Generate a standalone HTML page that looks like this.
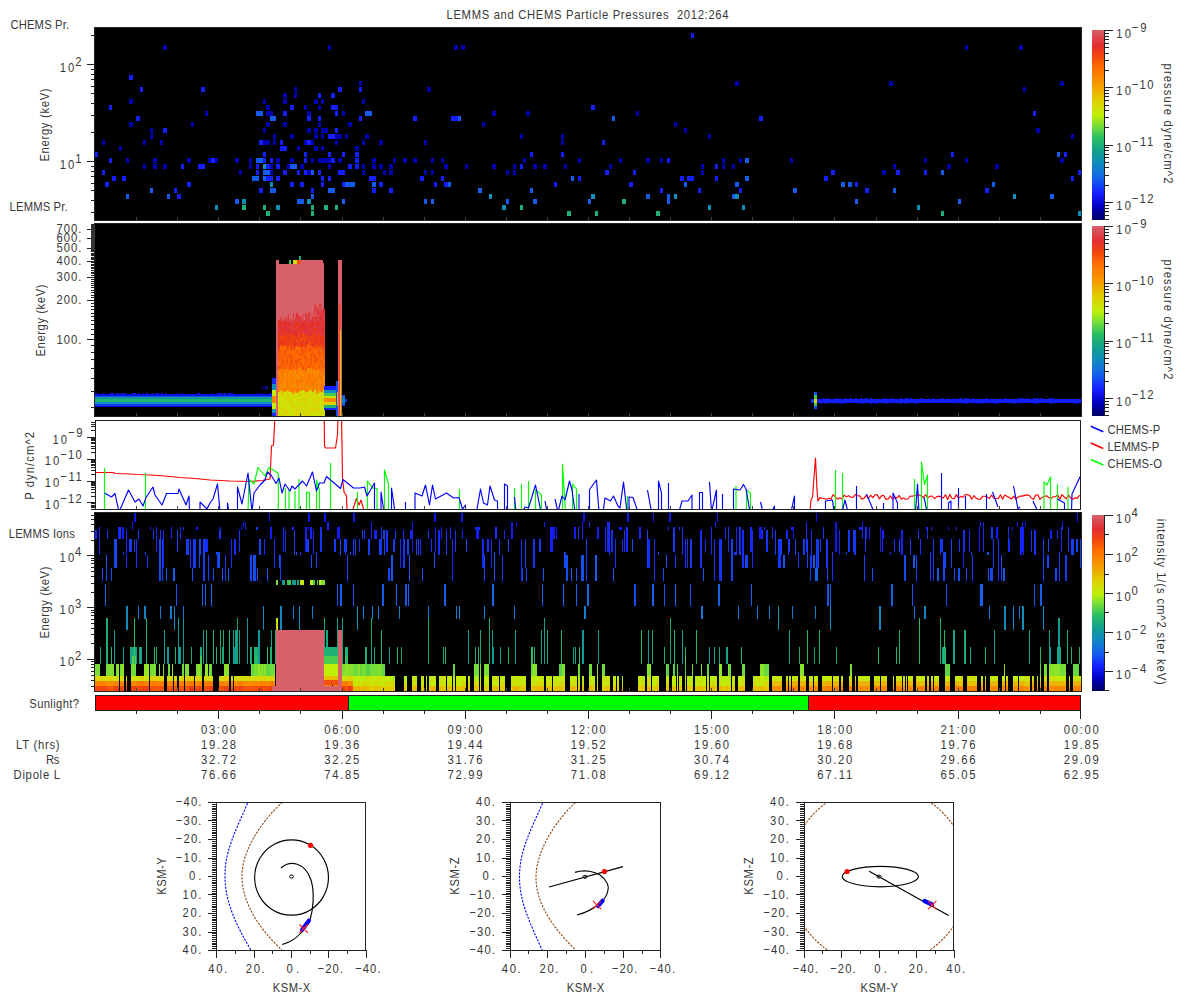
<!DOCTYPE html>
<html><head><meta charset="utf-8"><title>LEMMS and CHEMS Particle Pressures</title>
<style>html,body{margin:0;padding:0;background:#fff;width:1200px;height:1000px;overflow:hidden}
svg{display:block} text{font-family:"Liberation Sans", sans-serif;}</style></head>
<body><svg width="1200" height="1000" viewBox="0 0 1200 1000" shape-rendering="crispEdges" font-family="Liberation Sans, sans-serif"><defs><linearGradient id="cbar" x1="0" y1="0" x2="0" y2="1"><stop offset="0.000" stop-color="#d8606a"/><stop offset="0.080" stop-color="#e12d32"/><stop offset="0.130" stop-color="#f0410f"/><stop offset="0.200" stop-color="#ff6e00"/><stop offset="0.290" stop-color="#f59b00"/><stop offset="0.370" stop-color="#e1cd00"/><stop offset="0.450" stop-color="#bef00a"/><stop offset="0.510" stop-color="#6edc3c"/><stop offset="0.570" stop-color="#28be64"/><stop offset="0.640" stop-color="#10a08c"/><stop offset="0.700" stop-color="#108cbe"/><stop offset="0.780" stop-color="#1464eb"/><stop offset="0.860" stop-color="#141eff"/><stop offset="0.930" stop-color="#0000be"/><stop offset="1.000" stop-color="#000064"/></linearGradient><clipPath id="c3"><rect x="96" y="421" width="984" height="88"/></clipPath><clipPath id="o1"><rect x="217" y="803" width="148" height="147"/></clipPath><clipPath id="o2"><rect x="510.5" y="803" width="149.0" height="147"/></clipPath><clipPath id="o3"><rect x="804.5" y="803" width="148.5" height="147"/></clipPath></defs><text x="0" y="0" transform="translate(446.50,19.30) scale(0.88,1)" font-size="12.8" text-anchor="start" fill="#383838" textLength="320.45" lengthAdjust="spacing" >LEMMS and CHEMS Particle Pressures&#160;&#160;2012:264</text>
<text x="0" y="0" transform="translate(10.40,28.70) scale(0.88,1)" font-size="12.8" text-anchor="start" fill="#383838" textLength="66.82" lengthAdjust="spacing" >CHEMS Pr.</text>
<text x="0" y="0" transform="translate(9.60,210.80) scale(0.88,1)" font-size="12.8" text-anchor="start" fill="#383838" textLength="65.91" lengthAdjust="spacing" >LEMMS Pr.</text>
<rect x="95.00" y="28.00" width="986.00" height="192.00" fill="#000" />
<rect x="163.47" y="45.29" width="3.42" height="5.00" fill="#0000b1" />
<rect x="327.81" y="45.29" width="3.42" height="5.00" fill="#0000b1" />
<rect x="129.24" y="74.94" width="3.42" height="5.00" fill="#141eff" />
<rect x="139.51" y="86.80" width="3.42" height="5.00" fill="#141eff" />
<rect x="201.13" y="86.80" width="3.42" height="5.00" fill="#141eff" />
<rect x="293.57" y="86.80" width="3.42" height="5.00" fill="#0000b1" />
<rect x="338.08" y="86.80" width="3.42" height="5.00" fill="#141eff" />
<rect x="293.57" y="92.73" width="3.42" height="5.00" fill="#0000b1" />
<rect x="283.30" y="92.73" width="3.42" height="5.00" fill="#0000b1" />
<rect x="317.53" y="92.73" width="3.42" height="5.00" fill="#141eff" />
<rect x="331.23" y="92.73" width="3.42" height="5.00" fill="#141eff" />
<rect x="129.24" y="98.66" width="3.42" height="5.00" fill="#0000b1" />
<rect x="262.76" y="98.66" width="3.42" height="5.00" fill="#0000b1" />
<rect x="283.30" y="98.66" width="3.42" height="5.00" fill="#0000b1" />
<rect x="314.11" y="98.66" width="3.42" height="5.00" fill="#0000b1" />
<rect x="320.96" y="98.66" width="3.42" height="5.00" fill="#0000b1" />
<rect x="108.69" y="104.59" width="3.42" height="5.00" fill="#141eff" />
<rect x="266.18" y="104.59" width="3.42" height="5.00" fill="#0000b1" />
<rect x="290.15" y="104.59" width="3.42" height="5.00" fill="#141eff" />
<rect x="303.84" y="104.59" width="3.42" height="5.00" fill="#0000b1" />
<rect x="317.53" y="104.59" width="3.42" height="5.00" fill="#0000b1" />
<rect x="331.23" y="104.59" width="3.42" height="5.00" fill="#141eff" />
<rect x="334.65" y="104.59" width="3.42" height="5.00" fill="#141eff" />
<rect x="204.56" y="110.52" width="3.42" height="5.00" fill="#0000b1" />
<rect x="255.91" y="110.52" width="3.42" height="5.00" fill="#145bee" />
<rect x="259.33" y="110.52" width="3.42" height="5.00" fill="#145bee" />
<rect x="266.18" y="110.52" width="3.42" height="5.00" fill="#0000b1" />
<rect x="269.60" y="110.52" width="3.42" height="5.00" fill="#0000b1" />
<rect x="283.30" y="110.52" width="3.42" height="5.00" fill="#141eff" />
<rect x="307.26" y="110.52" width="3.42" height="5.00" fill="#0000b1" />
<rect x="334.65" y="110.52" width="3.42" height="5.00" fill="#141eff" />
<rect x="341.50" y="110.52" width="3.42" height="5.00" fill="#0000b1" />
<rect x="136.08" y="116.45" width="3.42" height="5.00" fill="#141eff" />
<rect x="269.60" y="116.45" width="3.42" height="5.00" fill="#145bee" />
<rect x="273.03" y="116.45" width="3.42" height="5.00" fill="#145bee" />
<rect x="307.26" y="116.45" width="3.42" height="5.00" fill="#141eff" />
<rect x="317.53" y="116.45" width="3.42" height="5.00" fill="#141eff" />
<rect x="129.24" y="122.38" width="3.42" height="5.00" fill="#0000b1" />
<rect x="190.86" y="122.38" width="3.42" height="5.00" fill="#0000b1" />
<rect x="266.18" y="122.38" width="3.42" height="5.00" fill="#0000b1" />
<rect x="283.30" y="122.38" width="3.42" height="5.00" fill="#0000b1" />
<rect x="317.53" y="122.38" width="3.42" height="5.00" fill="#0000b1" />
<rect x="149.78" y="128.31" width="3.42" height="5.00" fill="#0000b1" />
<rect x="163.47" y="128.31" width="3.42" height="5.00" fill="#141eff" />
<rect x="262.76" y="128.31" width="3.42" height="5.00" fill="#0000b1" />
<rect x="307.26" y="128.31" width="3.42" height="5.00" fill="#0000b1" />
<rect x="314.11" y="128.31" width="3.42" height="5.00" fill="#0000b1" />
<rect x="320.96" y="128.31" width="3.42" height="5.00" fill="#0000b1" />
<rect x="324.38" y="128.31" width="3.42" height="5.00" fill="#0000b1" />
<rect x="334.65" y="128.31" width="3.42" height="5.00" fill="#141eff" />
<rect x="149.78" y="134.24" width="3.42" height="5.00" fill="#0000b1" />
<rect x="273.03" y="134.24" width="3.42" height="5.00" fill="#0000b1" />
<rect x="290.15" y="134.24" width="3.42" height="5.00" fill="#0000b1" />
<rect x="314.11" y="134.24" width="3.42" height="5.00" fill="#0000b1" />
<rect x="320.96" y="134.24" width="3.42" height="5.00" fill="#0000b1" />
<rect x="327.81" y="134.24" width="3.42" height="5.00" fill="#141eff" />
<rect x="331.23" y="134.24" width="3.42" height="5.00" fill="#141eff" />
<rect x="334.65" y="134.24" width="3.42" height="5.00" fill="#0000b1" />
<rect x="338.08" y="134.24" width="3.42" height="5.00" fill="#0000b1" />
<rect x="101.85" y="140.17" width="3.42" height="5.00" fill="#0000b1" />
<rect x="142.93" y="140.17" width="3.42" height="5.00" fill="#0000b1" />
<rect x="160.05" y="140.17" width="3.42" height="5.00" fill="#0000b1" />
<rect x="259.33" y="140.17" width="3.42" height="5.00" fill="#141eff" />
<rect x="262.76" y="140.17" width="3.42" height="5.00" fill="#0000b1" />
<rect x="266.18" y="140.17" width="3.42" height="5.00" fill="#0000b1" />
<rect x="273.03" y="140.17" width="3.42" height="5.00" fill="#0000b1" />
<rect x="279.88" y="140.17" width="3.42" height="5.00" fill="#141eff" />
<rect x="303.84" y="140.17" width="3.42" height="5.00" fill="#0000b1" />
<rect x="307.26" y="140.17" width="3.42" height="5.00" fill="#141eff" />
<rect x="310.69" y="140.17" width="3.42" height="5.00" fill="#0000b1" />
<rect x="334.65" y="140.17" width="3.42" height="5.00" fill="#0000b1" />
<rect x="118.97" y="146.10" width="3.42" height="5.00" fill="#0000b1" />
<rect x="279.88" y="146.10" width="3.42" height="5.00" fill="#141eff" />
<rect x="283.30" y="146.10" width="3.42" height="5.00" fill="#141eff" />
<rect x="296.99" y="146.10" width="3.42" height="5.00" fill="#0000b1" />
<rect x="314.11" y="146.10" width="3.42" height="5.00" fill="#0000b1" />
<rect x="320.96" y="146.10" width="3.42" height="5.00" fill="#0000b1" />
<rect x="95.00" y="152.03" width="3.42" height="5.00" fill="#141eff" />
<rect x="262.76" y="152.03" width="3.42" height="5.00" fill="#141eff" />
<rect x="303.84" y="152.03" width="3.42" height="5.00" fill="#141eff" />
<rect x="327.81" y="152.03" width="3.42" height="5.00" fill="#141eff" />
<rect x="341.50" y="152.03" width="3.42" height="5.00" fill="#141eff" />
<rect x="108.69" y="157.96" width="3.42" height="5.00" fill="#141eff" />
<rect x="125.81" y="157.96" width="3.42" height="5.00" fill="#0000b1" />
<rect x="153.20" y="157.96" width="3.42" height="5.00" fill="#0000b1" />
<rect x="187.44" y="157.96" width="3.42" height="5.00" fill="#0000b1" />
<rect x="207.98" y="157.96" width="3.42" height="5.00" fill="#0000b1" />
<rect x="211.40" y="157.96" width="3.42" height="5.00" fill="#141eff" />
<rect x="214.83" y="157.96" width="3.42" height="5.00" fill="#0000b1" />
<rect x="235.37" y="157.96" width="3.42" height="5.00" fill="#0000b1" />
<rect x="249.06" y="157.96" width="3.42" height="5.00" fill="#0000b1" />
<rect x="255.91" y="157.96" width="3.42" height="5.00" fill="#145bee" />
<rect x="259.33" y="157.96" width="3.42" height="5.00" fill="#145bee" />
<rect x="262.76" y="157.96" width="3.42" height="5.00" fill="#141eff" />
<rect x="269.60" y="157.96" width="3.42" height="5.00" fill="#141eff" />
<rect x="276.45" y="157.96" width="3.42" height="5.00" fill="#0000b1" />
<rect x="290.15" y="157.96" width="3.42" height="5.00" fill="#0000b1" />
<rect x="303.84" y="157.96" width="3.42" height="5.00" fill="#141eff" />
<rect x="310.69" y="157.96" width="3.42" height="5.00" fill="#0000b1" />
<rect x="317.53" y="157.96" width="3.42" height="5.00" fill="#0000b1" />
<rect x="320.96" y="157.96" width="3.42" height="5.00" fill="#0000b1" />
<rect x="324.38" y="157.96" width="3.42" height="5.00" fill="#0000b1" />
<rect x="327.81" y="157.96" width="3.42" height="5.00" fill="#0000b1" />
<rect x="331.23" y="157.96" width="3.42" height="5.00" fill="#141eff" />
<rect x="338.08" y="157.96" width="3.42" height="5.00" fill="#0000b1" />
<rect x="142.93" y="163.89" width="3.42" height="5.00" fill="#0000b1" />
<rect x="153.20" y="163.89" width="3.42" height="5.00" fill="#0000b1" />
<rect x="163.47" y="163.89" width="3.42" height="5.00" fill="#0000b1" />
<rect x="180.59" y="163.89" width="3.42" height="5.00" fill="#141eff" />
<rect x="197.71" y="163.89" width="3.42" height="5.00" fill="#141eff" />
<rect x="201.13" y="163.89" width="3.42" height="5.00" fill="#141eff" />
<rect x="249.06" y="163.89" width="3.42" height="5.00" fill="#0000b1" />
<rect x="255.91" y="163.89" width="3.42" height="5.00" fill="#141eff" />
<rect x="262.76" y="163.89" width="3.42" height="5.00" fill="#108fb6" />
<rect x="266.18" y="163.89" width="3.42" height="5.00" fill="#141eff" />
<rect x="269.60" y="163.89" width="3.42" height="5.00" fill="#0000b1" />
<rect x="276.45" y="163.89" width="3.42" height="5.00" fill="#141eff" />
<rect x="286.72" y="163.89" width="3.42" height="5.00" fill="#0000b1" />
<rect x="290.15" y="163.89" width="3.42" height="5.00" fill="#145bee" />
<rect x="293.57" y="163.89" width="3.42" height="5.00" fill="#145bee" />
<rect x="300.42" y="163.89" width="3.42" height="5.00" fill="#0000b1" />
<rect x="327.81" y="163.89" width="3.42" height="5.00" fill="#0000b1" />
<rect x="101.85" y="169.82" width="3.42" height="5.00" fill="#141eff" />
<rect x="238.79" y="169.82" width="3.42" height="5.00" fill="#0000b1" />
<rect x="255.91" y="169.82" width="3.42" height="5.00" fill="#141eff" />
<rect x="262.76" y="169.82" width="3.42" height="5.00" fill="#145bee" />
<rect x="266.18" y="169.82" width="3.42" height="5.00" fill="#145bee" />
<rect x="269.60" y="169.82" width="3.42" height="5.00" fill="#0000b1" />
<rect x="283.30" y="169.82" width="3.42" height="5.00" fill="#141eff" />
<rect x="296.99" y="169.82" width="3.42" height="5.00" fill="#141eff" />
<rect x="303.84" y="169.82" width="3.42" height="5.00" fill="#141eff" />
<rect x="307.26" y="169.82" width="3.42" height="5.00" fill="#0000b1" />
<rect x="310.69" y="169.82" width="3.42" height="5.00" fill="#145bee" />
<rect x="317.53" y="169.82" width="3.42" height="5.00" fill="#141eff" />
<rect x="338.08" y="169.82" width="3.42" height="5.00" fill="#141eff" />
<rect x="341.50" y="169.82" width="3.42" height="5.00" fill="#141eff" />
<rect x="112.12" y="175.75" width="3.42" height="5.00" fill="#141eff" />
<rect x="122.39" y="175.75" width="3.42" height="5.00" fill="#141eff" />
<rect x="252.49" y="175.75" width="3.42" height="5.00" fill="#145bee" />
<rect x="255.91" y="175.75" width="3.42" height="5.00" fill="#145bee" />
<rect x="262.76" y="175.75" width="3.42" height="5.00" fill="#145bee" />
<rect x="266.18" y="175.75" width="3.42" height="5.00" fill="#141eff" />
<rect x="269.60" y="175.75" width="3.42" height="5.00" fill="#141eff" />
<rect x="276.45" y="175.75" width="3.42" height="5.00" fill="#141eff" />
<rect x="320.96" y="175.75" width="3.42" height="5.00" fill="#141eff" />
<rect x="327.81" y="175.75" width="3.42" height="5.00" fill="#141eff" />
<rect x="105.27" y="181.68" width="3.42" height="5.00" fill="#141eff" />
<rect x="187.44" y="181.68" width="3.42" height="5.00" fill="#141eff" />
<rect x="269.60" y="181.68" width="3.42" height="5.00" fill="#108fb6" />
<rect x="290.15" y="181.68" width="3.42" height="5.00" fill="#141eff" />
<rect x="300.42" y="181.68" width="3.42" height="5.00" fill="#141eff" />
<rect x="320.96" y="181.68" width="3.42" height="5.00" fill="#141eff" />
<rect x="341.50" y="181.68" width="3.42" height="5.00" fill="#141eff" />
<rect x="149.78" y="187.61" width="3.42" height="5.00" fill="#145bee" />
<rect x="173.74" y="187.61" width="3.42" height="5.00" fill="#141eff" />
<rect x="259.33" y="187.61" width="3.42" height="5.00" fill="#141eff" />
<rect x="269.60" y="187.61" width="3.42" height="5.00" fill="#145bee" />
<rect x="273.03" y="187.61" width="3.42" height="5.00" fill="#145bee" />
<rect x="310.69" y="187.61" width="3.42" height="5.00" fill="#141eff" />
<rect x="327.81" y="187.61" width="3.42" height="5.00" fill="#145bee" />
<rect x="331.23" y="187.61" width="3.42" height="5.00" fill="#145bee" />
<rect x="125.81" y="193.54" width="3.42" height="5.00" fill="#145bee" />
<rect x="166.90" y="193.54" width="3.42" height="5.00" fill="#145bee" />
<rect x="177.17" y="193.54" width="3.42" height="5.00" fill="#141eff" />
<rect x="310.69" y="193.54" width="3.42" height="5.00" fill="#145bee" />
<rect x="235.37" y="199.47" width="3.42" height="5.00" fill="#145bee" />
<rect x="242.22" y="199.47" width="3.42" height="5.00" fill="#108fb6" />
<rect x="296.99" y="199.47" width="3.42" height="5.00" fill="#145bee" />
<rect x="300.42" y="199.47" width="3.42" height="5.00" fill="#145bee" />
<rect x="307.26" y="199.47" width="3.42" height="5.00" fill="#108fb6" />
<rect x="341.50" y="199.47" width="3.42" height="5.00" fill="#145bee" />
<rect x="214.83" y="205.40" width="3.42" height="5.00" fill="#108fb6" />
<rect x="242.22" y="205.40" width="3.42" height="5.00" fill="#1eb175" />
<rect x="262.76" y="205.40" width="3.42" height="5.00" fill="#1eb175" />
<rect x="276.45" y="205.40" width="3.42" height="5.00" fill="#108fb6" />
<rect x="310.69" y="205.40" width="3.42" height="5.00" fill="#1eb175" />
<rect x="324.38" y="205.40" width="3.42" height="5.00" fill="#1eb175" />
<rect x="334.65" y="205.40" width="3.42" height="5.00" fill="#1eb175" />
<rect x="266.18" y="211.33" width="3.42" height="5.00" fill="#1eb175" />
<rect x="310.69" y="211.33" width="3.42" height="5.00" fill="#1eb175" />
<rect x="454.48" y="45.29" width="3.42" height="5.00" fill="#0000b1" />
<rect x="461.33" y="45.29" width="3.42" height="5.00" fill="#0000b1" />
<rect x="358.62" y="80.87" width="3.42" height="5.00" fill="#0000b1" />
<rect x="358.62" y="86.80" width="3.42" height="5.00" fill="#141eff" />
<rect x="427.09" y="86.80" width="3.42" height="5.00" fill="#0000b1" />
<rect x="362.04" y="98.66" width="3.42" height="5.00" fill="#0000b1" />
<rect x="591.42" y="104.59" width="3.42" height="5.00" fill="#141eff" />
<rect x="365.47" y="110.52" width="3.42" height="5.00" fill="#145bee" />
<rect x="368.89" y="110.52" width="3.42" height="5.00" fill="#145bee" />
<rect x="492.14" y="110.52" width="3.42" height="5.00" fill="#0000b1" />
<rect x="526.38" y="110.52" width="3.42" height="5.00" fill="#0000b1" />
<rect x="358.62" y="116.45" width="3.42" height="5.00" fill="#141eff" />
<rect x="413.40" y="116.45" width="3.42" height="5.00" fill="#141eff" />
<rect x="451.06" y="116.45" width="3.42" height="5.00" fill="#141eff" />
<rect x="454.48" y="116.45" width="3.42" height="5.00" fill="#141eff" />
<rect x="457.90" y="116.45" width="3.42" height="5.00" fill="#145bee" />
<rect x="348.35" y="122.38" width="3.42" height="5.00" fill="#0000b1" />
<rect x="481.87" y="122.38" width="3.42" height="5.00" fill="#0000b1" />
<rect x="344.92" y="134.24" width="3.42" height="5.00" fill="#0000b1" />
<rect x="365.47" y="134.24" width="3.42" height="5.00" fill="#0000b1" />
<rect x="519.53" y="134.24" width="3.42" height="5.00" fill="#0000b1" />
<rect x="560.61" y="134.24" width="3.42" height="5.00" fill="#0000b1" />
<rect x="362.04" y="140.17" width="3.42" height="5.00" fill="#0000b1" />
<rect x="379.16" y="140.17" width="3.42" height="5.00" fill="#0000b1" />
<rect x="423.67" y="140.17" width="3.42" height="5.00" fill="#0000b1" />
<rect x="560.61" y="140.17" width="3.42" height="5.00" fill="#0000b1" />
<rect x="355.19" y="146.10" width="3.42" height="5.00" fill="#0000b1" />
<rect x="355.19" y="152.03" width="3.42" height="5.00" fill="#141eff" />
<rect x="529.80" y="152.03" width="3.42" height="5.00" fill="#141eff" />
<rect x="560.61" y="152.03" width="3.42" height="5.00" fill="#141eff" />
<rect x="355.19" y="157.96" width="3.42" height="5.00" fill="#141eff" />
<rect x="372.31" y="157.96" width="3.42" height="5.00" fill="#0000b1" />
<rect x="392.85" y="157.96" width="3.42" height="5.00" fill="#0000b1" />
<rect x="403.12" y="157.96" width="3.42" height="5.00" fill="#0000b1" />
<rect x="413.40" y="157.96" width="3.42" height="5.00" fill="#0000b1" />
<rect x="430.51" y="157.96" width="3.42" height="5.00" fill="#0000b1" />
<rect x="440.78" y="157.96" width="3.42" height="5.00" fill="#0000b1" />
<rect x="522.95" y="157.96" width="3.42" height="5.00" fill="#0000b1" />
<rect x="577.73" y="157.96" width="3.42" height="5.00" fill="#0000b1" />
<rect x="348.35" y="163.89" width="3.42" height="5.00" fill="#141eff" />
<rect x="355.19" y="163.89" width="3.42" height="5.00" fill="#141eff" />
<rect x="362.04" y="163.89" width="3.42" height="5.00" fill="#0000b1" />
<rect x="372.31" y="163.89" width="3.42" height="5.00" fill="#0000b1" />
<rect x="379.16" y="163.89" width="3.42" height="5.00" fill="#0000b1" />
<rect x="389.43" y="163.89" width="3.42" height="5.00" fill="#0000b1" />
<rect x="444.21" y="163.89" width="3.42" height="5.00" fill="#0000b1" />
<rect x="464.75" y="163.89" width="3.42" height="5.00" fill="#0000b1" />
<rect x="492.14" y="163.89" width="3.42" height="5.00" fill="#0000b1" />
<rect x="512.68" y="163.89" width="3.42" height="5.00" fill="#0000b1" />
<rect x="519.53" y="163.89" width="3.42" height="5.00" fill="#141eff" />
<rect x="533.22" y="163.89" width="3.42" height="5.00" fill="#0000b1" />
<rect x="543.49" y="163.89" width="3.42" height="5.00" fill="#0000b1" />
<rect x="564.03" y="163.89" width="3.42" height="5.00" fill="#0000b1" />
<rect x="362.04" y="169.82" width="3.42" height="5.00" fill="#0000b1" />
<rect x="382.58" y="169.82" width="3.42" height="5.00" fill="#0000b1" />
<rect x="389.43" y="169.82" width="3.42" height="5.00" fill="#0000b1" />
<rect x="423.67" y="169.82" width="3.42" height="5.00" fill="#0000b1" />
<rect x="430.51" y="169.82" width="3.42" height="5.00" fill="#0000b1" />
<rect x="505.83" y="169.82" width="3.42" height="5.00" fill="#0000b1" />
<rect x="512.68" y="169.82" width="3.42" height="5.00" fill="#0000b1" />
<rect x="368.89" y="175.75" width="3.42" height="5.00" fill="#141eff" />
<rect x="372.31" y="175.75" width="3.42" height="5.00" fill="#141eff" />
<rect x="420.24" y="175.75" width="3.42" height="5.00" fill="#141eff" />
<rect x="440.78" y="175.75" width="3.42" height="5.00" fill="#141eff" />
<rect x="570.88" y="175.75" width="3.42" height="5.00" fill="#145bee" />
<rect x="577.73" y="175.75" width="3.42" height="5.00" fill="#141eff" />
<rect x="344.92" y="181.68" width="3.42" height="5.00" fill="#145bee" />
<rect x="348.35" y="181.68" width="3.42" height="5.00" fill="#145bee" />
<rect x="351.77" y="181.68" width="3.42" height="5.00" fill="#145bee" />
<rect x="372.31" y="181.68" width="3.42" height="5.00" fill="#145bee" />
<rect x="379.16" y="181.68" width="3.42" height="5.00" fill="#141eff" />
<rect x="433.94" y="181.68" width="3.42" height="5.00" fill="#141eff" />
<rect x="444.21" y="181.68" width="3.42" height="5.00" fill="#141eff" />
<rect x="447.63" y="181.68" width="3.42" height="5.00" fill="#145bee" />
<rect x="553.76" y="181.68" width="3.42" height="5.00" fill="#141eff" />
<rect x="372.31" y="187.61" width="3.42" height="5.00" fill="#141eff" />
<rect x="389.43" y="187.61" width="3.42" height="5.00" fill="#141eff" />
<rect x="478.44" y="187.61" width="3.42" height="5.00" fill="#145bee" />
<rect x="529.80" y="187.61" width="3.42" height="5.00" fill="#145bee" />
<rect x="488.72" y="193.54" width="3.42" height="5.00" fill="#108fb6" />
<rect x="591.42" y="193.54" width="3.42" height="5.00" fill="#108fb6" />
<rect x="423.67" y="199.47" width="3.42" height="5.00" fill="#145bee" />
<rect x="430.51" y="199.47" width="3.42" height="5.00" fill="#145bee" />
<rect x="505.83" y="199.47" width="3.42" height="5.00" fill="#145bee" />
<rect x="533.22" y="199.47" width="3.42" height="5.00" fill="#145bee" />
<rect x="588.00" y="199.47" width="3.42" height="5.00" fill="#145bee" />
<rect x="502.41" y="205.40" width="3.42" height="5.00" fill="#108fb6" />
<rect x="519.53" y="205.40" width="3.42" height="5.00" fill="#1eb175" />
<rect x="567.46" y="211.33" width="3.42" height="5.00" fill="#1eb175" />
<rect x="690.71" y="33.43" width="3.42" height="5.00" fill="#141eff" />
<rect x="735.22" y="80.87" width="3.42" height="5.00" fill="#0000b1" />
<rect x="635.93" y="110.52" width="3.42" height="5.00" fill="#0000b1" />
<rect x="611.97" y="116.45" width="3.42" height="5.00" fill="#145bee" />
<rect x="759.18" y="116.45" width="3.42" height="5.00" fill="#141eff" />
<rect x="673.59" y="122.38" width="3.42" height="5.00" fill="#0000b1" />
<rect x="683.86" y="128.31" width="3.42" height="5.00" fill="#0000b1" />
<rect x="707.83" y="134.24" width="3.42" height="5.00" fill="#0000b1" />
<rect x="601.69" y="140.17" width="3.42" height="5.00" fill="#141eff" />
<rect x="618.81" y="157.96" width="3.42" height="5.00" fill="#0000b1" />
<rect x="646.20" y="157.96" width="3.42" height="5.00" fill="#0000b1" />
<rect x="659.90" y="157.96" width="3.42" height="5.00" fill="#0000b1" />
<rect x="666.74" y="157.96" width="3.42" height="5.00" fill="#141eff" />
<rect x="721.52" y="157.96" width="3.42" height="5.00" fill="#0000b1" />
<rect x="738.64" y="157.96" width="3.42" height="5.00" fill="#0000b1" />
<rect x="745.49" y="157.96" width="3.42" height="5.00" fill="#145bee" />
<rect x="789.99" y="157.96" width="3.42" height="5.00" fill="#0000b1" />
<rect x="608.54" y="163.89" width="3.42" height="5.00" fill="#0000b1" />
<rect x="700.98" y="163.89" width="3.42" height="5.00" fill="#0000b1" />
<rect x="714.67" y="163.89" width="3.42" height="5.00" fill="#141eff" />
<rect x="721.52" y="163.89" width="3.42" height="5.00" fill="#0000b1" />
<rect x="731.79" y="163.89" width="3.42" height="5.00" fill="#0000b1" />
<rect x="605.12" y="169.82" width="3.42" height="5.00" fill="#141eff" />
<rect x="632.51" y="169.82" width="3.42" height="5.00" fill="#141eff" />
<rect x="700.98" y="169.82" width="3.42" height="5.00" fill="#0000b1" />
<rect x="831.08" y="169.82" width="3.42" height="5.00" fill="#141eff" />
<rect x="680.44" y="175.75" width="3.42" height="5.00" fill="#141eff" />
<rect x="687.28" y="175.75" width="3.42" height="5.00" fill="#141eff" />
<rect x="690.71" y="175.75" width="3.42" height="5.00" fill="#141eff" />
<rect x="714.67" y="175.75" width="3.42" height="5.00" fill="#141eff" />
<rect x="745.49" y="175.75" width="3.42" height="5.00" fill="#145bee" />
<rect x="824.23" y="175.75" width="3.42" height="5.00" fill="#141eff" />
<rect x="629.08" y="181.68" width="3.42" height="5.00" fill="#141eff" />
<rect x="683.86" y="181.68" width="3.42" height="5.00" fill="#145bee" />
<rect x="735.22" y="181.68" width="3.42" height="5.00" fill="#145bee" />
<rect x="841.35" y="181.68" width="3.42" height="5.00" fill="#145bee" />
<rect x="659.90" y="187.61" width="3.42" height="5.00" fill="#141eff" />
<rect x="697.56" y="187.61" width="3.42" height="5.00" fill="#141eff" />
<rect x="738.64" y="187.61" width="3.42" height="5.00" fill="#141eff" />
<rect x="793.42" y="187.61" width="3.42" height="5.00" fill="#145bee" />
<rect x="646.20" y="193.54" width="3.42" height="5.00" fill="#145bee" />
<rect x="666.74" y="193.54" width="3.42" height="5.00" fill="#145bee" />
<rect x="673.59" y="193.54" width="3.42" height="5.00" fill="#108fb6" />
<rect x="731.79" y="193.54" width="3.42" height="5.00" fill="#145bee" />
<rect x="735.22" y="193.54" width="3.42" height="5.00" fill="#108fb6" />
<rect x="622.24" y="199.47" width="3.42" height="5.00" fill="#1eb175" />
<rect x="666.74" y="199.47" width="3.42" height="5.00" fill="#145bee" />
<rect x="707.83" y="205.40" width="3.42" height="5.00" fill="#108fb6" />
<rect x="742.06" y="205.40" width="3.42" height="5.00" fill="#108fb6" />
<rect x="594.85" y="211.33" width="3.42" height="5.00" fill="#1eb175" />
<rect x="656.47" y="211.33" width="3.42" height="5.00" fill="#1eb175" />
<rect x="964.60" y="45.29" width="3.42" height="5.00" fill="#0000b1" />
<rect x="1019.38" y="45.29" width="3.42" height="5.00" fill="#0000b1" />
<rect x="889.28" y="80.87" width="3.42" height="5.00" fill="#0000b1" />
<rect x="1060.46" y="80.87" width="3.42" height="5.00" fill="#0000b1" />
<rect x="1022.80" y="86.80" width="3.42" height="5.00" fill="#0000b1" />
<rect x="1033.07" y="110.52" width="3.42" height="5.00" fill="#141eff" />
<rect x="1036.49" y="128.31" width="3.42" height="5.00" fill="#0000b1" />
<rect x="1070.73" y="134.24" width="3.42" height="5.00" fill="#0000b1" />
<rect x="950.90" y="152.03" width="3.42" height="5.00" fill="#141eff" />
<rect x="1057.03" y="152.03" width="3.42" height="5.00" fill="#145bee" />
<rect x="1063.88" y="152.03" width="3.42" height="5.00" fill="#141eff" />
<rect x="923.51" y="157.96" width="3.42" height="5.00" fill="#0000b1" />
<rect x="964.60" y="157.96" width="3.42" height="5.00" fill="#0000b1" />
<rect x="1060.46" y="157.96" width="3.42" height="5.00" fill="#0000b1" />
<rect x="892.70" y="163.89" width="3.42" height="5.00" fill="#0000b1" />
<rect x="947.48" y="163.89" width="3.42" height="5.00" fill="#0000b1" />
<rect x="995.41" y="163.89" width="3.42" height="5.00" fill="#0000b1" />
<rect x="882.43" y="169.82" width="3.42" height="5.00" fill="#0000b1" />
<rect x="896.12" y="169.82" width="3.42" height="5.00" fill="#141eff" />
<rect x="923.51" y="169.82" width="3.42" height="5.00" fill="#141eff" />
<rect x="940.63" y="169.82" width="3.42" height="5.00" fill="#145bee" />
<rect x="1077.58" y="169.82" width="3.42" height="5.00" fill="#141eff" />
<rect x="1070.73" y="175.75" width="3.42" height="5.00" fill="#141eff" />
<rect x="848.19" y="181.68" width="3.42" height="5.00" fill="#145bee" />
<rect x="855.04" y="181.68" width="3.42" height="5.00" fill="#141eff" />
<rect x="991.99" y="181.68" width="3.42" height="5.00" fill="#145bee" />
<rect x="865.31" y="187.61" width="3.42" height="5.00" fill="#141eff" />
<rect x="892.70" y="187.61" width="3.42" height="5.00" fill="#145bee" />
<rect x="985.14" y="187.61" width="3.42" height="5.00" fill="#141eff" />
<rect x="1012.53" y="193.54" width="3.42" height="5.00" fill="#108fb6" />
<rect x="1050.19" y="193.54" width="3.42" height="5.00" fill="#145bee" />
<rect x="855.04" y="199.47" width="3.42" height="5.00" fill="#145bee" />
<rect x="957.75" y="199.47" width="3.42" height="5.00" fill="#145bee" />
<rect x="916.67" y="205.40" width="3.42" height="5.00" fill="#108fb6" />
<rect x="940.63" y="211.33" width="3.42" height="5.00" fill="#1eb175" />
<rect x="1077.58" y="211.33" width="3.42" height="5.00" fill="#108fb6" />
<rect x="94.5" y="27.5" width="987" height="193" fill="none" stroke="#222" stroke-width="1"/>
<line x1="136.5" y1="217" x2="136.5" y2="220" stroke="#444" stroke-width="1"/>
<line x1="177.5" y1="217" x2="177.5" y2="220" stroke="#444" stroke-width="1"/>
<line x1="218.5" y1="217" x2="218.5" y2="220" stroke="#444" stroke-width="1"/>
<line x1="259.5" y1="217" x2="259.5" y2="220" stroke="#444" stroke-width="1"/>
<line x1="300.5" y1="217" x2="300.5" y2="220" stroke="#444" stroke-width="1"/>
<line x1="342.5" y1="217" x2="342.5" y2="220" stroke="#444" stroke-width="1"/>
<line x1="383.5" y1="217" x2="383.5" y2="220" stroke="#444" stroke-width="1"/>
<line x1="424.5" y1="217" x2="424.5" y2="220" stroke="#444" stroke-width="1"/>
<line x1="465.5" y1="217" x2="465.5" y2="220" stroke="#444" stroke-width="1"/>
<line x1="506.5" y1="217" x2="506.5" y2="220" stroke="#444" stroke-width="1"/>
<line x1="547.5" y1="217" x2="547.5" y2="220" stroke="#444" stroke-width="1"/>
<line x1="588.5" y1="217" x2="588.5" y2="220" stroke="#444" stroke-width="1"/>
<line x1="629.5" y1="217" x2="629.5" y2="220" stroke="#444" stroke-width="1"/>
<line x1="670.5" y1="217" x2="670.5" y2="220" stroke="#444" stroke-width="1"/>
<line x1="711.5" y1="217" x2="711.5" y2="220" stroke="#444" stroke-width="1"/>
<line x1="752.5" y1="217" x2="752.5" y2="220" stroke="#444" stroke-width="1"/>
<line x1="793.5" y1="217" x2="793.5" y2="220" stroke="#444" stroke-width="1"/>
<line x1="834.5" y1="217" x2="834.5" y2="220" stroke="#444" stroke-width="1"/>
<line x1="876.5" y1="217" x2="876.5" y2="220" stroke="#444" stroke-width="1"/>
<line x1="917.5" y1="217" x2="917.5" y2="220" stroke="#444" stroke-width="1"/>
<line x1="958.5" y1="217" x2="958.5" y2="220" stroke="#444" stroke-width="1"/>
<line x1="999.5" y1="217" x2="999.5" y2="220" stroke="#444" stroke-width="1"/>
<line x1="1040.5" y1="217" x2="1040.5" y2="220" stroke="#444" stroke-width="1"/>
<line x1="91" y1="212.50" x2="95" y2="212.50" stroke="#222" stroke-width="1"/>
<line x1="91" y1="200.50" x2="95" y2="200.50" stroke="#222" stroke-width="1"/>
<line x1="91" y1="190.50" x2="95" y2="190.50" stroke="#222" stroke-width="1"/>
<line x1="91" y1="183.50" x2="95" y2="183.50" stroke="#222" stroke-width="1"/>
<line x1="91" y1="176.50" x2="95" y2="176.50" stroke="#222" stroke-width="1"/>
<line x1="91" y1="171.50" x2="95" y2="171.50" stroke="#222" stroke-width="1"/>
<line x1="91" y1="166.50" x2="95" y2="166.50" stroke="#222" stroke-width="1"/>
<line x1="87" y1="161.50" x2="95" y2="161.50" stroke="#222" stroke-width="1"/>
<line x1="91" y1="132.50" x2="95" y2="132.50" stroke="#222" stroke-width="1"/>
<line x1="91" y1="115.50" x2="95" y2="115.50" stroke="#222" stroke-width="1"/>
<line x1="91" y1="103.50" x2="95" y2="103.50" stroke="#222" stroke-width="1"/>
<line x1="91" y1="93.50" x2="95" y2="93.50" stroke="#222" stroke-width="1"/>
<line x1="91" y1="86.50" x2="95" y2="86.50" stroke="#222" stroke-width="1"/>
<line x1="91" y1="79.50" x2="95" y2="79.50" stroke="#222" stroke-width="1"/>
<line x1="91" y1="74.50" x2="95" y2="74.50" stroke="#222" stroke-width="1"/>
<line x1="91" y1="69.50" x2="95" y2="69.50" stroke="#222" stroke-width="1"/>
<line x1="87" y1="64.50" x2="95" y2="64.50" stroke="#222" stroke-width="1"/>
<line x1="91" y1="35.50" x2="95" y2="35.50" stroke="#222" stroke-width="1"/>
<text x="0" y="0" transform="translate(59.70,71.90) scale(0.88,1)" font-size="12.8" text-anchor="start" fill="#383838" textLength="16.59" lengthAdjust="spacing" >10</text>
<text x="0" y="0" transform="translate(75.20,65.80) scale(0.88,1)" font-size="12.8" text-anchor="start" fill="#383838" textLength="7.95" lengthAdjust="spacing" >2</text>
<text x="0" y="0" transform="translate(59.70,168.80) scale(0.88,1)" font-size="12.8" text-anchor="start" fill="#383838" textLength="16.59" lengthAdjust="spacing" >10</text>
<text x="0" y="0" transform="translate(75.20,162.70) scale(0.88,1)" font-size="12.8" text-anchor="start" fill="#383838" textLength="7.95" lengthAdjust="spacing" >1</text>
<text x="0" y="0" font-size="12.8" text-anchor="middle" fill="#383838" transform="translate(48.90,125.00) rotate(-90) scale(0.88,1)" textLength="83.18" lengthAdjust="spacing">Energy (keV)</text>
<rect x="1092.00" y="30.00" width="12.00" height="190.00" fill="url(#cbar)" />
<line x1="1104.5" y1="30" x2="1104.5" y2="220" stroke="#222" stroke-width="1"/>
<line x1="1104" y1="30.50" x2="1112.5" y2="30.50" stroke="#222" stroke-width="1"/>
<line x1="1104" y1="87.50" x2="1112.5" y2="87.50" stroke="#222" stroke-width="1"/>
<line x1="1104" y1="70.50" x2="1108.5" y2="70.50" stroke="#222" stroke-width="1"/>
<line x1="1104" y1="60.50" x2="1108.5" y2="60.50" stroke="#222" stroke-width="1"/>
<line x1="1104" y1="53.50" x2="1108.5" y2="53.50" stroke="#222" stroke-width="1"/>
<line x1="1104" y1="47.50" x2="1108.5" y2="47.50" stroke="#222" stroke-width="1"/>
<line x1="1104" y1="43.50" x2="1108.5" y2="43.50" stroke="#222" stroke-width="1"/>
<line x1="1104" y1="39.50" x2="1108.5" y2="39.50" stroke="#222" stroke-width="1"/>
<line x1="1104" y1="36.50" x2="1108.5" y2="36.50" stroke="#222" stroke-width="1"/>
<line x1="1104" y1="33.50" x2="1108.5" y2="33.50" stroke="#222" stroke-width="1"/>
<line x1="1104" y1="145.50" x2="1112.5" y2="145.50" stroke="#222" stroke-width="1"/>
<line x1="1104" y1="127.50" x2="1108.5" y2="127.50" stroke="#222" stroke-width="1"/>
<line x1="1104" y1="117.50" x2="1108.5" y2="117.50" stroke="#222" stroke-width="1"/>
<line x1="1104" y1="110.50" x2="1108.5" y2="110.50" stroke="#222" stroke-width="1"/>
<line x1="1104" y1="105.50" x2="1108.5" y2="105.50" stroke="#222" stroke-width="1"/>
<line x1="1104" y1="100.50" x2="1108.5" y2="100.50" stroke="#222" stroke-width="1"/>
<line x1="1104" y1="96.50" x2="1108.5" y2="96.50" stroke="#222" stroke-width="1"/>
<line x1="1104" y1="93.50" x2="1108.5" y2="93.50" stroke="#222" stroke-width="1"/>
<line x1="1104" y1="90.50" x2="1108.5" y2="90.50" stroke="#222" stroke-width="1"/>
<line x1="1104" y1="202.50" x2="1112.5" y2="202.50" stroke="#222" stroke-width="1"/>
<line x1="1104" y1="185.50" x2="1108.5" y2="185.50" stroke="#222" stroke-width="1"/>
<line x1="1104" y1="175.50" x2="1108.5" y2="175.50" stroke="#222" stroke-width="1"/>
<line x1="1104" y1="167.50" x2="1108.5" y2="167.50" stroke="#222" stroke-width="1"/>
<line x1="1104" y1="162.50" x2="1108.5" y2="162.50" stroke="#222" stroke-width="1"/>
<line x1="1104" y1="157.50" x2="1108.5" y2="157.50" stroke="#222" stroke-width="1"/>
<line x1="1104" y1="154.50" x2="1108.5" y2="154.50" stroke="#222" stroke-width="1"/>
<line x1="1104" y1="150.50" x2="1108.5" y2="150.50" stroke="#222" stroke-width="1"/>
<line x1="1104" y1="147.50" x2="1108.5" y2="147.50" stroke="#222" stroke-width="1"/>
<line x1="1104" y1="219.50" x2="1108.5" y2="219.50" stroke="#222" stroke-width="1"/>
<line x1="1104" y1="215.50" x2="1108.5" y2="215.50" stroke="#222" stroke-width="1"/>
<line x1="1104" y1="211.50" x2="1108.5" y2="211.50" stroke="#222" stroke-width="1"/>
<line x1="1104" y1="208.50" x2="1108.5" y2="208.50" stroke="#222" stroke-width="1"/>
<line x1="1104" y1="205.50" x2="1108.5" y2="205.50" stroke="#222" stroke-width="1"/>
<text x="0" y="0" transform="translate(1116.30,37.60) scale(0.88,1)" font-size="12.8" text-anchor="start" fill="#383838" textLength="16.59" lengthAdjust="spacing" >10</text>
<text x="0" y="0" transform="translate(1131.80,31.50) scale(0.88,1)" font-size="12.8" text-anchor="start" fill="#383838" textLength="16.59" lengthAdjust="spacing" >&#8722;9</text>
<text x="0" y="0" transform="translate(1116.30,94.93) scale(0.88,1)" font-size="12.8" text-anchor="start" fill="#383838" textLength="16.59" lengthAdjust="spacing" >10</text>
<text x="0" y="0" transform="translate(1131.80,88.83) scale(0.88,1)" font-size="12.8" text-anchor="start" fill="#383838" textLength="24.55" lengthAdjust="spacing" >&#8722;10</text>
<text x="0" y="0" transform="translate(1116.30,152.26) scale(0.88,1)" font-size="12.8" text-anchor="start" fill="#383838" textLength="16.59" lengthAdjust="spacing" >10</text>
<text x="0" y="0" transform="translate(1131.80,146.16) scale(0.88,1)" font-size="12.8" text-anchor="start" fill="#383838" textLength="24.55" lengthAdjust="spacing" >&#8722;11</text>
<text x="0" y="0" transform="translate(1116.30,209.59) scale(0.88,1)" font-size="12.8" text-anchor="start" fill="#383838" textLength="16.59" lengthAdjust="spacing" >10</text>
<text x="0" y="0" transform="translate(1131.80,203.49) scale(0.88,1)" font-size="12.8" text-anchor="start" fill="#383838" textLength="24.55" lengthAdjust="spacing" >&#8722;12</text>
<text x="0" y="0" font-size="12.8" text-anchor="middle" fill="#383838" transform="translate(1163.50,123.50) rotate(90) scale(0.88,1)" textLength="136.36" lengthAdjust="spacing">pressure dyne/cm^2</text>
<rect x="95.00" y="224.00" width="986.00" height="192.00" fill="#000" />
<rect x="95.00" y="393.80" width="177.00" height="1.70" fill="#0b11e3" />
<rect x="95.00" y="395.50" width="177.00" height="1.50" fill="#1452f0" />
<rect x="95.00" y="397.00" width="177.00" height="2.00" fill="#10999d" />
<rect x="95.00" y="399.00" width="177.00" height="3.00" fill="#21b56f" />
<rect x="95.00" y="402.00" width="177.00" height="2.00" fill="#108cbe" />
<rect x="95.00" y="404.00" width="177.00" height="1.50" fill="#1438f8" />
<rect x="95.00" y="405.50" width="177.00" height="1.00" fill="#0609d1" />
<rect x="95.00" y="393.00" width="1.50" height="1.20" fill="#0e15ec" />
<rect x="101.80" y="393.00" width="1.50" height="1.20" fill="#0e15ec" />
<rect x="110.30" y="393.00" width="1.50" height="1.20" fill="#0e15ec" />
<rect x="112.00" y="393.00" width="1.50" height="1.20" fill="#0e15ec" />
<rect x="117.10" y="393.00" width="1.50" height="1.20" fill="#0e15ec" />
<rect x="120.50" y="393.00" width="1.50" height="1.20" fill="#0e15ec" />
<rect x="122.20" y="393.00" width="1.50" height="1.20" fill="#0e15ec" />
<rect x="123.90" y="393.00" width="1.50" height="1.20" fill="#0e15ec" />
<rect x="132.40" y="393.00" width="1.50" height="1.20" fill="#0e15ec" />
<rect x="134.10" y="393.00" width="1.50" height="1.20" fill="#0e15ec" />
<rect x="137.50" y="393.00" width="1.50" height="1.20" fill="#0e15ec" />
<rect x="142.60" y="393.00" width="1.50" height="1.20" fill="#0e15ec" />
<rect x="146.00" y="393.00" width="1.50" height="1.20" fill="#0e15ec" />
<rect x="152.80" y="393.00" width="1.50" height="1.20" fill="#0e15ec" />
<rect x="156.20" y="393.00" width="1.50" height="1.20" fill="#0e15ec" />
<rect x="157.90" y="393.00" width="1.50" height="1.20" fill="#0e15ec" />
<rect x="161.30" y="393.00" width="1.50" height="1.20" fill="#0e15ec" />
<rect x="164.70" y="393.00" width="1.50" height="1.20" fill="#0e15ec" />
<rect x="176.60" y="393.00" width="1.50" height="1.20" fill="#0e15ec" />
<rect x="181.70" y="393.00" width="1.50" height="1.20" fill="#0e15ec" />
<rect x="197.00" y="393.00" width="1.50" height="1.20" fill="#0e15ec" />
<rect x="198.70" y="393.00" width="1.50" height="1.20" fill="#0e15ec" />
<rect x="210.60" y="393.00" width="1.50" height="1.20" fill="#0e15ec" />
<rect x="217.40" y="393.00" width="1.50" height="1.20" fill="#0e15ec" />
<rect x="219.10" y="393.00" width="1.50" height="1.20" fill="#0e15ec" />
<rect x="220.80" y="393.00" width="1.50" height="1.20" fill="#0e15ec" />
<rect x="224.20" y="393.00" width="1.50" height="1.20" fill="#0e15ec" />
<rect x="227.60" y="393.00" width="1.50" height="1.20" fill="#0e15ec" />
<rect x="229.30" y="393.00" width="1.50" height="1.20" fill="#0e15ec" />
<rect x="231.00" y="393.00" width="1.50" height="1.20" fill="#0e15ec" />
<rect x="256.50" y="393.00" width="1.50" height="1.20" fill="#0e15ec" />
<rect x="259.90" y="393.00" width="1.50" height="1.20" fill="#0e15ec" />
<rect x="261.60" y="393.00" width="1.50" height="1.20" fill="#0e15ec" />
<rect x="270.10" y="393.00" width="1.50" height="1.20" fill="#0e15ec" />
<rect x="271.80" y="393.00" width="1.50" height="1.20" fill="#0e15ec" />
<rect x="272.00" y="378.00" width="4.00" height="6.00" fill="#1427fc" />
<rect x="272.00" y="384.00" width="4.00" height="6.00" fill="#108cbe" />
<rect x="272.00" y="390.00" width="4.00" height="6.00" fill="#bef00a" />
<rect x="272.00" y="396.00" width="4.00" height="7.00" fill="#f98700" />
<rect x="272.00" y="403.00" width="4.00" height="6.00" fill="#bef00a" />
<rect x="272.00" y="409.00" width="4.00" height="4.00" fill="#108cbe" />
<rect x="272.00" y="413.00" width="4.00" height="3.00" fill="#1427fc" />
<rect x="276.00" y="260.00" width="48.00" height="156.00" fill="#d8606a" />
<rect x="276.00" y="317.32" width="1.20" height="4.00" fill="#df373c" />
<rect x="276.00" y="321.32" width="1.20" height="4.00" fill="#e93720" />
<rect x="276.00" y="325.32" width="1.20" height="3.00" fill="#e03338" />
<rect x="276.00" y="328.32" width="1.20" height="3.00" fill="#de3f46" />
<rect x="276.00" y="331.32" width="1.20" height="4.00" fill="#e9381f" />
<rect x="276.00" y="335.32" width="1.20" height="3.00" fill="#e53229" />
<rect x="276.00" y="338.32" width="1.20" height="4.00" fill="#f44d0b" />
<rect x="276.00" y="342.32" width="1.20" height="3.00" fill="#e63327" />
<rect x="276.00" y="345.32" width="1.20" height="3.00" fill="#f75608" />
<rect x="276.00" y="348.32" width="1.20" height="3.00" fill="#f95d06" />
<rect x="276.00" y="351.32" width="1.20" height="4.00" fill="#fb6204" />
<rect x="276.00" y="355.32" width="1.20" height="4.00" fill="#fd6902" />
<rect x="276.00" y="359.32" width="1.20" height="3.00" fill="#ff6f00" />
<rect x="276.00" y="362.32" width="1.20" height="2.00" fill="#fc6603" />
<rect x="276.00" y="364.32" width="1.20" height="3.00" fill="#f5500a" />
<rect x="276.00" y="367.32" width="1.20" height="2.00" fill="#fe6a01" />
<rect x="276.00" y="369.32" width="1.20" height="3.00" fill="#fc7e00" />
<rect x="276.00" y="372.32" width="1.20" height="4.00" fill="#f98900" />
<rect x="276.00" y="376.32" width="1.20" height="4.00" fill="#fc7a00" />
<rect x="276.00" y="380.32" width="1.20" height="3.00" fill="#f88d00" />
<rect x="276.00" y="383.32" width="1.20" height="2.00" fill="#fa8500" />
<rect x="276.00" y="385.32" width="1.20" height="3.00" fill="#f79000" />
<rect x="276.00" y="388.32" width="1.20" height="4.00" fill="#fc7900" />
<rect x="276.00" y="392.32" width="1.20" height="2.00" fill="#ded001" />
<rect x="276.00" y="394.32" width="1.20" height="3.00" fill="#cae407" />
<rect x="276.00" y="397.32" width="1.20" height="3.00" fill="#d1dd05" />
<rect x="276.00" y="400.32" width="1.20" height="3.00" fill="#d7d703" />
<rect x="276.00" y="403.32" width="1.20" height="3.00" fill="#cce206" />
<rect x="276.00" y="406.32" width="1.20" height="4.00" fill="#cce206" />
<rect x="276.00" y="410.32" width="1.20" height="2.00" fill="#d7d703" />
<rect x="276.00" y="412.32" width="1.20" height="2.00" fill="#dcd202" />
<rect x="276.00" y="414.32" width="1.20" height="1.68" fill="#d1dd05" />
<rect x="277.20" y="321.92" width="1.20" height="4.00" fill="#df373d" />
<rect x="277.20" y="325.92" width="1.20" height="3.00" fill="#df3b41" />
<rect x="277.20" y="328.92" width="1.20" height="3.00" fill="#e53328" />
<rect x="277.20" y="331.92" width="1.20" height="3.00" fill="#df363c" />
<rect x="277.20" y="334.92" width="1.20" height="3.00" fill="#ef4011" />
<rect x="277.20" y="337.92" width="1.20" height="3.00" fill="#e9381f" />
<rect x="277.20" y="340.92" width="1.20" height="3.00" fill="#e73523" />
<rect x="277.20" y="343.92" width="1.20" height="4.00" fill="#e53229" />
<rect x="277.20" y="347.92" width="1.20" height="2.00" fill="#fa5f05" />
<rect x="277.20" y="349.92" width="1.20" height="2.00" fill="#fb6104" />
<rect x="277.20" y="351.92" width="1.20" height="3.00" fill="#f54f0a" />
<rect x="277.20" y="354.92" width="1.20" height="3.00" fill="#fd6902" />
<rect x="277.20" y="357.92" width="1.20" height="3.00" fill="#fe7100" />
<rect x="277.20" y="360.92" width="1.20" height="3.00" fill="#f54f0a" />
<rect x="277.20" y="363.92" width="1.20" height="3.00" fill="#fe7100" />
<rect x="277.20" y="366.92" width="1.20" height="4.00" fill="#ff7000" />
<rect x="277.20" y="370.92" width="1.20" height="2.00" fill="#fc7d00" />
<rect x="277.20" y="372.92" width="1.20" height="4.00" fill="#fb8200" />
<rect x="277.20" y="376.92" width="1.20" height="2.00" fill="#fc7d00" />
<rect x="277.20" y="378.92" width="1.20" height="4.00" fill="#fa8300" />
<rect x="277.20" y="382.92" width="1.20" height="4.00" fill="#fd7700" />
<rect x="277.20" y="386.92" width="1.20" height="2.00" fill="#f98a00" />
<rect x="277.20" y="388.92" width="1.20" height="2.00" fill="#fc7d00" />
<rect x="277.20" y="390.92" width="1.20" height="2.00" fill="#cde106" />
<rect x="277.20" y="392.92" width="1.20" height="4.00" fill="#dad402" />
<rect x="277.20" y="396.92" width="1.20" height="4.00" fill="#dcd202" />
<rect x="277.20" y="400.92" width="1.20" height="4.00" fill="#d1dd05" />
<rect x="277.20" y="404.92" width="1.20" height="4.00" fill="#cde106" />
<rect x="277.20" y="408.92" width="1.20" height="2.00" fill="#c8e607" />
<rect x="277.20" y="410.92" width="1.20" height="3.00" fill="#d4da04" />
<rect x="277.20" y="413.92" width="1.20" height="2.08" fill="#dbd302" />
<rect x="278.40" y="320.01" width="1.20" height="3.00" fill="#e63327" />
<rect x="278.40" y="323.01" width="1.20" height="4.00" fill="#e3302d" />
<rect x="278.40" y="327.01" width="1.20" height="4.00" fill="#df3940" />
<rect x="278.40" y="331.01" width="1.20" height="2.00" fill="#e73524" />
<rect x="278.40" y="333.01" width="1.20" height="3.00" fill="#f0420f" />
<rect x="278.40" y="336.01" width="1.20" height="4.00" fill="#e9381f" />
<rect x="278.40" y="340.01" width="1.20" height="2.00" fill="#ec3c18" />
<rect x="278.40" y="342.01" width="1.20" height="2.00" fill="#ed3c17" />
<rect x="278.40" y="344.01" width="1.20" height="4.00" fill="#e93720" />
<rect x="278.40" y="348.01" width="1.20" height="4.00" fill="#f54f0a" />
<rect x="278.40" y="352.01" width="1.20" height="3.00" fill="#f85907" />
<rect x="278.40" y="355.01" width="1.20" height="3.00" fill="#f85a07" />
<rect x="278.40" y="358.01" width="1.20" height="3.00" fill="#f95c06" />
<rect x="278.40" y="361.01" width="1.20" height="3.00" fill="#fe6a01" />
<rect x="278.40" y="364.01" width="1.20" height="2.00" fill="#fd6802" />
<rect x="278.40" y="366.01" width="1.20" height="3.00" fill="#f5500a" />
<rect x="278.40" y="369.01" width="1.20" height="3.00" fill="#fd7600" />
<rect x="278.40" y="372.01" width="1.20" height="3.00" fill="#f98a00" />
<rect x="278.40" y="375.01" width="1.20" height="3.00" fill="#fc7c00" />
<rect x="278.40" y="378.01" width="1.20" height="3.00" fill="#fd7500" />
<rect x="278.40" y="381.01" width="1.20" height="4.00" fill="#fa8500" />
<rect x="278.40" y="385.01" width="1.20" height="4.00" fill="#fb7e00" />
<rect x="278.40" y="389.01" width="1.20" height="3.00" fill="#fc7d00" />
<rect x="278.40" y="392.01" width="1.20" height="4.00" fill="#d7d703" />
<rect x="278.40" y="396.01" width="1.20" height="2.00" fill="#cce206" />
<rect x="278.40" y="398.01" width="1.20" height="3.00" fill="#c8e607" />
<rect x="278.40" y="401.01" width="1.20" height="3.00" fill="#c7e707" />
<rect x="278.40" y="404.01" width="1.20" height="2.00" fill="#d1dd05" />
<rect x="278.40" y="406.01" width="1.20" height="4.00" fill="#d9d502" />
<rect x="278.40" y="410.01" width="1.20" height="3.00" fill="#e1cd00" />
<rect x="278.40" y="413.01" width="1.20" height="2.99" fill="#c9e507" />
<rect x="279.60" y="317.47" width="1.20" height="4.00" fill="#de3b42" />
<rect x="279.60" y="321.47" width="1.20" height="2.00" fill="#e3302d" />
<rect x="279.60" y="323.47" width="1.20" height="3.00" fill="#e13035" />
<rect x="279.60" y="326.47" width="1.20" height="4.00" fill="#e12e33" />
<rect x="279.60" y="330.47" width="1.20" height="2.00" fill="#e4322a" />
<rect x="279.60" y="332.47" width="1.20" height="4.00" fill="#e32f2e" />
<rect x="279.60" y="336.47" width="1.20" height="3.00" fill="#f1450e" />
<rect x="279.60" y="339.47" width="1.20" height="4.00" fill="#e63426" />
<rect x="279.60" y="343.47" width="1.20" height="2.00" fill="#ea391d" />
<rect x="279.60" y="345.47" width="1.20" height="2.00" fill="#fe7100" />
<rect x="279.60" y="347.47" width="1.20" height="3.00" fill="#ff6e00" />
<rect x="279.60" y="350.47" width="1.20" height="4.00" fill="#f75508" />
<rect x="279.60" y="354.47" width="1.20" height="4.00" fill="#fb6204" />
<rect x="279.60" y="358.47" width="1.20" height="3.00" fill="#ff6e00" />
<rect x="279.60" y="361.47" width="1.20" height="3.00" fill="#fd6702" />
<rect x="279.60" y="364.47" width="1.20" height="3.00" fill="#f95c06" />
<rect x="279.60" y="367.47" width="1.20" height="2.00" fill="#f65209" />
<rect x="279.60" y="369.47" width="1.20" height="2.00" fill="#fc7d00" />
<rect x="279.60" y="371.47" width="1.20" height="3.00" fill="#fb8200" />
<rect x="279.60" y="374.47" width="1.20" height="3.00" fill="#fa8600" />
<rect x="279.60" y="377.47" width="1.20" height="3.00" fill="#f88f00" />
<rect x="279.60" y="380.47" width="1.20" height="2.00" fill="#fb7f00" />
<rect x="279.60" y="382.47" width="1.20" height="3.00" fill="#fc7d00" />
<rect x="279.60" y="385.47" width="1.20" height="4.00" fill="#f88c00" />
<rect x="279.60" y="389.47" width="1.20" height="2.00" fill="#f98a00" />
<rect x="279.60" y="391.47" width="1.20" height="3.00" fill="#d5d903" />
<rect x="279.60" y="394.47" width="1.20" height="4.00" fill="#cce206" />
<rect x="279.60" y="398.47" width="1.20" height="3.00" fill="#dad402" />
<rect x="279.60" y="401.47" width="1.20" height="4.00" fill="#c9e507" />
<rect x="279.60" y="405.47" width="1.20" height="3.00" fill="#cce206" />
<rect x="279.60" y="408.47" width="1.20" height="2.00" fill="#dad402" />
<rect x="279.60" y="410.47" width="1.20" height="3.00" fill="#c7e707" />
<rect x="279.60" y="413.47" width="1.20" height="2.53" fill="#d4da04" />
<rect x="280.80" y="316.30" width="1.20" height="4.00" fill="#dc4c54" />
<rect x="280.80" y="320.30" width="1.20" height="3.00" fill="#e0343a" />
<rect x="280.80" y="323.30" width="1.20" height="3.00" fill="#e0343a" />
<rect x="280.80" y="326.30" width="1.20" height="2.00" fill="#de3f46" />
<rect x="280.80" y="328.30" width="1.20" height="4.00" fill="#e63426" />
<rect x="280.80" y="332.30" width="1.20" height="4.00" fill="#de3e44" />
<rect x="280.80" y="336.30" width="1.20" height="3.00" fill="#f44d0b" />
<rect x="280.80" y="339.30" width="1.20" height="3.00" fill="#f2470d" />
<rect x="280.80" y="342.30" width="1.20" height="3.00" fill="#eb3a1b" />
<rect x="280.80" y="345.30" width="1.20" height="4.00" fill="#f95b06" />
<rect x="280.80" y="349.30" width="1.20" height="3.00" fill="#ff6d00" />
<rect x="280.80" y="352.30" width="1.20" height="4.00" fill="#fe6c01" />
<rect x="280.80" y="356.30" width="1.20" height="3.00" fill="#f75708" />
<rect x="280.80" y="359.30" width="1.20" height="3.00" fill="#f5510a" />
<rect x="280.80" y="362.30" width="1.20" height="3.00" fill="#fc6503" />
<rect x="280.80" y="365.30" width="1.20" height="3.00" fill="#fd6702" />
<rect x="280.80" y="368.30" width="1.20" height="3.00" fill="#fb8000" />
<rect x="280.80" y="371.30" width="1.20" height="2.00" fill="#fd7600" />
<rect x="280.80" y="373.30" width="1.20" height="2.00" fill="#fe7300" />
<rect x="280.80" y="375.30" width="1.20" height="3.00" fill="#fc7b00" />
<rect x="280.80" y="378.30" width="1.20" height="3.00" fill="#fd7500" />
<rect x="280.80" y="381.30" width="1.20" height="3.00" fill="#fd7600" />
<rect x="280.80" y="384.30" width="1.20" height="3.00" fill="#f88d00" />
<rect x="280.80" y="387.30" width="1.20" height="3.00" fill="#fc7d00" />
<rect x="280.80" y="390.30" width="1.20" height="4.00" fill="#dbd302" />
<rect x="280.80" y="394.30" width="1.20" height="3.00" fill="#d8d603" />
<rect x="280.80" y="397.30" width="1.20" height="3.00" fill="#cce206" />
<rect x="280.80" y="400.30" width="1.20" height="4.00" fill="#cde106" />
<rect x="280.80" y="404.30" width="1.20" height="4.00" fill="#cee006" />
<rect x="280.80" y="408.30" width="1.20" height="4.00" fill="#cce206" />
<rect x="280.80" y="412.30" width="1.20" height="3.00" fill="#d6d803" />
<rect x="280.80" y="415.30" width="1.20" height="0.70" fill="#dad402" />
<rect x="282.00" y="320.85" width="1.20" height="3.00" fill="#e3302d" />
<rect x="282.00" y="323.85" width="1.20" height="4.00" fill="#e9381e" />
<rect x="282.00" y="327.85" width="1.20" height="3.00" fill="#e03035" />
<rect x="282.00" y="330.85" width="1.20" height="4.00" fill="#e63425" />
<rect x="282.00" y="334.85" width="1.20" height="3.00" fill="#e63426" />
<rect x="282.00" y="337.85" width="1.20" height="4.00" fill="#ea391d" />
<rect x="282.00" y="341.85" width="1.20" height="2.00" fill="#ef4011" />
<rect x="282.00" y="343.85" width="1.20" height="3.00" fill="#ed3d16" />
<rect x="282.00" y="346.85" width="1.20" height="4.00" fill="#fd6702" />
<rect x="282.00" y="350.85" width="1.20" height="4.00" fill="#f95d06" />
<rect x="282.00" y="354.85" width="1.20" height="2.00" fill="#f65309" />
<rect x="282.00" y="356.85" width="1.20" height="2.00" fill="#fc6603" />
<rect x="282.00" y="358.85" width="1.20" height="3.00" fill="#f85807" />
<rect x="282.00" y="361.85" width="1.20" height="4.00" fill="#f75608" />
<rect x="282.00" y="365.85" width="1.20" height="3.00" fill="#f95d06" />
<rect x="282.00" y="368.85" width="1.20" height="3.00" fill="#fd7600" />
<rect x="282.00" y="371.85" width="1.20" height="2.00" fill="#fc7b00" />
<rect x="282.00" y="373.85" width="1.20" height="3.00" fill="#fb7e00" />
<rect x="282.00" y="376.85" width="1.20" height="3.00" fill="#fc7a00" />
<rect x="282.00" y="379.85" width="1.20" height="3.00" fill="#f88e00" />
<rect x="282.00" y="382.85" width="1.20" height="3.00" fill="#fc7e00" />
<rect x="282.00" y="385.85" width="1.20" height="3.00" fill="#f88d00" />
<rect x="282.00" y="388.85" width="1.20" height="4.00" fill="#f98a00" />
<rect x="282.00" y="392.85" width="1.20" height="3.00" fill="#dfcf01" />
<rect x="282.00" y="395.85" width="1.20" height="3.00" fill="#c7e707" />
<rect x="282.00" y="398.85" width="1.20" height="3.00" fill="#cee005" />
<rect x="282.00" y="401.85" width="1.20" height="3.00" fill="#d9d502" />
<rect x="282.00" y="404.85" width="1.20" height="4.00" fill="#c8e607" />
<rect x="282.00" y="408.85" width="1.20" height="2.00" fill="#e1cd00" />
<rect x="282.00" y="410.85" width="1.20" height="3.00" fill="#d6d803" />
<rect x="282.00" y="413.85" width="1.20" height="2.15" fill="#d4da04" />
<rect x="283.20" y="319.30" width="1.20" height="3.00" fill="#de3e44" />
<rect x="283.20" y="322.30" width="1.20" height="2.00" fill="#e03238" />
<rect x="283.20" y="324.30" width="1.20" height="3.00" fill="#e73623" />
<rect x="283.20" y="327.30" width="1.20" height="4.00" fill="#df373d" />
<rect x="283.20" y="331.30" width="1.20" height="4.00" fill="#e0353b" />
<rect x="283.20" y="335.30" width="1.20" height="3.00" fill="#ee3e13" />
<rect x="283.20" y="338.30" width="1.20" height="3.00" fill="#f44d0b" />
<rect x="283.20" y="341.30" width="1.20" height="4.00" fill="#e73524" />
<rect x="283.20" y="345.30" width="1.20" height="2.00" fill="#fd6702" />
<rect x="283.20" y="347.30" width="1.20" height="3.00" fill="#ff6e00" />
<rect x="283.20" y="350.30" width="1.20" height="3.00" fill="#fd6802" />
<rect x="283.20" y="353.30" width="1.20" height="3.00" fill="#fd6902" />
<rect x="283.20" y="356.30" width="1.20" height="2.00" fill="#fb6304" />
<rect x="283.20" y="358.30" width="1.20" height="3.00" fill="#ff6e00" />
<rect x="283.20" y="361.30" width="1.20" height="3.00" fill="#f65409" />
<rect x="283.20" y="364.30" width="1.20" height="3.00" fill="#fa5f05" />
<rect x="283.20" y="367.30" width="1.20" height="3.00" fill="#fa6005" />
<rect x="283.20" y="370.30" width="1.20" height="2.00" fill="#fb7e00" />
<rect x="283.20" y="372.30" width="1.20" height="2.00" fill="#fc7a00" />
<rect x="283.20" y="374.30" width="1.20" height="3.00" fill="#fc7c00" />
<rect x="283.20" y="377.30" width="1.20" height="3.00" fill="#fb8100" />
<rect x="283.20" y="380.30" width="1.20" height="2.00" fill="#fc7a00" />
<rect x="283.20" y="382.30" width="1.20" height="3.00" fill="#fb7f00" />
<rect x="283.20" y="385.30" width="1.20" height="2.00" fill="#f98a00" />
<rect x="283.20" y="387.30" width="1.20" height="4.00" fill="#fb8000" />
<rect x="283.20" y="391.30" width="1.20" height="2.00" fill="#d1dd05" />
<rect x="283.20" y="393.30" width="1.20" height="3.00" fill="#dcd201" />
<rect x="283.20" y="396.30" width="1.20" height="3.00" fill="#ded001" />
<rect x="283.20" y="399.30" width="1.20" height="4.00" fill="#c8e607" />
<rect x="283.20" y="403.30" width="1.20" height="4.00" fill="#c8e607" />
<rect x="283.20" y="407.30" width="1.20" height="4.00" fill="#dbd302" />
<rect x="283.20" y="411.30" width="1.20" height="4.00" fill="#cce206" />
<rect x="283.20" y="415.30" width="1.20" height="0.70" fill="#dbd302" />
<rect x="284.40" y="317.06" width="1.20" height="4.00" fill="#dc4950" />
<rect x="284.40" y="321.06" width="1.20" height="3.00" fill="#e53229" />
<rect x="284.40" y="324.06" width="1.20" height="3.00" fill="#e03339" />
<rect x="284.40" y="327.06" width="1.20" height="3.00" fill="#e3302d" />
<rect x="284.40" y="330.06" width="1.20" height="3.00" fill="#e9381f" />
<rect x="284.40" y="333.06" width="1.20" height="3.00" fill="#eb3b1a" />
<rect x="284.40" y="336.06" width="1.20" height="4.00" fill="#f0410f" />
<rect x="284.40" y="340.06" width="1.20" height="3.00" fill="#e83721" />
<rect x="284.40" y="343.06" width="1.20" height="3.00" fill="#f0420f" />
<rect x="284.40" y="346.06" width="1.20" height="4.00" fill="#ff7000" />
<rect x="284.40" y="350.06" width="1.20" height="4.00" fill="#f5510a" />
<rect x="284.40" y="354.06" width="1.20" height="2.00" fill="#fc6603" />
<rect x="284.40" y="356.06" width="1.20" height="4.00" fill="#fb6104" />
<rect x="284.40" y="360.06" width="1.20" height="2.00" fill="#f95c06" />
<rect x="284.40" y="362.06" width="1.20" height="4.00" fill="#fe6c01" />
<rect x="284.40" y="366.06" width="1.20" height="3.00" fill="#f85807" />
<rect x="284.40" y="369.06" width="1.20" height="2.00" fill="#fb8200" />
<rect x="284.40" y="371.06" width="1.20" height="3.00" fill="#fb7f00" />
<rect x="284.40" y="374.06" width="1.20" height="4.00" fill="#f88b00" />
<rect x="284.40" y="378.06" width="1.20" height="2.00" fill="#fa8400" />
<rect x="284.40" y="380.06" width="1.20" height="3.00" fill="#f88c00" />
<rect x="284.40" y="383.06" width="1.20" height="3.00" fill="#f98b00" />
<rect x="284.40" y="386.06" width="1.20" height="3.00" fill="#f79100" />
<rect x="284.40" y="389.06" width="1.20" height="3.00" fill="#fd7700" />
<rect x="284.40" y="392.06" width="1.20" height="4.00" fill="#cde106" />
<rect x="284.40" y="396.06" width="1.20" height="3.00" fill="#d5d904" />
<rect x="284.40" y="399.06" width="1.20" height="4.00" fill="#cce206" />
<rect x="284.40" y="403.06" width="1.20" height="3.00" fill="#d9d502" />
<rect x="284.40" y="406.06" width="1.20" height="4.00" fill="#cbe306" />
<rect x="284.40" y="410.06" width="1.20" height="3.00" fill="#ded001" />
<rect x="284.40" y="413.06" width="1.20" height="2.94" fill="#cee005" />
<rect x="285.60" y="318.00" width="1.20" height="2.00" fill="#db4f57" />
<rect x="285.60" y="320.00" width="1.20" height="3.00" fill="#e0353b" />
<rect x="285.60" y="323.00" width="1.20" height="3.00" fill="#e4312b" />
<rect x="285.60" y="326.00" width="1.20" height="4.00" fill="#df393f" />
<rect x="285.60" y="330.00" width="1.20" height="3.00" fill="#e0353b" />
<rect x="285.60" y="333.00" width="1.20" height="2.00" fill="#eb3a1b" />
<rect x="285.60" y="335.00" width="1.20" height="3.00" fill="#e63327" />
<rect x="285.60" y="338.00" width="1.20" height="3.00" fill="#e83622" />
<rect x="285.60" y="341.00" width="1.20" height="3.00" fill="#e83622" />
<rect x="285.60" y="344.00" width="1.20" height="2.00" fill="#e63427" />
<rect x="285.60" y="346.00" width="1.20" height="4.00" fill="#f54f0a" />
<rect x="285.60" y="350.00" width="1.20" height="4.00" fill="#f95b06" />
<rect x="285.60" y="354.00" width="1.20" height="3.00" fill="#f54f0a" />
<rect x="285.60" y="357.00" width="1.20" height="4.00" fill="#fc6603" />
<rect x="285.60" y="361.00" width="1.20" height="3.00" fill="#f75708" />
<rect x="285.60" y="364.00" width="1.20" height="4.00" fill="#fe7200" />
<rect x="285.60" y="368.00" width="1.20" height="2.00" fill="#fc7a00" />
<rect x="285.60" y="370.00" width="1.20" height="3.00" fill="#fa8300" />
<rect x="285.60" y="373.00" width="1.20" height="4.00" fill="#f89000" />
<rect x="285.60" y="377.00" width="1.20" height="3.00" fill="#f88e00" />
<rect x="285.60" y="380.00" width="1.20" height="3.00" fill="#fc7d00" />
<rect x="285.60" y="383.00" width="1.20" height="3.00" fill="#fa8500" />
<rect x="285.60" y="386.00" width="1.20" height="4.00" fill="#fe7400" />
<rect x="285.60" y="390.00" width="1.20" height="2.00" fill="#cee005" />
<rect x="285.60" y="392.00" width="1.20" height="2.00" fill="#d9d502" />
<rect x="285.60" y="394.00" width="1.20" height="3.00" fill="#d3db04" />
<rect x="285.60" y="397.00" width="1.20" height="3.00" fill="#ded001" />
<rect x="285.60" y="400.00" width="1.20" height="3.00" fill="#ddd101" />
<rect x="285.60" y="403.00" width="1.20" height="3.00" fill="#d5d904" />
<rect x="285.60" y="406.00" width="1.20" height="3.00" fill="#cce206" />
<rect x="285.60" y="409.00" width="1.20" height="3.00" fill="#dcd201" />
<rect x="285.60" y="412.00" width="1.20" height="3.00" fill="#dcd202" />
<rect x="285.60" y="415.00" width="1.20" height="1.00" fill="#c7e707" />
<rect x="286.80" y="314.72" width="1.20" height="3.00" fill="#dc4b53" />
<rect x="286.80" y="317.72" width="1.20" height="3.00" fill="#de4047" />
<rect x="286.80" y="320.72" width="1.20" height="2.00" fill="#df393f" />
<rect x="286.80" y="322.72" width="1.20" height="3.00" fill="#e4312b" />
<rect x="286.80" y="325.72" width="1.20" height="3.00" fill="#df3a41" />
<rect x="286.80" y="328.72" width="1.20" height="3.00" fill="#e03237" />
<rect x="286.80" y="331.72" width="1.20" height="3.00" fill="#e03137" />
<rect x="286.80" y="334.72" width="1.20" height="3.00" fill="#f34a0c" />
<rect x="286.80" y="337.72" width="1.20" height="3.00" fill="#ef3f12" />
<rect x="286.80" y="340.72" width="1.20" height="3.00" fill="#f2460d" />
<rect x="286.80" y="343.72" width="1.20" height="4.00" fill="#ef4011" />
<rect x="286.80" y="347.72" width="1.20" height="3.00" fill="#f85807" />
<rect x="286.80" y="350.72" width="1.20" height="2.00" fill="#fe6b01" />
<rect x="286.80" y="352.72" width="1.20" height="3.00" fill="#fe6c01" />
<rect x="286.80" y="355.72" width="1.20" height="4.00" fill="#f75708" />
<rect x="286.80" y="359.72" width="1.20" height="3.00" fill="#f44e0b" />
<rect x="286.80" y="362.72" width="1.20" height="2.00" fill="#f95d06" />
<rect x="286.80" y="364.72" width="1.20" height="4.00" fill="#fb6304" />
<rect x="286.80" y="368.72" width="1.20" height="3.00" fill="#f88b00" />
<rect x="286.80" y="371.72" width="1.20" height="4.00" fill="#fe7400" />
<rect x="286.80" y="375.72" width="1.20" height="4.00" fill="#fd7600" />
<rect x="286.80" y="379.72" width="1.20" height="2.00" fill="#fd7600" />
<rect x="286.80" y="381.72" width="1.20" height="4.00" fill="#fd7600" />
<rect x="286.80" y="385.72" width="1.20" height="3.00" fill="#fd7800" />
<rect x="286.80" y="388.72" width="1.20" height="2.00" fill="#fb7f00" />
<rect x="286.80" y="390.72" width="1.20" height="2.00" fill="#dad402" />
<rect x="286.80" y="392.72" width="1.20" height="2.00" fill="#e1cd00" />
<rect x="286.80" y="394.72" width="1.20" height="3.00" fill="#dad402" />
<rect x="286.80" y="397.72" width="1.20" height="2.00" fill="#d7d703" />
<rect x="286.80" y="399.72" width="1.20" height="2.00" fill="#ded001" />
<rect x="286.80" y="401.72" width="1.20" height="4.00" fill="#c9e507" />
<rect x="286.80" y="405.72" width="1.20" height="4.00" fill="#d0de05" />
<rect x="286.80" y="409.72" width="1.20" height="4.00" fill="#dbd302" />
<rect x="286.80" y="413.72" width="1.20" height="2.28" fill="#dad402" />
<rect x="288.00" y="313.49" width="1.20" height="3.00" fill="#dd454d" />
<rect x="288.00" y="316.49" width="1.20" height="3.00" fill="#df393f" />
<rect x="288.00" y="319.49" width="1.20" height="3.00" fill="#e03339" />
<rect x="288.00" y="322.49" width="1.20" height="4.00" fill="#e03338" />
<rect x="288.00" y="326.49" width="1.20" height="3.00" fill="#df373d" />
<rect x="288.00" y="329.49" width="1.20" height="4.00" fill="#e12e34" />
<rect x="288.00" y="333.49" width="1.20" height="2.00" fill="#ef4010" />
<rect x="288.00" y="335.49" width="1.20" height="2.00" fill="#e63327" />
<rect x="288.00" y="337.49" width="1.20" height="3.00" fill="#e63426" />
<rect x="288.00" y="340.49" width="1.20" height="4.00" fill="#f0410f" />
<rect x="288.00" y="344.49" width="1.20" height="3.00" fill="#ed3d17" />
<rect x="288.00" y="347.49" width="1.20" height="3.00" fill="#f95b06" />
<rect x="288.00" y="350.49" width="1.20" height="4.00" fill="#fe6a01" />
<rect x="288.00" y="354.49" width="1.20" height="3.00" fill="#f85a07" />
<rect x="288.00" y="357.49" width="1.20" height="3.00" fill="#fd6802" />
<rect x="288.00" y="360.49" width="1.20" height="4.00" fill="#fa6005" />
<rect x="288.00" y="364.49" width="1.20" height="3.00" fill="#f95c06" />
<rect x="288.00" y="367.49" width="1.20" height="3.00" fill="#ff6d00" />
<rect x="288.00" y="370.49" width="1.20" height="3.00" fill="#fe7400" />
<rect x="288.00" y="373.49" width="1.20" height="3.00" fill="#f88e00" />
<rect x="288.00" y="376.49" width="1.20" height="3.00" fill="#f98900" />
<rect x="288.00" y="379.49" width="1.20" height="4.00" fill="#fa8400" />
<rect x="288.00" y="383.49" width="1.20" height="3.00" fill="#f98a00" />
<rect x="288.00" y="386.49" width="1.20" height="3.00" fill="#f88e00" />
<rect x="288.00" y="389.49" width="1.20" height="2.00" fill="#fd7800" />
<rect x="288.00" y="391.49" width="1.20" height="2.00" fill="#cce206" />
<rect x="288.00" y="393.49" width="1.20" height="3.00" fill="#d9d502" />
<rect x="288.00" y="396.49" width="1.20" height="3.00" fill="#d8d603" />
<rect x="288.00" y="399.49" width="1.20" height="4.00" fill="#e1cd00" />
<rect x="288.00" y="403.49" width="1.20" height="4.00" fill="#cee006" />
<rect x="288.00" y="407.49" width="1.20" height="3.00" fill="#d2dc04" />
<rect x="288.00" y="410.49" width="1.20" height="2.00" fill="#d9d502" />
<rect x="288.00" y="412.49" width="1.20" height="3.51" fill="#d2dc04" />
<rect x="289.20" y="319.13" width="1.20" height="3.00" fill="#db5159" />
<rect x="289.20" y="322.13" width="1.20" height="4.00" fill="#e12d32" />
<rect x="289.20" y="326.13" width="1.20" height="3.00" fill="#e93820" />
<rect x="289.20" y="329.13" width="1.20" height="3.00" fill="#e53328" />
<rect x="289.20" y="332.13" width="1.20" height="3.00" fill="#e12e33" />
<rect x="289.20" y="335.13" width="1.20" height="2.00" fill="#f1440e" />
<rect x="289.20" y="337.13" width="1.20" height="3.00" fill="#e53229" />
<rect x="289.20" y="340.13" width="1.20" height="3.00" fill="#e63425" />
<rect x="289.20" y="343.13" width="1.20" height="2.00" fill="#f0410f" />
<rect x="289.20" y="345.13" width="1.20" height="3.00" fill="#ff6e00" />
<rect x="289.20" y="348.13" width="1.20" height="3.00" fill="#fd6802" />
<rect x="289.20" y="351.13" width="1.20" height="2.00" fill="#fe7200" />
<rect x="289.20" y="353.13" width="1.20" height="2.00" fill="#f65409" />
<rect x="289.20" y="355.13" width="1.20" height="4.00" fill="#f75508" />
<rect x="289.20" y="359.13" width="1.20" height="3.00" fill="#ff6e00" />
<rect x="289.20" y="362.13" width="1.20" height="4.00" fill="#fc6603" />
<rect x="289.20" y="366.13" width="1.20" height="3.00" fill="#fb6304" />
<rect x="289.20" y="369.13" width="1.20" height="2.00" fill="#fe7400" />
<rect x="289.20" y="371.13" width="1.20" height="3.00" fill="#f88b00" />
<rect x="289.20" y="374.13" width="1.20" height="4.00" fill="#fc7e00" />
<rect x="289.20" y="378.13" width="1.20" height="4.00" fill="#f88c00" />
<rect x="289.20" y="382.13" width="1.20" height="4.00" fill="#fa8700" />
<rect x="289.20" y="386.13" width="1.20" height="3.00" fill="#fc7e00" />
<rect x="289.20" y="389.13" width="1.20" height="3.00" fill="#f88e00" />
<rect x="289.20" y="392.13" width="1.20" height="3.00" fill="#c8e607" />
<rect x="289.20" y="395.13" width="1.20" height="4.00" fill="#dcd201" />
<rect x="289.20" y="399.13" width="1.20" height="3.00" fill="#d5d903" />
<rect x="289.20" y="402.13" width="1.20" height="4.00" fill="#cee005" />
<rect x="289.20" y="406.13" width="1.20" height="4.00" fill="#c8e607" />
<rect x="289.20" y="410.13" width="1.20" height="3.00" fill="#cbe306" />
<rect x="289.20" y="413.13" width="1.20" height="2.87" fill="#c9e507" />
<rect x="290.40" y="318.74" width="1.20" height="4.00" fill="#de3c43" />
<rect x="290.40" y="322.74" width="1.20" height="4.00" fill="#df393f" />
<rect x="290.40" y="326.74" width="1.20" height="3.00" fill="#de3c42" />
<rect x="290.40" y="329.74" width="1.20" height="2.00" fill="#e32f2e" />
<rect x="290.40" y="331.74" width="1.20" height="2.00" fill="#df373d" />
<rect x="290.40" y="333.74" width="1.20" height="3.00" fill="#f1450e" />
<rect x="290.40" y="336.74" width="1.20" height="3.00" fill="#f1430e" />
<rect x="290.40" y="339.74" width="1.20" height="4.00" fill="#f1450e" />
<rect x="290.40" y="343.74" width="1.20" height="4.00" fill="#ef4011" />
<rect x="290.40" y="347.74" width="1.20" height="3.00" fill="#f65209" />
<rect x="290.40" y="350.74" width="1.20" height="3.00" fill="#fd6802" />
<rect x="290.40" y="353.74" width="1.20" height="3.00" fill="#f75708" />
<rect x="290.40" y="356.74" width="1.20" height="3.00" fill="#f85a07" />
<rect x="290.40" y="359.74" width="1.20" height="2.00" fill="#f54f0a" />
<rect x="290.40" y="361.74" width="1.20" height="2.00" fill="#f54f0a" />
<rect x="290.40" y="363.74" width="1.20" height="2.00" fill="#f95b06" />
<rect x="290.40" y="365.74" width="1.20" height="4.00" fill="#f5500a" />
<rect x="290.40" y="369.74" width="1.20" height="4.00" fill="#f98700" />
<rect x="290.40" y="373.74" width="1.20" height="4.00" fill="#f98700" />
<rect x="290.40" y="377.74" width="1.20" height="3.00" fill="#fb8100" />
<rect x="290.40" y="380.74" width="1.20" height="2.00" fill="#fc7a00" />
<rect x="290.40" y="382.74" width="1.20" height="3.00" fill="#f88c00" />
<rect x="290.40" y="385.74" width="1.20" height="2.00" fill="#f98b00" />
<rect x="290.40" y="387.74" width="1.20" height="4.00" fill="#fb8100" />
<rect x="290.40" y="391.74" width="1.20" height="4.00" fill="#d4da04" />
<rect x="290.40" y="395.74" width="1.20" height="3.00" fill="#c9e507" />
<rect x="290.40" y="398.74" width="1.20" height="4.00" fill="#e0ce00" />
<rect x="290.40" y="402.74" width="1.20" height="4.00" fill="#cce206" />
<rect x="290.40" y="406.74" width="1.20" height="3.00" fill="#cde106" />
<rect x="290.40" y="409.74" width="1.20" height="3.00" fill="#c7e707" />
<rect x="290.40" y="412.74" width="1.20" height="3.00" fill="#c8e607" />
<rect x="290.40" y="415.74" width="1.20" height="0.26" fill="#d6d803" />
<rect x="291.60" y="317.88" width="1.20" height="2.00" fill="#db5059" />
<rect x="291.60" y="319.88" width="1.20" height="3.00" fill="#db4d55" />
<rect x="291.60" y="322.88" width="1.20" height="3.00" fill="#de3b42" />
<rect x="291.60" y="325.88" width="1.20" height="2.00" fill="#e0343a" />
<rect x="291.60" y="327.88" width="1.20" height="3.00" fill="#de3d44" />
<rect x="291.60" y="330.88" width="1.20" height="4.00" fill="#e22f2f" />
<rect x="291.60" y="334.88" width="1.20" height="2.00" fill="#ef4011" />
<rect x="291.60" y="336.88" width="1.20" height="4.00" fill="#e93720" />
<rect x="291.60" y="340.88" width="1.20" height="3.00" fill="#f44d0b" />
<rect x="291.60" y="343.88" width="1.20" height="3.00" fill="#f44d0b" />
<rect x="291.60" y="346.88" width="1.20" height="4.00" fill="#fa5f05" />
<rect x="291.60" y="350.88" width="1.20" height="4.00" fill="#fd6802" />
<rect x="291.60" y="354.88" width="1.20" height="4.00" fill="#f85907" />
<rect x="291.60" y="358.88" width="1.20" height="2.00" fill="#fa5e05" />
<rect x="291.60" y="360.88" width="1.20" height="3.00" fill="#f75508" />
<rect x="291.60" y="363.88" width="1.20" height="2.00" fill="#fe6a01" />
<rect x="291.60" y="365.88" width="1.20" height="3.00" fill="#fd6902" />
<rect x="291.60" y="368.88" width="1.20" height="2.00" fill="#f88d00" />
<rect x="291.60" y="370.88" width="1.20" height="3.00" fill="#fb8000" />
<rect x="291.60" y="373.88" width="1.20" height="3.00" fill="#fb8200" />
<rect x="291.60" y="376.88" width="1.20" height="3.00" fill="#fa8500" />
<rect x="291.60" y="379.88" width="1.20" height="3.00" fill="#fc7900" />
<rect x="291.60" y="382.88" width="1.20" height="2.00" fill="#f98900" />
<rect x="291.60" y="384.88" width="1.20" height="2.00" fill="#fd7900" />
<rect x="291.60" y="386.88" width="1.20" height="3.00" fill="#fa8600" />
<rect x="291.60" y="389.88" width="1.20" height="4.00" fill="#fc7900" />
<rect x="291.60" y="393.88" width="1.20" height="3.00" fill="#c9e507" />
<rect x="291.60" y="396.88" width="1.20" height="3.00" fill="#cde106" />
<rect x="291.60" y="399.88" width="1.20" height="3.00" fill="#cce206" />
<rect x="291.60" y="402.88" width="1.20" height="3.00" fill="#dcd202" />
<rect x="291.60" y="405.88" width="1.20" height="4.00" fill="#e0ce00" />
<rect x="291.60" y="409.88" width="1.20" height="3.00" fill="#c7e707" />
<rect x="291.60" y="412.88" width="1.20" height="2.00" fill="#d3db04" />
<rect x="291.60" y="414.88" width="1.20" height="1.12" fill="#dfcf00" />
<rect x="292.80" y="312.57" width="1.20" height="3.00" fill="#df373d" />
<rect x="292.80" y="315.57" width="1.20" height="2.00" fill="#e03238" />
<rect x="292.80" y="317.57" width="1.20" height="3.00" fill="#de3f46" />
<rect x="292.80" y="320.57" width="1.20" height="3.00" fill="#e63425" />
<rect x="292.80" y="323.57" width="1.20" height="3.00" fill="#df3b41" />
<rect x="292.80" y="326.57" width="1.20" height="3.00" fill="#e9381f" />
<rect x="292.80" y="329.57" width="1.20" height="3.00" fill="#e83622" />
<rect x="292.80" y="332.57" width="1.20" height="3.00" fill="#e53229" />
<rect x="292.80" y="335.57" width="1.20" height="3.00" fill="#f0420f" />
<rect x="292.80" y="338.57" width="1.20" height="4.00" fill="#ef4011" />
<rect x="292.80" y="342.57" width="1.20" height="3.00" fill="#e63426" />
<rect x="292.80" y="345.57" width="1.20" height="3.00" fill="#f65309" />
<rect x="292.80" y="348.57" width="1.20" height="2.00" fill="#f65309" />
<rect x="292.80" y="350.57" width="1.20" height="3.00" fill="#fe6b01" />
<rect x="292.80" y="353.57" width="1.20" height="3.00" fill="#f95c06" />
<rect x="292.80" y="356.57" width="1.20" height="4.00" fill="#fe6c01" />
<rect x="292.80" y="360.57" width="1.20" height="3.00" fill="#fd6702" />
<rect x="292.80" y="363.57" width="1.20" height="2.00" fill="#f85807" />
<rect x="292.80" y="365.57" width="1.20" height="2.00" fill="#fa5e05" />
<rect x="292.80" y="367.57" width="1.20" height="4.00" fill="#ff6e00" />
<rect x="292.80" y="371.57" width="1.20" height="4.00" fill="#fa8300" />
<rect x="292.80" y="375.57" width="1.20" height="3.00" fill="#fd7800" />
<rect x="292.80" y="378.57" width="1.20" height="4.00" fill="#fa8400" />
<rect x="292.80" y="382.57" width="1.20" height="3.00" fill="#f88d00" />
<rect x="292.80" y="385.57" width="1.20" height="2.00" fill="#f98700" />
<rect x="292.80" y="387.57" width="1.20" height="2.00" fill="#fe7500" />
<rect x="292.80" y="389.57" width="1.20" height="4.00" fill="#f98700" />
<rect x="292.80" y="393.57" width="1.20" height="4.00" fill="#dfcf00" />
<rect x="292.80" y="397.57" width="1.20" height="3.00" fill="#ded001" />
<rect x="292.80" y="400.57" width="1.20" height="3.00" fill="#cde106" />
<rect x="292.80" y="403.57" width="1.20" height="4.00" fill="#dcd201" />
<rect x="292.80" y="407.57" width="1.20" height="3.00" fill="#c9e507" />
<rect x="292.80" y="410.57" width="1.20" height="3.00" fill="#d3db04" />
<rect x="292.80" y="413.57" width="1.20" height="2.43" fill="#d2dc04" />
<rect x="294.00" y="319.86" width="1.20" height="4.00" fill="#df3b41" />
<rect x="294.00" y="323.86" width="1.20" height="4.00" fill="#e63426" />
<rect x="294.00" y="327.86" width="1.20" height="3.00" fill="#de3f46" />
<rect x="294.00" y="330.86" width="1.20" height="3.00" fill="#e0353b" />
<rect x="294.00" y="333.86" width="1.20" height="4.00" fill="#e73425" />
<rect x="294.00" y="337.86" width="1.20" height="2.00" fill="#ef4011" />
<rect x="294.00" y="339.86" width="1.20" height="2.00" fill="#f04110" />
<rect x="294.00" y="341.86" width="1.20" height="3.00" fill="#e73623" />
<rect x="294.00" y="344.86" width="1.20" height="3.00" fill="#ec3c18" />
<rect x="294.00" y="347.86" width="1.20" height="4.00" fill="#fc6603" />
<rect x="294.00" y="351.86" width="1.20" height="3.00" fill="#fe7100" />
<rect x="294.00" y="354.86" width="1.20" height="4.00" fill="#fd6802" />
<rect x="294.00" y="358.86" width="1.20" height="3.00" fill="#fa6005" />
<rect x="294.00" y="361.86" width="1.20" height="3.00" fill="#fc6603" />
<rect x="294.00" y="364.86" width="1.20" height="3.00" fill="#f95d06" />
<rect x="294.00" y="367.86" width="1.20" height="2.00" fill="#ff6e00" />
<rect x="294.00" y="369.86" width="1.20" height="2.00" fill="#fa8500" />
<rect x="294.00" y="371.86" width="1.20" height="4.00" fill="#f88e00" />
<rect x="294.00" y="375.86" width="1.20" height="3.00" fill="#fc7c00" />
<rect x="294.00" y="378.86" width="1.20" height="2.00" fill="#f79000" />
<rect x="294.00" y="380.86" width="1.20" height="3.00" fill="#fc7c00" />
<rect x="294.00" y="383.86" width="1.20" height="4.00" fill="#f88f00" />
<rect x="294.00" y="387.86" width="1.20" height="4.00" fill="#f88c00" />
<rect x="294.00" y="391.86" width="1.20" height="3.00" fill="#c9e507" />
<rect x="294.00" y="394.86" width="1.20" height="2.00" fill="#d6d803" />
<rect x="294.00" y="396.86" width="1.20" height="4.00" fill="#d1dd04" />
<rect x="294.00" y="400.86" width="1.20" height="2.00" fill="#cae406" />
<rect x="294.00" y="402.86" width="1.20" height="4.00" fill="#ded001" />
<rect x="294.00" y="406.86" width="1.20" height="3.00" fill="#cae406" />
<rect x="294.00" y="409.86" width="1.20" height="2.00" fill="#e1cd00" />
<rect x="294.00" y="411.86" width="1.20" height="3.00" fill="#cae407" />
<rect x="294.00" y="414.86" width="1.20" height="1.14" fill="#cfdf05" />
<rect x="295.20" y="316.99" width="1.20" height="2.00" fill="#df383e" />
<rect x="295.20" y="318.99" width="1.20" height="4.00" fill="#df3b41" />
<rect x="295.20" y="322.99" width="1.20" height="4.00" fill="#e93720" />
<rect x="295.20" y="326.99" width="1.20" height="3.00" fill="#df373d" />
<rect x="295.20" y="329.99" width="1.20" height="4.00" fill="#e22f2f" />
<rect x="295.20" y="333.99" width="1.20" height="2.00" fill="#ee3f13" />
<rect x="295.20" y="335.99" width="1.20" height="2.00" fill="#f3490c" />
<rect x="295.20" y="337.99" width="1.20" height="4.00" fill="#eb3a1c" />
<rect x="295.20" y="341.99" width="1.20" height="4.00" fill="#e73525" />
<rect x="295.20" y="345.99" width="1.20" height="3.00" fill="#f95b06" />
<rect x="295.20" y="348.99" width="1.20" height="3.00" fill="#fc6603" />
<rect x="295.20" y="351.99" width="1.20" height="2.00" fill="#f95d06" />
<rect x="295.20" y="353.99" width="1.20" height="2.00" fill="#fd6802" />
<rect x="295.20" y="355.99" width="1.20" height="4.00" fill="#fe6a01" />
<rect x="295.20" y="359.99" width="1.20" height="4.00" fill="#f65309" />
<rect x="295.20" y="363.99" width="1.20" height="3.00" fill="#fe7300" />
<rect x="295.20" y="366.99" width="1.20" height="3.00" fill="#fd6702" />
<rect x="295.20" y="369.99" width="1.20" height="4.00" fill="#f79100" />
<rect x="295.20" y="373.99" width="1.20" height="3.00" fill="#fd7900" />
<rect x="295.20" y="376.99" width="1.20" height="3.00" fill="#f88d00" />
<rect x="295.20" y="379.99" width="1.20" height="4.00" fill="#f88e00" />
<rect x="295.20" y="383.99" width="1.20" height="3.00" fill="#f88f00" />
<rect x="295.20" y="386.99" width="1.20" height="3.00" fill="#fc7b00" />
<rect x="295.20" y="389.99" width="1.20" height="3.00" fill="#fa8300" />
<rect x="295.20" y="392.99" width="1.20" height="4.00" fill="#d4da04" />
<rect x="295.20" y="396.99" width="1.20" height="3.00" fill="#d2dc04" />
<rect x="295.20" y="399.99" width="1.20" height="3.00" fill="#cbe306" />
<rect x="295.20" y="402.99" width="1.20" height="3.00" fill="#c9e507" />
<rect x="295.20" y="405.99" width="1.20" height="2.00" fill="#cee005" />
<rect x="295.20" y="407.99" width="1.20" height="3.00" fill="#d8d603" />
<rect x="295.20" y="410.99" width="1.20" height="2.00" fill="#cce206" />
<rect x="295.20" y="412.99" width="1.20" height="3.00" fill="#d6d803" />
<rect x="295.20" y="415.99" width="1.20" height="0.01" fill="#dfcf01" />
<rect x="296.40" y="313.44" width="1.20" height="3.00" fill="#e12f35" />
<rect x="296.40" y="316.44" width="1.20" height="3.00" fill="#e0343a" />
<rect x="296.40" y="319.44" width="1.20" height="3.00" fill="#de3d44" />
<rect x="296.40" y="322.44" width="1.20" height="4.00" fill="#ea381e" />
<rect x="296.40" y="326.44" width="1.20" height="3.00" fill="#df383e" />
<rect x="296.40" y="329.44" width="1.20" height="3.00" fill="#e63425" />
<rect x="296.40" y="332.44" width="1.20" height="4.00" fill="#e12e34" />
<rect x="296.40" y="336.44" width="1.20" height="3.00" fill="#e63426" />
<rect x="296.40" y="339.44" width="1.20" height="3.00" fill="#f34b0c" />
<rect x="296.40" y="342.44" width="1.20" height="4.00" fill="#ee3e14" />
<rect x="296.40" y="346.44" width="1.20" height="4.00" fill="#ff6f00" />
<rect x="296.40" y="350.44" width="1.20" height="3.00" fill="#f95c06" />
<rect x="296.40" y="353.44" width="1.20" height="3.00" fill="#ff6d00" />
<rect x="296.40" y="356.44" width="1.20" height="2.00" fill="#fe7100" />
<rect x="296.40" y="358.44" width="1.20" height="2.00" fill="#f95c06" />
<rect x="296.40" y="360.44" width="1.20" height="3.00" fill="#f5500a" />
<rect x="296.40" y="363.44" width="1.20" height="4.00" fill="#f75708" />
<rect x="296.40" y="367.44" width="1.20" height="3.00" fill="#fa6005" />
<rect x="296.40" y="370.44" width="1.20" height="2.00" fill="#fd7800" />
<rect x="296.40" y="372.44" width="1.20" height="3.00" fill="#fc7900" />
<rect x="296.40" y="375.44" width="1.20" height="4.00" fill="#f79100" />
<rect x="296.40" y="379.44" width="1.20" height="4.00" fill="#fd7500" />
<rect x="296.40" y="383.44" width="1.20" height="3.00" fill="#fa8400" />
<rect x="296.40" y="386.44" width="1.20" height="3.00" fill="#fb8200" />
<rect x="296.40" y="389.44" width="1.20" height="4.00" fill="#fd7900" />
<rect x="296.40" y="393.44" width="1.20" height="3.00" fill="#d2dc04" />
<rect x="296.40" y="396.44" width="1.20" height="3.00" fill="#cee005" />
<rect x="296.40" y="399.44" width="1.20" height="3.00" fill="#dcd201" />
<rect x="296.40" y="402.44" width="1.20" height="3.00" fill="#cbe306" />
<rect x="296.40" y="405.44" width="1.20" height="3.00" fill="#d1dd05" />
<rect x="296.40" y="408.44" width="1.20" height="3.00" fill="#d6d803" />
<rect x="296.40" y="411.44" width="1.20" height="4.00" fill="#dfcf01" />
<rect x="296.40" y="415.44" width="1.20" height="0.56" fill="#ddd101" />
<rect x="297.60" y="315.29" width="1.20" height="2.00" fill="#de3e45" />
<rect x="297.60" y="317.29" width="1.20" height="3.00" fill="#e03339" />
<rect x="297.60" y="320.29" width="1.20" height="4.00" fill="#e63427" />
<rect x="297.60" y="324.29" width="1.20" height="4.00" fill="#e73525" />
<rect x="297.60" y="328.29" width="1.20" height="3.00" fill="#e9381f" />
<rect x="297.60" y="331.29" width="1.20" height="2.00" fill="#e3302d" />
<rect x="297.60" y="333.29" width="1.20" height="2.00" fill="#ec3c17" />
<rect x="297.60" y="335.29" width="1.20" height="3.00" fill="#f44e0b" />
<rect x="297.60" y="338.29" width="1.20" height="3.00" fill="#f1430e" />
<rect x="297.60" y="341.29" width="1.20" height="3.00" fill="#f1430e" />
<rect x="297.60" y="344.29" width="1.20" height="3.00" fill="#e9381e" />
<rect x="297.60" y="347.29" width="1.20" height="3.00" fill="#fd6802" />
<rect x="297.60" y="350.29" width="1.20" height="4.00" fill="#f85907" />
<rect x="297.60" y="354.29" width="1.20" height="2.00" fill="#fc6603" />
<rect x="297.60" y="356.29" width="1.20" height="4.00" fill="#fb6204" />
<rect x="297.60" y="360.29" width="1.20" height="2.00" fill="#f95d06" />
<rect x="297.60" y="362.29" width="1.20" height="3.00" fill="#ff7000" />
<rect x="297.60" y="365.29" width="1.20" height="3.00" fill="#fd6802" />
<rect x="297.60" y="368.29" width="1.20" height="4.00" fill="#fa8300" />
<rect x="297.60" y="372.29" width="1.20" height="3.00" fill="#fa8500" />
<rect x="297.60" y="375.29" width="1.20" height="2.00" fill="#f88f00" />
<rect x="297.60" y="377.29" width="1.20" height="2.00" fill="#f79100" />
<rect x="297.60" y="379.29" width="1.20" height="2.00" fill="#f79000" />
<rect x="297.60" y="381.29" width="1.20" height="4.00" fill="#fc7d00" />
<rect x="297.60" y="385.29" width="1.20" height="3.00" fill="#fd7600" />
<rect x="297.60" y="388.29" width="1.20" height="4.00" fill="#fd7900" />
<rect x="297.60" y="392.29" width="1.20" height="4.00" fill="#dcd201" />
<rect x="297.60" y="396.29" width="1.20" height="3.00" fill="#cbe306" />
<rect x="297.60" y="399.29" width="1.20" height="2.00" fill="#d6d803" />
<rect x="297.60" y="401.29" width="1.20" height="2.00" fill="#d7d703" />
<rect x="297.60" y="403.29" width="1.20" height="4.00" fill="#d0de05" />
<rect x="297.60" y="407.29" width="1.20" height="3.00" fill="#d9d502" />
<rect x="297.60" y="410.29" width="1.20" height="2.00" fill="#d9d502" />
<rect x="297.60" y="412.29" width="1.20" height="3.71" fill="#cde106" />
<rect x="298.80" y="315.01" width="1.20" height="2.00" fill="#db515a" />
<rect x="298.80" y="317.01" width="1.20" height="3.00" fill="#df3940" />
<rect x="298.80" y="320.01" width="1.20" height="4.00" fill="#df383f" />
<rect x="298.80" y="324.01" width="1.20" height="3.00" fill="#e73524" />
<rect x="298.80" y="327.01" width="1.20" height="2.00" fill="#e22e30" />
<rect x="298.80" y="329.01" width="1.20" height="3.00" fill="#ea391d" />
<rect x="298.80" y="332.01" width="1.20" height="3.00" fill="#de4046" />
<rect x="298.80" y="335.01" width="1.20" height="2.00" fill="#f3490c" />
<rect x="298.80" y="337.01" width="1.20" height="4.00" fill="#e5322a" />
<rect x="298.80" y="341.01" width="1.20" height="4.00" fill="#f34a0c" />
<rect x="298.80" y="345.01" width="1.20" height="4.00" fill="#fe7200" />
<rect x="298.80" y="349.01" width="1.20" height="4.00" fill="#fe7300" />
<rect x="298.80" y="353.01" width="1.20" height="3.00" fill="#f75608" />
<rect x="298.80" y="356.01" width="1.20" height="2.00" fill="#fe6c01" />
<rect x="298.80" y="358.01" width="1.20" height="3.00" fill="#f5510a" />
<rect x="298.80" y="361.01" width="1.20" height="3.00" fill="#fd6902" />
<rect x="298.80" y="364.01" width="1.20" height="4.00" fill="#fe6c01" />
<rect x="298.80" y="368.01" width="1.20" height="2.00" fill="#f79100" />
<rect x="298.80" y="370.01" width="1.20" height="4.00" fill="#f98900" />
<rect x="298.80" y="374.01" width="1.20" height="4.00" fill="#fa8300" />
<rect x="298.80" y="378.01" width="1.20" height="3.00" fill="#fc7d00" />
<rect x="298.80" y="381.01" width="1.20" height="3.00" fill="#fd7500" />
<rect x="298.80" y="384.01" width="1.20" height="3.00" fill="#f98900" />
<rect x="298.80" y="387.01" width="1.20" height="4.00" fill="#fa8700" />
<rect x="298.80" y="391.01" width="1.20" height="4.00" fill="#ded001" />
<rect x="298.80" y="395.01" width="1.20" height="3.00" fill="#cce206" />
<rect x="298.80" y="398.01" width="1.20" height="3.00" fill="#d5d903" />
<rect x="298.80" y="401.01" width="1.20" height="3.00" fill="#cfdf05" />
<rect x="298.80" y="404.01" width="1.20" height="4.00" fill="#cfdf05" />
<rect x="298.80" y="408.01" width="1.20" height="2.00" fill="#c9e507" />
<rect x="298.80" y="410.01" width="1.20" height="4.00" fill="#dbd302" />
<rect x="298.80" y="414.01" width="1.20" height="1.99" fill="#d7d703" />
<rect x="300.00" y="315.96" width="1.20" height="3.00" fill="#dd454c" />
<rect x="300.00" y="318.96" width="1.20" height="2.00" fill="#e0343a" />
<rect x="300.00" y="320.96" width="1.20" height="3.00" fill="#df3940" />
<rect x="300.00" y="323.96" width="1.20" height="2.00" fill="#df363c" />
<rect x="300.00" y="325.96" width="1.20" height="4.00" fill="#e73525" />
<rect x="300.00" y="329.96" width="1.20" height="4.00" fill="#e4312b" />
<rect x="300.00" y="333.96" width="1.20" height="4.00" fill="#e73524" />
<rect x="300.00" y="337.96" width="1.20" height="4.00" fill="#f2470d" />
<rect x="300.00" y="341.96" width="1.20" height="2.00" fill="#e83622" />
<rect x="300.00" y="343.96" width="1.20" height="3.00" fill="#ec3c17" />
<rect x="300.00" y="346.96" width="1.20" height="2.00" fill="#f65309" />
<rect x="300.00" y="348.96" width="1.20" height="4.00" fill="#f75508" />
<rect x="300.00" y="352.96" width="1.20" height="3.00" fill="#f5500a" />
<rect x="300.00" y="355.96" width="1.20" height="2.00" fill="#fe6b01" />
<rect x="300.00" y="357.96" width="1.20" height="2.00" fill="#f65409" />
<rect x="300.00" y="359.96" width="1.20" height="2.00" fill="#fe7200" />
<rect x="300.00" y="361.96" width="1.20" height="4.00" fill="#f95d06" />
<rect x="300.00" y="365.96" width="1.20" height="3.00" fill="#fe7100" />
<rect x="300.00" y="368.96" width="1.20" height="3.00" fill="#fd7600" />
<rect x="300.00" y="371.96" width="1.20" height="3.00" fill="#f88f00" />
<rect x="300.00" y="374.96" width="1.20" height="4.00" fill="#fc7c00" />
<rect x="300.00" y="378.96" width="1.20" height="3.00" fill="#fb8000" />
<rect x="300.00" y="381.96" width="1.20" height="3.00" fill="#fa8500" />
<rect x="300.00" y="384.96" width="1.20" height="3.00" fill="#f88f00" />
<rect x="300.00" y="387.96" width="1.20" height="3.00" fill="#fa8300" />
<rect x="300.00" y="390.96" width="1.20" height="2.00" fill="#dbd302" />
<rect x="300.00" y="392.96" width="1.20" height="4.00" fill="#dfcf01" />
<rect x="300.00" y="396.96" width="1.20" height="3.00" fill="#d5d903" />
<rect x="300.00" y="399.96" width="1.20" height="2.00" fill="#cee005" />
<rect x="300.00" y="401.96" width="1.20" height="2.00" fill="#d4da04" />
<rect x="300.00" y="403.96" width="1.20" height="3.00" fill="#c9e507" />
<rect x="300.00" y="406.96" width="1.20" height="4.00" fill="#e0ce00" />
<rect x="300.00" y="410.96" width="1.20" height="3.00" fill="#cce206" />
<rect x="300.00" y="413.96" width="1.20" height="2.04" fill="#d7d703" />
<rect x="301.20" y="317.31" width="1.20" height="3.00" fill="#df3a40" />
<rect x="301.20" y="320.31" width="1.20" height="4.00" fill="#df393f" />
<rect x="301.20" y="324.31" width="1.20" height="3.00" fill="#ea381e" />
<rect x="301.20" y="327.31" width="1.20" height="2.00" fill="#e93720" />
<rect x="301.20" y="329.31" width="1.20" height="2.00" fill="#e9381f" />
<rect x="301.20" y="331.31" width="1.20" height="4.00" fill="#e53229" />
<rect x="301.20" y="335.31" width="1.20" height="3.00" fill="#ee3f13" />
<rect x="301.20" y="338.31" width="1.20" height="3.00" fill="#f44d0b" />
<rect x="301.20" y="341.31" width="1.20" height="3.00" fill="#e93820" />
<rect x="301.20" y="344.31" width="1.20" height="4.00" fill="#e83721" />
<rect x="301.20" y="348.31" width="1.20" height="3.00" fill="#fb6104" />
<rect x="301.20" y="351.31" width="1.20" height="4.00" fill="#fd6802" />
<rect x="301.20" y="355.31" width="1.20" height="2.00" fill="#ff6f00" />
<rect x="301.20" y="357.31" width="1.20" height="4.00" fill="#f95c06" />
<rect x="301.20" y="361.31" width="1.20" height="4.00" fill="#f85a07" />
<rect x="301.20" y="365.31" width="1.20" height="2.00" fill="#f54f0a" />
<rect x="301.20" y="367.31" width="1.20" height="2.00" fill="#fe6c01" />
<rect x="301.20" y="369.31" width="1.20" height="2.00" fill="#fc7b00" />
<rect x="301.20" y="371.31" width="1.20" height="3.00" fill="#f88d00" />
<rect x="301.20" y="374.31" width="1.20" height="2.00" fill="#fc7e00" />
<rect x="301.20" y="376.31" width="1.20" height="3.00" fill="#fc7a00" />
<rect x="301.20" y="379.31" width="1.20" height="4.00" fill="#fe7400" />
<rect x="301.20" y="383.31" width="1.20" height="2.00" fill="#f88d00" />
<rect x="301.20" y="385.31" width="1.20" height="3.00" fill="#fe7400" />
<rect x="301.20" y="388.31" width="1.20" height="3.00" fill="#fe7400" />
<rect x="301.20" y="391.31" width="1.20" height="3.00" fill="#c9e507" />
<rect x="301.20" y="394.31" width="1.20" height="2.00" fill="#dfcf01" />
<rect x="301.20" y="396.31" width="1.20" height="3.00" fill="#c8e607" />
<rect x="301.20" y="399.31" width="1.20" height="3.00" fill="#c7e707" />
<rect x="301.20" y="402.31" width="1.20" height="2.00" fill="#d1dd05" />
<rect x="301.20" y="404.31" width="1.20" height="3.00" fill="#d9d502" />
<rect x="301.20" y="407.31" width="1.20" height="2.00" fill="#e0ce00" />
<rect x="301.20" y="409.31" width="1.20" height="4.00" fill="#d2dc04" />
<rect x="301.20" y="413.31" width="1.20" height="2.69" fill="#c7e707" />
<rect x="302.40" y="314.14" width="1.20" height="2.00" fill="#dc4951" />
<rect x="302.40" y="316.14" width="1.20" height="3.00" fill="#db5059" />
<rect x="302.40" y="319.14" width="1.20" height="2.00" fill="#da535c" />
<rect x="302.40" y="321.14" width="1.20" height="3.00" fill="#e4312b" />
<rect x="302.40" y="324.14" width="1.20" height="3.00" fill="#e22e30" />
<rect x="302.40" y="327.14" width="1.20" height="3.00" fill="#e4302c" />
<rect x="302.40" y="330.14" width="1.20" height="3.00" fill="#df383e" />
<rect x="302.40" y="333.14" width="1.20" height="4.00" fill="#f1440e" />
<rect x="302.40" y="337.14" width="1.20" height="3.00" fill="#f3490c" />
<rect x="302.40" y="340.14" width="1.20" height="4.00" fill="#eb3a1b" />
<rect x="302.40" y="344.14" width="1.20" height="3.00" fill="#f04010" />
<rect x="302.40" y="347.14" width="1.20" height="2.00" fill="#fd6702" />
<rect x="302.40" y="349.14" width="1.20" height="4.00" fill="#f5500a" />
<rect x="302.40" y="353.14" width="1.20" height="4.00" fill="#f95d06" />
<rect x="302.40" y="357.14" width="1.20" height="3.00" fill="#ff6f00" />
<rect x="302.40" y="360.14" width="1.20" height="3.00" fill="#fe7100" />
<rect x="302.40" y="363.14" width="1.20" height="3.00" fill="#fe7100" />
<rect x="302.40" y="366.14" width="1.20" height="4.00" fill="#f65209" />
<rect x="302.40" y="370.14" width="1.20" height="3.00" fill="#fc7d00" />
<rect x="302.40" y="373.14" width="1.20" height="3.00" fill="#f98a00" />
<rect x="302.40" y="376.14" width="1.20" height="2.00" fill="#fb7f00" />
<rect x="302.40" y="378.14" width="1.20" height="2.00" fill="#f79000" />
<rect x="302.40" y="380.14" width="1.20" height="3.00" fill="#fd7700" />
<rect x="302.40" y="383.14" width="1.20" height="4.00" fill="#f88c00" />
<rect x="302.40" y="387.14" width="1.20" height="3.00" fill="#fa8400" />
<rect x="302.40" y="390.14" width="1.20" height="4.00" fill="#cde106" />
<rect x="302.40" y="394.14" width="1.20" height="3.00" fill="#d1dd05" />
<rect x="302.40" y="397.14" width="1.20" height="3.00" fill="#d5d903" />
<rect x="302.40" y="400.14" width="1.20" height="2.00" fill="#dad402" />
<rect x="302.40" y="402.14" width="1.20" height="4.00" fill="#cee006" />
<rect x="302.40" y="406.14" width="1.20" height="3.00" fill="#cee005" />
<rect x="302.40" y="409.14" width="1.20" height="3.00" fill="#d6d803" />
<rect x="302.40" y="412.14" width="1.20" height="2.00" fill="#dfcf01" />
<rect x="302.40" y="414.14" width="1.20" height="1.86" fill="#d6d803" />
<rect x="303.60" y="319.55" width="1.20" height="3.00" fill="#e03439" />
<rect x="303.60" y="322.55" width="1.20" height="4.00" fill="#e0353a" />
<rect x="303.60" y="326.55" width="1.20" height="2.00" fill="#e12e34" />
<rect x="303.60" y="328.55" width="1.20" height="3.00" fill="#e12f34" />
<rect x="303.60" y="331.55" width="1.20" height="3.00" fill="#e0353b" />
<rect x="303.60" y="334.55" width="1.20" height="3.00" fill="#ed3d15" />
<rect x="303.60" y="337.55" width="1.20" height="3.00" fill="#f3490c" />
<rect x="303.60" y="340.55" width="1.20" height="3.00" fill="#f2460d" />
<rect x="303.60" y="343.55" width="1.20" height="2.00" fill="#f1450e" />
<rect x="303.60" y="345.55" width="1.20" height="3.00" fill="#f5500a" />
<rect x="303.60" y="348.55" width="1.20" height="2.00" fill="#fb6204" />
<rect x="303.60" y="350.55" width="1.20" height="2.00" fill="#fa5e05" />
<rect x="303.60" y="352.55" width="1.20" height="2.00" fill="#fe7000" />
<rect x="303.60" y="354.55" width="1.20" height="4.00" fill="#f75608" />
<rect x="303.60" y="358.55" width="1.20" height="2.00" fill="#fc6403" />
<rect x="303.60" y="360.55" width="1.20" height="3.00" fill="#fc6503" />
<rect x="303.60" y="363.55" width="1.20" height="2.00" fill="#f85907" />
<rect x="303.60" y="365.55" width="1.20" height="3.00" fill="#ff6f00" />
<rect x="303.60" y="368.55" width="1.20" height="2.00" fill="#fc7b00" />
<rect x="303.60" y="370.55" width="1.20" height="4.00" fill="#fc7a00" />
<rect x="303.60" y="374.55" width="1.20" height="4.00" fill="#fd7900" />
<rect x="303.60" y="378.55" width="1.20" height="3.00" fill="#f89000" />
<rect x="303.60" y="381.55" width="1.20" height="3.00" fill="#f79100" />
<rect x="303.60" y="384.55" width="1.20" height="3.00" fill="#f98700" />
<rect x="303.60" y="387.55" width="1.20" height="3.00" fill="#fb8200" />
<rect x="303.60" y="390.55" width="1.20" height="3.00" fill="#d0de05" />
<rect x="303.60" y="393.55" width="1.20" height="4.00" fill="#e1cd00" />
<rect x="303.60" y="397.55" width="1.20" height="3.00" fill="#dfcf01" />
<rect x="303.60" y="400.55" width="1.20" height="3.00" fill="#dcd202" />
<rect x="303.60" y="403.55" width="1.20" height="4.00" fill="#d4da04" />
<rect x="303.60" y="407.55" width="1.20" height="3.00" fill="#cbe306" />
<rect x="303.60" y="410.55" width="1.20" height="3.00" fill="#d6d803" />
<rect x="303.60" y="413.55" width="1.20" height="2.45" fill="#cfdf05" />
<rect x="304.80" y="312.78" width="1.20" height="4.00" fill="#df3940" />
<rect x="304.80" y="316.78" width="1.20" height="2.00" fill="#da535c" />
<rect x="304.80" y="318.78" width="1.20" height="3.00" fill="#de3d43" />
<rect x="304.80" y="321.78" width="1.20" height="4.00" fill="#e53328" />
<rect x="304.80" y="325.78" width="1.20" height="3.00" fill="#e12f34" />
<rect x="304.80" y="328.78" width="1.20" height="3.00" fill="#df373d" />
<rect x="304.80" y="331.78" width="1.20" height="2.00" fill="#df3a40" />
<rect x="304.80" y="333.78" width="1.20" height="3.00" fill="#f2460d" />
<rect x="304.80" y="336.78" width="1.20" height="3.00" fill="#f44d0b" />
<rect x="304.80" y="339.78" width="1.20" height="4.00" fill="#e9381f" />
<rect x="304.80" y="343.78" width="1.20" height="3.00" fill="#eb3a1b" />
<rect x="304.80" y="346.78" width="1.20" height="2.00" fill="#f44e0b" />
<rect x="304.80" y="348.78" width="1.20" height="4.00" fill="#f5500a" />
<rect x="304.80" y="352.78" width="1.20" height="3.00" fill="#fa6005" />
<rect x="304.80" y="355.78" width="1.20" height="3.00" fill="#f5510a" />
<rect x="304.80" y="358.78" width="1.20" height="3.00" fill="#ff7000" />
<rect x="304.80" y="361.78" width="1.20" height="3.00" fill="#ff6d00" />
<rect x="304.80" y="364.78" width="1.20" height="3.00" fill="#f95c06" />
<rect x="304.80" y="367.78" width="1.20" height="4.00" fill="#f65309" />
<rect x="304.80" y="371.78" width="1.20" height="3.00" fill="#f88c00" />
<rect x="304.80" y="374.78" width="1.20" height="2.00" fill="#fb8200" />
<rect x="304.80" y="376.78" width="1.20" height="3.00" fill="#fc7b00" />
<rect x="304.80" y="379.78" width="1.20" height="4.00" fill="#fd7700" />
<rect x="304.80" y="383.78" width="1.20" height="3.00" fill="#fb8100" />
<rect x="304.80" y="386.78" width="1.20" height="3.00" fill="#f88e00" />
<rect x="304.80" y="389.78" width="1.20" height="3.00" fill="#fc7b00" />
<rect x="304.80" y="392.78" width="1.20" height="4.00" fill="#cee005" />
<rect x="304.80" y="396.78" width="1.20" height="3.00" fill="#d1dd05" />
<rect x="304.80" y="399.78" width="1.20" height="3.00" fill="#e1cd00" />
<rect x="304.80" y="402.78" width="1.20" height="2.00" fill="#cfdf05" />
<rect x="304.80" y="404.78" width="1.20" height="3.00" fill="#dcd201" />
<rect x="304.80" y="407.78" width="1.20" height="4.00" fill="#d6d803" />
<rect x="304.80" y="411.78" width="1.20" height="3.00" fill="#cae407" />
<rect x="304.80" y="414.78" width="1.20" height="1.22" fill="#cee005" />
<rect x="306.00" y="313.85" width="1.20" height="3.00" fill="#e03338" />
<rect x="306.00" y="316.85" width="1.20" height="4.00" fill="#e03137" />
<rect x="306.00" y="320.85" width="1.20" height="2.00" fill="#e3302e" />
<rect x="306.00" y="322.85" width="1.20" height="2.00" fill="#e32f2e" />
<rect x="306.00" y="324.85" width="1.20" height="3.00" fill="#df373d" />
<rect x="306.00" y="327.85" width="1.20" height="4.00" fill="#e03238" />
<rect x="306.00" y="331.85" width="1.20" height="2.00" fill="#df363c" />
<rect x="306.00" y="333.85" width="1.20" height="3.00" fill="#eb3b1a" />
<rect x="306.00" y="336.85" width="1.20" height="2.00" fill="#ea391c" />
<rect x="306.00" y="338.85" width="1.20" height="2.00" fill="#e53229" />
<rect x="306.00" y="340.85" width="1.20" height="3.00" fill="#e9381f" />
<rect x="306.00" y="343.85" width="1.20" height="3.00" fill="#f0420f" />
<rect x="306.00" y="346.85" width="1.20" height="2.00" fill="#f65209" />
<rect x="306.00" y="348.85" width="1.20" height="2.00" fill="#f65209" />
<rect x="306.00" y="350.85" width="1.20" height="3.00" fill="#fe7100" />
<rect x="306.00" y="353.85" width="1.20" height="4.00" fill="#fd6902" />
<rect x="306.00" y="357.85" width="1.20" height="3.00" fill="#fb6104" />
<rect x="306.00" y="360.85" width="1.20" height="2.00" fill="#f65309" />
<rect x="306.00" y="362.85" width="1.20" height="2.00" fill="#fa6005" />
<rect x="306.00" y="364.85" width="1.20" height="3.00" fill="#fe6c01" />
<rect x="306.00" y="367.85" width="1.20" height="3.00" fill="#fe6a01" />
<rect x="306.00" y="370.85" width="1.20" height="2.00" fill="#f88b00" />
<rect x="306.00" y="372.85" width="1.20" height="4.00" fill="#f98700" />
<rect x="306.00" y="376.85" width="1.20" height="3.00" fill="#fc7d00" />
<rect x="306.00" y="379.85" width="1.20" height="3.00" fill="#fd7600" />
<rect x="306.00" y="382.85" width="1.20" height="3.00" fill="#f88d00" />
<rect x="306.00" y="385.85" width="1.20" height="3.00" fill="#fa8600" />
<rect x="306.00" y="388.85" width="1.20" height="3.00" fill="#fc7c00" />
<rect x="306.00" y="391.85" width="1.20" height="3.00" fill="#d5d904" />
<rect x="306.00" y="394.85" width="1.20" height="3.00" fill="#ddd101" />
<rect x="306.00" y="397.85" width="1.20" height="4.00" fill="#d2dc04" />
<rect x="306.00" y="401.85" width="1.20" height="4.00" fill="#dad402" />
<rect x="306.00" y="405.85" width="1.20" height="2.00" fill="#d0de05" />
<rect x="306.00" y="407.85" width="1.20" height="4.00" fill="#d8d602" />
<rect x="306.00" y="411.85" width="1.20" height="4.00" fill="#dfcf01" />
<rect x="306.00" y="415.85" width="1.20" height="0.15" fill="#d1dd05" />
<rect x="307.20" y="316.51" width="1.20" height="3.00" fill="#dc4850" />
<rect x="307.20" y="319.51" width="1.20" height="4.00" fill="#dc4c54" />
<rect x="307.20" y="323.51" width="1.20" height="4.00" fill="#e3302d" />
<rect x="307.20" y="327.51" width="1.20" height="2.00" fill="#de3d44" />
<rect x="307.20" y="329.51" width="1.20" height="2.00" fill="#e13035" />
<rect x="307.20" y="331.51" width="1.20" height="3.00" fill="#de3f46" />
<rect x="307.20" y="334.51" width="1.20" height="4.00" fill="#ed3d15" />
<rect x="307.20" y="338.51" width="1.20" height="2.00" fill="#f3490c" />
<rect x="307.20" y="340.51" width="1.20" height="3.00" fill="#e73524" />
<rect x="307.20" y="343.51" width="1.20" height="3.00" fill="#f34b0c" />
<rect x="307.20" y="346.51" width="1.20" height="4.00" fill="#fe6b01" />
<rect x="307.20" y="350.51" width="1.20" height="3.00" fill="#fe6a01" />
<rect x="307.20" y="353.51" width="1.20" height="2.00" fill="#fe6a01" />
<rect x="307.20" y="355.51" width="1.20" height="4.00" fill="#f95d06" />
<rect x="307.20" y="359.51" width="1.20" height="4.00" fill="#fc6503" />
<rect x="307.20" y="363.51" width="1.20" height="2.00" fill="#fa6005" />
<rect x="307.20" y="365.51" width="1.20" height="3.00" fill="#fb6204" />
<rect x="307.20" y="368.51" width="1.20" height="2.00" fill="#f79000" />
<rect x="307.20" y="370.51" width="1.20" height="4.00" fill="#f98b00" />
<rect x="307.20" y="374.51" width="1.20" height="2.00" fill="#fa8500" />
<rect x="307.20" y="376.51" width="1.20" height="2.00" fill="#fa8300" />
<rect x="307.20" y="378.51" width="1.20" height="4.00" fill="#fe7400" />
<rect x="307.20" y="382.51" width="1.20" height="3.00" fill="#fc7d00" />
<rect x="307.20" y="385.51" width="1.20" height="3.00" fill="#f88f00" />
<rect x="307.20" y="388.51" width="1.20" height="3.00" fill="#fb7e00" />
<rect x="307.20" y="391.51" width="1.20" height="2.00" fill="#dad402" />
<rect x="307.20" y="393.51" width="1.20" height="4.00" fill="#e1cd00" />
<rect x="307.20" y="397.51" width="1.20" height="3.00" fill="#cde106" />
<rect x="307.20" y="400.51" width="1.20" height="2.00" fill="#d3db04" />
<rect x="307.20" y="402.51" width="1.20" height="2.00" fill="#dad402" />
<rect x="307.20" y="404.51" width="1.20" height="3.00" fill="#ded001" />
<rect x="307.20" y="407.51" width="1.20" height="3.00" fill="#cde106" />
<rect x="307.20" y="410.51" width="1.20" height="3.00" fill="#c9e507" />
<rect x="307.20" y="413.51" width="1.20" height="2.00" fill="#dfcf01" />
<rect x="307.20" y="415.51" width="1.20" height="0.49" fill="#d6d803" />
<rect x="308.40" y="312.18" width="1.20" height="4.00" fill="#df383e" />
<rect x="308.40" y="316.18" width="1.20" height="4.00" fill="#df363c" />
<rect x="308.40" y="320.18" width="1.20" height="3.00" fill="#df373d" />
<rect x="308.40" y="323.18" width="1.20" height="3.00" fill="#e93720" />
<rect x="308.40" y="326.18" width="1.20" height="3.00" fill="#e22f2f" />
<rect x="308.40" y="329.18" width="1.20" height="3.00" fill="#df3a40" />
<rect x="308.40" y="332.18" width="1.20" height="4.00" fill="#e12e33" />
<rect x="308.40" y="336.18" width="1.20" height="4.00" fill="#e83721" />
<rect x="308.40" y="340.18" width="1.20" height="2.00" fill="#f2470d" />
<rect x="308.40" y="342.18" width="1.20" height="3.00" fill="#f34a0c" />
<rect x="308.40" y="345.18" width="1.20" height="3.00" fill="#ff6d00" />
<rect x="308.40" y="348.18" width="1.20" height="4.00" fill="#f85807" />
<rect x="308.40" y="352.18" width="1.20" height="3.00" fill="#fe7100" />
<rect x="308.40" y="355.18" width="1.20" height="3.00" fill="#ff6e00" />
<rect x="308.40" y="358.18" width="1.20" height="2.00" fill="#fa6005" />
<rect x="308.40" y="360.18" width="1.20" height="2.00" fill="#fe6c01" />
<rect x="308.40" y="362.18" width="1.20" height="3.00" fill="#fd6902" />
<rect x="308.40" y="365.18" width="1.20" height="3.00" fill="#f65209" />
<rect x="308.40" y="368.18" width="1.20" height="4.00" fill="#f88f00" />
<rect x="308.40" y="372.18" width="1.20" height="3.00" fill="#fd7500" />
<rect x="308.40" y="375.18" width="1.20" height="2.00" fill="#fd7500" />
<rect x="308.40" y="377.18" width="1.20" height="3.00" fill="#fc7b00" />
<rect x="308.40" y="380.18" width="1.20" height="4.00" fill="#fb8100" />
<rect x="308.40" y="384.18" width="1.20" height="4.00" fill="#f88d00" />
<rect x="308.40" y="388.18" width="1.20" height="3.00" fill="#f88e00" />
<rect x="308.40" y="391.18" width="1.20" height="3.00" fill="#c8e607" />
<rect x="308.40" y="394.18" width="1.20" height="2.00" fill="#ded001" />
<rect x="308.40" y="396.18" width="1.20" height="3.00" fill="#d1dd05" />
<rect x="308.40" y="399.18" width="1.20" height="3.00" fill="#cde106" />
<rect x="308.40" y="402.18" width="1.20" height="3.00" fill="#cde106" />
<rect x="308.40" y="405.18" width="1.20" height="4.00" fill="#cae406" />
<rect x="308.40" y="409.18" width="1.20" height="2.00" fill="#dbd302" />
<rect x="308.40" y="411.18" width="1.20" height="3.00" fill="#dbd302" />
<rect x="308.40" y="414.18" width="1.20" height="1.82" fill="#d1dd05" />
<rect x="309.60" y="319.80" width="1.20" height="4.00" fill="#e0343a" />
<rect x="309.60" y="323.80" width="1.20" height="3.00" fill="#e73523" />
<rect x="309.60" y="326.80" width="1.20" height="2.00" fill="#df373d" />
<rect x="309.60" y="328.80" width="1.20" height="4.00" fill="#e63427" />
<rect x="309.60" y="332.80" width="1.20" height="3.00" fill="#de3d44" />
<rect x="309.60" y="335.80" width="1.20" height="3.00" fill="#f2470d" />
<rect x="309.60" y="338.80" width="1.20" height="3.00" fill="#ea3a1c" />
<rect x="309.60" y="341.80" width="1.20" height="3.00" fill="#f34a0c" />
<rect x="309.60" y="344.80" width="1.20" height="4.00" fill="#e93720" />
<rect x="309.60" y="348.80" width="1.20" height="4.00" fill="#f75508" />
<rect x="309.60" y="352.80" width="1.20" height="2.00" fill="#f85907" />
<rect x="309.60" y="354.80" width="1.20" height="2.00" fill="#fe6c01" />
<rect x="309.60" y="356.80" width="1.20" height="3.00" fill="#f85907" />
<rect x="309.60" y="359.80" width="1.20" height="2.00" fill="#f85a07" />
<rect x="309.60" y="361.80" width="1.20" height="2.00" fill="#fb6304" />
<rect x="309.60" y="363.80" width="1.20" height="3.00" fill="#fb6204" />
<rect x="309.60" y="366.80" width="1.20" height="3.00" fill="#fc6503" />
<rect x="309.60" y="369.80" width="1.20" height="4.00" fill="#f79100" />
<rect x="309.60" y="373.80" width="1.20" height="2.00" fill="#fd7500" />
<rect x="309.60" y="375.80" width="1.20" height="3.00" fill="#fa8500" />
<rect x="309.60" y="378.80" width="1.20" height="2.00" fill="#fe7300" />
<rect x="309.60" y="380.80" width="1.20" height="3.00" fill="#fe7300" />
<rect x="309.60" y="383.80" width="1.20" height="4.00" fill="#fb8100" />
<rect x="309.60" y="387.80" width="1.20" height="3.00" fill="#f88c00" />
<rect x="309.60" y="390.80" width="1.20" height="2.00" fill="#cee005" />
<rect x="309.60" y="392.80" width="1.20" height="4.00" fill="#d0de05" />
<rect x="309.60" y="396.80" width="1.20" height="3.00" fill="#dbd302" />
<rect x="309.60" y="399.80" width="1.20" height="2.00" fill="#cee005" />
<rect x="309.60" y="401.80" width="1.20" height="4.00" fill="#d7d703" />
<rect x="309.60" y="405.80" width="1.20" height="4.00" fill="#dfcf01" />
<rect x="309.60" y="409.80" width="1.20" height="3.00" fill="#d6d803" />
<rect x="309.60" y="412.80" width="1.20" height="3.00" fill="#cae407" />
<rect x="309.60" y="415.80" width="1.20" height="0.20" fill="#cae407" />
<rect x="310.80" y="313.14" width="1.20" height="4.00" fill="#db5159" />
<rect x="310.80" y="317.14" width="1.20" height="3.00" fill="#db4d55" />
<rect x="310.80" y="320.14" width="1.20" height="3.00" fill="#de3e45" />
<rect x="310.80" y="323.14" width="1.20" height="3.00" fill="#e03237" />
<rect x="310.80" y="326.14" width="1.20" height="2.00" fill="#e73524" />
<rect x="310.80" y="328.14" width="1.20" height="3.00" fill="#df363c" />
<rect x="310.80" y="331.14" width="1.20" height="4.00" fill="#e4312b" />
<rect x="310.80" y="335.14" width="1.20" height="4.00" fill="#ec3b19" />
<rect x="310.80" y="339.14" width="1.20" height="3.00" fill="#e83721" />
<rect x="310.80" y="342.14" width="1.20" height="4.00" fill="#f34a0c" />
<rect x="310.80" y="346.14" width="1.20" height="2.00" fill="#ff6f00" />
<rect x="310.80" y="348.14" width="1.20" height="2.00" fill="#f85907" />
<rect x="310.80" y="350.14" width="1.20" height="3.00" fill="#fe6c01" />
<rect x="310.80" y="353.14" width="1.20" height="3.00" fill="#f75508" />
<rect x="310.80" y="356.14" width="1.20" height="2.00" fill="#f54f0a" />
<rect x="310.80" y="358.14" width="1.20" height="3.00" fill="#f95b06" />
<rect x="310.80" y="361.14" width="1.20" height="4.00" fill="#f85807" />
<rect x="310.80" y="365.14" width="1.20" height="3.00" fill="#fe7200" />
<rect x="310.80" y="368.14" width="1.20" height="2.00" fill="#f88f00" />
<rect x="310.80" y="370.14" width="1.20" height="3.00" fill="#f98b00" />
<rect x="310.80" y="373.14" width="1.20" height="2.00" fill="#fd7600" />
<rect x="310.80" y="375.14" width="1.20" height="3.00" fill="#fc7d00" />
<rect x="310.80" y="378.14" width="1.20" height="2.00" fill="#fb8100" />
<rect x="310.80" y="380.14" width="1.20" height="4.00" fill="#fc7c00" />
<rect x="310.80" y="384.14" width="1.20" height="3.00" fill="#fc7c00" />
<rect x="310.80" y="387.14" width="1.20" height="3.00" fill="#f88d00" />
<rect x="310.80" y="390.14" width="1.20" height="3.00" fill="#d5d903" />
<rect x="310.80" y="393.14" width="1.20" height="2.00" fill="#d8d603" />
<rect x="310.80" y="395.14" width="1.20" height="3.00" fill="#dbd302" />
<rect x="310.80" y="398.14" width="1.20" height="3.00" fill="#c9e507" />
<rect x="310.80" y="401.14" width="1.20" height="3.00" fill="#c8e607" />
<rect x="310.80" y="404.14" width="1.20" height="2.00" fill="#cae406" />
<rect x="310.80" y="406.14" width="1.20" height="3.00" fill="#d6d803" />
<rect x="310.80" y="409.14" width="1.20" height="3.00" fill="#dbd302" />
<rect x="310.80" y="412.14" width="1.20" height="3.00" fill="#cae406" />
<rect x="310.80" y="415.14" width="1.20" height="0.86" fill="#ded001" />
<rect x="312.00" y="317.32" width="1.20" height="4.00" fill="#e03035" />
<rect x="312.00" y="321.32" width="1.20" height="4.00" fill="#e63327" />
<rect x="312.00" y="325.32" width="1.20" height="3.00" fill="#e5322a" />
<rect x="312.00" y="328.32" width="1.20" height="3.00" fill="#e93720" />
<rect x="312.00" y="331.32" width="1.20" height="3.00" fill="#df393f" />
<rect x="312.00" y="334.32" width="1.20" height="3.00" fill="#f1440e" />
<rect x="312.00" y="337.32" width="1.20" height="2.00" fill="#f04110" />
<rect x="312.00" y="339.32" width="1.20" height="3.00" fill="#ef4011" />
<rect x="312.00" y="342.32" width="1.20" height="2.00" fill="#e9381f" />
<rect x="312.00" y="344.32" width="1.20" height="2.00" fill="#e4312a" />
<rect x="312.00" y="346.32" width="1.20" height="3.00" fill="#f75708" />
<rect x="312.00" y="349.32" width="1.20" height="4.00" fill="#f85807" />
<rect x="312.00" y="353.32" width="1.20" height="2.00" fill="#fc6503" />
<rect x="312.00" y="355.32" width="1.20" height="2.00" fill="#f95d06" />
<rect x="312.00" y="357.32" width="1.20" height="4.00" fill="#fc6403" />
<rect x="312.00" y="361.32" width="1.20" height="3.00" fill="#ff6f00" />
<rect x="312.00" y="364.32" width="1.20" height="2.00" fill="#fb6104" />
<rect x="312.00" y="366.32" width="1.20" height="4.00" fill="#f95b06" />
<rect x="312.00" y="370.32" width="1.20" height="2.00" fill="#fa8600" />
<rect x="312.00" y="372.32" width="1.20" height="4.00" fill="#fc7a00" />
<rect x="312.00" y="376.32" width="1.20" height="3.00" fill="#fd7600" />
<rect x="312.00" y="379.32" width="1.20" height="2.00" fill="#fb7e00" />
<rect x="312.00" y="381.32" width="1.20" height="4.00" fill="#fd7500" />
<rect x="312.00" y="385.32" width="1.20" height="3.00" fill="#fd7500" />
<rect x="312.00" y="388.32" width="1.20" height="4.00" fill="#fc7d00" />
<rect x="312.00" y="392.32" width="1.20" height="3.00" fill="#d0de05" />
<rect x="312.00" y="395.32" width="1.20" height="4.00" fill="#c7e707" />
<rect x="312.00" y="399.32" width="1.20" height="3.00" fill="#dfcf01" />
<rect x="312.00" y="402.32" width="1.20" height="3.00" fill="#d7d703" />
<rect x="312.00" y="405.32" width="1.20" height="3.00" fill="#d1dd05" />
<rect x="312.00" y="408.32" width="1.20" height="3.00" fill="#ddd101" />
<rect x="312.00" y="411.32" width="1.20" height="2.00" fill="#c9e507" />
<rect x="312.00" y="413.32" width="1.20" height="2.68" fill="#cfdf05" />
<rect x="313.20" y="310.21" width="1.20" height="3.00" fill="#dc4b53" />
<rect x="313.20" y="313.21" width="1.20" height="4.00" fill="#de3f46" />
<rect x="313.20" y="317.21" width="1.20" height="4.00" fill="#de3c42" />
<rect x="313.20" y="321.21" width="1.20" height="3.00" fill="#e3302d" />
<rect x="313.20" y="324.21" width="1.20" height="3.00" fill="#e12d32" />
<rect x="313.20" y="327.21" width="1.20" height="3.00" fill="#e03136" />
<rect x="313.20" y="330.21" width="1.20" height="3.00" fill="#e9381f" />
<rect x="313.20" y="333.21" width="1.20" height="2.00" fill="#e63427" />
<rect x="313.20" y="335.21" width="1.20" height="4.00" fill="#ec3c18" />
<rect x="313.20" y="339.21" width="1.20" height="3.00" fill="#eb3a1a" />
<rect x="313.20" y="342.21" width="1.20" height="2.00" fill="#ef3f12" />
<rect x="313.20" y="344.21" width="1.20" height="3.00" fill="#e9381f" />
<rect x="313.20" y="347.21" width="1.20" height="2.00" fill="#f85907" />
<rect x="313.20" y="349.21" width="1.20" height="2.00" fill="#fe7300" />
<rect x="313.20" y="351.21" width="1.20" height="3.00" fill="#fb6104" />
<rect x="313.20" y="354.21" width="1.20" height="2.00" fill="#f75708" />
<rect x="313.20" y="356.21" width="1.20" height="2.00" fill="#fc6603" />
<rect x="313.20" y="358.21" width="1.20" height="2.00" fill="#fe7200" />
<rect x="313.20" y="360.21" width="1.20" height="4.00" fill="#fb6204" />
<rect x="313.20" y="364.21" width="1.20" height="2.00" fill="#fc6403" />
<rect x="313.20" y="366.21" width="1.20" height="2.00" fill="#ff6e00" />
<rect x="313.20" y="368.21" width="1.20" height="3.00" fill="#f98800" />
<rect x="313.20" y="371.21" width="1.20" height="3.00" fill="#f98a00" />
<rect x="313.20" y="374.21" width="1.20" height="2.00" fill="#fc7c00" />
<rect x="313.20" y="376.21" width="1.20" height="3.00" fill="#f88c00" />
<rect x="313.20" y="379.21" width="1.20" height="3.00" fill="#fc7b00" />
<rect x="313.20" y="382.21" width="1.20" height="4.00" fill="#fc7900" />
<rect x="313.20" y="386.21" width="1.20" height="3.00" fill="#fb8000" />
<rect x="313.20" y="389.21" width="1.20" height="3.00" fill="#fc7d00" />
<rect x="313.20" y="392.21" width="1.20" height="4.00" fill="#d6d803" />
<rect x="313.20" y="396.21" width="1.20" height="3.00" fill="#d6d803" />
<rect x="313.20" y="399.21" width="1.20" height="3.00" fill="#d9d502" />
<rect x="313.20" y="402.21" width="1.20" height="3.00" fill="#d9d502" />
<rect x="313.20" y="405.21" width="1.20" height="3.00" fill="#cee005" />
<rect x="313.20" y="408.21" width="1.20" height="3.00" fill="#cfdf05" />
<rect x="313.20" y="411.21" width="1.20" height="3.00" fill="#cee005" />
<rect x="313.20" y="414.21" width="1.20" height="1.79" fill="#c7e707" />
<rect x="314.40" y="304.49" width="1.20" height="2.00" fill="#dd464e" />
<rect x="314.40" y="306.49" width="1.20" height="3.00" fill="#de4046" />
<rect x="314.40" y="309.49" width="1.20" height="4.00" fill="#dc474e" />
<rect x="314.40" y="313.49" width="1.20" height="4.00" fill="#db515a" />
<rect x="314.40" y="317.49" width="1.20" height="2.00" fill="#e03036" />
<rect x="314.40" y="319.49" width="1.20" height="4.00" fill="#de3e44" />
<rect x="314.40" y="323.49" width="1.20" height="2.00" fill="#e63426" />
<rect x="314.40" y="325.49" width="1.20" height="3.00" fill="#de4047" />
<rect x="314.40" y="328.49" width="1.20" height="4.00" fill="#e93720" />
<rect x="314.40" y="332.49" width="1.20" height="2.00" fill="#e93720" />
<rect x="314.40" y="334.49" width="1.20" height="4.00" fill="#eb3a1a" />
<rect x="314.40" y="338.49" width="1.20" height="4.00" fill="#ec3c18" />
<rect x="314.40" y="342.49" width="1.20" height="4.00" fill="#e83721" />
<rect x="314.40" y="346.49" width="1.20" height="4.00" fill="#f75508" />
<rect x="314.40" y="350.49" width="1.20" height="4.00" fill="#ff6e00" />
<rect x="314.40" y="354.49" width="1.20" height="4.00" fill="#f75508" />
<rect x="314.40" y="358.49" width="1.20" height="3.00" fill="#f65409" />
<rect x="314.40" y="361.49" width="1.20" height="2.00" fill="#f95b06" />
<rect x="314.40" y="363.49" width="1.20" height="4.00" fill="#fe6b01" />
<rect x="314.40" y="367.49" width="1.20" height="3.00" fill="#fe6a01" />
<rect x="314.40" y="370.49" width="1.20" height="4.00" fill="#f98800" />
<rect x="314.40" y="374.49" width="1.20" height="2.00" fill="#fb8100" />
<rect x="314.40" y="376.49" width="1.20" height="3.00" fill="#fb7f00" />
<rect x="314.40" y="379.49" width="1.20" height="3.00" fill="#fd7700" />
<rect x="314.40" y="382.49" width="1.20" height="4.00" fill="#fb8100" />
<rect x="314.40" y="386.49" width="1.20" height="4.00" fill="#f98700" />
<rect x="314.40" y="390.49" width="1.20" height="2.00" fill="#cce206" />
<rect x="314.40" y="392.49" width="1.20" height="4.00" fill="#cce206" />
<rect x="314.40" y="396.49" width="1.20" height="3.00" fill="#d8d602" />
<rect x="314.40" y="399.49" width="1.20" height="3.00" fill="#d9d502" />
<rect x="314.40" y="402.49" width="1.20" height="4.00" fill="#d6d803" />
<rect x="314.40" y="406.49" width="1.20" height="2.00" fill="#cde106" />
<rect x="314.40" y="408.49" width="1.20" height="3.00" fill="#d8d602" />
<rect x="314.40" y="411.49" width="1.20" height="3.00" fill="#d9d502" />
<rect x="314.40" y="414.49" width="1.20" height="1.51" fill="#c9e507" />
<rect x="315.60" y="305.87" width="1.20" height="4.00" fill="#e03439" />
<rect x="315.60" y="309.87" width="1.20" height="3.00" fill="#dc4b53" />
<rect x="315.60" y="312.87" width="1.20" height="3.00" fill="#db4e56" />
<rect x="315.60" y="315.87" width="1.20" height="3.00" fill="#e03237" />
<rect x="315.60" y="318.87" width="1.20" height="2.00" fill="#e12e33" />
<rect x="315.60" y="320.87" width="1.20" height="2.00" fill="#e12d32" />
<rect x="315.60" y="322.87" width="1.20" height="3.00" fill="#e83622" />
<rect x="315.60" y="325.87" width="1.20" height="4.00" fill="#e12e31" />
<rect x="315.60" y="329.87" width="1.20" height="3.00" fill="#df363c" />
<rect x="315.60" y="332.87" width="1.20" height="4.00" fill="#df383e" />
<rect x="315.60" y="336.87" width="1.20" height="2.00" fill="#ec3c18" />
<rect x="315.60" y="338.87" width="1.20" height="4.00" fill="#e63426" />
<rect x="315.60" y="342.87" width="1.20" height="3.00" fill="#f2470d" />
<rect x="315.60" y="345.87" width="1.20" height="3.00" fill="#f85907" />
<rect x="315.60" y="348.87" width="1.20" height="4.00" fill="#f95d06" />
<rect x="315.60" y="352.87" width="1.20" height="3.00" fill="#fe6c01" />
<rect x="315.60" y="355.87" width="1.20" height="3.00" fill="#fd6802" />
<rect x="315.60" y="358.87" width="1.20" height="4.00" fill="#f75708" />
<rect x="315.60" y="362.87" width="1.20" height="3.00" fill="#fe6b01" />
<rect x="315.60" y="365.87" width="1.20" height="2.00" fill="#ff6f00" />
<rect x="315.60" y="367.87" width="1.20" height="3.00" fill="#fd6702" />
<rect x="315.60" y="370.87" width="1.20" height="3.00" fill="#f98a00" />
<rect x="315.60" y="373.87" width="1.20" height="3.00" fill="#f88c00" />
<rect x="315.60" y="376.87" width="1.20" height="3.00" fill="#fa8400" />
<rect x="315.60" y="379.87" width="1.20" height="4.00" fill="#fa8600" />
<rect x="315.60" y="383.87" width="1.20" height="2.00" fill="#fa8500" />
<rect x="315.60" y="385.87" width="1.20" height="4.00" fill="#fb8000" />
<rect x="315.60" y="389.87" width="1.20" height="4.00" fill="#fd7700" />
<rect x="315.60" y="393.87" width="1.20" height="2.00" fill="#d7d703" />
<rect x="315.60" y="395.87" width="1.20" height="3.00" fill="#d3db04" />
<rect x="315.60" y="398.87" width="1.20" height="2.00" fill="#cfdf05" />
<rect x="315.60" y="400.87" width="1.20" height="2.00" fill="#d0de05" />
<rect x="315.60" y="402.87" width="1.20" height="3.00" fill="#dbd302" />
<rect x="315.60" y="405.87" width="1.20" height="3.00" fill="#d1dd04" />
<rect x="315.60" y="408.87" width="1.20" height="4.00" fill="#d0de05" />
<rect x="315.60" y="412.87" width="1.20" height="2.00" fill="#c8e607" />
<rect x="315.60" y="414.87" width="1.20" height="1.13" fill="#c8e607" />
<rect x="316.80" y="307.71" width="1.20" height="3.00" fill="#e12f35" />
<rect x="316.80" y="310.71" width="1.20" height="3.00" fill="#de4047" />
<rect x="316.80" y="313.71" width="1.20" height="3.00" fill="#de4047" />
<rect x="316.80" y="316.71" width="1.20" height="3.00" fill="#de3f46" />
<rect x="316.80" y="319.71" width="1.20" height="3.00" fill="#de3d43" />
<rect x="316.80" y="322.71" width="1.20" height="3.00" fill="#e63327" />
<rect x="316.80" y="325.71" width="1.20" height="2.00" fill="#e63426" />
<rect x="316.80" y="327.71" width="1.20" height="4.00" fill="#e53229" />
<rect x="316.80" y="331.71" width="1.20" height="4.00" fill="#de3e45" />
<rect x="316.80" y="335.71" width="1.20" height="2.00" fill="#f2480d" />
<rect x="316.80" y="337.71" width="1.20" height="3.00" fill="#ed3d15" />
<rect x="316.80" y="340.71" width="1.20" height="4.00" fill="#e83622" />
<rect x="316.80" y="344.71" width="1.20" height="2.00" fill="#ec3c17" />
<rect x="316.80" y="346.71" width="1.20" height="4.00" fill="#fb6304" />
<rect x="316.80" y="350.71" width="1.20" height="3.00" fill="#fb6204" />
<rect x="316.80" y="353.71" width="1.20" height="3.00" fill="#fc6403" />
<rect x="316.80" y="356.71" width="1.20" height="3.00" fill="#f65409" />
<rect x="316.80" y="359.71" width="1.20" height="3.00" fill="#ff6e00" />
<rect x="316.80" y="362.71" width="1.20" height="3.00" fill="#fe7100" />
<rect x="316.80" y="365.71" width="1.20" height="3.00" fill="#fe7000" />
<rect x="316.80" y="368.71" width="1.20" height="3.00" fill="#fa8300" />
<rect x="316.80" y="371.71" width="1.20" height="3.00" fill="#f79100" />
<rect x="316.80" y="374.71" width="1.20" height="4.00" fill="#fc7c00" />
<rect x="316.80" y="378.71" width="1.20" height="3.00" fill="#fb7f00" />
<rect x="316.80" y="381.71" width="1.20" height="2.00" fill="#fa8400" />
<rect x="316.80" y="383.71" width="1.20" height="2.00" fill="#fe7400" />
<rect x="316.80" y="385.71" width="1.20" height="4.00" fill="#fd7600" />
<rect x="316.80" y="389.71" width="1.20" height="3.00" fill="#fb7e00" />
<rect x="316.80" y="392.71" width="1.20" height="3.00" fill="#ddd101" />
<rect x="316.80" y="395.71" width="1.20" height="3.00" fill="#d6d803" />
<rect x="316.80" y="398.71" width="1.20" height="3.00" fill="#e0ce00" />
<rect x="316.80" y="401.71" width="1.20" height="4.00" fill="#d6d803" />
<rect x="316.80" y="405.71" width="1.20" height="4.00" fill="#d2dc04" />
<rect x="316.80" y="409.71" width="1.20" height="4.00" fill="#cee006" />
<rect x="316.80" y="413.71" width="1.20" height="2.29" fill="#cae407" />
<rect x="318.00" y="306.68" width="1.20" height="4.00" fill="#db4d55" />
<rect x="318.00" y="310.68" width="1.20" height="3.00" fill="#e03237" />
<rect x="318.00" y="313.68" width="1.20" height="2.00" fill="#dc4c54" />
<rect x="318.00" y="315.68" width="1.20" height="2.00" fill="#e12d32" />
<rect x="318.00" y="317.68" width="1.20" height="3.00" fill="#dd464d" />
<rect x="318.00" y="320.68" width="1.20" height="4.00" fill="#e03238" />
<rect x="318.00" y="324.68" width="1.20" height="3.00" fill="#de3b42" />
<rect x="318.00" y="327.68" width="1.20" height="4.00" fill="#df3b41" />
<rect x="318.00" y="331.68" width="1.20" height="3.00" fill="#e63426" />
<rect x="318.00" y="334.68" width="1.20" height="4.00" fill="#e73425" />
<rect x="318.00" y="338.68" width="1.20" height="3.00" fill="#f0410f" />
<rect x="318.00" y="341.68" width="1.20" height="2.00" fill="#eb3b1a" />
<rect x="318.00" y="343.68" width="1.20" height="4.00" fill="#f34a0c" />
<rect x="318.00" y="347.68" width="1.20" height="3.00" fill="#f5500a" />
<rect x="318.00" y="350.68" width="1.20" height="2.00" fill="#f54f0a" />
<rect x="318.00" y="352.68" width="1.20" height="4.00" fill="#f85a07" />
<rect x="318.00" y="356.68" width="1.20" height="2.00" fill="#fe7000" />
<rect x="318.00" y="358.68" width="1.20" height="3.00" fill="#f65409" />
<rect x="318.00" y="361.68" width="1.20" height="4.00" fill="#fe7200" />
<rect x="318.00" y="365.68" width="1.20" height="4.00" fill="#ff6e00" />
<rect x="318.00" y="369.68" width="1.20" height="2.00" fill="#f88c00" />
<rect x="318.00" y="371.68" width="1.20" height="2.00" fill="#fc7c00" />
<rect x="318.00" y="373.68" width="1.20" height="3.00" fill="#fb7e00" />
<rect x="318.00" y="376.68" width="1.20" height="4.00" fill="#fb8000" />
<rect x="318.00" y="380.68" width="1.20" height="4.00" fill="#f88d00" />
<rect x="318.00" y="384.68" width="1.20" height="2.00" fill="#f98800" />
<rect x="318.00" y="386.68" width="1.20" height="4.00" fill="#f98800" />
<rect x="318.00" y="390.68" width="1.20" height="2.00" fill="#d3db04" />
<rect x="318.00" y="392.68" width="1.20" height="3.00" fill="#cee005" />
<rect x="318.00" y="395.68" width="1.20" height="3.00" fill="#d2dc04" />
<rect x="318.00" y="398.68" width="1.20" height="4.00" fill="#cee005" />
<rect x="318.00" y="402.68" width="1.20" height="4.00" fill="#c8e607" />
<rect x="318.00" y="406.68" width="1.20" height="3.00" fill="#e0ce00" />
<rect x="318.00" y="409.68" width="1.20" height="4.00" fill="#dfcf01" />
<rect x="318.00" y="413.68" width="1.20" height="2.32" fill="#cbe306" />
<rect x="319.20" y="303.98" width="1.20" height="4.00" fill="#df363c" />
<rect x="319.20" y="307.98" width="1.20" height="3.00" fill="#da535c" />
<rect x="319.20" y="310.98" width="1.20" height="3.00" fill="#e0353a" />
<rect x="319.20" y="313.98" width="1.20" height="2.00" fill="#dc474f" />
<rect x="319.20" y="315.98" width="1.20" height="3.00" fill="#df3b41" />
<rect x="319.20" y="318.98" width="1.20" height="3.00" fill="#dd444b" />
<rect x="319.20" y="321.98" width="1.20" height="2.00" fill="#e03036" />
<rect x="319.20" y="323.98" width="1.20" height="4.00" fill="#e22e30" />
<rect x="319.20" y="327.98" width="1.20" height="3.00" fill="#e12f34" />
<rect x="319.20" y="330.98" width="1.20" height="3.00" fill="#e12f34" />
<rect x="319.20" y="333.98" width="1.20" height="2.00" fill="#f34b0c" />
<rect x="319.20" y="335.98" width="1.20" height="2.00" fill="#f2480d" />
<rect x="319.20" y="337.98" width="1.20" height="4.00" fill="#f0410f" />
<rect x="319.20" y="341.98" width="1.20" height="2.00" fill="#ef3f12" />
<rect x="319.20" y="343.98" width="1.20" height="3.00" fill="#eb3a1b" />
<rect x="319.20" y="346.98" width="1.20" height="3.00" fill="#fb6204" />
<rect x="319.20" y="349.98" width="1.20" height="4.00" fill="#f65209" />
<rect x="319.20" y="353.98" width="1.20" height="2.00" fill="#f85807" />
<rect x="319.20" y="355.98" width="1.20" height="2.00" fill="#f85a07" />
<rect x="319.20" y="357.98" width="1.20" height="3.00" fill="#fe6c01" />
<rect x="319.20" y="360.98" width="1.20" height="4.00" fill="#fd6802" />
<rect x="319.20" y="364.98" width="1.20" height="4.00" fill="#f5510a" />
<rect x="319.20" y="368.98" width="1.20" height="4.00" fill="#fb8000" />
<rect x="319.20" y="372.98" width="1.20" height="2.00" fill="#fc7d00" />
<rect x="319.20" y="374.98" width="1.20" height="2.00" fill="#fd7800" />
<rect x="319.20" y="376.98" width="1.20" height="4.00" fill="#f88e00" />
<rect x="319.20" y="380.98" width="1.20" height="2.00" fill="#fb8000" />
<rect x="319.20" y="382.98" width="1.20" height="3.00" fill="#fb8100" />
<rect x="319.20" y="385.98" width="1.20" height="3.00" fill="#f88d00" />
<rect x="319.20" y="388.98" width="1.20" height="4.00" fill="#f79100" />
<rect x="319.20" y="392.98" width="1.20" height="2.00" fill="#cae407" />
<rect x="319.20" y="394.98" width="1.20" height="2.00" fill="#d1dd05" />
<rect x="319.20" y="396.98" width="1.20" height="2.00" fill="#dbd302" />
<rect x="319.20" y="398.98" width="1.20" height="4.00" fill="#ded001" />
<rect x="319.20" y="402.98" width="1.20" height="3.00" fill="#ddd101" />
<rect x="319.20" y="405.98" width="1.20" height="3.00" fill="#d6d803" />
<rect x="319.20" y="408.98" width="1.20" height="3.00" fill="#cfdf05" />
<rect x="319.20" y="411.98" width="1.20" height="3.00" fill="#c9e507" />
<rect x="319.20" y="414.98" width="1.20" height="1.02" fill="#c9e507" />
<rect x="320.40" y="304.23" width="1.20" height="3.00" fill="#dd4249" />
<rect x="320.40" y="307.23" width="1.20" height="2.00" fill="#da525a" />
<rect x="320.40" y="309.23" width="1.20" height="2.00" fill="#db4d55" />
<rect x="320.40" y="311.23" width="1.20" height="3.00" fill="#df383e" />
<rect x="320.40" y="314.23" width="1.20" height="3.00" fill="#df373d" />
<rect x="320.40" y="317.23" width="1.20" height="2.00" fill="#e12d32" />
<rect x="320.40" y="319.23" width="1.20" height="2.00" fill="#e03136" />
<rect x="320.40" y="321.23" width="1.20" height="3.00" fill="#e03439" />
<rect x="320.40" y="324.23" width="1.20" height="4.00" fill="#df3a40" />
<rect x="320.40" y="328.23" width="1.20" height="3.00" fill="#e03137" />
<rect x="320.40" y="331.23" width="1.20" height="4.00" fill="#df393f" />
<rect x="320.40" y="335.23" width="1.20" height="4.00" fill="#ea381e" />
<rect x="320.40" y="339.23" width="1.20" height="3.00" fill="#e63327" />
<rect x="320.40" y="342.23" width="1.20" height="3.00" fill="#e93820" />
<rect x="320.40" y="345.23" width="1.20" height="4.00" fill="#f5510a" />
<rect x="320.40" y="349.23" width="1.20" height="3.00" fill="#fe7300" />
<rect x="320.40" y="352.23" width="1.20" height="4.00" fill="#f95b06" />
<rect x="320.40" y="356.23" width="1.20" height="3.00" fill="#ff6d00" />
<rect x="320.40" y="359.23" width="1.20" height="3.00" fill="#fb6204" />
<rect x="320.40" y="362.23" width="1.20" height="2.00" fill="#fb6104" />
<rect x="320.40" y="364.23" width="1.20" height="3.00" fill="#fe6c01" />
<rect x="320.40" y="367.23" width="1.20" height="4.00" fill="#fe7200" />
<rect x="320.40" y="371.23" width="1.20" height="4.00" fill="#fc7b00" />
<rect x="320.40" y="375.23" width="1.20" height="3.00" fill="#fd7600" />
<rect x="320.40" y="378.23" width="1.20" height="3.00" fill="#fd7500" />
<rect x="320.40" y="381.23" width="1.20" height="3.00" fill="#fa8600" />
<rect x="320.40" y="384.23" width="1.20" height="4.00" fill="#fe7400" />
<rect x="320.40" y="388.23" width="1.20" height="4.00" fill="#fc7d00" />
<rect x="320.40" y="392.23" width="1.20" height="3.00" fill="#d5d903" />
<rect x="320.40" y="395.23" width="1.20" height="2.00" fill="#d6d803" />
<rect x="320.40" y="397.23" width="1.20" height="3.00" fill="#dcd202" />
<rect x="320.40" y="400.23" width="1.20" height="3.00" fill="#cae407" />
<rect x="320.40" y="403.23" width="1.20" height="2.00" fill="#cde106" />
<rect x="320.40" y="405.23" width="1.20" height="4.00" fill="#c8e607" />
<rect x="320.40" y="409.23" width="1.20" height="3.00" fill="#cee005" />
<rect x="320.40" y="412.23" width="1.20" height="3.77" fill="#d1dd05" />
<rect x="321.60" y="308.98" width="1.20" height="3.00" fill="#de3e45" />
<rect x="321.60" y="311.98" width="1.20" height="2.00" fill="#dc4c54" />
<rect x="321.60" y="313.98" width="1.20" height="3.00" fill="#e0353a" />
<rect x="321.60" y="316.98" width="1.20" height="3.00" fill="#e03137" />
<rect x="321.60" y="319.98" width="1.20" height="3.00" fill="#df393f" />
<rect x="321.60" y="322.98" width="1.20" height="3.00" fill="#e3302c" />
<rect x="321.60" y="325.98" width="1.20" height="4.00" fill="#e22f2f" />
<rect x="321.60" y="329.98" width="1.20" height="4.00" fill="#e03338" />
<rect x="321.60" y="333.98" width="1.20" height="3.00" fill="#ea391c" />
<rect x="321.60" y="336.98" width="1.20" height="3.00" fill="#f44d0b" />
<rect x="321.60" y="339.98" width="1.20" height="4.00" fill="#e63327" />
<rect x="321.60" y="343.98" width="1.20" height="4.00" fill="#e83622" />
<rect x="321.60" y="347.98" width="1.20" height="4.00" fill="#f75608" />
<rect x="321.60" y="351.98" width="1.20" height="2.00" fill="#f95d06" />
<rect x="321.60" y="353.98" width="1.20" height="3.00" fill="#ff6d00" />
<rect x="321.60" y="356.98" width="1.20" height="4.00" fill="#fe6b01" />
<rect x="321.60" y="360.98" width="1.20" height="2.00" fill="#f75608" />
<rect x="321.60" y="362.98" width="1.20" height="3.00" fill="#fa6005" />
<rect x="321.60" y="365.98" width="1.20" height="2.00" fill="#fb6204" />
<rect x="321.60" y="367.98" width="1.20" height="3.00" fill="#fe6b01" />
<rect x="321.60" y="370.98" width="1.20" height="3.00" fill="#fc7900" />
<rect x="321.60" y="373.98" width="1.20" height="3.00" fill="#fb8000" />
<rect x="321.60" y="376.98" width="1.20" height="3.00" fill="#fc7a00" />
<rect x="321.60" y="379.98" width="1.20" height="2.00" fill="#fb8200" />
<rect x="321.60" y="381.98" width="1.20" height="3.00" fill="#fd7900" />
<rect x="321.60" y="384.98" width="1.20" height="3.00" fill="#fc7a00" />
<rect x="321.60" y="387.98" width="1.20" height="2.00" fill="#fc7c00" />
<rect x="321.60" y="389.98" width="1.20" height="3.00" fill="#f88c00" />
<rect x="321.60" y="392.98" width="1.20" height="2.00" fill="#c7e707" />
<rect x="321.60" y="394.98" width="1.20" height="4.00" fill="#cae406" />
<rect x="321.60" y="398.98" width="1.20" height="4.00" fill="#d6d803" />
<rect x="321.60" y="402.98" width="1.20" height="3.00" fill="#ddd101" />
<rect x="321.60" y="405.98" width="1.20" height="2.00" fill="#c8e607" />
<rect x="321.60" y="407.98" width="1.20" height="3.00" fill="#cce206" />
<rect x="321.60" y="410.98" width="1.20" height="3.00" fill="#d1dd05" />
<rect x="321.60" y="413.98" width="1.20" height="2.00" fill="#cae407" />
<rect x="321.60" y="415.98" width="1.20" height="0.02" fill="#ddd101" />
<rect x="322.80" y="308.61" width="1.20" height="3.00" fill="#e12f34" />
<rect x="322.80" y="311.61" width="1.20" height="4.00" fill="#e03036" />
<rect x="322.80" y="315.61" width="1.20" height="3.00" fill="#dc4951" />
<rect x="322.80" y="318.61" width="1.20" height="3.00" fill="#dd4249" />
<rect x="322.80" y="321.61" width="1.20" height="3.00" fill="#e4312b" />
<rect x="322.80" y="324.61" width="1.20" height="3.00" fill="#e9381f" />
<rect x="322.80" y="327.61" width="1.20" height="3.00" fill="#e3302d" />
<rect x="322.80" y="330.61" width="1.20" height="2.00" fill="#df3a41" />
<rect x="322.80" y="332.61" width="1.20" height="3.00" fill="#e53229" />
<rect x="322.80" y="335.61" width="1.20" height="4.00" fill="#ef4011" />
<rect x="322.80" y="339.61" width="1.20" height="3.00" fill="#ed3d15" />
<rect x="322.80" y="342.61" width="1.20" height="4.00" fill="#f3490c" />
<rect x="322.80" y="346.61" width="1.20" height="3.00" fill="#f85907" />
<rect x="322.80" y="349.61" width="1.20" height="4.00" fill="#fb6204" />
<rect x="322.80" y="353.61" width="1.20" height="3.00" fill="#fa5f05" />
<rect x="322.80" y="356.61" width="1.20" height="3.00" fill="#f85807" />
<rect x="322.80" y="359.61" width="1.20" height="4.00" fill="#ff6f00" />
<rect x="322.80" y="363.61" width="1.20" height="3.00" fill="#fb6304" />
<rect x="322.80" y="366.61" width="1.20" height="3.00" fill="#fb6104" />
<rect x="322.80" y="369.61" width="1.20" height="2.00" fill="#fc7b00" />
<rect x="322.80" y="371.61" width="1.20" height="2.00" fill="#fb8100" />
<rect x="322.80" y="373.61" width="1.20" height="2.00" fill="#fd7800" />
<rect x="322.80" y="375.61" width="1.20" height="3.00" fill="#f88e00" />
<rect x="322.80" y="378.61" width="1.20" height="3.00" fill="#f98700" />
<rect x="322.80" y="381.61" width="1.20" height="3.00" fill="#fb7e00" />
<rect x="322.80" y="384.61" width="1.20" height="3.00" fill="#fc7c00" />
<rect x="322.80" y="387.61" width="1.20" height="3.00" fill="#fb8000" />
<rect x="322.80" y="390.61" width="1.20" height="2.00" fill="#d5d904" />
<rect x="322.80" y="392.61" width="1.20" height="2.00" fill="#cae407" />
<rect x="322.80" y="394.61" width="1.20" height="3.00" fill="#cde106" />
<rect x="322.80" y="397.61" width="1.20" height="3.00" fill="#dfcf01" />
<rect x="322.80" y="400.61" width="1.20" height="3.00" fill="#ded001" />
<rect x="322.80" y="403.61" width="1.20" height="3.00" fill="#d4da04" />
<rect x="322.80" y="406.61" width="1.20" height="3.00" fill="#d4da04" />
<rect x="322.80" y="409.61" width="1.20" height="3.00" fill="#cce206" />
<rect x="322.80" y="412.61" width="1.20" height="2.00" fill="#cae406" />
<rect x="322.80" y="414.61" width="1.20" height="1.39" fill="#d0de05" />
<rect x="324.00" y="309.25" width="1.20" height="4.00" fill="#e03136" />
<rect x="324.00" y="313.25" width="1.20" height="3.00" fill="#e03237" />
<rect x="324.00" y="316.25" width="1.20" height="4.00" fill="#df373d" />
<rect x="324.00" y="320.25" width="1.20" height="4.00" fill="#e12f34" />
<rect x="324.00" y="324.25" width="1.20" height="3.00" fill="#e4312b" />
<rect x="324.00" y="327.25" width="1.20" height="2.00" fill="#e4322a" />
<rect x="324.00" y="329.25" width="1.20" height="3.00" fill="#e4312c" />
<rect x="324.00" y="332.25" width="1.20" height="4.00" fill="#de3d43" />
<rect x="324.00" y="336.25" width="1.20" height="3.00" fill="#e73524" />
<rect x="324.00" y="339.25" width="1.20" height="2.00" fill="#e9381f" />
<rect x="324.00" y="341.25" width="1.20" height="3.00" fill="#e53228" />
<rect x="324.00" y="344.25" width="1.20" height="4.00" fill="#e4312a" />
<rect x="324.00" y="348.25" width="1.20" height="4.00" fill="#f65309" />
<rect x="324.00" y="352.25" width="1.20" height="4.00" fill="#f95b06" />
<rect x="324.00" y="356.25" width="1.20" height="2.00" fill="#f85807" />
<rect x="324.00" y="358.25" width="1.20" height="3.00" fill="#fe6a01" />
<rect x="324.00" y="361.25" width="1.20" height="3.00" fill="#f95c06" />
<rect x="324.00" y="364.25" width="1.20" height="4.00" fill="#f65209" />
<rect x="324.00" y="368.25" width="1.20" height="3.00" fill="#fa8400" />
<rect x="324.00" y="371.25" width="1.20" height="3.00" fill="#fd7600" />
<rect x="324.00" y="374.25" width="1.20" height="3.00" fill="#f88f00" />
<rect x="324.00" y="377.25" width="1.20" height="4.00" fill="#f88c00" />
<rect x="324.00" y="381.25" width="1.20" height="2.00" fill="#fa8400" />
<rect x="324.00" y="383.25" width="1.20" height="4.00" fill="#f79000" />
<rect x="324.00" y="387.25" width="1.20" height="4.00" fill="#fd7800" />
<rect x="324.00" y="391.25" width="1.20" height="3.00" fill="#d4da04" />
<rect x="324.00" y="394.25" width="1.20" height="4.00" fill="#dbd302" />
<rect x="324.00" y="398.25" width="1.20" height="4.00" fill="#cce206" />
<rect x="324.00" y="402.25" width="1.20" height="2.00" fill="#d7d703" />
<rect x="324.00" y="404.25" width="1.20" height="3.00" fill="#dfcf00" />
<rect x="324.00" y="407.25" width="1.20" height="2.00" fill="#cbe306" />
<rect x="324.00" y="409.25" width="1.20" height="2.00" fill="#c8e607" />
<rect x="324.00" y="411.25" width="1.20" height="2.00" fill="#d8d603" />
<rect x="324.00" y="413.25" width="1.20" height="2.75" fill="#d9d502" />
<rect x="276.00" y="260.00" width="1.60" height="156.00" fill="#d8606a" />
<rect x="279.00" y="260.00" width="19.00" height="4.00" fill="#000" />
<rect x="288.50" y="260.00" width="2.50" height="4.00" fill="#3fc857" />
<rect x="293.00" y="260.00" width="4.00" height="4.00" fill="#d4da04" />
<rect x="297.00" y="260.00" width="4.00" height="4.00" fill="#f44e0b" />
<rect x="299.00" y="256.00" width="2.00" height="4.00" fill="#17a981" />
<rect x="323.00" y="260.00" width="1.20" height="3.00" fill="#000" />
<rect x="324.00" y="385.60" width="12.00" height="4.40" fill="#141eff" />
<rect x="324.00" y="390.00" width="12.00" height="3.00" fill="#108cbe" />
<rect x="324.00" y="393.00" width="12.00" height="3.00" fill="#3fc857" />
<rect x="324.00" y="396.00" width="12.00" height="2.00" fill="#cbe306" />
<rect x="324.00" y="398.00" width="12.00" height="4.00" fill="#f98700" />
<rect x="324.00" y="402.00" width="12.00" height="3.00" fill="#ddd101" />
<rect x="324.00" y="405.00" width="12.00" height="3.00" fill="#1eb175" />
<rect x="324.00" y="408.00" width="12.00" height="1.50" fill="#1427fc" />
<rect x="338.00" y="260.00" width="4.00" height="156.00" fill="#d8606a" />
<rect x="338.60" y="305.00" width="1.40" height="111.00" fill="#f2470d" />
<rect x="339.60" y="330.00" width="1.20" height="86.00" fill="#ddd101" />
<rect x="340.60" y="330.00" width="0.80" height="86.00" fill="#ff6e00" />
<rect x="336.00" y="381.00" width="2.00" height="35.00" fill="#1452f0" />
<rect x="336.50" y="392.00" width="1.50" height="14.00" fill="#f2a100" />
<rect x="342.00" y="395.00" width="3.00" height="2.00" fill="#1452f0" />
<rect x="342.00" y="397.00" width="3.00" height="6.00" fill="#1182c9" />
<rect x="342.00" y="403.00" width="3.00" height="3.00" fill="#1452f0" />
<rect x="345.00" y="398.50" width="1.50" height="3.00" fill="#142ffa" />
<rect x="262.00" y="386.00" width="1.00" height="3.00" fill="#090dda" />
<rect x="264.50" y="386.00" width="1.00" height="3.00" fill="#090dda" />
<rect x="267.00" y="386.00" width="1.00" height="3.00" fill="#090dda" />
<rect x="811.00" y="399.20" width="270.00" height="3.60" fill="#131cfa" />
<rect x="820.00" y="403.00" width="1.50" height="1.00" fill="#090dda" />
<rect x="822.50" y="398.30" width="1.60" height="1.00" fill="#111af6" />
<rect x="825.00" y="398.30" width="1.60" height="1.00" fill="#111af6" />
<rect x="825.00" y="403.00" width="1.50" height="1.00" fill="#090dda" />
<rect x="827.50" y="398.30" width="1.60" height="1.00" fill="#111af6" />
<rect x="832.50" y="403.00" width="1.50" height="1.00" fill="#090dda" />
<rect x="835.00" y="398.30" width="1.60" height="1.00" fill="#111af6" />
<rect x="837.50" y="398.30" width="1.60" height="1.00" fill="#111af6" />
<rect x="837.50" y="403.00" width="1.50" height="1.00" fill="#090dda" />
<rect x="840.00" y="403.00" width="1.50" height="1.00" fill="#090dda" />
<rect x="842.50" y="403.00" width="1.50" height="1.00" fill="#090dda" />
<rect x="845.00" y="398.30" width="1.60" height="1.00" fill="#111af6" />
<rect x="850.00" y="398.30" width="1.60" height="1.00" fill="#111af6" />
<rect x="855.00" y="398.30" width="1.60" height="1.00" fill="#111af6" />
<rect x="860.00" y="398.30" width="1.60" height="1.00" fill="#111af6" />
<rect x="860.00" y="403.00" width="1.50" height="1.00" fill="#090dda" />
<rect x="862.50" y="403.00" width="1.50" height="1.00" fill="#090dda" />
<rect x="865.00" y="398.30" width="1.60" height="1.00" fill="#111af6" />
<rect x="870.00" y="398.30" width="1.60" height="1.00" fill="#111af6" />
<rect x="870.00" y="403.00" width="1.50" height="1.00" fill="#090dda" />
<rect x="872.50" y="403.00" width="1.50" height="1.00" fill="#090dda" />
<rect x="875.00" y="403.00" width="1.50" height="1.00" fill="#090dda" />
<rect x="882.50" y="398.30" width="1.60" height="1.00" fill="#111af6" />
<rect x="885.00" y="398.30" width="1.60" height="1.00" fill="#111af6" />
<rect x="885.00" y="403.00" width="1.50" height="1.00" fill="#090dda" />
<rect x="890.00" y="398.30" width="1.60" height="1.00" fill="#111af6" />
<rect x="892.50" y="398.30" width="1.60" height="1.00" fill="#111af6" />
<rect x="892.50" y="403.00" width="1.50" height="1.00" fill="#090dda" />
<rect x="900.00" y="398.30" width="1.60" height="1.00" fill="#111af6" />
<rect x="900.00" y="403.00" width="1.50" height="1.00" fill="#090dda" />
<rect x="905.00" y="398.30" width="1.60" height="1.00" fill="#111af6" />
<rect x="905.00" y="403.00" width="1.50" height="1.00" fill="#090dda" />
<rect x="907.50" y="398.30" width="1.60" height="1.00" fill="#111af6" />
<rect x="910.00" y="398.30" width="1.60" height="1.00" fill="#111af6" />
<rect x="915.00" y="403.00" width="1.50" height="1.00" fill="#090dda" />
<rect x="920.00" y="398.30" width="1.60" height="1.00" fill="#111af6" />
<rect x="922.50" y="398.30" width="1.60" height="1.00" fill="#111af6" />
<rect x="927.50" y="398.30" width="1.60" height="1.00" fill="#111af6" />
<rect x="932.50" y="398.30" width="1.60" height="1.00" fill="#111af6" />
<rect x="940.00" y="398.30" width="1.60" height="1.00" fill="#111af6" />
<rect x="942.50" y="398.30" width="1.60" height="1.00" fill="#111af6" />
<rect x="947.50" y="398.30" width="1.60" height="1.00" fill="#111af6" />
<rect x="952.50" y="398.30" width="1.60" height="1.00" fill="#111af6" />
<rect x="952.50" y="403.00" width="1.50" height="1.00" fill="#090dda" />
<rect x="957.50" y="398.30" width="1.60" height="1.00" fill="#111af6" />
<rect x="960.00" y="398.30" width="1.60" height="1.00" fill="#111af6" />
<rect x="962.50" y="403.00" width="1.50" height="1.00" fill="#090dda" />
<rect x="965.00" y="398.30" width="1.60" height="1.00" fill="#111af6" />
<rect x="965.00" y="403.00" width="1.50" height="1.00" fill="#090dda" />
<rect x="967.50" y="398.30" width="1.60" height="1.00" fill="#111af6" />
<rect x="972.50" y="398.30" width="1.60" height="1.00" fill="#111af6" />
<rect x="975.00" y="403.00" width="1.50" height="1.00" fill="#090dda" />
<rect x="977.50" y="403.00" width="1.50" height="1.00" fill="#090dda" />
<rect x="980.00" y="403.00" width="1.50" height="1.00" fill="#090dda" />
<rect x="985.00" y="398.30" width="1.60" height="1.00" fill="#111af6" />
<rect x="987.50" y="403.00" width="1.50" height="1.00" fill="#090dda" />
<rect x="992.50" y="403.00" width="1.50" height="1.00" fill="#090dda" />
<rect x="995.00" y="403.00" width="1.50" height="1.00" fill="#090dda" />
<rect x="1005.00" y="398.30" width="1.60" height="1.00" fill="#111af6" />
<rect x="1012.50" y="403.00" width="1.50" height="1.00" fill="#090dda" />
<rect x="1015.00" y="403.00" width="1.50" height="1.00" fill="#090dda" />
<rect x="1017.50" y="398.30" width="1.60" height="1.00" fill="#111af6" />
<rect x="1020.00" y="398.30" width="1.60" height="1.00" fill="#111af6" />
<rect x="1022.50" y="398.30" width="1.60" height="1.00" fill="#111af6" />
<rect x="1025.00" y="398.30" width="1.60" height="1.00" fill="#111af6" />
<rect x="1027.50" y="398.30" width="1.60" height="1.00" fill="#111af6" />
<rect x="1032.50" y="398.30" width="1.60" height="1.00" fill="#111af6" />
<rect x="1032.50" y="403.00" width="1.50" height="1.00" fill="#090dda" />
<rect x="1035.00" y="398.30" width="1.60" height="1.00" fill="#111af6" />
<rect x="1035.00" y="403.00" width="1.50" height="1.00" fill="#090dda" />
<rect x="1037.50" y="398.30" width="1.60" height="1.00" fill="#111af6" />
<rect x="1040.00" y="398.30" width="1.60" height="1.00" fill="#111af6" />
<rect x="1042.50" y="398.30" width="1.60" height="1.00" fill="#111af6" />
<rect x="1047.50" y="398.30" width="1.60" height="1.00" fill="#111af6" />
<rect x="1050.00" y="398.30" width="1.60" height="1.00" fill="#111af6" />
<rect x="1050.00" y="403.00" width="1.50" height="1.00" fill="#090dda" />
<rect x="1052.50" y="398.30" width="1.60" height="1.00" fill="#111af6" />
<rect x="1075.00" y="403.00" width="1.50" height="1.00" fill="#090dda" />
<rect x="1077.50" y="403.00" width="1.50" height="1.00" fill="#090dda" />
<rect x="813.50" y="392.00" width="3.00" height="3.00" fill="#1452f0" />
<rect x="813.50" y="395.00" width="3.00" height="4.00" fill="#3fc857" />
<rect x="813.50" y="399.00" width="3.00" height="4.00" fill="#d4da04" />
<rect x="813.50" y="403.00" width="3.00" height="3.00" fill="#3fc857" />
<rect x="813.50" y="406.00" width="3.00" height="3.00" fill="#1452f0" />
<rect x="811.00" y="400.00" width="2.50" height="2.00" fill="#1441f5" />
<rect x="94.5" y="223.5" width="987" height="193" fill="none" stroke="#222" stroke-width="1"/>
<line x1="136.5" y1="413" x2="136.5" y2="416" stroke="#444" stroke-width="1"/>
<line x1="177.5" y1="413" x2="177.5" y2="416" stroke="#444" stroke-width="1"/>
<line x1="218.5" y1="413" x2="218.5" y2="416" stroke="#444" stroke-width="1"/>
<line x1="259.5" y1="413" x2="259.5" y2="416" stroke="#444" stroke-width="1"/>
<line x1="300.5" y1="413" x2="300.5" y2="416" stroke="#444" stroke-width="1"/>
<line x1="342.5" y1="413" x2="342.5" y2="416" stroke="#444" stroke-width="1"/>
<line x1="383.5" y1="413" x2="383.5" y2="416" stroke="#444" stroke-width="1"/>
<line x1="424.5" y1="413" x2="424.5" y2="416" stroke="#444" stroke-width="1"/>
<line x1="465.5" y1="413" x2="465.5" y2="416" stroke="#444" stroke-width="1"/>
<line x1="506.5" y1="413" x2="506.5" y2="416" stroke="#444" stroke-width="1"/>
<line x1="547.5" y1="413" x2="547.5" y2="416" stroke="#444" stroke-width="1"/>
<line x1="588.5" y1="413" x2="588.5" y2="416" stroke="#444" stroke-width="1"/>
<line x1="629.5" y1="413" x2="629.5" y2="416" stroke="#444" stroke-width="1"/>
<line x1="670.5" y1="413" x2="670.5" y2="416" stroke="#444" stroke-width="1"/>
<line x1="711.5" y1="413" x2="711.5" y2="416" stroke="#444" stroke-width="1"/>
<line x1="752.5" y1="413" x2="752.5" y2="416" stroke="#444" stroke-width="1"/>
<line x1="793.5" y1="413" x2="793.5" y2="416" stroke="#444" stroke-width="1"/>
<line x1="834.5" y1="413" x2="834.5" y2="416" stroke="#444" stroke-width="1"/>
<line x1="876.5" y1="413" x2="876.5" y2="416" stroke="#444" stroke-width="1"/>
<line x1="917.5" y1="413" x2="917.5" y2="416" stroke="#444" stroke-width="1"/>
<line x1="958.5" y1="413" x2="958.5" y2="416" stroke="#444" stroke-width="1"/>
<line x1="999.5" y1="413" x2="999.5" y2="416" stroke="#444" stroke-width="1"/>
<line x1="1040.5" y1="413" x2="1040.5" y2="416" stroke="#444" stroke-width="1"/>
<line x1="91" y1="407.50" x2="95" y2="407.50" stroke="#222" stroke-width="1"/>
<line x1="91" y1="391.50" x2="95" y2="391.50" stroke="#222" stroke-width="1"/>
<line x1="91" y1="378.50" x2="95" y2="378.50" stroke="#222" stroke-width="1"/>
<line x1="91" y1="368.50" x2="95" y2="368.50" stroke="#222" stroke-width="1"/>
<line x1="91" y1="359.50" x2="95" y2="359.50" stroke="#222" stroke-width="1"/>
<line x1="91" y1="352.50" x2="95" y2="352.50" stroke="#222" stroke-width="1"/>
<line x1="91" y1="345.50" x2="95" y2="345.50" stroke="#222" stroke-width="1"/>
<line x1="87" y1="339.50" x2="95" y2="339.50" stroke="#222" stroke-width="1"/>
<line x1="91" y1="334.50" x2="95" y2="334.50" stroke="#222" stroke-width="1"/>
<line x1="91" y1="329.50" x2="95" y2="329.50" stroke="#222" stroke-width="1"/>
<line x1="91" y1="324.50" x2="95" y2="324.50" stroke="#222" stroke-width="1"/>
<line x1="91" y1="320.50" x2="95" y2="320.50" stroke="#222" stroke-width="1"/>
<line x1="91" y1="316.50" x2="95" y2="316.50" stroke="#222" stroke-width="1"/>
<line x1="91" y1="313.50" x2="95" y2="313.50" stroke="#222" stroke-width="1"/>
<line x1="91" y1="309.50" x2="95" y2="309.50" stroke="#222" stroke-width="1"/>
<line x1="91" y1="306.50" x2="95" y2="306.50" stroke="#222" stroke-width="1"/>
<line x1="91" y1="303.50" x2="95" y2="303.50" stroke="#222" stroke-width="1"/>
<line x1="87" y1="300.50" x2="95" y2="300.50" stroke="#222" stroke-width="1"/>
<line x1="91" y1="297.50" x2="95" y2="297.50" stroke="#222" stroke-width="1"/>
<line x1="91" y1="295.50" x2="95" y2="295.50" stroke="#222" stroke-width="1"/>
<line x1="91" y1="292.50" x2="95" y2="292.50" stroke="#222" stroke-width="1"/>
<line x1="91" y1="290.50" x2="95" y2="290.50" stroke="#222" stroke-width="1"/>
<line x1="91" y1="287.50" x2="95" y2="287.50" stroke="#222" stroke-width="1"/>
<line x1="91" y1="285.50" x2="95" y2="285.50" stroke="#222" stroke-width="1"/>
<line x1="91" y1="283.50" x2="95" y2="283.50" stroke="#222" stroke-width="1"/>
<line x1="91" y1="281.50" x2="95" y2="281.50" stroke="#222" stroke-width="1"/>
<line x1="91" y1="279.50" x2="95" y2="279.50" stroke="#222" stroke-width="1"/>
<line x1="87" y1="277.50" x2="95" y2="277.50" stroke="#222" stroke-width="1"/>
<line x1="91" y1="275.50" x2="95" y2="275.50" stroke="#222" stroke-width="1"/>
<line x1="91" y1="273.50" x2="95" y2="273.50" stroke="#222" stroke-width="1"/>
<line x1="91" y1="272.50" x2="95" y2="272.50" stroke="#222" stroke-width="1"/>
<line x1="91" y1="270.50" x2="95" y2="270.50" stroke="#222" stroke-width="1"/>
<line x1="91" y1="268.50" x2="95" y2="268.50" stroke="#222" stroke-width="1"/>
<line x1="91" y1="267.50" x2="95" y2="267.50" stroke="#222" stroke-width="1"/>
<line x1="91" y1="265.50" x2="95" y2="265.50" stroke="#222" stroke-width="1"/>
<line x1="91" y1="264.50" x2="95" y2="264.50" stroke="#222" stroke-width="1"/>
<line x1="91" y1="262.50" x2="95" y2="262.50" stroke="#222" stroke-width="1"/>
<line x1="87" y1="261.50" x2="95" y2="261.50" stroke="#222" stroke-width="1"/>
<line x1="91" y1="259.50" x2="95" y2="259.50" stroke="#222" stroke-width="1"/>
<line x1="91" y1="258.50" x2="95" y2="258.50" stroke="#222" stroke-width="1"/>
<line x1="91" y1="257.50" x2="95" y2="257.50" stroke="#222" stroke-width="1"/>
<line x1="91" y1="255.50" x2="95" y2="255.50" stroke="#222" stroke-width="1"/>
<line x1="91" y1="254.50" x2="95" y2="254.50" stroke="#222" stroke-width="1"/>
<line x1="91" y1="253.50" x2="95" y2="253.50" stroke="#222" stroke-width="1"/>
<line x1="91" y1="251.50" x2="95" y2="251.50" stroke="#222" stroke-width="1"/>
<line x1="91" y1="250.50" x2="95" y2="250.50" stroke="#222" stroke-width="1"/>
<line x1="91" y1="249.50" x2="95" y2="249.50" stroke="#222" stroke-width="1"/>
<line x1="87" y1="248.50" x2="95" y2="248.50" stroke="#222" stroke-width="1"/>
<line x1="91" y1="247.50" x2="95" y2="247.50" stroke="#222" stroke-width="1"/>
<line x1="91" y1="246.50" x2="95" y2="246.50" stroke="#222" stroke-width="1"/>
<line x1="91" y1="245.50" x2="95" y2="245.50" stroke="#222" stroke-width="1"/>
<line x1="91" y1="244.50" x2="95" y2="244.50" stroke="#222" stroke-width="1"/>
<line x1="91" y1="243.50" x2="95" y2="243.50" stroke="#222" stroke-width="1"/>
<line x1="91" y1="242.50" x2="95" y2="242.50" stroke="#222" stroke-width="1"/>
<line x1="91" y1="241.50" x2="95" y2="241.50" stroke="#222" stroke-width="1"/>
<line x1="91" y1="240.50" x2="95" y2="240.50" stroke="#222" stroke-width="1"/>
<line x1="91" y1="239.50" x2="95" y2="239.50" stroke="#222" stroke-width="1"/>
<line x1="87" y1="238.50" x2="95" y2="238.50" stroke="#222" stroke-width="1"/>
<line x1="91" y1="237.50" x2="95" y2="237.50" stroke="#222" stroke-width="1"/>
<line x1="91" y1="236.50" x2="95" y2="236.50" stroke="#222" stroke-width="1"/>
<line x1="91" y1="235.50" x2="95" y2="235.50" stroke="#222" stroke-width="1"/>
<line x1="91" y1="234.50" x2="95" y2="234.50" stroke="#222" stroke-width="1"/>
<line x1="91" y1="233.50" x2="95" y2="233.50" stroke="#222" stroke-width="1"/>
<line x1="91" y1="232.50" x2="95" y2="232.50" stroke="#222" stroke-width="1"/>
<line x1="91" y1="231.50" x2="95" y2="231.50" stroke="#222" stroke-width="1"/>
<line x1="91" y1="231.50" x2="95" y2="231.50" stroke="#222" stroke-width="1"/>
<line x1="91" y1="230.50" x2="95" y2="230.50" stroke="#222" stroke-width="1"/>
<line x1="87" y1="229.50" x2="95" y2="229.50" stroke="#222" stroke-width="1"/>
<line x1="91" y1="228.50" x2="95" y2="228.50" stroke="#222" stroke-width="1"/>
<line x1="91" y1="227.50" x2="95" y2="227.50" stroke="#222" stroke-width="1"/>
<line x1="91" y1="227.50" x2="95" y2="227.50" stroke="#222" stroke-width="1"/>
<line x1="91" y1="226.50" x2="95" y2="226.50" stroke="#222" stroke-width="1"/>
<line x1="91" y1="225.50" x2="95" y2="225.50" stroke="#222" stroke-width="1"/>
<line x1="91" y1="224.50" x2="95" y2="224.50" stroke="#222" stroke-width="1"/>
<rect x="91.00" y="225.00" width="4.00" height="25.00" fill="#333" />
<text x="0" y="0" transform="translate(81.50,233.31) scale(0.88,1)" font-size="12.8" text-anchor="end" fill="#383838" textLength="28.41" lengthAdjust="spacing" >700.</text>
<text x="0" y="0" transform="translate(81.50,242.05) scale(0.88,1)" font-size="12.8" text-anchor="end" fill="#383838" textLength="28.41" lengthAdjust="spacing" >600.</text>
<text x="0" y="0" transform="translate(81.50,252.38) scale(0.88,1)" font-size="12.8" text-anchor="end" fill="#383838" textLength="28.41" lengthAdjust="spacing" >500.</text>
<text x="0" y="0" transform="translate(81.50,265.03) scale(0.88,1)" font-size="12.8" text-anchor="end" fill="#383838" textLength="28.41" lengthAdjust="spacing" >400.</text>
<text x="0" y="0" transform="translate(81.50,281.34) scale(0.88,1)" font-size="12.8" text-anchor="end" fill="#383838" textLength="28.41" lengthAdjust="spacing" >300.</text>
<text x="0" y="0" transform="translate(81.50,304.32) scale(0.88,1)" font-size="12.8" text-anchor="end" fill="#383838" textLength="28.41" lengthAdjust="spacing" >200.</text>
<text x="0" y="0" transform="translate(81.50,343.60) scale(0.88,1)" font-size="12.8" text-anchor="end" fill="#383838" textLength="28.41" lengthAdjust="spacing" >100.</text>
<text x="0" y="0" font-size="12.8" text-anchor="middle" fill="#383838" transform="translate(45.10,320.50) rotate(-90) scale(0.88,1)" textLength="81.82" lengthAdjust="spacing">Energy (keV)</text>
<text x="0" y="0" transform="translate(10.80,210.80) scale(0.88,1)" font-size="12.8" text-anchor="start" fill="#383838" ></text>
<rect x="1092.00" y="226.00" width="12.00" height="190.00" fill="url(#cbar)" />
<line x1="1104.5" y1="226" x2="1104.5" y2="416" stroke="#222" stroke-width="1"/>
<line x1="1104" y1="226.50" x2="1112.5" y2="226.50" stroke="#222" stroke-width="1"/>
<line x1="1104" y1="283.50" x2="1112.5" y2="283.50" stroke="#222" stroke-width="1"/>
<line x1="1104" y1="266.50" x2="1108.5" y2="266.50" stroke="#222" stroke-width="1"/>
<line x1="1104" y1="256.50" x2="1108.5" y2="256.50" stroke="#222" stroke-width="1"/>
<line x1="1104" y1="249.50" x2="1108.5" y2="249.50" stroke="#222" stroke-width="1"/>
<line x1="1104" y1="243.50" x2="1108.5" y2="243.50" stroke="#222" stroke-width="1"/>
<line x1="1104" y1="239.50" x2="1108.5" y2="239.50" stroke="#222" stroke-width="1"/>
<line x1="1104" y1="235.50" x2="1108.5" y2="235.50" stroke="#222" stroke-width="1"/>
<line x1="1104" y1="232.50" x2="1108.5" y2="232.50" stroke="#222" stroke-width="1"/>
<line x1="1104" y1="229.50" x2="1108.5" y2="229.50" stroke="#222" stroke-width="1"/>
<line x1="1104" y1="341.50" x2="1112.5" y2="341.50" stroke="#222" stroke-width="1"/>
<line x1="1104" y1="323.50" x2="1108.5" y2="323.50" stroke="#222" stroke-width="1"/>
<line x1="1104" y1="313.50" x2="1108.5" y2="313.50" stroke="#222" stroke-width="1"/>
<line x1="1104" y1="306.50" x2="1108.5" y2="306.50" stroke="#222" stroke-width="1"/>
<line x1="1104" y1="301.50" x2="1108.5" y2="301.50" stroke="#222" stroke-width="1"/>
<line x1="1104" y1="296.50" x2="1108.5" y2="296.50" stroke="#222" stroke-width="1"/>
<line x1="1104" y1="292.50" x2="1108.5" y2="292.50" stroke="#222" stroke-width="1"/>
<line x1="1104" y1="289.50" x2="1108.5" y2="289.50" stroke="#222" stroke-width="1"/>
<line x1="1104" y1="286.50" x2="1108.5" y2="286.50" stroke="#222" stroke-width="1"/>
<line x1="1104" y1="398.50" x2="1112.5" y2="398.50" stroke="#222" stroke-width="1"/>
<line x1="1104" y1="381.50" x2="1108.5" y2="381.50" stroke="#222" stroke-width="1"/>
<line x1="1104" y1="371.50" x2="1108.5" y2="371.50" stroke="#222" stroke-width="1"/>
<line x1="1104" y1="363.50" x2="1108.5" y2="363.50" stroke="#222" stroke-width="1"/>
<line x1="1104" y1="358.50" x2="1108.5" y2="358.50" stroke="#222" stroke-width="1"/>
<line x1="1104" y1="353.50" x2="1108.5" y2="353.50" stroke="#222" stroke-width="1"/>
<line x1="1104" y1="350.50" x2="1108.5" y2="350.50" stroke="#222" stroke-width="1"/>
<line x1="1104" y1="346.50" x2="1108.5" y2="346.50" stroke="#222" stroke-width="1"/>
<line x1="1104" y1="343.50" x2="1108.5" y2="343.50" stroke="#222" stroke-width="1"/>
<line x1="1104" y1="415.50" x2="1108.5" y2="415.50" stroke="#222" stroke-width="1"/>
<line x1="1104" y1="411.50" x2="1108.5" y2="411.50" stroke="#222" stroke-width="1"/>
<line x1="1104" y1="407.50" x2="1108.5" y2="407.50" stroke="#222" stroke-width="1"/>
<line x1="1104" y1="404.50" x2="1108.5" y2="404.50" stroke="#222" stroke-width="1"/>
<line x1="1104" y1="401.50" x2="1108.5" y2="401.50" stroke="#222" stroke-width="1"/>
<text x="0" y="0" transform="translate(1116.30,233.60) scale(0.88,1)" font-size="12.8" text-anchor="start" fill="#383838" textLength="16.59" lengthAdjust="spacing" >10</text>
<text x="0" y="0" transform="translate(1131.80,227.50) scale(0.88,1)" font-size="12.8" text-anchor="start" fill="#383838" textLength="16.59" lengthAdjust="spacing" >&#8722;9</text>
<text x="0" y="0" transform="translate(1116.30,290.93) scale(0.88,1)" font-size="12.8" text-anchor="start" fill="#383838" textLength="16.59" lengthAdjust="spacing" >10</text>
<text x="0" y="0" transform="translate(1131.80,284.83) scale(0.88,1)" font-size="12.8" text-anchor="start" fill="#383838" textLength="24.55" lengthAdjust="spacing" >&#8722;10</text>
<text x="0" y="0" transform="translate(1116.30,348.26) scale(0.88,1)" font-size="12.8" text-anchor="start" fill="#383838" textLength="16.59" lengthAdjust="spacing" >10</text>
<text x="0" y="0" transform="translate(1131.80,342.16) scale(0.88,1)" font-size="12.8" text-anchor="start" fill="#383838" textLength="24.55" lengthAdjust="spacing" >&#8722;11</text>
<text x="0" y="0" transform="translate(1116.30,405.59) scale(0.88,1)" font-size="12.8" text-anchor="start" fill="#383838" textLength="16.59" lengthAdjust="spacing" >10</text>
<text x="0" y="0" transform="translate(1131.80,399.49) scale(0.88,1)" font-size="12.8" text-anchor="start" fill="#383838" textLength="24.55" lengthAdjust="spacing" >&#8722;12</text>
<text x="0" y="0" font-size="12.8" text-anchor="middle" fill="#383838" transform="translate(1163.50,319.50) rotate(90) scale(0.88,1)" textLength="136.36" lengthAdjust="spacing">pressure dyne/cm^2</text>
<rect x="95.5" y="420.5" width="985" height="89" fill="#fff" stroke="#222" stroke-width="1"/>
<path d="M95.0,472.5 L113.0,472.5 L115.0,473.5 L130.0,474.0 L137.0,474.5 L150.0,475.0 L165.0,476.0 L180.0,477.5 L195.0,478.5 L210.0,480.0 L230.0,481.0 L250.0,481.5 L262.0,480.5 L270.0,479.0 L271.5,446.0 L273.5,445.0 L275.0,415.0 L324.2,415.0 L324.5,446.0 L325.5,448.0 L335.5,448.0 L337.5,435.0 L338.0,415.0 L341.5,415.0 L342.5,478.0 L344.0,492.0 L346.5,496.0 L347.0,512.0" stroke="#ff0000" stroke-width="1.15" fill="none" shape-rendering="geometricPrecision" stroke-linejoin="round" clip-path="url(#c3)"/>
<path d="M352.0,512.0 L356.5,498.5 L359.0,505.0 L361.0,500.0 L364.5,512.0" stroke="#ff0000" stroke-width="1.15" fill="none" shape-rendering="geometricPrecision" stroke-linejoin="round" clip-path="url(#c3)"/>
<path d="M810.0,512.0 L811.0,500.0 L812.5,497.0 L815.5,458.0 L817.0,490.0 L818.0,501.0 L820.0,497.6 L822.2,498.2 L824.4,498.5 L826.6,499.2 L828.8,498.2 L831.0,499.1 L833.2,494.6 L835.4,496.8 L837.6,499.2 L839.8,497.7 L842.0,499.0 L844.2,495.1 L846.4,496.8 L848.6,495.7 L850.8,497.2 L853.0,497.4 L855.2,494.6 L857.4,495.6 L859.6,495.9 L861.8,499.1 L864.0,498.3 L866.2,495.3 L868.4,498.5 L870.6,495.2 L872.8,497.6 L875.0,495.1 L877.2,494.5 L879.4,498.9 L881.6,495.5 L883.8,495.6 L886.0,499.4 L888.2,498.9 L890.4,495.9 L892.6,499.3 L894.8,497.2 L897.0,497.9 L899.2,495.5 L901.4,499.2 L903.6,498.0 L905.8,499.3 L908.0,499.0 L910.2,496.0 L912.4,496.3 L914.6,495.3 L916.8,495.2 L919.0,494.8 L921.2,496.0 L923.4,497.5 L925.6,494.5 L927.8,497.9 L930.0,496.2 L932.2,496.0 L934.4,498.6 L936.6,496.9 L938.8,496.1 L941.0,496.9 L943.2,498.0 L945.4,494.8 L947.6,499.4 L949.8,494.6 L952.0,498.2 L954.2,498.7 L956.4,494.6 L958.6,498.4 L960.8,496.3 L963.0,497.4 L965.2,494.5 L967.4,494.7 L969.6,495.4 L971.8,499.3 L974.0,495.5 L976.2,498.3 L978.4,499.1 L980.6,499.2 L982.8,496.2 L985.0,496.3 L987.2,497.1 L989.4,498.4 L991.6,495.0 L993.8,498.2 L996.0,498.5 L998.2,498.8 L1000.4,494.7 L1002.6,499.2 L1004.8,495.0 L1007.0,496.2 L1009.2,497.6 L1011.4,499.1 L1013.6,496.2 L1015.8,499.1 L1018.0,497.2 L1020.2,496.1 L1022.4,496.1 L1024.6,495.4 L1026.8,494.9 L1029.0,495.2 L1031.2,497.9 L1033.4,499.5 L1035.6,495.3 L1037.8,494.7 L1040.0,499.4 L1042.2,497.2 L1044.4,496.5 L1046.6,495.7 L1048.8,497.5 L1051.0,498.6 L1053.2,496.8 L1055.4,496.6 L1057.6,494.8 L1059.8,499.1 L1062.0,494.7 L1064.2,497.0 L1066.4,498.7 L1068.6,495.2 L1070.8,498.2 L1073.0,499.2 L1075.2,497.7 L1077.4,498.4 L1079.6,495.0" stroke="#ff0000" stroke-width="1.15" fill="none" shape-rendering="geometricPrecision" stroke-linejoin="round" clip-path="url(#c3)"/>
<path d="M104.5,512.0 L104.5,468.0" stroke="#00ff00" stroke-width="1.15" fill="none" shape-rendering="geometricPrecision" stroke-linejoin="round" clip-path="url(#c3)"/>
<path d="M145.5,512.0 L145.5,473.0" stroke="#00ff00" stroke-width="1.15" fill="none" shape-rendering="geometricPrecision" stroke-linejoin="round" clip-path="url(#c3)"/>
<path d="M248.0,512.0 L249.0,479.5 L254.0,484.0 L258.0,467.5 L265.0,476.0 L269.0,467.5 L271.5,469.0 L278.3,473.3 L278.3,512.0" stroke="#00ff00" stroke-width="1.15" fill="none" shape-rendering="geometricPrecision" stroke-linejoin="round" clip-path="url(#c3)"/>
<path d="M285.5,512.0 L285.5,488.0" stroke="#00ff00" stroke-width="1.15" fill="none" shape-rendering="geometricPrecision" stroke-linejoin="round" clip-path="url(#c3)"/>
<path d="M289.0,512.0 L289.0,490.0" stroke="#00ff00" stroke-width="1.15" fill="none" shape-rendering="geometricPrecision" stroke-linejoin="round" clip-path="url(#c3)"/>
<path d="M295.0,512.0 L295.0,491.0" stroke="#00ff00" stroke-width="1.15" fill="none" shape-rendering="geometricPrecision" stroke-linejoin="round" clip-path="url(#c3)"/>
<path d="M299.0,512.0 L299.0,479.0" stroke="#00ff00" stroke-width="1.15" fill="none" shape-rendering="geometricPrecision" stroke-linejoin="round" clip-path="url(#c3)"/>
<path d="M306.5,512.0 L306.5,492.0 L309.5,493.0 L309.5,512.0" stroke="#00ff00" stroke-width="1.15" fill="none" shape-rendering="geometricPrecision" stroke-linejoin="round" clip-path="url(#c3)"/>
<path d="M316.5,512.0 L316.5,480.0 L319.5,490.0 L319.5,512.0" stroke="#00ff00" stroke-width="1.15" fill="none" shape-rendering="geometricPrecision" stroke-linejoin="round" clip-path="url(#c3)"/>
<path d="M330.5,512.0 L330.5,463.0" stroke="#00ff00" stroke-width="1.15" fill="none" shape-rendering="geometricPrecision" stroke-linejoin="round" clip-path="url(#c3)"/>
<path d="M357.5,512.0 L357.5,492.0" stroke="#00ff00" stroke-width="1.15" fill="none" shape-rendering="geometricPrecision" stroke-linejoin="round" clip-path="url(#c3)"/>
<path d="M367.5,512.0 L367.5,481.0 L372.5,488.0 L377.0,488.5 L377.0,512.0" stroke="#00ff00" stroke-width="1.15" fill="none" shape-rendering="geometricPrecision" stroke-linejoin="round" clip-path="url(#c3)"/>
<path d="M384.5,512.0 L384.5,470.0 L388.5,484.0 L388.5,512.0" stroke="#00ff00" stroke-width="1.15" fill="none" shape-rendering="geometricPrecision" stroke-linejoin="round" clip-path="url(#c3)"/>
<path d="M459.5,512.0 L459.5,489.0" stroke="#00ff00" stroke-width="1.15" fill="none" shape-rendering="geometricPrecision" stroke-linejoin="round" clip-path="url(#c3)"/>
<path d="M514.5,512.0 L514.5,488.0" stroke="#00ff00" stroke-width="1.15" fill="none" shape-rendering="geometricPrecision" stroke-linejoin="round" clip-path="url(#c3)"/>
<path d="M521.5,512.0 L521.5,484.0" stroke="#00ff00" stroke-width="1.15" fill="none" shape-rendering="geometricPrecision" stroke-linejoin="round" clip-path="url(#c3)"/>
<path d="M528.5,512.0 L528.5,481.0" stroke="#00ff00" stroke-width="1.15" fill="none" shape-rendering="geometricPrecision" stroke-linejoin="round" clip-path="url(#c3)"/>
<path d="M535.5,512.0 L535.5,490.0 L541.5,495.0 L541.5,512.0" stroke="#00ff00" stroke-width="1.15" fill="none" shape-rendering="geometricPrecision" stroke-linejoin="round" clip-path="url(#c3)"/>
<path d="M562.5,512.0 L562.5,464.0 L565.5,512.0" stroke="#00ff00" stroke-width="1.15" fill="none" shape-rendering="geometricPrecision" stroke-linejoin="round" clip-path="url(#c3)"/>
<path d="M572.5,512.0 L572.5,484.0 L576.5,489.0 L576.5,512.0" stroke="#00ff00" stroke-width="1.15" fill="none" shape-rendering="geometricPrecision" stroke-linejoin="round" clip-path="url(#c3)"/>
<path d="M627.5,512.0 L627.5,496.0" stroke="#00ff00" stroke-width="1.15" fill="none" shape-rendering="geometricPrecision" stroke-linejoin="round" clip-path="url(#c3)"/>
<path d="M736.0,512.0 L736.0,486.0" stroke="#00ff00" stroke-width="1.15" fill="none" shape-rendering="geometricPrecision" stroke-linejoin="round" clip-path="url(#c3)"/>
<path d="M746.5,512.0 L746.5,490.0 L750.5,493.5 L750.5,512.0" stroke="#00ff00" stroke-width="1.15" fill="none" shape-rendering="geometricPrecision" stroke-linejoin="round" clip-path="url(#c3)"/>
<path d="M835.5,512.0 L835.5,470.0" stroke="#00ff00" stroke-width="1.15" fill="none" shape-rendering="geometricPrecision" stroke-linejoin="round" clip-path="url(#c3)"/>
<path d="M842.5,512.0 L842.5,473.0" stroke="#00ff00" stroke-width="1.15" fill="none" shape-rendering="geometricPrecision" stroke-linejoin="round" clip-path="url(#c3)"/>
<path d="M914.5,512.0 L914.5,479.0" stroke="#00ff00" stroke-width="1.15" fill="none" shape-rendering="geometricPrecision" stroke-linejoin="round" clip-path="url(#c3)"/>
<path d="M921.5,512.0 L921.5,462.0 L924.5,484.5 L927.5,475.0 L927.5,512.0" stroke="#00ff00" stroke-width="1.15" fill="none" shape-rendering="geometricPrecision" stroke-linejoin="round" clip-path="url(#c3)"/>
<path d="M1044.0,512.0 L1044.0,482.0 L1047.0,485.0 L1050.5,477.0 L1050.5,512.0" stroke="#00ff00" stroke-width="1.15" fill="none" shape-rendering="geometricPrecision" stroke-linejoin="round" clip-path="url(#c3)"/>
<path d="M1057.5,512.0 L1057.5,484.0" stroke="#00ff00" stroke-width="1.15" fill="none" shape-rendering="geometricPrecision" stroke-linejoin="round" clip-path="url(#c3)"/>
<path d="M1068.0,512.0 L1068.0,487.0" stroke="#00ff00" stroke-width="1.15" fill="none" shape-rendering="geometricPrecision" stroke-linejoin="round" clip-path="url(#c3)"/>
<path d="M104.5,493.0 L111.5,497.0 L115.0,493.5 L119.0,512.0 L128.5,490.0 L135.0,502.0 L139.0,499.0 L143.0,506.0 L146.0,497.5 L153.0,487.0 L155.0,495.0 L162.0,505.0 L166.5,493.5 L178.0,493.5 L179.0,489.0 L186.0,505.0 L189.0,496.0 L189.5,512.0" stroke="#0000ff" stroke-width="1.15" fill="none" shape-rendering="geometricPrecision" stroke-linejoin="round" clip-path="url(#c3)"/>
<path d="M200.0,512.0 L200.0,502.0 L207.0,509.0 L210.0,503.0 L213.0,499.0 L217.5,484.0 L220.0,512.0" stroke="#0000ff" stroke-width="1.15" fill="none" shape-rendering="geometricPrecision" stroke-linejoin="round" clip-path="url(#c3)"/>
<path d="M227.5,512.0 L227.5,503.0 L229.0,512.0" stroke="#0000ff" stroke-width="1.15" fill="none" shape-rendering="geometricPrecision" stroke-linejoin="round" clip-path="url(#c3)"/>
<path d="M237.5,512.0 L237.5,487.0 L242.0,504.0 L248.0,473.0 L252.0,512.0 L254.0,493.0 L260.0,485.0 L265.0,480.0 L267.5,472.0 L271.0,475.0 L276.0,483.5 L279.0,478.0 L282.0,493.0 L285.0,484.0 L290.0,491.0 L292.0,486.0 L295.0,489.0 L302.5,481.0 L306.5,486.0 L312.5,472.0 L316.5,491.0 L319.5,483.0 L324.0,483.0 L326.5,476.5 L340.5,488.5 L343.0,479.5 L353.5,488.0 L360.0,488.0 L364.5,487.0 L367.0,496.0 L374.5,483.0 L374.5,512.0" stroke="#0000ff" stroke-width="1.15" fill="none" shape-rendering="geometricPrecision" stroke-linejoin="round" clip-path="url(#c3)"/>
<path d="M381.0,512.0 L381.0,492.0 L384.0,512.0" stroke="#0000ff" stroke-width="1.15" fill="none" shape-rendering="geometricPrecision" stroke-linejoin="round" clip-path="url(#c3)"/>
<path d="M391.5,512.0 L391.5,488.0 L395.0,512.0" stroke="#0000ff" stroke-width="1.15" fill="none" shape-rendering="geometricPrecision" stroke-linejoin="round" clip-path="url(#c3)"/>
<path d="M405.5,512.0 L405.5,502.0" stroke="#0000ff" stroke-width="1.15" fill="none" shape-rendering="geometricPrecision" stroke-linejoin="round" clip-path="url(#c3)"/>
<path d="M415.0,512.0 L415.0,493.0 L422.0,496.0 L425.5,485.0 L429.5,505.0 L432.5,485.0 L435.5,499.0 L446.5,493.0 L453.5,498.0 L459.0,497.5 L462.5,509.0 L465.5,505.0 L465.5,512.0" stroke="#0000ff" stroke-width="1.15" fill="none" shape-rendering="geometricPrecision" stroke-linejoin="round" clip-path="url(#c3)"/>
<path d="M476.5,512.0 L480.5,489.0 L483.5,503.0 L487.5,505.0 L490.0,486.0 L494.5,500.0 L497.5,501.0 L497.5,512.0" stroke="#0000ff" stroke-width="1.15" fill="none" shape-rendering="geometricPrecision" stroke-linejoin="round" clip-path="url(#c3)"/>
<path d="M504.5,512.0 L504.5,484.0 L507.5,486.0 L507.5,512.0" stroke="#0000ff" stroke-width="1.15" fill="none" shape-rendering="geometricPrecision" stroke-linejoin="round" clip-path="url(#c3)"/>
<path d="M514.5,497.0 L516.0,512.0" stroke="#0000ff" stroke-width="1.15" fill="none" shape-rendering="geometricPrecision" stroke-linejoin="round" clip-path="url(#c3)"/>
<path d="M522.5,512.0 L525.0,507.0 L528.5,508.0 L535.5,485.0 L541.0,512.0" stroke="#0000ff" stroke-width="1.15" fill="none" shape-rendering="geometricPrecision" stroke-linejoin="round" clip-path="url(#c3)"/>
<path d="M545.0,501.0 L547.0,512.0" stroke="#0000ff" stroke-width="1.15" fill="none" shape-rendering="geometricPrecision" stroke-linejoin="round" clip-path="url(#c3)"/>
<path d="M555.0,499.0 L558.0,512.0 L562.0,496.0 L565.0,500.0 L569.5,481.0 L572.0,490.0 L575.0,512.0" stroke="#0000ff" stroke-width="1.15" fill="none" shape-rendering="geometricPrecision" stroke-linejoin="round" clip-path="url(#c3)"/>
<path d="M579.0,494.0 L579.0,512.0" stroke="#0000ff" stroke-width="1.15" fill="none" shape-rendering="geometricPrecision" stroke-linejoin="round" clip-path="url(#c3)"/>
<path d="M589.5,512.0 L589.5,489.5 L596.5,480.0 L599.0,512.0" stroke="#0000ff" stroke-width="1.15" fill="none" shape-rendering="geometricPrecision" stroke-linejoin="round" clip-path="url(#c3)"/>
<path d="M603.0,512.0 L605.0,498.0 L610.5,501.0 L613.5,496.0 L618.0,506.0 L620.0,508.0 L623.5,482.0 L627.0,512.0" stroke="#0000ff" stroke-width="1.15" fill="none" shape-rendering="geometricPrecision" stroke-linejoin="round" clip-path="url(#c3)"/>
<path d="M629.0,512.0 L629.0,497.0 L633.0,497.5 L638.0,512.0" stroke="#0000ff" stroke-width="1.15" fill="none" shape-rendering="geometricPrecision" stroke-linejoin="round" clip-path="url(#c3)"/>
<path d="M647.5,490.0 L651.5,512.0" stroke="#0000ff" stroke-width="1.15" fill="none" shape-rendering="geometricPrecision" stroke-linejoin="round" clip-path="url(#c3)"/>
<path d="M658.5,512.0 L658.5,481.0 L661.5,493.0 L661.5,512.0" stroke="#0000ff" stroke-width="1.15" fill="none" shape-rendering="geometricPrecision" stroke-linejoin="round" clip-path="url(#c3)"/>
<path d="M668.5,483.0 L668.5,512.0" stroke="#0000ff" stroke-width="1.15" fill="none" shape-rendering="geometricPrecision" stroke-linejoin="round" clip-path="url(#c3)"/>
<path d="M679.0,512.0 L682.0,501.0 L688.0,501.0 L692.0,495.0 L692.0,512.0" stroke="#0000ff" stroke-width="1.15" fill="none" shape-rendering="geometricPrecision" stroke-linejoin="round" clip-path="url(#c3)"/>
<path d="M699.5,512.0 L699.5,492.5 L702.5,492.5 L702.5,512.0" stroke="#0000ff" stroke-width="1.15" fill="none" shape-rendering="geometricPrecision" stroke-linejoin="round" clip-path="url(#c3)"/>
<path d="M709.5,482.0 L711.5,512.0 L716.5,490.0 L716.5,512.0" stroke="#0000ff" stroke-width="1.15" fill="none" shape-rendering="geometricPrecision" stroke-linejoin="round" clip-path="url(#c3)"/>
<path d="M722.5,494.0 L722.5,512.0" stroke="#0000ff" stroke-width="1.15" fill="none" shape-rendering="geometricPrecision" stroke-linejoin="round" clip-path="url(#c3)"/>
<path d="M733.5,512.0 L733.5,489.0 L740.0,490.0 L743.5,484.5 L746.0,489.0 L750.0,512.0" stroke="#0000ff" stroke-width="1.15" fill="none" shape-rendering="geometricPrecision" stroke-linejoin="round" clip-path="url(#c3)"/>
<path d="M760.5,502.0 L763.0,512.0" stroke="#0000ff" stroke-width="1.15" fill="none" shape-rendering="geometricPrecision" stroke-linejoin="round" clip-path="url(#c3)"/>
<path d="M772.0,512.0 L774.5,506.0 L774.5,512.0" stroke="#0000ff" stroke-width="1.15" fill="none" shape-rendering="geometricPrecision" stroke-linejoin="round" clip-path="url(#c3)"/>
<path d="M791.0,512.0 L794.5,496.0 L794.5,512.0" stroke="#0000ff" stroke-width="1.15" fill="none" shape-rendering="geometricPrecision" stroke-linejoin="round" clip-path="url(#c3)"/>
<path d="M825.5,512.0 L825.5,501.0 L832.5,500.0 L834.0,512.0" stroke="#0000ff" stroke-width="1.15" fill="none" shape-rendering="geometricPrecision" stroke-linejoin="round" clip-path="url(#c3)"/>
<path d="M842.0,512.0 L845.0,500.0 L848.0,512.0" stroke="#0000ff" stroke-width="1.15" fill="none" shape-rendering="geometricPrecision" stroke-linejoin="round" clip-path="url(#c3)"/>
<path d="M856.5,486.0 L856.5,512.0" stroke="#0000ff" stroke-width="1.15" fill="none" shape-rendering="geometricPrecision" stroke-linejoin="round" clip-path="url(#c3)"/>
<path d="M866.5,494.0 L874.0,512.0" stroke="#0000ff" stroke-width="1.15" fill="none" shape-rendering="geometricPrecision" stroke-linejoin="round" clip-path="url(#c3)"/>
<path d="M883.5,503.0 L883.5,512.0" stroke="#0000ff" stroke-width="1.15" fill="none" shape-rendering="geometricPrecision" stroke-linejoin="round" clip-path="url(#c3)"/>
<path d="M893.0,512.0 L893.0,493.0 L897.5,503.0 L897.5,512.0" stroke="#0000ff" stroke-width="1.15" fill="none" shape-rendering="geometricPrecision" stroke-linejoin="round" clip-path="url(#c3)"/>
<path d="M915.5,512.0 L917.5,484.0 L919.0,512.0" stroke="#0000ff" stroke-width="1.15" fill="none" shape-rendering="geometricPrecision" stroke-linejoin="round" clip-path="url(#c3)"/>
<path d="M924.0,497.0 L927.0,512.0" stroke="#0000ff" stroke-width="1.15" fill="none" shape-rendering="geometricPrecision" stroke-linejoin="round" clip-path="url(#c3)"/>
<path d="M941.5,473.0 L941.5,512.0" stroke="#0000ff" stroke-width="1.15" fill="none" shape-rendering="geometricPrecision" stroke-linejoin="round" clip-path="url(#c3)"/>
<path d="M948.5,512.0 L948.5,503.0 L951.0,501.0 L951.0,512.0" stroke="#0000ff" stroke-width="1.15" fill="none" shape-rendering="geometricPrecision" stroke-linejoin="round" clip-path="url(#c3)"/>
<path d="M958.5,488.0 L958.5,512.0" stroke="#0000ff" stroke-width="1.15" fill="none" shape-rendering="geometricPrecision" stroke-linejoin="round" clip-path="url(#c3)"/>
<path d="M965.5,496.0 L965.5,512.0" stroke="#0000ff" stroke-width="1.15" fill="none" shape-rendering="geometricPrecision" stroke-linejoin="round" clip-path="url(#c3)"/>
<path d="M986.5,494.0 L986.5,512.0" stroke="#0000ff" stroke-width="1.15" fill="none" shape-rendering="geometricPrecision" stroke-linejoin="round" clip-path="url(#c3)"/>
<path d="M992.5,492.0 L998.0,507.0" stroke="#0000ff" stroke-width="1.15" fill="none" shape-rendering="geometricPrecision" stroke-linejoin="round" clip-path="url(#c3)"/>
<path d="M1013.5,486.0 L1018.0,509.0 L1020.0,507.0" stroke="#0000ff" stroke-width="1.15" fill="none" shape-rendering="geometricPrecision" stroke-linejoin="round" clip-path="url(#c3)"/>
<path d="M1033.0,501.0 L1038.0,512.0" stroke="#0000ff" stroke-width="1.15" fill="none" shape-rendering="geometricPrecision" stroke-linejoin="round" clip-path="url(#c3)"/>
<path d="M1057.5,499.0 L1064.5,503.0 L1064.5,512.0" stroke="#0000ff" stroke-width="1.15" fill="none" shape-rendering="geometricPrecision" stroke-linejoin="round" clip-path="url(#c3)"/>
<path d="M1071.5,512.0 L1072.0,494.0 L1078.5,480.0 L1082.0,473.0" stroke="#0000ff" stroke-width="1.15" fill="none" shape-rendering="geometricPrecision" stroke-linejoin="round" clip-path="url(#c3)"/>
<line x1="87" y1="437.50" x2="95" y2="437.50" stroke="#222" stroke-width="1"/>
<line x1="91" y1="430.50" x2="95" y2="430.50" stroke="#222" stroke-width="1"/>
<line x1="91" y1="426.50" x2="95" y2="426.50" stroke="#222" stroke-width="1"/>
<line x1="91" y1="424.50" x2="95" y2="424.50" stroke="#222" stroke-width="1"/>
<line x1="91" y1="422.50" x2="95" y2="422.50" stroke="#222" stroke-width="1"/>
<line x1="87" y1="459.50" x2="95" y2="459.50" stroke="#222" stroke-width="1"/>
<line x1="91" y1="452.50" x2="95" y2="452.50" stroke="#222" stroke-width="1"/>
<line x1="91" y1="448.50" x2="95" y2="448.50" stroke="#222" stroke-width="1"/>
<line x1="91" y1="446.50" x2="95" y2="446.50" stroke="#222" stroke-width="1"/>
<line x1="91" y1="443.50" x2="95" y2="443.50" stroke="#222" stroke-width="1"/>
<line x1="91" y1="442.50" x2="95" y2="442.50" stroke="#222" stroke-width="1"/>
<line x1="91" y1="440.50" x2="95" y2="440.50" stroke="#222" stroke-width="1"/>
<line x1="91" y1="439.50" x2="95" y2="439.50" stroke="#222" stroke-width="1"/>
<line x1="91" y1="438.50" x2="95" y2="438.50" stroke="#222" stroke-width="1"/>
<line x1="87" y1="481.50" x2="95" y2="481.50" stroke="#222" stroke-width="1"/>
<line x1="91" y1="474.50" x2="95" y2="474.50" stroke="#222" stroke-width="1"/>
<line x1="91" y1="470.50" x2="95" y2="470.50" stroke="#222" stroke-width="1"/>
<line x1="91" y1="467.50" x2="95" y2="467.50" stroke="#222" stroke-width="1"/>
<line x1="91" y1="465.50" x2="95" y2="465.50" stroke="#222" stroke-width="1"/>
<line x1="91" y1="464.50" x2="95" y2="464.50" stroke="#222" stroke-width="1"/>
<line x1="91" y1="462.50" x2="95" y2="462.50" stroke="#222" stroke-width="1"/>
<line x1="91" y1="461.50" x2="95" y2="461.50" stroke="#222" stroke-width="1"/>
<line x1="91" y1="460.50" x2="95" y2="460.50" stroke="#222" stroke-width="1"/>
<line x1="87" y1="502.50" x2="95" y2="502.50" stroke="#222" stroke-width="1"/>
<line x1="91" y1="496.50" x2="95" y2="496.50" stroke="#222" stroke-width="1"/>
<line x1="91" y1="492.50" x2="95" y2="492.50" stroke="#222" stroke-width="1"/>
<line x1="91" y1="489.50" x2="95" y2="489.50" stroke="#222" stroke-width="1"/>
<line x1="91" y1="487.50" x2="95" y2="487.50" stroke="#222" stroke-width="1"/>
<line x1="91" y1="485.50" x2="95" y2="485.50" stroke="#222" stroke-width="1"/>
<line x1="91" y1="484.50" x2="95" y2="484.50" stroke="#222" stroke-width="1"/>
<line x1="91" y1="483.50" x2="95" y2="483.50" stroke="#222" stroke-width="1"/>
<line x1="91" y1="482.50" x2="95" y2="482.50" stroke="#222" stroke-width="1"/>
<line x1="91" y1="509.50" x2="95" y2="509.50" stroke="#222" stroke-width="1"/>
<line x1="91" y1="507.50" x2="95" y2="507.50" stroke="#222" stroke-width="1"/>
<line x1="91" y1="506.50" x2="95" y2="506.50" stroke="#222" stroke-width="1"/>
<line x1="91" y1="505.50" x2="95" y2="505.50" stroke="#222" stroke-width="1"/>
<line x1="91" y1="503.50" x2="95" y2="503.50" stroke="#222" stroke-width="1"/>
<text x="0" y="0" transform="translate(52.50,443.50) scale(0.88,1)" font-size="12.8" text-anchor="start" fill="#383838" textLength="16.59" lengthAdjust="spacing" >10</text>
<text x="0" y="0" transform="translate(68.00,437.40) scale(0.88,1)" font-size="12.8" text-anchor="start" fill="#383838" textLength="16.59" lengthAdjust="spacing" >&#8722;9</text>
<text x="0" y="0" transform="translate(44.70,465.37) scale(0.88,1)" font-size="12.8" text-anchor="start" fill="#383838" textLength="16.59" lengthAdjust="spacing" >10</text>
<text x="0" y="0" transform="translate(60.20,459.27) scale(0.88,1)" font-size="12.8" text-anchor="start" fill="#383838" textLength="24.55" lengthAdjust="spacing" >&#8722;10</text>
<text x="0" y="0" transform="translate(44.70,487.24) scale(0.88,1)" font-size="12.8" text-anchor="start" fill="#383838" textLength="16.59" lengthAdjust="spacing" >10</text>
<text x="0" y="0" transform="translate(60.20,481.14) scale(0.88,1)" font-size="12.8" text-anchor="start" fill="#383838" textLength="24.55" lengthAdjust="spacing" >&#8722;11</text>
<text x="0" y="0" transform="translate(44.70,509.11) scale(0.88,1)" font-size="12.8" text-anchor="start" fill="#383838" textLength="16.59" lengthAdjust="spacing" >10</text>
<text x="0" y="0" transform="translate(60.20,503.01) scale(0.88,1)" font-size="12.8" text-anchor="start" fill="#383838" textLength="24.55" lengthAdjust="spacing" >&#8722;12</text>
<text x="0" y="0" font-size="12.8" text-anchor="middle" fill="#383838" transform="translate(34.10,465.90) rotate(-90) scale(0.88,1)" textLength="77.05" lengthAdjust="spacing">P dyn/cm^2</text>
<line x1="136.5" y1="506" x2="136.5" y2="509" stroke="#444" stroke-width="1"/>
<line x1="177.5" y1="506" x2="177.5" y2="509" stroke="#444" stroke-width="1"/>
<line x1="218.5" y1="506" x2="218.5" y2="509" stroke="#444" stroke-width="1"/>
<line x1="259.5" y1="506" x2="259.5" y2="509" stroke="#444" stroke-width="1"/>
<line x1="300.5" y1="506" x2="300.5" y2="509" stroke="#444" stroke-width="1"/>
<line x1="342.5" y1="506" x2="342.5" y2="509" stroke="#444" stroke-width="1"/>
<line x1="383.5" y1="506" x2="383.5" y2="509" stroke="#444" stroke-width="1"/>
<line x1="424.5" y1="506" x2="424.5" y2="509" stroke="#444" stroke-width="1"/>
<line x1="465.5" y1="506" x2="465.5" y2="509" stroke="#444" stroke-width="1"/>
<line x1="506.5" y1="506" x2="506.5" y2="509" stroke="#444" stroke-width="1"/>
<line x1="547.5" y1="506" x2="547.5" y2="509" stroke="#444" stroke-width="1"/>
<line x1="588.5" y1="506" x2="588.5" y2="509" stroke="#444" stroke-width="1"/>
<line x1="629.5" y1="506" x2="629.5" y2="509" stroke="#444" stroke-width="1"/>
<line x1="670.5" y1="506" x2="670.5" y2="509" stroke="#444" stroke-width="1"/>
<line x1="711.5" y1="506" x2="711.5" y2="509" stroke="#444" stroke-width="1"/>
<line x1="752.5" y1="506" x2="752.5" y2="509" stroke="#444" stroke-width="1"/>
<line x1="793.5" y1="506" x2="793.5" y2="509" stroke="#444" stroke-width="1"/>
<line x1="834.5" y1="506" x2="834.5" y2="509" stroke="#444" stroke-width="1"/>
<line x1="876.5" y1="506" x2="876.5" y2="509" stroke="#444" stroke-width="1"/>
<line x1="917.5" y1="506" x2="917.5" y2="509" stroke="#444" stroke-width="1"/>
<line x1="958.5" y1="506" x2="958.5" y2="509" stroke="#444" stroke-width="1"/>
<line x1="999.5" y1="506" x2="999.5" y2="509" stroke="#444" stroke-width="1"/>
<line x1="1040.5" y1="506" x2="1040.5" y2="509" stroke="#444" stroke-width="1"/>
<line x1="1090.8" y1="426.2" x2="1103.3" y2="431.7" stroke="#0000ff" stroke-width="1.6" shape-rendering="geometricPrecision"/>
<text x="0" y="0" transform="translate(1107.50,433.80) scale(0.88,1)" font-size="12.8" text-anchor="start" fill="#383838" textLength="60.00" lengthAdjust="spacing" >CHEMS-P</text>
<line x1="1090.8" y1="442.9" x2="1103.3" y2="448.4" stroke="#ff0000" stroke-width="1.6" shape-rendering="geometricPrecision"/>
<text x="0" y="0" transform="translate(1107.50,450.80) scale(0.88,1)" font-size="12.8" text-anchor="start" fill="#383838" textLength="58.75" lengthAdjust="spacing" >LEMMS-P</text>
<line x1="1090.8" y1="459.6" x2="1103.3" y2="465.1" stroke="#00ff00" stroke-width="1.6" shape-rendering="geometricPrecision"/>
<text x="0" y="0" transform="translate(1107.50,467.80) scale(0.88,1)" font-size="12.8" text-anchor="start" fill="#383838" textLength="61.93" lengthAdjust="spacing" >CHEMS-O</text>
<rect x="95.00" y="513.00" width="986.00" height="178.00" fill="#000" />
<rect x="95.00" y="664.00" width="5.00" height="12.00" fill="#7adf35" />
<rect x="95.00" y="676.00" width="5.00" height="5.00" fill="#dcd201" />
<rect x="95.00" y="681.00" width="5.00" height="5.00" fill="#fb8100" />
<rect x="95.00" y="686.00" width="5.00" height="5.00" fill="#f2470d" />
<rect x="100.00" y="676.00" width="6.00" height="5.00" fill="#d0de05" />
<rect x="100.00" y="681.00" width="6.00" height="5.00" fill="#fc7d00" />
<rect x="100.00" y="686.00" width="6.00" height="5.00" fill="#f2480d" />
<rect x="106.00" y="664.00" width="2.00" height="12.00" fill="#6fdc3c" />
<rect x="106.00" y="676.00" width="2.00" height="5.00" fill="#d4da04" />
<rect x="106.00" y="681.00" width="2.00" height="5.00" fill="#f88d00" />
<rect x="106.00" y="686.00" width="2.00" height="5.00" fill="#f1440e" />
<rect x="108.00" y="664.00" width="6.00" height="12.00" fill="#7fe031" />
<rect x="108.00" y="676.00" width="6.00" height="5.00" fill="#d8d603" />
<rect x="108.00" y="681.00" width="6.00" height="5.00" fill="#f88c00" />
<rect x="108.00" y="686.00" width="6.00" height="5.00" fill="#f75608" />
<rect x="114.00" y="676.00" width="2.00" height="5.00" fill="#cae406" />
<rect x="114.00" y="681.00" width="2.00" height="5.00" fill="#fa8500" />
<rect x="114.00" y="686.00" width="2.00" height="5.00" fill="#f0420f" />
<rect x="116.00" y="664.00" width="1.50" height="12.00" fill="#86e22d" />
<rect x="116.00" y="676.00" width="1.50" height="5.00" fill="#d5d903" />
<rect x="116.00" y="681.00" width="1.50" height="5.00" fill="#fa8500" />
<rect x="116.00" y="686.00" width="1.50" height="5.00" fill="#f0410f" />
<rect x="117.50" y="664.00" width="1.00" height="12.00" fill="#93e525" />
<rect x="117.50" y="676.00" width="1.00" height="5.00" fill="#cae406" />
<rect x="117.50" y="681.00" width="1.00" height="5.00" fill="#f88c00" />
<rect x="117.50" y="686.00" width="1.00" height="5.00" fill="#ee3f13" />
<rect x="120.00" y="664.00" width="2.00" height="12.00" fill="#79df35" />
<rect x="120.00" y="676.00" width="2.00" height="5.00" fill="#d3db04" />
<rect x="120.00" y="681.00" width="2.00" height="5.00" fill="#fa8600" />
<rect x="120.00" y="686.00" width="2.00" height="5.00" fill="#f2460d" />
<rect x="122.00" y="664.00" width="2.00" height="12.00" fill="#8de429" />
<rect x="122.00" y="676.00" width="2.00" height="5.00" fill="#d1dd05" />
<rect x="122.00" y="681.00" width="2.00" height="5.00" fill="#fb7e00" />
<rect x="122.00" y="686.00" width="2.00" height="5.00" fill="#f5500a" />
<rect x="125.50" y="676.00" width="1.00" height="5.00" fill="#d4da04" />
<rect x="125.50" y="681.00" width="1.00" height="5.00" fill="#fc7d00" />
<rect x="125.50" y="686.00" width="1.00" height="5.00" fill="#ed3d15" />
<rect x="130.50" y="647.00" width="5.00" height="9.00" fill="#1cae79" />
<rect x="130.50" y="656.00" width="5.00" height="8.00" fill="#55d14b" />
<rect x="130.50" y="664.00" width="5.00" height="12.00" fill="#70dc3b" />
<rect x="130.50" y="676.00" width="5.00" height="5.00" fill="#cbe306" />
<rect x="130.50" y="681.00" width="5.00" height="5.00" fill="#f98a00" />
<rect x="130.50" y="686.00" width="5.00" height="5.00" fill="#f0410f" />
<rect x="135.50" y="676.00" width="5.00" height="5.00" fill="#cde106" />
<rect x="135.50" y="681.00" width="5.00" height="5.00" fill="#fc7c00" />
<rect x="135.50" y="686.00" width="5.00" height="5.00" fill="#f44c0b" />
<rect x="140.50" y="676.00" width="3.00" height="5.00" fill="#ddd101" />
<rect x="140.50" y="681.00" width="3.00" height="5.00" fill="#fd7900" />
<rect x="140.50" y="686.00" width="3.00" height="5.00" fill="#ef4011" />
<rect x="143.50" y="664.00" width="5.00" height="12.00" fill="#96e623" />
<rect x="143.50" y="676.00" width="5.00" height="5.00" fill="#c9e507" />
<rect x="143.50" y="681.00" width="5.00" height="5.00" fill="#fa8200" />
<rect x="143.50" y="686.00" width="5.00" height="5.00" fill="#ef3f12" />
<rect x="149.50" y="664.00" width="1.50" height="12.00" fill="#60d644" />
<rect x="149.50" y="676.00" width="1.50" height="5.00" fill="#d8d603" />
<rect x="149.50" y="681.00" width="1.50" height="5.00" fill="#f88e00" />
<rect x="149.50" y="686.00" width="1.50" height="5.00" fill="#f34a0c" />
<rect x="151.00" y="664.00" width="4.00" height="12.00" fill="#76de37" />
<rect x="151.00" y="676.00" width="4.00" height="5.00" fill="#ddd101" />
<rect x="151.00" y="681.00" width="4.00" height="5.00" fill="#fc7a00" />
<rect x="151.00" y="686.00" width="4.00" height="5.00" fill="#f65309" />
<rect x="155.00" y="664.00" width="1.00" height="12.00" fill="#7fe031" />
<rect x="155.00" y="676.00" width="1.00" height="5.00" fill="#d8d603" />
<rect x="155.00" y="681.00" width="1.00" height="5.00" fill="#fa8600" />
<rect x="155.00" y="686.00" width="1.00" height="5.00" fill="#f75508" />
<rect x="156.00" y="676.00" width="3.00" height="5.00" fill="#d9d502" />
<rect x="156.00" y="681.00" width="3.00" height="5.00" fill="#fc7a00" />
<rect x="156.00" y="686.00" width="3.00" height="5.00" fill="#f75708" />
<rect x="159.00" y="664.00" width="1.00" height="12.00" fill="#7de033" />
<rect x="159.00" y="676.00" width="1.00" height="5.00" fill="#d9d502" />
<rect x="159.00" y="681.00" width="1.00" height="5.00" fill="#f88c00" />
<rect x="159.00" y="686.00" width="1.00" height="5.00" fill="#f34b0c" />
<rect x="160.00" y="676.00" width="3.00" height="5.00" fill="#d4da04" />
<rect x="160.00" y="681.00" width="3.00" height="5.00" fill="#fc7a00" />
<rect x="160.00" y="686.00" width="3.00" height="5.00" fill="#f54f0a" />
<rect x="163.00" y="664.00" width="1.00" height="12.00" fill="#7ee032" />
<rect x="163.00" y="676.00" width="1.00" height="5.00" fill="#d3db04" />
<rect x="163.00" y="681.00" width="1.00" height="5.00" fill="#fb7f00" />
<rect x="163.00" y="686.00" width="1.00" height="5.00" fill="#f5500a" />
<rect x="166.50" y="676.00" width="1.50" height="5.00" fill="#c9e507" />
<rect x="166.50" y="681.00" width="1.50" height="5.00" fill="#fa8300" />
<rect x="166.50" y="686.00" width="1.50" height="5.00" fill="#f34b0c" />
<rect x="168.00" y="664.00" width="2.00" height="12.00" fill="#6ddc3c" />
<rect x="168.00" y="676.00" width="2.00" height="5.00" fill="#d2dc04" />
<rect x="168.00" y="681.00" width="2.00" height="5.00" fill="#f88e00" />
<rect x="168.00" y="686.00" width="2.00" height="5.00" fill="#f75508" />
<rect x="170.00" y="676.00" width="1.50" height="5.00" fill="#d0de05" />
<rect x="170.00" y="681.00" width="1.50" height="5.00" fill="#fc7a00" />
<rect x="170.00" y="686.00" width="1.50" height="5.00" fill="#f75608" />
<rect x="171.50" y="664.00" width="1.50" height="12.00" fill="#97e622" />
<rect x="171.50" y="676.00" width="1.50" height="5.00" fill="#d6d803" />
<rect x="171.50" y="681.00" width="1.50" height="5.00" fill="#fc7c00" />
<rect x="171.50" y="686.00" width="1.50" height="5.00" fill="#ee3e14" />
<rect x="174.00" y="676.00" width="3.00" height="5.00" fill="#cfdf05" />
<rect x="174.00" y="681.00" width="3.00" height="5.00" fill="#fa8500" />
<rect x="174.00" y="686.00" width="3.00" height="5.00" fill="#f44d0b" />
<rect x="179.00" y="676.00" width="3.00" height="5.00" fill="#cbe306" />
<rect x="179.00" y="681.00" width="3.00" height="5.00" fill="#fc7b00" />
<rect x="179.00" y="686.00" width="3.00" height="5.00" fill="#f65209" />
<rect x="182.00" y="664.00" width="1.50" height="12.00" fill="#70dc3b" />
<rect x="182.00" y="676.00" width="1.50" height="5.00" fill="#ddd101" />
<rect x="182.00" y="681.00" width="1.50" height="5.00" fill="#fc7a00" />
<rect x="182.00" y="686.00" width="1.50" height="5.00" fill="#f65309" />
<rect x="184.50" y="664.00" width="4.00" height="12.00" fill="#7bdf34" />
<rect x="184.50" y="676.00" width="4.00" height="5.00" fill="#dad402" />
<rect x="184.50" y="681.00" width="4.00" height="5.00" fill="#fa8500" />
<rect x="184.50" y="686.00" width="4.00" height="5.00" fill="#f65409" />
<rect x="188.50" y="676.00" width="5.00" height="5.00" fill="#d6d803" />
<rect x="188.50" y="681.00" width="5.00" height="5.00" fill="#fc7b00" />
<rect x="188.50" y="686.00" width="5.00" height="5.00" fill="#ec3b19" />
<rect x="195.00" y="676.00" width="1.00" height="5.00" fill="#cfdf05" />
<rect x="195.00" y="681.00" width="1.00" height="5.00" fill="#fa8300" />
<rect x="195.00" y="686.00" width="1.00" height="5.00" fill="#ed3d17" />
<rect x="196.00" y="664.00" width="1.50" height="12.00" fill="#7adf34" />
<rect x="196.00" y="676.00" width="1.50" height="5.00" fill="#ded001" />
<rect x="196.00" y="681.00" width="1.50" height="5.00" fill="#f88e00" />
<rect x="196.00" y="686.00" width="1.50" height="5.00" fill="#f44e0b" />
<rect x="197.50" y="664.00" width="2.00" height="12.00" fill="#91e526" />
<rect x="197.50" y="676.00" width="2.00" height="5.00" fill="#cee005" />
<rect x="197.50" y="681.00" width="2.00" height="5.00" fill="#fb7f00" />
<rect x="197.50" y="686.00" width="2.00" height="5.00" fill="#ed3e15" />
<rect x="199.50" y="647.00" width="2.00" height="9.00" fill="#1aac7b" />
<rect x="199.50" y="656.00" width="2.00" height="8.00" fill="#43c955" />
<rect x="199.50" y="664.00" width="2.00" height="12.00" fill="#6ddc3d" />
<rect x="199.50" y="676.00" width="2.00" height="5.00" fill="#dbd302" />
<rect x="199.50" y="681.00" width="2.00" height="5.00" fill="#fb7e00" />
<rect x="199.50" y="686.00" width="2.00" height="5.00" fill="#f1440e" />
<rect x="204.00" y="676.00" width="1.00" height="5.00" fill="#cae407" />
<rect x="204.00" y="681.00" width="1.00" height="5.00" fill="#fc7d00" />
<rect x="204.00" y="686.00" width="1.00" height="5.00" fill="#f75508" />
<rect x="205.00" y="664.00" width="3.00" height="12.00" fill="#92e526" />
<rect x="205.00" y="676.00" width="3.00" height="5.00" fill="#d7d703" />
<rect x="205.00" y="681.00" width="3.00" height="5.00" fill="#fc7a00" />
<rect x="205.00" y="686.00" width="3.00" height="5.00" fill="#f44c0b" />
<rect x="208.00" y="676.00" width="1.00" height="5.00" fill="#d3db04" />
<rect x="208.00" y="681.00" width="1.00" height="5.00" fill="#fc7900" />
<rect x="208.00" y="686.00" width="1.00" height="5.00" fill="#f75508" />
<rect x="209.00" y="664.00" width="3.00" height="12.00" fill="#70dd3b" />
<rect x="209.00" y="676.00" width="3.00" height="5.00" fill="#cde106" />
<rect x="209.00" y="681.00" width="3.00" height="5.00" fill="#fd7600" />
<rect x="209.00" y="686.00" width="3.00" height="5.00" fill="#f04110" />
<rect x="212.00" y="676.00" width="1.00" height="5.00" fill="#dad402" />
<rect x="212.00" y="681.00" width="1.00" height="5.00" fill="#fa8600" />
<rect x="212.00" y="686.00" width="1.00" height="5.00" fill="#ef4011" />
<rect x="219.00" y="676.00" width="1.00" height="5.00" fill="#dcd202" />
<rect x="219.00" y="681.00" width="1.00" height="5.00" fill="#f98a00" />
<rect x="219.00" y="686.00" width="1.00" height="5.00" fill="#f65309" />
<rect x="220.00" y="676.00" width="3.00" height="5.00" fill="#cde106" />
<rect x="220.00" y="681.00" width="3.00" height="5.00" fill="#fb7f00" />
<rect x="220.00" y="686.00" width="3.00" height="5.00" fill="#f44e0b" />
<rect x="223.00" y="676.00" width="1.00" height="5.00" fill="#d8d603" />
<rect x="223.00" y="681.00" width="1.00" height="5.00" fill="#fa8200" />
<rect x="223.00" y="686.00" width="1.00" height="5.00" fill="#f65409" />
<rect x="224.00" y="664.00" width="5.00" height="12.00" fill="#8ae32a" />
<rect x="224.00" y="676.00" width="5.00" height="5.00" fill="#ded001" />
<rect x="224.00" y="681.00" width="5.00" height="5.00" fill="#fa8700" />
<rect x="224.00" y="686.00" width="5.00" height="5.00" fill="#ef4011" />
<rect x="230.50" y="676.00" width="1.00" height="5.00" fill="#cbe306" />
<rect x="230.50" y="681.00" width="1.00" height="5.00" fill="#f88d00" />
<rect x="230.50" y="686.00" width="1.00" height="5.00" fill="#f75708" />
<rect x="231.50" y="676.00" width="1.00" height="5.00" fill="#d2dc04" />
<rect x="231.50" y="681.00" width="1.00" height="5.00" fill="#fb7f00" />
<rect x="231.50" y="686.00" width="1.00" height="5.00" fill="#f1430e" />
<rect x="233.50" y="676.00" width="5.00" height="5.00" fill="#d2dc04" />
<rect x="233.50" y="681.00" width="5.00" height="5.00" fill="#f88e00" />
<rect x="233.50" y="686.00" width="5.00" height="5.00" fill="#f2460d" />
<rect x="238.50" y="676.00" width="1.00" height="5.00" fill="#ddd101" />
<rect x="238.50" y="681.00" width="1.00" height="5.00" fill="#fd7800" />
<rect x="238.50" y="686.00" width="1.00" height="5.00" fill="#f0410f" />
<rect x="239.50" y="676.00" width="3.00" height="5.00" fill="#d0de05" />
<rect x="239.50" y="681.00" width="3.00" height="5.00" fill="#fc7a00" />
<rect x="239.50" y="686.00" width="3.00" height="5.00" fill="#ef4010" />
<rect x="242.50" y="676.00" width="4.00" height="5.00" fill="#cde106" />
<rect x="242.50" y="681.00" width="4.00" height="5.00" fill="#f98b00" />
<rect x="242.50" y="686.00" width="4.00" height="5.00" fill="#f65409" />
<rect x="246.50" y="676.00" width="4.00" height="5.00" fill="#ded001" />
<rect x="246.50" y="681.00" width="4.00" height="5.00" fill="#f98b00" />
<rect x="246.50" y="686.00" width="4.00" height="5.00" fill="#f65409" />
<rect x="250.50" y="647.00" width="1.50" height="9.00" fill="#22b66f" />
<rect x="250.50" y="656.00" width="1.50" height="8.00" fill="#36c45c" />
<rect x="250.50" y="664.00" width="1.50" height="12.00" fill="#73dd39" />
<rect x="250.50" y="676.00" width="1.50" height="5.00" fill="#d4da04" />
<rect x="250.50" y="681.00" width="1.50" height="5.00" fill="#f88e00" />
<rect x="250.50" y="686.00" width="1.50" height="5.00" fill="#f5510a" />
<rect x="252.00" y="664.00" width="2.00" height="12.00" fill="#63d742" />
<rect x="252.00" y="676.00" width="2.00" height="5.00" fill="#cce206" />
<rect x="252.00" y="681.00" width="2.00" height="5.00" fill="#fa8500" />
<rect x="252.00" y="686.00" width="2.00" height="5.00" fill="#f65309" />
<rect x="254.00" y="647.00" width="4.00" height="9.00" fill="#20b471" />
<rect x="254.00" y="656.00" width="4.00" height="8.00" fill="#27bc66" />
<rect x="254.00" y="664.00" width="4.00" height="12.00" fill="#77de37" />
<rect x="254.00" y="676.00" width="4.00" height="5.00" fill="#d2dc04" />
<rect x="254.00" y="681.00" width="4.00" height="5.00" fill="#f98800" />
<rect x="254.00" y="686.00" width="4.00" height="5.00" fill="#f44c0b" />
<rect x="258.00" y="647.00" width="2.00" height="9.00" fill="#17a980" />
<rect x="258.00" y="656.00" width="2.00" height="8.00" fill="#25ba69" />
<rect x="258.00" y="664.00" width="2.00" height="12.00" fill="#97e622" />
<rect x="258.00" y="676.00" width="2.00" height="5.00" fill="#d5d903" />
<rect x="258.00" y="681.00" width="2.00" height="5.00" fill="#f88e00" />
<rect x="258.00" y="686.00" width="2.00" height="5.00" fill="#f2460d" />
<rect x="260.00" y="664.00" width="1.00" height="12.00" fill="#78de36" />
<rect x="260.00" y="676.00" width="1.00" height="5.00" fill="#cfdf05" />
<rect x="260.00" y="681.00" width="1.00" height="5.00" fill="#fc7b00" />
<rect x="260.00" y="686.00" width="1.00" height="5.00" fill="#f0410f" />
<rect x="261.00" y="664.00" width="1.50" height="12.00" fill="#8ae32a" />
<rect x="261.00" y="676.00" width="1.50" height="5.00" fill="#dfcf01" />
<rect x="261.00" y="681.00" width="1.50" height="5.00" fill="#fa8500" />
<rect x="261.00" y="686.00" width="1.50" height="5.00" fill="#f0410f" />
<rect x="262.50" y="664.00" width="1.00" height="12.00" fill="#71dd3a" />
<rect x="262.50" y="676.00" width="1.00" height="5.00" fill="#d1dd05" />
<rect x="262.50" y="681.00" width="1.00" height="5.00" fill="#fb7f00" />
<rect x="262.50" y="686.00" width="1.00" height="5.00" fill="#f65409" />
<rect x="263.50" y="664.00" width="2.00" height="12.00" fill="#8ce429" />
<rect x="263.50" y="676.00" width="2.00" height="5.00" fill="#ddd101" />
<rect x="263.50" y="681.00" width="2.00" height="5.00" fill="#fb8000" />
<rect x="263.50" y="686.00" width="2.00" height="5.00" fill="#f34b0c" />
<rect x="265.50" y="664.00" width="4.00" height="12.00" fill="#61d743" />
<rect x="265.50" y="676.00" width="4.00" height="5.00" fill="#cee005" />
<rect x="265.50" y="681.00" width="4.00" height="5.00" fill="#f98a00" />
<rect x="265.50" y="686.00" width="4.00" height="5.00" fill="#f1430e" />
<rect x="269.50" y="664.00" width="4.00" height="12.00" fill="#6edc3c" />
<rect x="269.50" y="676.00" width="4.00" height="5.00" fill="#dbd302" />
<rect x="269.50" y="681.00" width="4.00" height="5.00" fill="#fc7a00" />
<rect x="269.50" y="686.00" width="4.00" height="5.00" fill="#ef3f12" />
<rect x="273.50" y="664.00" width="1.00" height="12.00" fill="#90e427" />
<rect x="273.50" y="676.00" width="1.00" height="5.00" fill="#d2dc04" />
<rect x="273.50" y="681.00" width="1.00" height="5.00" fill="#f98a00" />
<rect x="273.50" y="686.00" width="1.00" height="5.00" fill="#f34a0c" />
<rect x="275.50" y="647.00" width="3.00" height="9.00" fill="#1bae7a" />
<rect x="275.50" y="656.00" width="3.00" height="8.00" fill="#36c45c" />
<rect x="275.50" y="664.00" width="3.00" height="12.00" fill="#86e22d" />
<rect x="275.50" y="676.00" width="3.00" height="5.00" fill="#cde106" />
<rect x="275.50" y="681.00" width="3.00" height="5.00" fill="#fb8000" />
<rect x="275.50" y="686.00" width="3.00" height="5.00" fill="#f75708" />
<rect x="280.50" y="647.00" width="2.00" height="9.00" fill="#1fb373" />
<rect x="280.50" y="656.00" width="2.00" height="8.00" fill="#61d644" />
<rect x="280.50" y="664.00" width="2.00" height="12.00" fill="#64d842" />
<rect x="280.50" y="676.00" width="2.00" height="5.00" fill="#d2dc04" />
<rect x="280.50" y="681.00" width="2.00" height="5.00" fill="#fd7600" />
<rect x="280.50" y="686.00" width="2.00" height="5.00" fill="#f65209" />
<rect x="282.50" y="664.00" width="3.00" height="12.00" fill="#8ee428" />
<rect x="282.50" y="676.00" width="3.00" height="5.00" fill="#cce206" />
<rect x="282.50" y="681.00" width="3.00" height="5.00" fill="#fd7600" />
<rect x="282.50" y="686.00" width="3.00" height="5.00" fill="#ed3d15" />
<rect x="286.50" y="647.00" width="5.00" height="9.00" fill="#23b86d" />
<rect x="286.50" y="656.00" width="5.00" height="8.00" fill="#27bc66" />
<rect x="286.50" y="664.00" width="5.00" height="12.00" fill="#70dd3b" />
<rect x="286.50" y="676.00" width="5.00" height="5.00" fill="#d9d502" />
<rect x="286.50" y="681.00" width="5.00" height="5.00" fill="#f88d00" />
<rect x="286.50" y="686.00" width="5.00" height="5.00" fill="#f65309" />
<rect x="291.50" y="647.00" width="5.00" height="9.00" fill="#20b471" />
<rect x="291.50" y="656.00" width="5.00" height="8.00" fill="#27bd65" />
<rect x="291.50" y="664.00" width="5.00" height="12.00" fill="#94e524" />
<rect x="291.50" y="676.00" width="5.00" height="5.00" fill="#d4da04" />
<rect x="291.50" y="681.00" width="5.00" height="5.00" fill="#fd7800" />
<rect x="291.50" y="686.00" width="5.00" height="5.00" fill="#ed3d16" />
<rect x="296.50" y="664.00" width="5.00" height="12.00" fill="#79df35" />
<rect x="296.50" y="676.00" width="5.00" height="5.00" fill="#dad402" />
<rect x="296.50" y="681.00" width="5.00" height="5.00" fill="#fa8300" />
<rect x="296.50" y="686.00" width="5.00" height="5.00" fill="#f34a0c" />
<rect x="301.50" y="664.00" width="2.00" height="12.00" fill="#8be32a" />
<rect x="301.50" y="676.00" width="2.00" height="5.00" fill="#d9d502" />
<rect x="301.50" y="681.00" width="2.00" height="5.00" fill="#f98b00" />
<rect x="301.50" y="686.00" width="2.00" height="5.00" fill="#f0420f" />
<rect x="303.50" y="664.00" width="1.50" height="12.00" fill="#89e32b" />
<rect x="303.50" y="676.00" width="1.50" height="5.00" fill="#d1dd04" />
<rect x="303.50" y="681.00" width="1.50" height="5.00" fill="#fb8000" />
<rect x="303.50" y="686.00" width="1.50" height="5.00" fill="#f44c0b" />
<rect x="305.00" y="676.00" width="6.00" height="5.00" fill="#d2dc04" />
<rect x="305.00" y="681.00" width="6.00" height="5.00" fill="#fb7f00" />
<rect x="305.00" y="686.00" width="6.00" height="5.00" fill="#f75708" />
<rect x="311.00" y="664.00" width="6.00" height="12.00" fill="#73dd39" />
<rect x="311.00" y="676.00" width="6.00" height="5.00" fill="#ddd101" />
<rect x="311.00" y="681.00" width="6.00" height="5.00" fill="#f98800" />
<rect x="311.00" y="686.00" width="6.00" height="5.00" fill="#f44c0b" />
<rect x="317.00" y="647.00" width="1.00" height="9.00" fill="#15a684" />
<rect x="317.00" y="656.00" width="1.00" height="8.00" fill="#4dce4f" />
<rect x="317.00" y="664.00" width="1.00" height="12.00" fill="#70dd3a" />
<rect x="317.00" y="676.00" width="1.00" height="5.00" fill="#cbe306" />
<rect x="317.00" y="681.00" width="1.00" height="5.00" fill="#f88c00" />
<rect x="317.00" y="686.00" width="1.00" height="5.00" fill="#f44d0b" />
<rect x="318.00" y="664.00" width="2.00" height="12.00" fill="#5dd546" />
<rect x="318.00" y="676.00" width="2.00" height="5.00" fill="#d1dd05" />
<rect x="318.00" y="681.00" width="2.00" height="5.00" fill="#fb7e00" />
<rect x="318.00" y="686.00" width="2.00" height="5.00" fill="#f75608" />
<rect x="320.00" y="664.00" width="2.00" height="12.00" fill="#8ee428" />
<rect x="320.00" y="676.00" width="2.00" height="5.00" fill="#d1dd04" />
<rect x="320.00" y="681.00" width="2.00" height="5.00" fill="#f88e00" />
<rect x="320.00" y="686.00" width="2.00" height="5.00" fill="#ef4011" />
<rect x="322.00" y="676.00" width="6.00" height="5.00" fill="#d4da04" />
<rect x="322.00" y="681.00" width="6.00" height="5.00" fill="#f88b00" />
<rect x="322.00" y="686.00" width="6.00" height="5.00" fill="#f34a0c" />
<rect x="328.00" y="664.00" width="1.00" height="12.00" fill="#99e721" />
<rect x="328.00" y="676.00" width="1.00" height="5.00" fill="#d2dc04" />
<rect x="328.00" y="681.00" width="1.00" height="5.00" fill="#fa8600" />
<rect x="328.00" y="686.00" width="1.00" height="5.00" fill="#f1440e" />
<rect x="329.00" y="664.00" width="1.00" height="12.00" fill="#73dd39" />
<rect x="329.00" y="676.00" width="1.00" height="5.00" fill="#ddd101" />
<rect x="329.00" y="681.00" width="1.00" height="5.00" fill="#f98b00" />
<rect x="329.00" y="686.00" width="1.00" height="5.00" fill="#f1440e" />
<rect x="330.00" y="647.00" width="1.50" height="9.00" fill="#1bae7a" />
<rect x="330.00" y="656.00" width="1.50" height="8.00" fill="#38c55b" />
<rect x="330.00" y="664.00" width="1.50" height="12.00" fill="#76de37" />
<rect x="330.00" y="676.00" width="1.50" height="5.00" fill="#cee005" />
<rect x="330.00" y="681.00" width="1.50" height="5.00" fill="#fb8000" />
<rect x="330.00" y="686.00" width="1.50" height="5.00" fill="#f5500a" />
<rect x="332.50" y="664.00" width="2.00" height="12.00" fill="#7adf34" />
<rect x="332.50" y="676.00" width="2.00" height="5.00" fill="#dcd201" />
<rect x="332.50" y="681.00" width="2.00" height="5.00" fill="#fb8000" />
<rect x="332.50" y="686.00" width="2.00" height="5.00" fill="#ed3d16" />
<rect x="334.50" y="647.00" width="1.50" height="9.00" fill="#24b96b" />
<rect x="334.50" y="656.00" width="1.50" height="8.00" fill="#2dc061" />
<rect x="334.50" y="664.00" width="1.50" height="12.00" fill="#5dd546" />
<rect x="334.50" y="676.00" width="1.50" height="5.00" fill="#d0de05" />
<rect x="334.50" y="681.00" width="1.50" height="5.00" fill="#f88d00" />
<rect x="334.50" y="686.00" width="1.50" height="5.00" fill="#f34b0c" />
<rect x="336.00" y="647.00" width="3.00" height="9.00" fill="#13a486" />
<rect x="336.00" y="656.00" width="3.00" height="8.00" fill="#55d14a" />
<rect x="336.00" y="664.00" width="3.00" height="12.00" fill="#67d940" />
<rect x="336.00" y="676.00" width="3.00" height="5.00" fill="#d9d502" />
<rect x="336.00" y="681.00" width="3.00" height="5.00" fill="#fa8300" />
<rect x="336.00" y="686.00" width="3.00" height="5.00" fill="#ec3c18" />
<rect x="339.00" y="664.00" width="6.00" height="12.00" fill="#79df35" />
<rect x="339.00" y="676.00" width="6.00" height="5.00" fill="#cbe306" />
<rect x="339.00" y="681.00" width="6.00" height="5.00" fill="#fa8500" />
<rect x="339.00" y="686.00" width="6.00" height="5.00" fill="#ee3f13" />
<rect x="345.00" y="647.00" width="3.00" height="9.00" fill="#1db076" />
<rect x="345.00" y="656.00" width="3.00" height="8.00" fill="#3cc659" />
<rect x="345.00" y="664.00" width="3.00" height="12.00" fill="#91e526" />
<rect x="345.00" y="676.00" width="3.00" height="5.00" fill="#cfdf05" />
<rect x="345.00" y="681.00" width="3.00" height="5.00" fill="#fd7800" />
<rect x="345.00" y="686.00" width="3.00" height="5.00" fill="#f65209" />
<rect x="348.00" y="664.00" width="4.00" height="12.00" fill="#87e22c" />
<rect x="348.00" y="676.00" width="4.00" height="5.00" fill="#dcd202" />
<rect x="348.00" y="681.00" width="4.00" height="5.00" fill="#f88c00" />
<rect x="348.00" y="686.00" width="4.00" height="5.00" fill="#ec3c18" />
<rect x="352.00" y="664.00" width="1.00" height="12.00" fill="#8fe428" />
<rect x="352.00" y="676.00" width="1.00" height="5.00" fill="#dbd302" />
<rect x="352.00" y="681.00" width="1.00" height="5.00" fill="#f98a00" />
<rect x="352.00" y="686.00" width="1.00" height="5.00" fill="#f34b0c" />
<rect x="353.00" y="664.00" width="5.00" height="12.00" fill="#6cdb3d" />
<rect x="353.00" y="676.00" width="5.00" height="5.00" fill="#c1ed09" />
<rect x="353.00" y="681.00" width="5.00" height="5.00" fill="#c3eb08" />
<rect x="353.00" y="686.00" width="5.00" height="5.00" fill="#eab500" />
<rect x="358.00" y="664.00" width="2.00" height="12.00" fill="#8be32a" />
<rect x="358.00" y="676.00" width="2.00" height="5.00" fill="#c7e707" />
<rect x="358.00" y="681.00" width="2.00" height="5.00" fill="#d5d904" />
<rect x="358.00" y="686.00" width="2.00" height="5.00" fill="#ecb200" />
<rect x="360.00" y="664.00" width="1.50" height="12.00" fill="#63d742" />
<rect x="360.00" y="676.00" width="1.50" height="5.00" fill="#bcef0b" />
<rect x="360.00" y="681.00" width="1.50" height="5.00" fill="#c7e707" />
<rect x="360.00" y="686.00" width="1.50" height="5.00" fill="#e4c600" />
<rect x="361.50" y="664.00" width="1.00" height="12.00" fill="#83e12f" />
<rect x="361.50" y="676.00" width="1.00" height="5.00" fill="#b2ed12" />
<rect x="361.50" y="681.00" width="1.00" height="5.00" fill="#d6d803" />
<rect x="361.50" y="686.00" width="1.00" height="5.00" fill="#ebb400" />
<rect x="362.50" y="664.00" width="3.00" height="12.00" fill="#74dd38" />
<rect x="362.50" y="676.00" width="3.00" height="5.00" fill="#b5ee0f" />
<rect x="362.50" y="681.00" width="3.00" height="5.00" fill="#d4da04" />
<rect x="362.50" y="686.00" width="3.00" height="5.00" fill="#eab700" />
<rect x="365.50" y="664.00" width="4.00" height="12.00" fill="#58d348" />
<rect x="365.50" y="676.00" width="4.00" height="5.00" fill="#cde106" />
<rect x="365.50" y="681.00" width="4.00" height="5.00" fill="#d2dc04" />
<rect x="365.50" y="686.00" width="4.00" height="5.00" fill="#e8bc00" />
<rect x="369.50" y="664.00" width="4.00" height="12.00" fill="#75de38" />
<rect x="369.50" y="676.00" width="4.00" height="5.00" fill="#c9e507" />
<rect x="369.50" y="681.00" width="4.00" height="5.00" fill="#cbe306" />
<rect x="369.50" y="686.00" width="4.00" height="5.00" fill="#e1cd00" />
<rect x="373.50" y="664.00" width="3.00" height="12.00" fill="#76de37" />
<rect x="373.50" y="676.00" width="3.00" height="5.00" fill="#bfef0a" />
<rect x="373.50" y="681.00" width="3.00" height="5.00" fill="#d2dc04" />
<rect x="373.50" y="686.00" width="3.00" height="5.00" fill="#e6c200" />
<rect x="376.50" y="664.00" width="5.00" height="12.00" fill="#80e031" />
<rect x="376.50" y="676.00" width="5.00" height="5.00" fill="#cbe306" />
<rect x="376.50" y="681.00" width="5.00" height="5.00" fill="#cce206" />
<rect x="376.50" y="686.00" width="5.00" height="5.00" fill="#e3c700" />
<rect x="381.50" y="664.00" width="3.00" height="12.00" fill="#5ed545" />
<rect x="381.50" y="676.00" width="3.00" height="5.00" fill="#c3eb08" />
<rect x="381.50" y="681.00" width="3.00" height="5.00" fill="#c0ee09" />
<rect x="381.50" y="686.00" width="3.00" height="5.00" fill="#e4c700" />
<rect x="384.50" y="676.00" width="6.00" height="5.00" fill="#c5e908" />
<rect x="384.50" y="681.00" width="6.00" height="5.00" fill="#d3db04" />
<rect x="384.50" y="686.00" width="6.00" height="5.00" fill="#e1cd00" />
<rect x="390.50" y="676.00" width="4.00" height="5.00" fill="#aceb15" />
<rect x="390.50" y="681.00" width="4.00" height="5.00" fill="#d2dc04" />
<rect x="390.50" y="686.00" width="4.00" height="5.00" fill="#e2cb00" />
<rect x="403.50" y="676.00" width="1.00" height="5.00" fill="#bfef0a" />
<rect x="403.50" y="681.00" width="1.00" height="5.00" fill="#c6e808" />
<rect x="403.50" y="686.00" width="1.00" height="5.00" fill="#e8bb00" />
<rect x="404.50" y="676.00" width="2.00" height="5.00" fill="#b3ed11" />
<rect x="404.50" y="681.00" width="2.00" height="5.00" fill="#cfdf05" />
<rect x="404.50" y="686.00" width="2.00" height="5.00" fill="#e3c800" />
<rect x="411.50" y="676.00" width="4.00" height="5.00" fill="#c7e708" />
<rect x="411.50" y="681.00" width="4.00" height="5.00" fill="#d0de05" />
<rect x="411.50" y="686.00" width="4.00" height="5.00" fill="#e9ba00" />
<rect x="415.50" y="676.00" width="1.50" height="5.00" fill="#c4ea08" />
<rect x="415.50" y="681.00" width="1.50" height="5.00" fill="#cce206" />
<rect x="415.50" y="686.00" width="1.50" height="5.00" fill="#eab600" />
<rect x="421.00" y="676.00" width="3.00" height="5.00" fill="#cce206" />
<rect x="421.00" y="681.00" width="3.00" height="5.00" fill="#c7e707" />
<rect x="421.00" y="686.00" width="3.00" height="5.00" fill="#e2ca00" />
<rect x="425.50" y="676.00" width="1.00" height="5.00" fill="#b0ec13" />
<rect x="425.50" y="681.00" width="1.00" height="5.00" fill="#d3db04" />
<rect x="425.50" y="686.00" width="1.00" height="5.00" fill="#e7be00" />
<rect x="428.50" y="676.00" width="2.00" height="5.00" fill="#c6e808" />
<rect x="428.50" y="681.00" width="2.00" height="5.00" fill="#c8e607" />
<rect x="428.50" y="686.00" width="2.00" height="5.00" fill="#e3c900" />
<rect x="430.50" y="676.00" width="5.00" height="5.00" fill="#cae407" />
<rect x="430.50" y="681.00" width="5.00" height="5.00" fill="#c2ec09" />
<rect x="430.50" y="686.00" width="5.00" height="5.00" fill="#ecb100" />
<rect x="438.50" y="676.00" width="3.00" height="5.00" fill="#c5e908" />
<rect x="438.50" y="681.00" width="3.00" height="5.00" fill="#c9e507" />
<rect x="438.50" y="686.00" width="3.00" height="5.00" fill="#e7be00" />
<rect x="441.50" y="676.00" width="4.00" height="5.00" fill="#cde106" />
<rect x="441.50" y="681.00" width="4.00" height="5.00" fill="#cbe306" />
<rect x="441.50" y="686.00" width="4.00" height="5.00" fill="#e1cc00" />
<rect x="446.50" y="676.00" width="5.00" height="5.00" fill="#c4ea08" />
<rect x="446.50" y="681.00" width="5.00" height="5.00" fill="#cbe306" />
<rect x="446.50" y="686.00" width="5.00" height="5.00" fill="#e7be00" />
<rect x="452.50" y="664.00" width="2.00" height="12.00" fill="#65d841" />
<rect x="452.50" y="676.00" width="2.00" height="5.00" fill="#c9e507" />
<rect x="452.50" y="681.00" width="2.00" height="5.00" fill="#c7e707" />
<rect x="452.50" y="686.00" width="2.00" height="5.00" fill="#e3c900" />
<rect x="456.00" y="676.00" width="6.00" height="5.00" fill="#c5e908" />
<rect x="456.00" y="681.00" width="6.00" height="5.00" fill="#c3eb09" />
<rect x="456.00" y="686.00" width="6.00" height="5.00" fill="#e3c700" />
<rect x="462.00" y="676.00" width="4.00" height="5.00" fill="#bfef0a" />
<rect x="462.00" y="681.00" width="4.00" height="5.00" fill="#d5d903" />
<rect x="462.00" y="686.00" width="4.00" height="5.00" fill="#e8ba00" />
<rect x="467.50" y="676.00" width="2.00" height="5.00" fill="#c1ed09" />
<rect x="467.50" y="681.00" width="2.00" height="5.00" fill="#d2dc04" />
<rect x="467.50" y="686.00" width="2.00" height="5.00" fill="#e7bd00" />
<rect x="473.50" y="664.00" width="5.00" height="12.00" fill="#74de38" />
<rect x="473.50" y="676.00" width="5.00" height="5.00" fill="#abeb16" />
<rect x="473.50" y="681.00" width="5.00" height="5.00" fill="#d2dc04" />
<rect x="473.50" y="686.00" width="5.00" height="5.00" fill="#e6c100" />
<rect x="479.50" y="664.00" width="1.00" height="12.00" fill="#76de37" />
<rect x="479.50" y="676.00" width="1.00" height="5.00" fill="#b5ee10" />
<rect x="479.50" y="681.00" width="1.00" height="5.00" fill="#d5d904" />
<rect x="479.50" y="686.00" width="1.00" height="5.00" fill="#e0ce00" />
<rect x="483.50" y="664.00" width="5.00" height="12.00" fill="#7adf35" />
<rect x="483.50" y="676.00" width="5.00" height="5.00" fill="#bfef0a" />
<rect x="483.50" y="681.00" width="5.00" height="5.00" fill="#c8e607" />
<rect x="483.50" y="686.00" width="5.00" height="5.00" fill="#e1cd00" />
<rect x="491.50" y="676.00" width="6.00" height="5.00" fill="#c9e507" />
<rect x="491.50" y="681.00" width="6.00" height="5.00" fill="#c6e808" />
<rect x="491.50" y="686.00" width="6.00" height="5.00" fill="#e8bb00" />
<rect x="497.50" y="676.00" width="1.50" height="5.00" fill="#cce206" />
<rect x="497.50" y="681.00" width="1.50" height="5.00" fill="#cce206" />
<rect x="497.50" y="686.00" width="1.50" height="5.00" fill="#e1cc00" />
<rect x="500.00" y="676.00" width="1.50" height="5.00" fill="#cae407" />
<rect x="500.00" y="681.00" width="1.50" height="5.00" fill="#d5d903" />
<rect x="500.00" y="686.00" width="1.50" height="5.00" fill="#e4c400" />
<rect x="501.50" y="676.00" width="3.00" height="5.00" fill="#bdf00b" />
<rect x="501.50" y="681.00" width="3.00" height="5.00" fill="#d3db04" />
<rect x="501.50" y="686.00" width="3.00" height="5.00" fill="#e0ce00" />
<rect x="510.50" y="676.00" width="1.00" height="5.00" fill="#c6e808" />
<rect x="510.50" y="681.00" width="1.00" height="5.00" fill="#c5e908" />
<rect x="510.50" y="686.00" width="1.00" height="5.00" fill="#e0ce00" />
<rect x="511.50" y="676.00" width="1.00" height="5.00" fill="#b0ed13" />
<rect x="511.50" y="681.00" width="1.00" height="5.00" fill="#cbe306" />
<rect x="511.50" y="686.00" width="1.00" height="5.00" fill="#e7bd00" />
<rect x="512.50" y="676.00" width="6.00" height="5.00" fill="#c7e707" />
<rect x="512.50" y="681.00" width="6.00" height="5.00" fill="#cae407" />
<rect x="512.50" y="686.00" width="6.00" height="5.00" fill="#ebb300" />
<rect x="518.50" y="676.00" width="1.00" height="5.00" fill="#bfef0a" />
<rect x="518.50" y="681.00" width="1.00" height="5.00" fill="#d0de05" />
<rect x="518.50" y="686.00" width="1.00" height="5.00" fill="#e1cc00" />
<rect x="519.50" y="676.00" width="6.00" height="5.00" fill="#c5e908" />
<rect x="519.50" y="681.00" width="6.00" height="5.00" fill="#c8e607" />
<rect x="519.50" y="686.00" width="6.00" height="5.00" fill="#e3c700" />
<rect x="531.00" y="647.00" width="1.50" height="9.00" fill="#27bd65" />
<rect x="531.00" y="656.00" width="1.50" height="8.00" fill="#33c35e" />
<rect x="531.00" y="664.00" width="1.50" height="12.00" fill="#68d940" />
<rect x="531.00" y="676.00" width="1.50" height="5.00" fill="#c8e607" />
<rect x="531.00" y="681.00" width="1.50" height="5.00" fill="#c2ec09" />
<rect x="531.00" y="686.00" width="1.50" height="5.00" fill="#e7bd00" />
<rect x="532.50" y="664.00" width="4.00" height="12.00" fill="#87e22c" />
<rect x="532.50" y="676.00" width="4.00" height="5.00" fill="#b7ee0e" />
<rect x="532.50" y="681.00" width="4.00" height="5.00" fill="#d0de05" />
<rect x="532.50" y="686.00" width="4.00" height="5.00" fill="#e8bc00" />
<rect x="536.50" y="676.00" width="6.00" height="5.00" fill="#c6e808" />
<rect x="536.50" y="681.00" width="6.00" height="5.00" fill="#d5d903" />
<rect x="536.50" y="686.00" width="6.00" height="5.00" fill="#e9b800" />
<rect x="542.50" y="676.00" width="1.00" height="5.00" fill="#c6e808" />
<rect x="542.50" y="681.00" width="1.00" height="5.00" fill="#c7e708" />
<rect x="542.50" y="686.00" width="1.00" height="5.00" fill="#ecb100" />
<rect x="546.00" y="676.00" width="6.00" height="5.00" fill="#c1ed09" />
<rect x="546.00" y="681.00" width="6.00" height="5.00" fill="#cee005" />
<rect x="546.00" y="686.00" width="6.00" height="5.00" fill="#e7be00" />
<rect x="553.00" y="676.00" width="2.00" height="5.00" fill="#c1ed09" />
<rect x="553.00" y="681.00" width="2.00" height="5.00" fill="#cae406" />
<rect x="553.00" y="686.00" width="2.00" height="5.00" fill="#e2ca00" />
<rect x="555.00" y="676.00" width="4.00" height="5.00" fill="#bcef0b" />
<rect x="555.00" y="681.00" width="4.00" height="5.00" fill="#cae407" />
<rect x="555.00" y="686.00" width="4.00" height="5.00" fill="#e5c300" />
<rect x="559.00" y="664.00" width="3.00" height="12.00" fill="#57d249" />
<rect x="559.00" y="676.00" width="3.00" height="5.00" fill="#c5e908" />
<rect x="559.00" y="681.00" width="3.00" height="5.00" fill="#d0de05" />
<rect x="559.00" y="686.00" width="3.00" height="5.00" fill="#e7be00" />
<rect x="562.00" y="664.00" width="3.00" height="12.00" fill="#80e031" />
<rect x="562.00" y="676.00" width="3.00" height="5.00" fill="#c5e908" />
<rect x="562.00" y="681.00" width="3.00" height="5.00" fill="#d5d903" />
<rect x="562.00" y="686.00" width="3.00" height="5.00" fill="#e4c700" />
<rect x="570.00" y="676.00" width="2.00" height="5.00" fill="#c3eb09" />
<rect x="570.00" y="681.00" width="2.00" height="5.00" fill="#c8e607" />
<rect x="570.00" y="686.00" width="2.00" height="5.00" fill="#eab800" />
<rect x="572.00" y="676.00" width="3.00" height="5.00" fill="#c2ec09" />
<rect x="572.00" y="681.00" width="3.00" height="5.00" fill="#cde106" />
<rect x="572.00" y="686.00" width="3.00" height="5.00" fill="#ecb200" />
<rect x="575.00" y="676.00" width="2.00" height="5.00" fill="#cde106" />
<rect x="575.00" y="681.00" width="2.00" height="5.00" fill="#c7e707" />
<rect x="575.00" y="686.00" width="2.00" height="5.00" fill="#e4c600" />
<rect x="578.00" y="664.00" width="2.00" height="12.00" fill="#72dd39" />
<rect x="578.00" y="676.00" width="2.00" height="5.00" fill="#adec15" />
<rect x="578.00" y="681.00" width="2.00" height="5.00" fill="#cee005" />
<rect x="578.00" y="686.00" width="2.00" height="5.00" fill="#e7be00" />
<rect x="582.00" y="676.00" width="2.00" height="5.00" fill="#b7ee0f" />
<rect x="582.00" y="681.00" width="2.00" height="5.00" fill="#cfdf05" />
<rect x="582.00" y="686.00" width="2.00" height="5.00" fill="#e8bc00" />
<rect x="589.00" y="664.00" width="3.00" height="12.00" fill="#74de38" />
<rect x="589.00" y="676.00" width="3.00" height="5.00" fill="#c2ec09" />
<rect x="589.00" y="681.00" width="3.00" height="5.00" fill="#c9e507" />
<rect x="589.00" y="686.00" width="3.00" height="5.00" fill="#eab600" />
<rect x="592.00" y="676.00" width="3.00" height="5.00" fill="#bbef0c" />
<rect x="592.00" y="681.00" width="3.00" height="5.00" fill="#c9e507" />
<rect x="592.00" y="686.00" width="3.00" height="5.00" fill="#e2ca00" />
<rect x="596.50" y="664.00" width="1.00" height="12.00" fill="#78df36" />
<rect x="596.50" y="676.00" width="1.00" height="5.00" fill="#c6e808" />
<rect x="596.50" y="681.00" width="1.00" height="5.00" fill="#cee006" />
<rect x="596.50" y="686.00" width="1.00" height="5.00" fill="#dfcf01" />
<rect x="601.50" y="664.00" width="3.00" height="12.00" fill="#6bdb3e" />
<rect x="601.50" y="676.00" width="3.00" height="5.00" fill="#cbe306" />
<rect x="601.50" y="681.00" width="3.00" height="5.00" fill="#c9e507" />
<rect x="601.50" y="686.00" width="3.00" height="5.00" fill="#e2cb00" />
<rect x="604.50" y="676.00" width="5.00" height="5.00" fill="#c9e507" />
<rect x="604.50" y="681.00" width="5.00" height="5.00" fill="#cae407" />
<rect x="604.50" y="686.00" width="5.00" height="5.00" fill="#e6c100" />
<rect x="612.50" y="676.00" width="3.00" height="5.00" fill="#c0ee09" />
<rect x="612.50" y="681.00" width="3.00" height="5.00" fill="#cbe306" />
<rect x="612.50" y="686.00" width="3.00" height="5.00" fill="#e3c700" />
<rect x="616.50" y="676.00" width="2.00" height="5.00" fill="#b9ef0d" />
<rect x="616.50" y="681.00" width="2.00" height="5.00" fill="#d3db04" />
<rect x="616.50" y="686.00" width="2.00" height="5.00" fill="#e1cc00" />
<rect x="621.50" y="676.00" width="1.50" height="5.00" fill="#acec15" />
<rect x="621.50" y="681.00" width="1.50" height="5.00" fill="#c7e707" />
<rect x="621.50" y="686.00" width="1.50" height="5.00" fill="#e5c400" />
<rect x="637.50" y="676.00" width="4.00" height="5.00" fill="#cde106" />
<rect x="637.50" y="681.00" width="4.00" height="5.00" fill="#c8e607" />
<rect x="637.50" y="686.00" width="4.00" height="5.00" fill="#e1cd00" />
<rect x="641.50" y="676.00" width="3.00" height="5.00" fill="#adec15" />
<rect x="641.50" y="681.00" width="3.00" height="5.00" fill="#d4da04" />
<rect x="641.50" y="686.00" width="3.00" height="5.00" fill="#e7bf00" />
<rect x="646.50" y="664.00" width="4.00" height="12.00" fill="#85e22e" />
<rect x="646.50" y="676.00" width="4.00" height="5.00" fill="#cae407" />
<rect x="646.50" y="681.00" width="4.00" height="5.00" fill="#cee005" />
<rect x="646.50" y="686.00" width="4.00" height="5.00" fill="#e9b900" />
<rect x="651.50" y="676.00" width="1.00" height="5.00" fill="#bef00a" />
<rect x="651.50" y="681.00" width="1.00" height="5.00" fill="#c3eb09" />
<rect x="651.50" y="686.00" width="1.00" height="5.00" fill="#e5c400" />
<rect x="652.50" y="676.00" width="3.00" height="5.00" fill="#bfef0a" />
<rect x="652.50" y="681.00" width="3.00" height="5.00" fill="#c3eb08" />
<rect x="652.50" y="686.00" width="3.00" height="5.00" fill="#e0ce00" />
<rect x="655.50" y="676.00" width="3.00" height="5.00" fill="#c2ec09" />
<rect x="655.50" y="681.00" width="3.00" height="5.00" fill="#d3db04" />
<rect x="655.50" y="686.00" width="3.00" height="5.00" fill="#e8bd00" />
<rect x="665.50" y="664.00" width="1.50" height="12.00" fill="#61d644" />
<rect x="665.50" y="676.00" width="1.50" height="5.00" fill="#cde106" />
<rect x="665.50" y="681.00" width="1.50" height="5.00" fill="#d5d903" />
<rect x="665.50" y="686.00" width="1.50" height="5.00" fill="#e8ba00" />
<rect x="667.00" y="664.00" width="1.50" height="12.00" fill="#55d14a" />
<rect x="667.00" y="676.00" width="1.50" height="5.00" fill="#bfef0a" />
<rect x="667.00" y="681.00" width="1.50" height="5.00" fill="#cee006" />
<rect x="667.00" y="686.00" width="1.50" height="5.00" fill="#e6c100" />
<rect x="671.50" y="676.00" width="1.00" height="5.00" fill="#bdf00b" />
<rect x="671.50" y="681.00" width="1.00" height="5.00" fill="#c3eb09" />
<rect x="671.50" y="686.00" width="1.00" height="5.00" fill="#e3c800" />
<rect x="672.50" y="664.00" width="2.00" height="12.00" fill="#55d14a" />
<rect x="672.50" y="676.00" width="2.00" height="5.00" fill="#c6e808" />
<rect x="672.50" y="681.00" width="2.00" height="5.00" fill="#c2ec09" />
<rect x="672.50" y="686.00" width="2.00" height="5.00" fill="#e9b800" />
<rect x="674.50" y="676.00" width="1.00" height="5.00" fill="#baef0d" />
<rect x="674.50" y="681.00" width="1.00" height="5.00" fill="#c7e707" />
<rect x="674.50" y="686.00" width="1.00" height="5.00" fill="#e6bf00" />
<rect x="676.50" y="664.00" width="1.00" height="12.00" fill="#5cd446" />
<rect x="676.50" y="676.00" width="1.00" height="5.00" fill="#cde106" />
<rect x="676.50" y="681.00" width="1.00" height="5.00" fill="#c2ec09" />
<rect x="676.50" y="686.00" width="1.00" height="5.00" fill="#e0ce00" />
<rect x="678.50" y="676.00" width="3.00" height="5.00" fill="#cde106" />
<rect x="678.50" y="681.00" width="3.00" height="5.00" fill="#c6e808" />
<rect x="678.50" y="686.00" width="3.00" height="5.00" fill="#e7bd00" />
<rect x="684.50" y="647.00" width="1.00" height="9.00" fill="#23b86c" />
<rect x="684.50" y="656.00" width="1.00" height="8.00" fill="#4dce4f" />
<rect x="684.50" y="664.00" width="1.00" height="12.00" fill="#56d24a" />
<rect x="684.50" y="676.00" width="1.00" height="5.00" fill="#cbe306" />
<rect x="684.50" y="681.00" width="1.00" height="5.00" fill="#d3db04" />
<rect x="684.50" y="686.00" width="1.00" height="5.00" fill="#e2ca00" />
<rect x="686.50" y="676.00" width="1.00" height="5.00" fill="#cae406" />
<rect x="686.50" y="681.00" width="1.00" height="5.00" fill="#c9e507" />
<rect x="686.50" y="686.00" width="1.00" height="5.00" fill="#e3c900" />
<rect x="687.50" y="676.00" width="4.00" height="5.00" fill="#afec13" />
<rect x="687.50" y="681.00" width="4.00" height="5.00" fill="#c8e607" />
<rect x="687.50" y="686.00" width="4.00" height="5.00" fill="#e1cc00" />
<rect x="691.50" y="664.00" width="1.50" height="12.00" fill="#6fdc3b" />
<rect x="691.50" y="676.00" width="1.50" height="5.00" fill="#c2ec09" />
<rect x="691.50" y="681.00" width="1.50" height="5.00" fill="#c7e707" />
<rect x="691.50" y="686.00" width="1.50" height="5.00" fill="#ebb400" />
<rect x="695.00" y="676.00" width="2.00" height="5.00" fill="#b7ee0e" />
<rect x="695.00" y="681.00" width="2.00" height="5.00" fill="#c1ed09" />
<rect x="695.00" y="686.00" width="2.00" height="5.00" fill="#e7bf00" />
<rect x="697.00" y="676.00" width="1.00" height="5.00" fill="#aaeb16" />
<rect x="697.00" y="681.00" width="1.00" height="5.00" fill="#c8e607" />
<rect x="697.00" y="686.00" width="1.00" height="5.00" fill="#e7be00" />
<rect x="698.00" y="676.00" width="3.00" height="5.00" fill="#b8ef0e" />
<rect x="698.00" y="681.00" width="3.00" height="5.00" fill="#cbe306" />
<rect x="698.00" y="686.00" width="3.00" height="5.00" fill="#e6c000" />
<rect x="701.00" y="664.00" width="1.00" height="12.00" fill="#74dd38" />
<rect x="701.00" y="676.00" width="1.00" height="5.00" fill="#cbe306" />
<rect x="701.00" y="681.00" width="1.00" height="5.00" fill="#c4ea08" />
<rect x="701.00" y="686.00" width="1.00" height="5.00" fill="#ecb100" />
<rect x="702.00" y="676.00" width="4.00" height="5.00" fill="#c5e908" />
<rect x="702.00" y="681.00" width="4.00" height="5.00" fill="#c0ee09" />
<rect x="702.00" y="686.00" width="4.00" height="5.00" fill="#e1cc00" />
<rect x="707.00" y="664.00" width="2.00" height="12.00" fill="#5cd446" />
<rect x="707.00" y="676.00" width="2.00" height="5.00" fill="#bfef0a" />
<rect x="707.00" y="681.00" width="2.00" height="5.00" fill="#d5d903" />
<rect x="707.00" y="686.00" width="2.00" height="5.00" fill="#e0ce00" />
<rect x="710.00" y="676.00" width="5.00" height="5.00" fill="#baef0d" />
<rect x="710.00" y="681.00" width="5.00" height="5.00" fill="#d1dd04" />
<rect x="710.00" y="686.00" width="5.00" height="5.00" fill="#eab600" />
<rect x="715.00" y="676.00" width="1.00" height="5.00" fill="#c5e908" />
<rect x="715.00" y="681.00" width="1.00" height="5.00" fill="#c7e707" />
<rect x="715.00" y="686.00" width="1.00" height="5.00" fill="#e3c700" />
<rect x="716.00" y="676.00" width="1.00" height="5.00" fill="#c5e908" />
<rect x="716.00" y="681.00" width="1.00" height="5.00" fill="#c8e607" />
<rect x="716.00" y="686.00" width="1.00" height="5.00" fill="#e3c800" />
<rect x="719.00" y="664.00" width="3.00" height="12.00" fill="#8fe427" />
<rect x="719.00" y="676.00" width="3.00" height="5.00" fill="#cce206" />
<rect x="719.00" y="681.00" width="3.00" height="5.00" fill="#c3eb09" />
<rect x="719.00" y="686.00" width="3.00" height="5.00" fill="#ebb500" />
<rect x="722.00" y="676.00" width="3.00" height="5.00" fill="#b0ed12" />
<rect x="722.00" y="681.00" width="3.00" height="5.00" fill="#c1ed09" />
<rect x="722.00" y="686.00" width="3.00" height="5.00" fill="#e2c900" />
<rect x="725.00" y="676.00" width="3.00" height="5.00" fill="#b8ef0e" />
<rect x="725.00" y="681.00" width="3.00" height="5.00" fill="#c8e607" />
<rect x="725.00" y="686.00" width="3.00" height="5.00" fill="#e9b800" />
<rect x="728.00" y="664.00" width="1.00" height="12.00" fill="#8ee428" />
<rect x="728.00" y="676.00" width="1.00" height="5.00" fill="#bbef0c" />
<rect x="728.00" y="681.00" width="1.00" height="5.00" fill="#c5e908" />
<rect x="728.00" y="686.00" width="1.00" height="5.00" fill="#e0ce00" />
<rect x="729.00" y="664.00" width="2.00" height="12.00" fill="#67d940" />
<rect x="729.00" y="676.00" width="2.00" height="5.00" fill="#afec14" />
<rect x="729.00" y="681.00" width="2.00" height="5.00" fill="#cae406" />
<rect x="729.00" y="686.00" width="2.00" height="5.00" fill="#e2c900" />
<rect x="732.00" y="676.00" width="3.00" height="5.00" fill="#cae407" />
<rect x="732.00" y="681.00" width="3.00" height="5.00" fill="#c5e908" />
<rect x="732.00" y="686.00" width="3.00" height="5.00" fill="#e5c400" />
<rect x="738.00" y="676.00" width="4.00" height="5.00" fill="#c0ee0a" />
<rect x="738.00" y="681.00" width="4.00" height="5.00" fill="#c8e607" />
<rect x="738.00" y="686.00" width="4.00" height="5.00" fill="#e8bc00" />
<rect x="742.00" y="664.00" width="3.00" height="12.00" fill="#6ada3e" />
<rect x="742.00" y="676.00" width="3.00" height="5.00" fill="#c6e808" />
<rect x="742.00" y="681.00" width="3.00" height="5.00" fill="#cde106" />
<rect x="742.00" y="686.00" width="3.00" height="5.00" fill="#ebb500" />
<rect x="753.00" y="676.00" width="3.00" height="5.00" fill="#b2ed12" />
<rect x="753.00" y="681.00" width="3.00" height="5.00" fill="#d2dc04" />
<rect x="753.00" y="686.00" width="3.00" height="5.00" fill="#e8bc00" />
<rect x="756.00" y="676.00" width="4.00" height="5.00" fill="#cde106" />
<rect x="756.00" y="681.00" width="4.00" height="5.00" fill="#c2ec09" />
<rect x="756.00" y="686.00" width="4.00" height="5.00" fill="#e5c200" />
<rect x="760.00" y="664.00" width="4.00" height="12.00" fill="#8de429" />
<rect x="760.00" y="676.00" width="4.00" height="5.00" fill="#c4ea08" />
<rect x="760.00" y="681.00" width="4.00" height="5.00" fill="#c6e808" />
<rect x="760.00" y="686.00" width="4.00" height="5.00" fill="#e9b900" />
<rect x="764.00" y="664.00" width="5.00" height="12.00" fill="#68d940" />
<rect x="764.00" y="676.00" width="5.00" height="5.00" fill="#b1ed12" />
<rect x="764.00" y="681.00" width="5.00" height="5.00" fill="#d2dc04" />
<rect x="764.00" y="686.00" width="5.00" height="5.00" fill="#e5c400" />
<rect x="771.50" y="676.00" width="4.00" height="5.00" fill="#c6e808" />
<rect x="771.50" y="681.00" width="4.00" height="5.00" fill="#e7bd00" />
<rect x="771.50" y="686.00" width="4.00" height="5.00" fill="#f98900" />
<rect x="775.50" y="676.00" width="1.00" height="5.00" fill="#cae406" />
<rect x="775.50" y="681.00" width="1.00" height="5.00" fill="#e6c100" />
<rect x="775.50" y="686.00" width="1.00" height="5.00" fill="#f98900" />
<rect x="776.50" y="676.00" width="5.00" height="5.00" fill="#c1ed09" />
<rect x="776.50" y="681.00" width="5.00" height="5.00" fill="#e8bc00" />
<rect x="776.50" y="686.00" width="5.00" height="5.00" fill="#f88e00" />
<rect x="785.50" y="676.00" width="2.00" height="5.00" fill="#c6e808" />
<rect x="785.50" y="681.00" width="2.00" height="5.00" fill="#eeae00" />
<rect x="785.50" y="686.00" width="2.00" height="5.00" fill="#fb8000" />
<rect x="788.50" y="676.00" width="2.00" height="5.00" fill="#cee005" />
<rect x="788.50" y="681.00" width="2.00" height="5.00" fill="#e3c700" />
<rect x="788.50" y="686.00" width="2.00" height="5.00" fill="#fd7700" />
<rect x="791.50" y="676.00" width="1.00" height="5.00" fill="#bfef0a" />
<rect x="791.50" y="681.00" width="1.00" height="5.00" fill="#efab00" />
<rect x="791.50" y="686.00" width="1.00" height="5.00" fill="#fc7d00" />
<rect x="792.50" y="676.00" width="1.00" height="5.00" fill="#c7e707" />
<rect x="792.50" y="681.00" width="1.00" height="5.00" fill="#edaf00" />
<rect x="792.50" y="686.00" width="1.00" height="5.00" fill="#f88e00" />
<rect x="793.50" y="676.00" width="1.50" height="5.00" fill="#c9e507" />
<rect x="793.50" y="681.00" width="1.50" height="5.00" fill="#eeac00" />
<rect x="793.50" y="686.00" width="1.50" height="5.00" fill="#fc7d00" />
<rect x="795.00" y="676.00" width="3.00" height="5.00" fill="#c9e507" />
<rect x="795.00" y="681.00" width="3.00" height="5.00" fill="#eeac00" />
<rect x="795.00" y="686.00" width="3.00" height="5.00" fill="#fc7b00" />
<rect x="799.50" y="664.00" width="4.00" height="12.00" fill="#89e32b" />
<rect x="799.50" y="676.00" width="4.00" height="5.00" fill="#cee005" />
<rect x="799.50" y="681.00" width="4.00" height="5.00" fill="#e9ba00" />
<rect x="799.50" y="686.00" width="4.00" height="5.00" fill="#f98800" />
<rect x="803.50" y="676.00" width="2.00" height="5.00" fill="#c1ed09" />
<rect x="803.50" y="681.00" width="2.00" height="5.00" fill="#eab600" />
<rect x="803.50" y="686.00" width="2.00" height="5.00" fill="#f88d00" />
<rect x="808.50" y="676.00" width="4.00" height="5.00" fill="#c4ea08" />
<rect x="808.50" y="681.00" width="4.00" height="5.00" fill="#e6c200" />
<rect x="808.50" y="686.00" width="4.00" height="5.00" fill="#f88c00" />
<rect x="814.00" y="676.00" width="3.00" height="5.00" fill="#c2ec09" />
<rect x="814.00" y="681.00" width="3.00" height="5.00" fill="#e9b900" />
<rect x="814.00" y="686.00" width="3.00" height="5.00" fill="#fa8400" />
<rect x="817.00" y="676.00" width="1.00" height="5.00" fill="#c4ea08" />
<rect x="817.00" y="681.00" width="1.00" height="5.00" fill="#e3c800" />
<rect x="817.00" y="686.00" width="1.00" height="5.00" fill="#f88d00" />
<rect x="821.50" y="676.00" width="3.00" height="5.00" fill="#b8ef0e" />
<rect x="821.50" y="681.00" width="3.00" height="5.00" fill="#eab500" />
<rect x="821.50" y="686.00" width="3.00" height="5.00" fill="#f88c00" />
<rect x="824.50" y="676.00" width="6.00" height="5.00" fill="#c0ee09" />
<rect x="824.50" y="681.00" width="6.00" height="5.00" fill="#eeab00" />
<rect x="824.50" y="686.00" width="6.00" height="5.00" fill="#fc7d00" />
<rect x="830.50" y="676.00" width="1.00" height="5.00" fill="#cfdf05" />
<rect x="830.50" y="681.00" width="1.00" height="5.00" fill="#e7bd00" />
<rect x="830.50" y="686.00" width="1.00" height="5.00" fill="#fa8300" />
<rect x="833.00" y="676.00" width="6.00" height="5.00" fill="#cde106" />
<rect x="833.00" y="681.00" width="6.00" height="5.00" fill="#eab700" />
<rect x="833.00" y="686.00" width="6.00" height="5.00" fill="#fa8400" />
<rect x="841.00" y="676.00" width="2.00" height="5.00" fill="#c8e607" />
<rect x="841.00" y="681.00" width="2.00" height="5.00" fill="#ebb500" />
<rect x="841.00" y="686.00" width="2.00" height="5.00" fill="#fa8200" />
<rect x="848.50" y="676.00" width="1.00" height="5.00" fill="#c3eb08" />
<rect x="848.50" y="681.00" width="1.00" height="5.00" fill="#e9b900" />
<rect x="848.50" y="686.00" width="1.00" height="5.00" fill="#fa8200" />
<rect x="849.50" y="664.00" width="2.00" height="12.00" fill="#76de37" />
<rect x="849.50" y="676.00" width="2.00" height="5.00" fill="#d1dd05" />
<rect x="849.50" y="681.00" width="2.00" height="5.00" fill="#e5c400" />
<rect x="849.50" y="686.00" width="2.00" height="5.00" fill="#fd7900" />
<rect x="854.50" y="676.00" width="1.00" height="5.00" fill="#d1dd05" />
<rect x="854.50" y="681.00" width="1.00" height="5.00" fill="#edaf00" />
<rect x="854.50" y="686.00" width="1.00" height="5.00" fill="#fc7c00" />
<rect x="857.50" y="676.00" width="6.00" height="5.00" fill="#c7e707" />
<rect x="857.50" y="681.00" width="6.00" height="5.00" fill="#ecb100" />
<rect x="857.50" y="686.00" width="6.00" height="5.00" fill="#f88c00" />
<rect x="863.50" y="676.00" width="6.00" height="5.00" fill="#bdf00a" />
<rect x="863.50" y="681.00" width="6.00" height="5.00" fill="#ebb400" />
<rect x="863.50" y="686.00" width="6.00" height="5.00" fill="#f88d00" />
<rect x="873.50" y="676.00" width="6.00" height="5.00" fill="#c1ed09" />
<rect x="873.50" y="681.00" width="6.00" height="5.00" fill="#e6c000" />
<rect x="873.50" y="686.00" width="6.00" height="5.00" fill="#fc7c00" />
<rect x="881.00" y="676.00" width="1.00" height="5.00" fill="#cbe306" />
<rect x="881.00" y="681.00" width="1.00" height="5.00" fill="#e7be00" />
<rect x="881.00" y="686.00" width="1.00" height="5.00" fill="#f98800" />
<rect x="882.00" y="676.00" width="1.00" height="5.00" fill="#c7e708" />
<rect x="882.00" y="681.00" width="1.00" height="5.00" fill="#ecb000" />
<rect x="882.00" y="686.00" width="1.00" height="5.00" fill="#f98900" />
<rect x="883.00" y="676.00" width="4.00" height="5.00" fill="#d1dd05" />
<rect x="883.00" y="681.00" width="4.00" height="5.00" fill="#edaf00" />
<rect x="883.00" y="686.00" width="4.00" height="5.00" fill="#f98700" />
<rect x="893.00" y="676.00" width="1.00" height="5.00" fill="#c1ed09" />
<rect x="893.00" y="681.00" width="1.00" height="5.00" fill="#e8bb00" />
<rect x="893.00" y="686.00" width="1.00" height="5.00" fill="#fc7b00" />
<rect x="896.00" y="676.00" width="6.00" height="5.00" fill="#cee005" />
<rect x="896.00" y="681.00" width="6.00" height="5.00" fill="#ebb400" />
<rect x="896.00" y="686.00" width="6.00" height="5.00" fill="#fb7e00" />
<rect x="903.00" y="676.00" width="1.50" height="5.00" fill="#c9e507" />
<rect x="903.00" y="681.00" width="1.50" height="5.00" fill="#e5c300" />
<rect x="903.00" y="686.00" width="1.50" height="5.00" fill="#f98700" />
<rect x="906.00" y="676.00" width="1.00" height="5.00" fill="#d0de05" />
<rect x="906.00" y="681.00" width="1.00" height="5.00" fill="#e4c500" />
<rect x="906.00" y="686.00" width="1.00" height="5.00" fill="#f98700" />
<rect x="908.00" y="676.00" width="3.00" height="5.00" fill="#bef00a" />
<rect x="908.00" y="681.00" width="3.00" height="5.00" fill="#ecb100" />
<rect x="908.00" y="686.00" width="3.00" height="5.00" fill="#f98800" />
<rect x="911.00" y="676.00" width="1.50" height="5.00" fill="#d1dd05" />
<rect x="911.00" y="681.00" width="1.50" height="5.00" fill="#e8bc00" />
<rect x="911.00" y="686.00" width="1.50" height="5.00" fill="#fa8700" />
<rect x="915.50" y="676.00" width="3.00" height="5.00" fill="#d1dd05" />
<rect x="915.50" y="681.00" width="3.00" height="5.00" fill="#eab700" />
<rect x="915.50" y="686.00" width="3.00" height="5.00" fill="#f88c00" />
<rect x="918.50" y="676.00" width="6.00" height="5.00" fill="#c2ec09" />
<rect x="918.50" y="681.00" width="6.00" height="5.00" fill="#e5c200" />
<rect x="918.50" y="686.00" width="6.00" height="5.00" fill="#fc7b00" />
<rect x="926.50" y="676.00" width="2.00" height="5.00" fill="#cee005" />
<rect x="926.50" y="681.00" width="2.00" height="5.00" fill="#e9b800" />
<rect x="926.50" y="686.00" width="2.00" height="5.00" fill="#f98700" />
<rect x="930.50" y="676.00" width="2.00" height="5.00" fill="#c2ec09" />
<rect x="930.50" y="681.00" width="2.00" height="5.00" fill="#efab00" />
<rect x="930.50" y="686.00" width="2.00" height="5.00" fill="#fc7e00" />
<rect x="934.00" y="676.00" width="5.00" height="5.00" fill="#c0ee0a" />
<rect x="934.00" y="681.00" width="5.00" height="5.00" fill="#e7bd00" />
<rect x="934.00" y="686.00" width="5.00" height="5.00" fill="#fd7900" />
<rect x="945.00" y="664.00" width="5.00" height="12.00" fill="#5fd545" />
<rect x="945.00" y="676.00" width="5.00" height="5.00" fill="#c3eb08" />
<rect x="945.00" y="681.00" width="5.00" height="5.00" fill="#e9b800" />
<rect x="945.00" y="686.00" width="5.00" height="5.00" fill="#fa8300" />
<rect x="954.50" y="676.00" width="4.00" height="5.00" fill="#c1ed09" />
<rect x="954.50" y="681.00" width="4.00" height="5.00" fill="#eab600" />
<rect x="954.50" y="686.00" width="4.00" height="5.00" fill="#fd7600" />
<rect x="958.50" y="676.00" width="4.00" height="5.00" fill="#d1dd05" />
<rect x="958.50" y="681.00" width="4.00" height="5.00" fill="#e4c500" />
<rect x="958.50" y="686.00" width="4.00" height="5.00" fill="#fc7c00" />
<rect x="966.50" y="676.00" width="3.00" height="5.00" fill="#cde106" />
<rect x="966.50" y="681.00" width="3.00" height="5.00" fill="#e7be00" />
<rect x="966.50" y="686.00" width="3.00" height="5.00" fill="#fa8300" />
<rect x="969.50" y="676.00" width="5.00" height="5.00" fill="#cfdf05" />
<rect x="969.50" y="681.00" width="5.00" height="5.00" fill="#e5c200" />
<rect x="969.50" y="686.00" width="5.00" height="5.00" fill="#fc7b00" />
<rect x="974.50" y="676.00" width="1.50" height="5.00" fill="#c9e507" />
<rect x="974.50" y="681.00" width="1.50" height="5.00" fill="#e4c700" />
<rect x="974.50" y="686.00" width="1.50" height="5.00" fill="#fa8600" />
<rect x="976.00" y="676.00" width="1.00" height="5.00" fill="#c0ee09" />
<rect x="976.00" y="681.00" width="1.00" height="5.00" fill="#e6c000" />
<rect x="976.00" y="686.00" width="1.00" height="5.00" fill="#fb7e00" />
<rect x="980.50" y="676.00" width="2.00" height="5.00" fill="#c1ed09" />
<rect x="980.50" y="681.00" width="2.00" height="5.00" fill="#e6c200" />
<rect x="980.50" y="686.00" width="2.00" height="5.00" fill="#fb8100" />
<rect x="985.00" y="676.00" width="1.00" height="5.00" fill="#c4ea08" />
<rect x="985.00" y="681.00" width="1.00" height="5.00" fill="#eead00" />
<rect x="985.00" y="686.00" width="1.00" height="5.00" fill="#f88e00" />
<rect x="990.00" y="676.00" width="2.00" height="5.00" fill="#cbe306" />
<rect x="990.00" y="681.00" width="2.00" height="5.00" fill="#e9b800" />
<rect x="990.00" y="686.00" width="2.00" height="5.00" fill="#f98a00" />
<rect x="992.00" y="676.00" width="6.00" height="5.00" fill="#c1ed09" />
<rect x="992.00" y="681.00" width="6.00" height="5.00" fill="#ebb500" />
<rect x="992.00" y="686.00" width="6.00" height="5.00" fill="#f98a00" />
<rect x="1002.00" y="676.00" width="1.50" height="5.00" fill="#bfef0a" />
<rect x="1002.00" y="681.00" width="1.50" height="5.00" fill="#ecb000" />
<rect x="1002.00" y="686.00" width="1.50" height="5.00" fill="#fc7b00" />
<rect x="1003.50" y="664.00" width="1.00" height="12.00" fill="#8ae32b" />
<rect x="1003.50" y="676.00" width="1.00" height="5.00" fill="#c8e607" />
<rect x="1003.50" y="681.00" width="1.00" height="5.00" fill="#edae00" />
<rect x="1003.50" y="686.00" width="1.00" height="5.00" fill="#fb8200" />
<rect x="1006.00" y="676.00" width="1.00" height="5.00" fill="#d1dd05" />
<rect x="1006.00" y="681.00" width="1.00" height="5.00" fill="#edb000" />
<rect x="1006.00" y="686.00" width="1.00" height="5.00" fill="#fd7600" />
<rect x="1007.00" y="676.00" width="1.00" height="5.00" fill="#c6e808" />
<rect x="1007.00" y="681.00" width="1.00" height="5.00" fill="#ecb100" />
<rect x="1007.00" y="686.00" width="1.00" height="5.00" fill="#f88e00" />
<rect x="1012.50" y="676.00" width="5.00" height="5.00" fill="#c0ee09" />
<rect x="1012.50" y="681.00" width="5.00" height="5.00" fill="#e8bb00" />
<rect x="1012.50" y="686.00" width="5.00" height="5.00" fill="#f88d00" />
<rect x="1019.00" y="676.00" width="5.00" height="5.00" fill="#c2ec09" />
<rect x="1019.00" y="681.00" width="5.00" height="5.00" fill="#ecb200" />
<rect x="1019.00" y="686.00" width="5.00" height="5.00" fill="#fb8100" />
<rect x="1024.00" y="676.00" width="6.00" height="5.00" fill="#c9e507" />
<rect x="1024.00" y="681.00" width="6.00" height="5.00" fill="#e4c600" />
<rect x="1024.00" y="686.00" width="6.00" height="5.00" fill="#f88e00" />
<rect x="1032.00" y="676.00" width="2.00" height="5.00" fill="#cfdf05" />
<rect x="1032.00" y="681.00" width="2.00" height="5.00" fill="#ecb100" />
<rect x="1032.00" y="686.00" width="2.00" height="5.00" fill="#fa8400" />
<rect x="1037.00" y="676.00" width="1.00" height="5.00" fill="#bfef0a" />
<rect x="1037.00" y="681.00" width="1.00" height="5.00" fill="#e9ba00" />
<rect x="1037.00" y="686.00" width="1.00" height="5.00" fill="#fb8000" />
<rect x="1040.00" y="664.00" width="1.00" height="12.00" fill="#62d743" />
<rect x="1040.00" y="676.00" width="1.00" height="5.00" fill="#c9e507" />
<rect x="1040.00" y="681.00" width="1.00" height="5.00" fill="#e6bf00" />
<rect x="1040.00" y="686.00" width="1.00" height="5.00" fill="#f98a00" />
<rect x="1043.50" y="664.00" width="1.00" height="12.00" fill="#8ae32b" />
<rect x="1043.50" y="676.00" width="1.00" height="5.00" fill="#cce206" />
<rect x="1043.50" y="681.00" width="1.00" height="5.00" fill="#eab700" />
<rect x="1043.50" y="686.00" width="1.00" height="5.00" fill="#fb8200" />
<rect x="1044.50" y="664.00" width="2.00" height="12.00" fill="#6bdb3e" />
<rect x="1044.50" y="676.00" width="2.00" height="5.00" fill="#cee005" />
<rect x="1044.50" y="681.00" width="2.00" height="5.00" fill="#eead00" />
<rect x="1044.50" y="686.00" width="2.00" height="5.00" fill="#f98800" />
<rect x="1048.50" y="664.00" width="6.00" height="12.00" fill="#87e22c" />
<rect x="1048.50" y="676.00" width="6.00" height="5.00" fill="#cde106" />
<rect x="1048.50" y="681.00" width="6.00" height="5.00" fill="#ecb200" />
<rect x="1048.50" y="686.00" width="6.00" height="5.00" fill="#f98a00" />
<rect x="1054.50" y="664.00" width="1.50" height="12.00" fill="#96e623" />
<rect x="1054.50" y="676.00" width="1.50" height="5.00" fill="#c6e808" />
<rect x="1054.50" y="681.00" width="1.50" height="5.00" fill="#ecb300" />
<rect x="1054.50" y="686.00" width="1.50" height="5.00" fill="#fc7d00" />
<rect x="1056.00" y="664.00" width="4.00" height="12.00" fill="#8ee428" />
<rect x="1056.00" y="676.00" width="4.00" height="5.00" fill="#c0ee09" />
<rect x="1056.00" y="681.00" width="4.00" height="5.00" fill="#e9ba00" />
<rect x="1056.00" y="686.00" width="4.00" height="5.00" fill="#fa8300" />
<rect x="1060.00" y="664.00" width="5.00" height="12.00" fill="#75de38" />
<rect x="1060.00" y="676.00" width="5.00" height="5.00" fill="#c2ec09" />
<rect x="1060.00" y="681.00" width="5.00" height="5.00" fill="#ebb400" />
<rect x="1060.00" y="686.00" width="5.00" height="5.00" fill="#f88c00" />
<rect x="1065.00" y="664.00" width="1.00" height="12.00" fill="#87e22d" />
<rect x="1065.00" y="676.00" width="1.00" height="5.00" fill="#b8ee0e" />
<rect x="1065.00" y="681.00" width="1.00" height="5.00" fill="#e8bb00" />
<rect x="1065.00" y="686.00" width="1.00" height="5.00" fill="#f98700" />
<rect x="1069.00" y="676.00" width="1.00" height="5.00" fill="#c9e507" />
<rect x="1069.00" y="681.00" width="1.00" height="5.00" fill="#e3c800" />
<rect x="1069.00" y="686.00" width="1.00" height="5.00" fill="#fd7600" />
<rect x="1073.00" y="664.00" width="3.00" height="12.00" fill="#68da3f" />
<rect x="1073.00" y="676.00" width="3.00" height="5.00" fill="#c9e507" />
<rect x="1073.00" y="681.00" width="3.00" height="5.00" fill="#ecb100" />
<rect x="1073.00" y="686.00" width="3.00" height="5.00" fill="#fb8000" />
<rect x="1076.00" y="664.00" width="3.00" height="12.00" fill="#62d743" />
<rect x="1076.00" y="676.00" width="3.00" height="5.00" fill="#cee005" />
<rect x="1076.00" y="681.00" width="3.00" height="5.00" fill="#eab600" />
<rect x="1076.00" y="686.00" width="3.00" height="5.00" fill="#fb8000" />
<rect x="1079.00" y="676.00" width="2.00" height="5.00" fill="#c0ee09" />
<rect x="1079.00" y="681.00" width="2.00" height="5.00" fill="#eeac00" />
<rect x="1079.00" y="686.00" width="2.00" height="5.00" fill="#fb7e00" />
<rect x="222.92" y="630.00" width="1.50" height="34.00" fill="#1bae79" />
<rect x="315.99" y="630.00" width="1.50" height="34.00" fill="#20b571" />
<rect x="99.96" y="647.00" width="1.50" height="17.00" fill="#13a388" />
<rect x="270.00" y="647.00" width="1.50" height="17.00" fill="#1db076" />
<rect x="475.26" y="647.00" width="1.00" height="17.00" fill="#19ab7d" />
<rect x="1049.24" y="647.00" width="1.50" height="17.00" fill="#109a9b" />
<rect x="331.43" y="647.00" width="1.00" height="17.00" fill="#15a684" />
<rect x="445.14" y="647.00" width="1.00" height="17.00" fill="#1bae79" />
<rect x="389.49" y="647.00" width="1.00" height="17.00" fill="#109a9c" />
<rect x="1071.02" y="647.00" width="1.00" height="17.00" fill="#23b76d" />
<rect x="939.67" y="630.00" width="1.50" height="34.00" fill="#14a585" />
<rect x="155.66" y="647.00" width="1.00" height="17.00" fill="#23b86d" />
<rect x="942.57" y="647.00" width="1.00" height="17.00" fill="#22b76d" />
<rect x="583.47" y="630.00" width="1.00" height="34.00" fill="#109a9c" />
<rect x="380.95" y="630.00" width="1.00" height="34.00" fill="#1db076" />
<rect x="695.50" y="630.00" width="1.00" height="34.00" fill="#23b86c" />
<rect x="640.96" y="630.00" width="1.00" height="34.00" fill="#23b86c" />
<rect x="479.58" y="630.00" width="1.00" height="34.00" fill="#18aa7e" />
<rect x="324.45" y="618.00" width="1.00" height="46.00" fill="#12a388" />
<rect x="674.28" y="630.00" width="1.00" height="34.00" fill="#1fb373" />
<rect x="329.61" y="647.00" width="1.50" height="17.00" fill="#19ac7c" />
<rect x="669.76" y="618.00" width="1.00" height="46.00" fill="#18aa7e" />
<rect x="489.00" y="618.00" width="1.00" height="46.00" fill="#16a882" />
<rect x="719.49" y="647.00" width="1.00" height="17.00" fill="#13a487" />
<rect x="574.81" y="647.00" width="1.00" height="17.00" fill="#15a683" />
<rect x="969.72" y="647.00" width="1.00" height="17.00" fill="#12a389" />
<rect x="493.33" y="647.00" width="1.00" height="17.00" fill="#109c97" />
<rect x="648.49" y="630.00" width="1.00" height="34.00" fill="#109d94" />
<rect x="428.10" y="618.00" width="1.00" height="46.00" fill="#17a881" />
<rect x="993.54" y="630.00" width="1.00" height="34.00" fill="#109e91" />
<rect x="275.53" y="630.00" width="1.00" height="34.00" fill="#109d95" />
<rect x="179.52" y="647.00" width="1.00" height="17.00" fill="#109b97" />
<rect x="235.00" y="630.00" width="1.50" height="34.00" fill="#14a585" />
<rect x="1060.00" y="647.00" width="1.00" height="17.00" fill="#20b471" />
<rect x="547.34" y="630.00" width="1.00" height="34.00" fill="#15a684" />
<rect x="726.38" y="647.00" width="1.50" height="17.00" fill="#15a683" />
<rect x="400.90" y="647.00" width="1.50" height="17.00" fill="#16a782" />
<rect x="305.86" y="647.00" width="1.00" height="17.00" fill="#1db076" />
<rect x="681.66" y="630.00" width="1.00" height="34.00" fill="#109f8f" />
<rect x="1058.05" y="630.00" width="1.00" height="34.00" fill="#10a08c" />
<rect x="807.17" y="630.00" width="1.00" height="34.00" fill="#24b96a" />
<rect x="877.96" y="647.00" width="1.00" height="17.00" fill="#23b86c" />
<rect x="396.67" y="647.00" width="1.00" height="17.00" fill="#1db077" />
<rect x="578.64" y="647.00" width="1.50" height="17.00" fill="#1eb274" />
<rect x="276.30" y="630.00" width="1.00" height="34.00" fill="#109f8e" />
<rect x="135.87" y="647.00" width="1.00" height="17.00" fill="#10a08d" />
<rect x="374.29" y="647.00" width="1.00" height="17.00" fill="#17a980" />
<rect x="287.56" y="630.00" width="1.00" height="34.00" fill="#10a08d" />
<rect x="984.74" y="647.00" width="1.00" height="17.00" fill="#20b472" />
<rect x="544.23" y="618.00" width="1.00" height="46.00" fill="#12a289" />
<rect x="178.74" y="647.00" width="1.50" height="17.00" fill="#15a684" />
<rect x="573.40" y="647.00" width="1.00" height="17.00" fill="#12a289" />
<rect x="953.40" y="630.00" width="1.50" height="34.00" fill="#16a782" />
<rect x="1056.61" y="647.00" width="1.00" height="17.00" fill="#1fb373" />
<rect x="345.79" y="647.00" width="1.50" height="17.00" fill="#23b86d" />
<rect x="818.93" y="630.00" width="1.00" height="34.00" fill="#1fb372" />
<rect x="339.74" y="647.00" width="1.00" height="17.00" fill="#109a9b" />
<rect x="944.35" y="630.00" width="1.00" height="34.00" fill="#23b76d" />
<rect x="708.87" y="647.00" width="1.00" height="17.00" fill="#109a9c" />
<rect x="138.72" y="647.00" width="1.00" height="17.00" fill="#15a684" />
<rect x="191.26" y="647.00" width="1.00" height="17.00" fill="#19ab7e" />
<rect x="123.10" y="647.00" width="1.00" height="17.00" fill="#11a28a" />
<rect x="371.21" y="618.00" width="1.00" height="46.00" fill="#14a586" />
<rect x="289.21" y="630.00" width="1.00" height="34.00" fill="#1eb274" />
<rect x="491.82" y="630.00" width="1.50" height="34.00" fill="#109e91" />
<rect x="341.89" y="618.00" width="1.00" height="46.00" fill="#12a388" />
<rect x="515.10" y="630.00" width="1.00" height="34.00" fill="#10a08c" />
<rect x="944.37" y="647.00" width="1.50" height="17.00" fill="#21b66f" />
<rect x="233.24" y="630.00" width="1.00" height="34.00" fill="#109d93" />
<rect x="365.24" y="647.00" width="1.50" height="17.00" fill="#1fb274" />
<rect x="895.68" y="647.00" width="1.00" height="17.00" fill="#21b570" />
<rect x="130.60" y="647.00" width="1.00" height="17.00" fill="#109e92" />
<rect x="302.89" y="647.00" width="1.00" height="17.00" fill="#18aa7e" />
<rect x="597.67" y="630.00" width="1.00" height="34.00" fill="#109f8e" />
<rect x="111.35" y="647.00" width="1.00" height="17.00" fill="#22b76e" />
<rect x="1028.79" y="630.00" width="1.00" height="34.00" fill="#109f8f" />
<rect x="561.49" y="630.00" width="1.00" height="34.00" fill="#1db076" />
<rect x="663.81" y="647.00" width="1.00" height="17.00" fill="#19ac7c" />
<rect x="1039.89" y="647.00" width="1.00" height="17.00" fill="#23b86c" />
<rect x="652.49" y="630.00" width="1.00" height="34.00" fill="#1aad7b" />
<rect x="813.89" y="647.00" width="1.00" height="17.00" fill="#14a585" />
<rect x="467.71" y="630.00" width="1.00" height="34.00" fill="#109c97" />
<rect x="442.65" y="647.00" width="1.00" height="17.00" fill="#15a684" />
<rect x="940.32" y="618.00" width="1.00" height="46.00" fill="#16a782" />
<rect x="899.16" y="630.00" width="1.00" height="34.00" fill="#1fb373" />
<rect x="219.78" y="630.00" width="1.50" height="34.00" fill="#18aa7f" />
<rect x="941.86" y="647.00" width="1.00" height="17.00" fill="#17a981" />
<rect x="337.33" y="618.00" width="1.00" height="46.00" fill="#109e90" />
<rect x="106.79" y="618.00" width="1.00" height="46.00" fill="#1eb175" />
<rect x="1078.59" y="647.00" width="1.00" height="17.00" fill="#22b66f" />
<rect x="713.87" y="647.00" width="1.50" height="17.00" fill="#17a980" />
<rect x="836.05" y="647.00" width="1.00" height="17.00" fill="#18aa7e" />
<rect x="918.98" y="618.00" width="1.00" height="46.00" fill="#24b96b" />
<rect x="1058.22" y="618.00" width="1.50" height="46.00" fill="#109f8e" />
<rect x="113.55" y="630.00" width="1.00" height="34.00" fill="#109a9b" />
<rect x="964.06" y="630.00" width="1.50" height="34.00" fill="#18ab7e" />
<rect x="541.10" y="630.00" width="1.00" height="34.00" fill="#109e91" />
<rect x="1066.73" y="630.00" width="1.00" height="34.00" fill="#1db077" />
<rect x="581.55" y="630.00" width="1.00" height="34.00" fill="#109d93" />
<rect x="799.48" y="647.00" width="1.00" height="17.00" fill="#1aad7b" />
<rect x="478.36" y="647.00" width="1.00" height="17.00" fill="#1fb274" />
<rect x="740.72" y="647.00" width="1.00" height="17.00" fill="#20b372" />
<rect x="250.52" y="647.00" width="1.00" height="17.00" fill="#1caf78" />
<rect x="508.11" y="647.00" width="1.00" height="17.00" fill="#24ba6a" />
<rect x="293.63" y="630.00" width="1.00" height="34.00" fill="#24ba6a" />
<rect x="533.68" y="647.00" width="1.00" height="17.00" fill="#19ab7d" />
<rect x="1048.77" y="630.00" width="1.00" height="34.00" fill="#11a18b" />
<rect x="500.10" y="647.00" width="1.00" height="17.00" fill="#109f90" />
<rect x="788.54" y="630.00" width="1.00" height="34.00" fill="#109f8f" />
<rect x="215.73" y="647.00" width="1.50" height="17.00" fill="#1db077" />
<rect x="167.38" y="647.00" width="1.50" height="17.00" fill="#109a9a" />
<rect x="234.02" y="647.00" width="1.00" height="17.00" fill="#109a9b" />
<rect x="130.07" y="647.00" width="1.00" height="17.00" fill="#17a980" />
<rect x="275.25" y="630.00" width="1.00" height="34.00" fill="#1eb275" />
<rect x="177.67" y="618.00" width="1.50" height="46.00" fill="#109b99" />
<rect x="271.21" y="630.00" width="1.00" height="34.00" fill="#10a18b" />
<rect x="270.58" y="647.00" width="1.00" height="17.00" fill="#21b570" />
<rect x="133.74" y="618.00" width="1.00" height="46.00" fill="#24b96b" />
<rect x="153.52" y="647.00" width="1.50" height="17.00" fill="#20b471" />
<rect x="141.47" y="647.00" width="1.00" height="17.00" fill="#11a18b" />
<rect x="205.91" y="630.00" width="1.50" height="34.00" fill="#19ab7d" />
<rect x="249.98" y="647.00" width="1.50" height="17.00" fill="#1db076" />
<rect x="164.03" y="630.00" width="1.00" height="34.00" fill="#109c96" />
<rect x="106.18" y="618.00" width="1.00" height="46.00" fill="#18a97f" />
<rect x="247.42" y="618.00" width="1.00" height="46.00" fill="#109c95" />
<rect x="266.67" y="647.00" width="1.00" height="17.00" fill="#24ba6a" />
<rect x="203.00" y="630.00" width="1.00" height="34.00" fill="#109b98" />
<rect x="221.85" y="647.00" width="1.00" height="17.00" fill="#16a882" />
<rect x="175.37" y="647.00" width="1.00" height="17.00" fill="#21b570" />
<rect x="238.70" y="630.00" width="1.50" height="34.00" fill="#10a08d" />
<rect x="140.15" y="647.00" width="1.00" height="17.00" fill="#1bad7a" />
<rect x="182.53" y="630.00" width="1.00" height="34.00" fill="#109d93" />
<rect x="258.00" y="630.00" width="1.50" height="34.00" fill="#109a9b" />
<rect x="236.76" y="618.00" width="1.00" height="46.00" fill="#13a487" />
<rect x="229.13" y="630.00" width="1.00" height="34.00" fill="#21b570" />
<rect x="183.46" y="618.00" width="1.00" height="46.00" fill="#109a9b" />
<rect x="145.66" y="618.00" width="1.00" height="46.00" fill="#1bad7a" />
<rect x="212.86" y="630.00" width="1.00" height="34.00" fill="#20b472" />
<rect x="95.00" y="530.40" width="2.00" height="8.60" fill="#1424fd" />
<rect x="98.50" y="526.50" width="1.00" height="28.50" fill="#142dfb" />
<rect x="102.00" y="568.00" width="1.00" height="13.00" fill="#1446f3" />
<rect x="105.50" y="555.00" width="1.50" height="26.00" fill="#144df2" />
<rect x="106.50" y="530.40" width="1.00" height="8.60" fill="#1439f7" />
<rect x="110.50" y="568.00" width="1.50" height="13.00" fill="#144df2" />
<rect x="113.50" y="539.00" width="3.00" height="29.00" fill="#1446f4" />
<rect x="117.50" y="526.50" width="2.00" height="12.50" fill="#131dfc" />
<rect x="119.00" y="526.50" width="2.00" height="12.50" fill="#1430fa" />
<rect x="122.00" y="526.50" width="1.50" height="12.50" fill="#121bf7" />
<rect x="123.00" y="552.00" width="1.00" height="3.00" fill="#143cf6" />
<rect x="125.50" y="530.40" width="1.50" height="37.60" fill="#1426fd" />
<rect x="128.50" y="539.00" width="3.00" height="13.00" fill="#143af7" />
<rect x="131.50" y="521.50" width="1.00" height="8.90" fill="#1119f4" />
<rect x="133.50" y="539.00" width="1.00" height="13.00" fill="#1438f8" />
<rect x="135.50" y="539.00" width="1.00" height="29.00" fill="#1431fa" />
<rect x="137.50" y="530.40" width="1.00" height="8.60" fill="#143ff6" />
<rect x="145.00" y="552.00" width="1.00" height="3.00" fill="#144bf2" />
<rect x="146.50" y="555.00" width="1.00" height="13.00" fill="#1439f7" />
<rect x="149.50" y="526.50" width="1.00" height="3.90" fill="#1424fd" />
<rect x="152.50" y="530.40" width="1.00" height="8.60" fill="#1434f9" />
<rect x="156.00" y="526.50" width="1.00" height="25.50" fill="#1420fe" />
<rect x="159.00" y="539.00" width="2.00" height="42.00" fill="#1448f3" />
<rect x="160.00" y="530.40" width="1.00" height="8.60" fill="#1437f8" />
<rect x="162.00" y="539.00" width="1.00" height="42.00" fill="#1447f3" />
<rect x="163.00" y="530.40" width="1.00" height="37.60" fill="#1424fd" />
<rect x="165.50" y="568.00" width="1.00" height="13.00" fill="#1459ee" />
<rect x="170.50" y="526.50" width="1.00" height="12.50" fill="#1425fd" />
<rect x="172.50" y="568.00" width="2.00" height="13.00" fill="#145ced" />
<rect x="176.50" y="530.40" width="1.00" height="21.60" fill="#1441f5" />
<rect x="179.50" y="526.50" width="1.50" height="12.50" fill="#1427fc" />
<rect x="183.00" y="526.50" width="1.00" height="3.90" fill="#142afb" />
<rect x="185.50" y="539.00" width="3.00" height="16.00" fill="#143bf7" />
<rect x="190.00" y="539.00" width="1.00" height="29.00" fill="#143af7" />
<rect x="191.50" y="568.00" width="1.00" height="13.00" fill="#1452f0" />
<rect x="193.00" y="539.00" width="2.00" height="29.00" fill="#1436f8" />
<rect x="195.00" y="539.00" width="1.00" height="29.00" fill="#1438f7" />
<rect x="196.00" y="526.50" width="2.00" height="3.90" fill="#121af7" />
<rect x="198.50" y="539.00" width="1.00" height="29.00" fill="#1448f3" />
<rect x="200.00" y="539.00" width="1.00" height="16.00" fill="#1441f5" />
<rect x="202.50" y="539.00" width="2.00" height="42.00" fill="#143ef6" />
<rect x="204.50" y="539.00" width="3.00" height="13.00" fill="#142cfb" />
<rect x="208.00" y="555.00" width="1.00" height="26.00" fill="#143ff5" />
<rect x="212.50" y="568.00" width="1.50" height="13.00" fill="#1451f0" />
<rect x="215.50" y="552.00" width="3.00" height="3.00" fill="#1448f3" />
<rect x="217.00" y="552.00" width="3.00" height="16.00" fill="#143cf6" />
<rect x="218.00" y="552.00" width="1.50" height="16.00" fill="#1450f1" />
<rect x="219.00" y="530.40" width="1.00" height="8.60" fill="#1432f9" />
<rect x="220.00" y="526.50" width="1.00" height="12.50" fill="#1431f9" />
<rect x="222.00" y="568.00" width="1.00" height="13.00" fill="#1456ef" />
<rect x="224.50" y="555.00" width="1.00" height="26.00" fill="#1441f5" />
<rect x="227.50" y="568.00" width="1.00" height="13.00" fill="#145ded" />
<rect x="230.50" y="539.00" width="1.00" height="29.00" fill="#1429fc" />
<rect x="233.50" y="539.00" width="2.00" height="16.00" fill="#1429fc" />
<rect x="239.00" y="530.40" width="1.00" height="21.60" fill="#1434f9" />
<rect x="241.00" y="526.50" width="1.00" height="3.90" fill="#1421fe" />
<rect x="242.50" y="521.50" width="1.50" height="5.00" fill="#131dfc" />
<rect x="244.50" y="521.50" width="1.50" height="8.90" fill="#131cfb" />
<rect x="249.50" y="555.00" width="2.00" height="26.00" fill="#1445f4" />
<rect x="253.00" y="555.00" width="3.00" height="26.00" fill="#144ef1" />
<rect x="256.00" y="526.50" width="2.00" height="3.90" fill="#1436f8" />
<rect x="257.00" y="568.00" width="1.00" height="13.00" fill="#1453f0" />
<rect x="259.00" y="539.00" width="2.00" height="16.00" fill="#1447f3" />
<rect x="264.00" y="539.00" width="1.00" height="16.00" fill="#142bfb" />
<rect x="267.00" y="568.00" width="1.00" height="13.00" fill="#1454ef" />
<rect x="270.00" y="526.50" width="2.00" height="12.50" fill="#131cfb" />
<rect x="274.00" y="539.00" width="1.00" height="29.00" fill="#142efa" />
<rect x="279.00" y="555.00" width="1.00" height="13.00" fill="#1452f0" />
<rect x="280.00" y="555.00" width="1.00" height="26.00" fill="#143cf6" />
<rect x="283.00" y="526.50" width="1.00" height="25.50" fill="#142cfb" />
<rect x="285.00" y="530.40" width="1.00" height="21.60" fill="#142afc" />
<rect x="292.00" y="526.50" width="1.50" height="3.90" fill="#1421fe" />
<rect x="294.00" y="530.40" width="1.00" height="24.60" fill="#143ff6" />
<rect x="295.50" y="552.00" width="1.00" height="3.00" fill="#1450f1" />
<rect x="299.50" y="552.00" width="1.00" height="3.00" fill="#1433f9" />
<rect x="304.50" y="526.50" width="2.00" height="25.50" fill="#131dfd" />
<rect x="306.00" y="539.00" width="3.00" height="13.00" fill="#1439f7" />
<rect x="308.00" y="526.50" width="1.00" height="3.90" fill="#111af6" />
<rect x="309.50" y="526.50" width="2.00" height="12.50" fill="#1424fd" />
<rect x="310.50" y="555.00" width="1.00" height="13.00" fill="#1450f1" />
<rect x="312.50" y="530.40" width="1.00" height="24.60" fill="#1427fc" />
<rect x="315.50" y="552.00" width="1.00" height="16.00" fill="#1443f4" />
<rect x="320.00" y="526.50" width="2.00" height="25.50" fill="#1434f9" />
<rect x="327.00" y="521.50" width="1.50" height="8.90" fill="#1426fd" />
<rect x="334.00" y="539.00" width="1.50" height="13.00" fill="#143bf7" />
<rect x="337.00" y="526.50" width="3.00" height="12.50" fill="#111af6" />
<rect x="340.00" y="539.00" width="1.00" height="16.00" fill="#1449f3" />
<rect x="343.50" y="539.00" width="3.00" height="13.00" fill="#143bf7" />
<rect x="345.00" y="539.00" width="1.00" height="16.00" fill="#143af7" />
<rect x="347.00" y="555.00" width="1.00" height="26.00" fill="#1442f5" />
<rect x="349.50" y="552.00" width="1.00" height="3.00" fill="#1441f5" />
<rect x="352.50" y="539.00" width="1.00" height="16.00" fill="#1442f5" />
<rect x="355.00" y="539.00" width="1.00" height="16.00" fill="#1445f4" />
<rect x="359.00" y="539.00" width="1.00" height="13.00" fill="#1431fa" />
<rect x="361.50" y="530.40" width="1.50" height="8.60" fill="#143ef6" />
<rect x="363.50" y="530.40" width="1.50" height="8.60" fill="#1434f9" />
<rect x="367.50" y="539.00" width="2.00" height="16.00" fill="#143ef6" />
<rect x="370.50" y="521.50" width="1.00" height="17.50" fill="#1420fe" />
<rect x="373.50" y="530.40" width="3.00" height="8.60" fill="#1422fe" />
<rect x="379.00" y="539.00" width="3.00" height="16.00" fill="#143ef6" />
<rect x="381.00" y="526.50" width="1.00" height="28.50" fill="#1436f8" />
<rect x="383.00" y="530.40" width="1.50" height="8.60" fill="#143ef6" />
<rect x="384.00" y="539.00" width="1.00" height="16.00" fill="#1443f5" />
<rect x="386.00" y="530.40" width="1.50" height="21.60" fill="#1432f9" />
<rect x="388.00" y="568.00" width="2.00" height="13.00" fill="#1445f4" />
<rect x="390.50" y="555.00" width="2.00" height="26.00" fill="#1454ef" />
<rect x="392.50" y="539.00" width="2.00" height="13.00" fill="#143ff5" />
<rect x="394.50" y="530.40" width="1.50" height="8.60" fill="#1440f5" />
<rect x="400.00" y="539.00" width="1.00" height="29.00" fill="#142cfb" />
<rect x="403.00" y="530.40" width="1.00" height="37.60" fill="#1433f9" />
<rect x="404.00" y="539.00" width="1.00" height="29.00" fill="#1437f8" />
<rect x="406.50" y="539.00" width="2.00" height="16.00" fill="#143ff6" />
<rect x="409.00" y="555.00" width="1.00" height="26.00" fill="#1457ef" />
<rect x="410.00" y="530.40" width="2.00" height="8.60" fill="#1429fc" />
<rect x="412.00" y="521.50" width="1.00" height="30.50" fill="#1018f3" />
<rect x="416.00" y="539.00" width="1.00" height="16.00" fill="#143df6" />
<rect x="418.00" y="539.00" width="1.00" height="16.00" fill="#1439f7" />
<rect x="420.00" y="539.00" width="1.00" height="16.00" fill="#142ffa" />
<rect x="422.00" y="568.00" width="1.00" height="13.00" fill="#1452f0" />
<rect x="427.50" y="530.40" width="1.00" height="8.60" fill="#1440f5" />
<rect x="430.50" y="539.00" width="1.00" height="13.00" fill="#1434f9" />
<rect x="433.50" y="552.00" width="1.00" height="16.00" fill="#144ff1" />
<rect x="435.00" y="526.50" width="1.00" height="25.50" fill="#131cfb" />
<rect x="438.00" y="530.40" width="2.00" height="24.60" fill="#142afb" />
<rect x="441.00" y="526.50" width="1.00" height="12.50" fill="#121bf9" />
<rect x="446.00" y="530.40" width="1.00" height="24.60" fill="#143cf6" />
<rect x="449.50" y="526.50" width="1.00" height="12.50" fill="#141efe" />
<rect x="451.50" y="539.00" width="1.00" height="42.00" fill="#1429fc" />
<rect x="454.50" y="530.40" width="1.00" height="21.60" fill="#1434f9" />
<rect x="461.50" y="530.40" width="1.00" height="8.60" fill="#142afc" />
<rect x="466.00" y="539.00" width="1.00" height="13.00" fill="#1445f4" />
<rect x="475.00" y="526.50" width="2.00" height="3.90" fill="#1429fc" />
<rect x="476.00" y="526.50" width="3.00" height="12.50" fill="#131cfc" />
<rect x="478.00" y="526.50" width="1.00" height="3.90" fill="#1422fe" />
<rect x="479.00" y="526.50" width="1.00" height="3.90" fill="#1433f9" />
<rect x="482.00" y="539.00" width="1.50" height="29.00" fill="#1429fc" />
<rect x="484.00" y="555.00" width="1.00" height="26.00" fill="#1447f3" />
<rect x="487.00" y="539.00" width="1.50" height="13.00" fill="#1430fa" />
<rect x="491.00" y="539.00" width="1.00" height="29.00" fill="#142efa" />
<rect x="493.50" y="552.00" width="1.50" height="29.00" fill="#144ff1" />
<rect x="494.50" y="526.50" width="2.00" height="12.50" fill="#1430fa" />
<rect x="499.00" y="539.00" width="1.00" height="16.00" fill="#1439f7" />
<rect x="501.50" y="555.00" width="1.00" height="26.00" fill="#143ef6" />
<rect x="503.50" y="530.40" width="1.50" height="8.60" fill="#1422fe" />
<rect x="507.50" y="539.00" width="1.00" height="13.00" fill="#1445f4" />
<rect x="510.50" y="521.50" width="2.00" height="17.50" fill="#121bf9" />
<rect x="515.50" y="521.50" width="1.00" height="5.00" fill="#0e16ed" />
<rect x="520.50" y="539.00" width="1.00" height="42.00" fill="#142afc" />
<rect x="522.00" y="568.00" width="1.00" height="13.00" fill="#1442f5" />
<rect x="525.00" y="539.00" width="1.00" height="29.00" fill="#1443f5" />
<rect x="526.00" y="568.00" width="1.00" height="13.00" fill="#1450f1" />
<rect x="532.50" y="539.00" width="2.00" height="29.00" fill="#1432f9" />
<rect x="539.00" y="539.00" width="1.50" height="13.00" fill="#143af7" />
<rect x="542.50" y="568.00" width="1.00" height="13.00" fill="#145ced" />
<rect x="544.00" y="521.50" width="1.00" height="5.00" fill="#131cfc" />
<rect x="550.00" y="526.50" width="3.00" height="25.50" fill="#141fff" />
<rect x="553.00" y="526.50" width="2.00" height="12.50" fill="#111af6" />
<rect x="556.00" y="526.50" width="1.00" height="12.50" fill="#111af7" />
<rect x="564.00" y="552.00" width="2.00" height="16.00" fill="#1449f3" />
<rect x="566.00" y="555.00" width="2.00" height="26.00" fill="#144ef1" />
<rect x="570.50" y="568.00" width="1.00" height="13.00" fill="#145eed" />
<rect x="573.50" y="526.50" width="2.00" height="12.50" fill="#131dfd" />
<rect x="575.50" y="568.00" width="1.00" height="13.00" fill="#1454f0" />
<rect x="578.00" y="526.50" width="1.00" height="12.50" fill="#1437f8" />
<rect x="580.50" y="555.00" width="3.00" height="26.00" fill="#1452f0" />
<rect x="581.50" y="521.50" width="1.50" height="17.50" fill="#131cfa" />
<rect x="586.00" y="539.00" width="1.00" height="42.00" fill="#1440f5" />
<rect x="589.00" y="521.50" width="1.00" height="5.00" fill="#142dfb" />
<rect x="595.00" y="555.00" width="1.50" height="26.00" fill="#145aee" />
<rect x="597.00" y="526.50" width="2.00" height="12.50" fill="#131cfb" />
<rect x="604.50" y="526.50" width="1.00" height="25.50" fill="#1433f9" />
<rect x="607.00" y="521.50" width="3.00" height="30.50" fill="#142afb" />
<rect x="609.00" y="526.50" width="1.00" height="28.50" fill="#142efa" />
<rect x="611.00" y="530.40" width="1.50" height="21.60" fill="#142efa" />
<rect x="613.00" y="568.00" width="1.00" height="13.00" fill="#1457ef" />
<rect x="615.00" y="539.00" width="1.00" height="29.00" fill="#1430fa" />
<rect x="619.00" y="526.50" width="3.00" height="3.90" fill="#131cfa" />
<rect x="621.50" y="539.00" width="1.00" height="13.00" fill="#142cfb" />
<rect x="623.50" y="530.40" width="1.00" height="21.60" fill="#142ffa" />
<rect x="625.50" y="526.50" width="2.00" height="25.50" fill="#1428fc" />
<rect x="632.00" y="539.00" width="1.00" height="13.00" fill="#1448f3" />
<rect x="638.50" y="526.50" width="2.00" height="12.50" fill="#1422fe" />
<rect x="646.50" y="530.40" width="1.00" height="37.60" fill="#143cf6" />
<rect x="647.50" y="539.00" width="2.00" height="29.00" fill="#142afc" />
<rect x="653.50" y="539.00" width="1.00" height="42.00" fill="#1437f8" />
<rect x="657.50" y="552.00" width="1.00" height="3.00" fill="#1441f5" />
<rect x="663.00" y="568.00" width="1.00" height="13.00" fill="#1449f3" />
<rect x="665.50" y="555.00" width="1.00" height="13.00" fill="#144af2" />
<rect x="667.50" y="526.50" width="1.00" height="3.90" fill="#1436f8" />
<rect x="673.00" y="526.50" width="1.50" height="25.50" fill="#1438f8" />
<rect x="675.00" y="555.00" width="1.00" height="13.00" fill="#143cf7" />
<rect x="679.00" y="526.50" width="1.00" height="3.90" fill="#1435f8" />
<rect x="682.00" y="526.50" width="1.00" height="28.50" fill="#1435f9" />
<rect x="685.00" y="539.00" width="1.00" height="29.00" fill="#142efb" />
<rect x="686.50" y="539.00" width="1.00" height="29.00" fill="#1432f9" />
<rect x="689.50" y="539.00" width="2.00" height="29.00" fill="#1430fa" />
<rect x="691.00" y="539.00" width="1.00" height="29.00" fill="#1443f4" />
<rect x="700.00" y="530.40" width="1.50" height="37.60" fill="#1430fa" />
<rect x="702.50" y="568.00" width="1.00" height="13.00" fill="#1454ef" />
<rect x="704.50" y="539.00" width="1.50" height="13.00" fill="#1427fc" />
<rect x="710.50" y="526.50" width="1.00" height="28.50" fill="#1428fc" />
<rect x="713.50" y="539.00" width="1.00" height="42.00" fill="#1435f9" />
<rect x="714.50" y="521.50" width="1.00" height="5.00" fill="#142bfb" />
<rect x="718.50" y="539.00" width="3.00" height="42.00" fill="#1434f9" />
<rect x="720.50" y="539.00" width="1.00" height="16.00" fill="#142cfb" />
<rect x="725.00" y="526.50" width="1.00" height="12.50" fill="#142afc" />
<rect x="728.00" y="526.50" width="1.00" height="25.50" fill="#1438f8" />
<rect x="731.00" y="539.00" width="2.00" height="42.00" fill="#1443f4" />
<rect x="734.00" y="552.00" width="3.00" height="3.00" fill="#1437f8" />
<rect x="735.50" y="526.50" width="1.00" height="25.50" fill="#1421fe" />
<rect x="738.50" y="526.50" width="2.00" height="28.50" fill="#1436f8" />
<rect x="740.00" y="530.40" width="1.00" height="21.60" fill="#1424fd" />
<rect x="742.00" y="530.40" width="2.00" height="37.60" fill="#1430fa" />
<rect x="745.00" y="555.00" width="3.00" height="13.00" fill="#1443f4" />
<rect x="750.00" y="526.50" width="1.50" height="25.50" fill="#142dfb" />
<rect x="752.00" y="530.40" width="1.00" height="37.60" fill="#1428fc" />
<rect x="759.00" y="526.50" width="3.00" height="12.50" fill="#121af7" />
<rect x="761.50" y="530.40" width="1.50" height="8.60" fill="#142efa" />
<rect x="763.50" y="526.50" width="1.00" height="3.90" fill="#1435f8" />
<rect x="766.00" y="530.40" width="2.00" height="21.60" fill="#1436f8" />
<rect x="772.00" y="526.50" width="1.00" height="12.50" fill="#1435f8" />
<rect x="775.00" y="530.40" width="1.00" height="24.60" fill="#143ff6" />
<rect x="778.00" y="539.00" width="3.00" height="29.00" fill="#1434f9" />
<rect x="781.00" y="539.00" width="1.00" height="16.00" fill="#1441f5" />
<rect x="783.00" y="555.00" width="2.00" height="13.00" fill="#1451f0" />
<rect x="785.50" y="530.40" width="2.00" height="8.60" fill="#1425fd" />
<rect x="787.50" y="539.00" width="1.00" height="16.00" fill="#1436f8" />
<rect x="789.00" y="539.00" width="1.00" height="13.00" fill="#1441f5" />
<rect x="791.00" y="526.50" width="2.00" height="3.90" fill="#131dfd" />
<rect x="792.50" y="526.50" width="1.00" height="12.50" fill="#121bf9" />
<rect x="795.00" y="539.00" width="1.00" height="16.00" fill="#1442f5" />
<rect x="798.00" y="552.00" width="1.00" height="16.00" fill="#1438f8" />
<rect x="803.00" y="539.00" width="1.50" height="16.00" fill="#143bf7" />
<rect x="805.50" y="521.50" width="1.00" height="30.50" fill="#142ffa" />
<rect x="806.50" y="539.00" width="1.00" height="29.00" fill="#1444f4" />
<rect x="809.50" y="555.00" width="1.00" height="26.00" fill="#143af7" />
<rect x="811.00" y="530.40" width="1.00" height="37.60" fill="#142ffa" />
<rect x="813.00" y="555.00" width="2.00" height="13.00" fill="#1454f0" />
<rect x="815.00" y="568.00" width="3.00" height="13.00" fill="#1464eb" />
<rect x="816.00" y="539.00" width="3.00" height="29.00" fill="#1439f7" />
<rect x="819.50" y="539.00" width="1.00" height="13.00" fill="#143cf6" />
<rect x="822.50" y="526.50" width="1.00" height="12.50" fill="#1434f9" />
<rect x="825.50" y="539.00" width="2.00" height="29.00" fill="#1436f8" />
<rect x="827.00" y="568.00" width="1.00" height="13.00" fill="#1444f4" />
<rect x="832.00" y="552.00" width="1.00" height="29.00" fill="#1432f9" />
<rect x="835.00" y="521.50" width="2.00" height="30.50" fill="#0f17f0" />
<rect x="838.50" y="530.40" width="1.50" height="24.60" fill="#1424fd" />
<rect x="845.50" y="552.00" width="1.00" height="3.00" fill="#1430fa" />
<rect x="848.00" y="530.40" width="1.50" height="21.60" fill="#1438f7" />
<rect x="852.50" y="530.40" width="1.00" height="21.60" fill="#1440f5" />
<rect x="853.50" y="530.40" width="2.00" height="24.60" fill="#1435f9" />
<rect x="858.50" y="526.50" width="3.00" height="3.90" fill="#1428fc" />
<rect x="861.50" y="521.50" width="1.00" height="17.50" fill="#1427fc" />
<rect x="863.50" y="555.00" width="1.00" height="26.00" fill="#1440f5" />
<rect x="864.50" y="526.50" width="1.00" height="25.50" fill="#1437f8" />
<rect x="865.50" y="526.50" width="1.00" height="12.50" fill="#121cfa" />
<rect x="868.50" y="526.50" width="1.00" height="12.50" fill="#141fff" />
<rect x="872.00" y="568.00" width="1.00" height="13.00" fill="#144ff1" />
<rect x="879.50" y="526.50" width="1.00" height="25.50" fill="#111af7" />
<rect x="882.00" y="530.40" width="1.00" height="21.60" fill="#1429fc" />
<rect x="883.00" y="530.40" width="1.00" height="8.60" fill="#1433f9" />
<rect x="889.50" y="552.00" width="1.00" height="3.00" fill="#1430fa" />
<rect x="894.00" y="539.00" width="1.00" height="13.00" fill="#1432f9" />
<rect x="899.00" y="539.00" width="1.00" height="13.00" fill="#1449f3" />
<rect x="900.50" y="530.40" width="2.00" height="24.60" fill="#1421fe" />
<rect x="903.50" y="555.00" width="2.00" height="26.00" fill="#144af3" />
<rect x="909.50" y="539.00" width="1.50" height="16.00" fill="#143df6" />
<rect x="913.00" y="555.00" width="1.50" height="13.00" fill="#1456ef" />
<rect x="916.00" y="555.00" width="1.00" height="26.00" fill="#143ef6" />
<rect x="918.00" y="530.40" width="1.00" height="8.60" fill="#1437f8" />
<rect x="919.50" y="539.00" width="1.00" height="16.00" fill="#142bfb" />
<rect x="925.50" y="526.50" width="2.00" height="3.90" fill="#142bfb" />
<rect x="926.50" y="526.50" width="1.50" height="12.50" fill="#142afb" />
<rect x="929.50" y="552.00" width="1.00" height="29.00" fill="#143af7" />
<rect x="930.50" y="526.50" width="1.00" height="3.90" fill="#142efa" />
<rect x="932.50" y="539.00" width="1.00" height="42.00" fill="#1437f8" />
<rect x="937.00" y="568.00" width="2.00" height="13.00" fill="#145ced" />
<rect x="939.50" y="539.00" width="1.00" height="16.00" fill="#1438f7" />
<rect x="940.50" y="539.00" width="2.00" height="13.00" fill="#1436f8" />
<rect x="943.00" y="552.00" width="1.50" height="29.00" fill="#1442f5" />
<rect x="944.50" y="552.00" width="1.50" height="16.00" fill="#144df1" />
<rect x="947.50" y="526.50" width="1.50" height="3.90" fill="#111af6" />
<rect x="950.50" y="539.00" width="1.00" height="29.00" fill="#1442f5" />
<rect x="953.50" y="568.00" width="1.00" height="13.00" fill="#1443f4" />
<rect x="956.00" y="526.50" width="1.00" height="3.90" fill="#1432f9" />
<rect x="957.50" y="568.00" width="2.00" height="13.00" fill="#1452f0" />
<rect x="958.50" y="539.00" width="1.50" height="13.00" fill="#1438f8" />
<rect x="962.50" y="530.40" width="1.50" height="37.60" fill="#1426fd" />
<rect x="963.50" y="530.40" width="1.50" height="21.60" fill="#142cfb" />
<rect x="965.50" y="568.00" width="1.50" height="13.00" fill="#1443f4" />
<rect x="968.50" y="530.40" width="1.50" height="21.60" fill="#1429fc" />
<rect x="970.50" y="552.00" width="1.50" height="3.00" fill="#1442f5" />
<rect x="971.50" y="555.00" width="1.00" height="26.00" fill="#143cf6" />
<rect x="979.00" y="526.50" width="1.00" height="25.50" fill="#121cfa" />
<rect x="980.00" y="521.50" width="1.00" height="5.00" fill="#142bfb" />
<rect x="983.00" y="521.50" width="1.00" height="30.50" fill="#1429fc" />
<rect x="986.50" y="552.00" width="2.00" height="3.00" fill="#144ff1" />
<rect x="988.00" y="568.00" width="1.00" height="13.00" fill="#1457ef" />
<rect x="989.50" y="568.00" width="3.00" height="13.00" fill="#1446f4" />
<rect x="991.00" y="526.50" width="2.00" height="12.50" fill="#1438f8" />
<rect x="993.00" y="539.00" width="1.00" height="29.00" fill="#143bf7" />
<rect x="995.50" y="526.50" width="2.00" height="12.50" fill="#131cfa" />
<rect x="997.50" y="539.00" width="1.00" height="42.00" fill="#142dfb" />
<rect x="1001.00" y="555.00" width="1.00" height="26.00" fill="#1449f3" />
<rect x="1002.50" y="568.00" width="2.00" height="13.00" fill="#145ded" />
<rect x="1007.50" y="526.50" width="1.00" height="25.50" fill="#1430fa" />
<rect x="1009.00" y="539.00" width="1.00" height="13.00" fill="#1427fc" />
<rect x="1011.50" y="526.50" width="1.00" height="3.90" fill="#131cfb" />
<rect x="1017.00" y="521.50" width="1.00" height="5.00" fill="#141eff" />
<rect x="1019.50" y="526.50" width="2.00" height="28.50" fill="#1429fc" />
<rect x="1021.50" y="521.50" width="1.00" height="30.50" fill="#1423fe" />
<rect x="1023.00" y="526.50" width="1.00" height="28.50" fill="#131dfd" />
<rect x="1024.50" y="521.50" width="1.00" height="5.00" fill="#0f16ee" />
<rect x="1030.50" y="530.40" width="1.00" height="21.60" fill="#1436f8" />
<rect x="1033.50" y="530.40" width="2.00" height="24.60" fill="#1430fa" />
<rect x="1043.00" y="539.00" width="1.00" height="42.00" fill="#1440f5" />
<rect x="1047.00" y="555.00" width="1.50" height="13.00" fill="#1445f4" />
<rect x="1048.00" y="539.00" width="1.00" height="13.00" fill="#1447f3" />
<rect x="1049.50" y="530.40" width="2.00" height="8.60" fill="#141fff" />
<rect x="1050.50" y="530.40" width="1.00" height="8.60" fill="#1426fd" />
<rect x="1054.50" y="568.00" width="2.00" height="13.00" fill="#1448f3" />
<rect x="1056.50" y="530.40" width="1.00" height="8.60" fill="#1436f8" />
<rect x="1058.50" y="552.00" width="1.00" height="29.00" fill="#1441f5" />
<rect x="1060.50" y="526.50" width="1.00" height="25.50" fill="#1429fc" />
<rect x="1062.00" y="521.50" width="1.00" height="8.90" fill="#131cfb" />
<rect x="1065.00" y="555.00" width="1.50" height="26.00" fill="#1439f7" />
<rect x="1068.00" y="526.50" width="1.00" height="25.50" fill="#1438f8" />
<rect x="1071.00" y="539.00" width="3.00" height="16.00" fill="#143ff6" />
<rect x="1076.00" y="539.00" width="1.50" height="13.00" fill="#1446f4" />
<rect x="1080.00" y="539.00" width="2.00" height="29.00" fill="#143df6" />
<rect x="176.45" y="584.00" width="1.00" height="22.00" fill="#1451f0" />
<rect x="396.12" y="584.00" width="1.00" height="22.00" fill="#1467e8" />
<rect x="913.54" y="606.00" width="1.00" height="13.00" fill="#1276d7" />
<rect x="827.68" y="584.00" width="1.00" height="22.00" fill="#1464eb" />
<rect x="1019.14" y="606.00" width="1.00" height="13.00" fill="#127dcf" />
<rect x="980.27" y="584.00" width="2.00" height="22.00" fill="#1465ea" />
<rect x="126.12" y="606.00" width="1.50" height="24.00" fill="#108bbf" />
<rect x="912.02" y="584.00" width="1.00" height="22.00" fill="#1453f0" />
<rect x="357.01" y="606.00" width="1.00" height="24.00" fill="#1090b5" />
<rect x="1042.59" y="606.00" width="1.00" height="24.00" fill="#1089c2" />
<rect x="173.89" y="606.00" width="1.00" height="24.00" fill="#1185c6" />
<rect x="757.47" y="606.00" width="1.00" height="13.00" fill="#127bd1" />
<rect x="159.92" y="606.00" width="1.00" height="13.00" fill="#127ad2" />
<rect x="542.04" y="584.00" width="1.00" height="22.00" fill="#145ded" />
<rect x="398.85" y="606.00" width="1.00" height="13.00" fill="#1182c9" />
<rect x="280.54" y="606.00" width="1.00" height="24.00" fill="#1087c4" />
<rect x="891.17" y="584.00" width="2.00" height="22.00" fill="#1462ec" />
<rect x="981.85" y="584.00" width="1.00" height="22.00" fill="#1460ec" />
<rect x="1040.22" y="584.00" width="1.00" height="22.00" fill="#1462ec" />
<rect x="750.55" y="584.00" width="1.00" height="22.00" fill="#1460ec" />
<rect x="483.58" y="606.00" width="1.00" height="13.00" fill="#117ece" />
<rect x="878.86" y="606.00" width="2.00" height="24.00" fill="#1184c6" />
<rect x="311.53" y="606.00" width="1.00" height="13.00" fill="#117ecd" />
<rect x="293.15" y="606.00" width="1.00" height="13.00" fill="#127bd1" />
<rect x="459.38" y="606.00" width="1.00" height="13.00" fill="#117fcc" />
<rect x="352.95" y="584.00" width="1.00" height="22.00" fill="#144ef1" />
<rect x="1041.16" y="584.00" width="1.00" height="22.00" fill="#145ded" />
<rect x="443.69" y="584.00" width="2.00" height="22.00" fill="#1461ec" />
<rect x="144.23" y="606.00" width="1.50" height="13.00" fill="#1183c8" />
<rect x="827.20" y="584.00" width="1.00" height="22.00" fill="#144ef1" />
<rect x="664.46" y="584.00" width="1.00" height="22.00" fill="#1455ef" />
<rect x="205.46" y="584.00" width="1.00" height="22.00" fill="#1458ee" />
<rect x="584.36" y="606.00" width="1.50" height="13.00" fill="#127cd1" />
<rect x="491.82" y="584.00" width="2.00" height="22.00" fill="#1468e6" />
<rect x="718.41" y="584.00" width="1.50" height="22.00" fill="#1464eb" />
<rect x="1004.50" y="606.00" width="1.00" height="24.00" fill="#1186c5" />
<rect x="1012.88" y="606.00" width="1.50" height="24.00" fill="#1182c9" />
<rect x="792.00" y="606.00" width="1.00" height="13.00" fill="#1279d4" />
<rect x="408.38" y="584.00" width="1.00" height="22.00" fill="#1466e8" />
<rect x="830.43" y="606.00" width="1.00" height="24.00" fill="#108bbf" />
<rect x="563.04" y="584.00" width="1.00" height="22.00" fill="#1466e9" />
<rect x="829.81" y="584.00" width="1.00" height="22.00" fill="#1463eb" />
<rect x="105.06" y="584.00" width="1.00" height="22.00" fill="#1466e9" />
<rect x="382.04" y="584.00" width="1.50" height="22.00" fill="#145eed" />
<rect x="814.74" y="606.00" width="1.50" height="13.00" fill="#1181ca" />
<rect x="989.07" y="606.00" width="1.00" height="13.00" fill="#1277d6" />
<rect x="778.01" y="606.00" width="1.00" height="24.00" fill="#1091b2" />
<rect x="262.50" y="606.00" width="1.00" height="24.00" fill="#1087c4" />
<rect x="428.37" y="606.00" width="1.00" height="13.00" fill="#127ad3" />
<rect x="1003.78" y="606.00" width="1.00" height="24.00" fill="#108fb7" />
<rect x="211.43" y="584.00" width="1.00" height="22.00" fill="#1468e6" />
<rect x="924.33" y="606.00" width="2.00" height="13.00" fill="#1186c4" />
<rect x="378.02" y="606.00" width="1.00" height="13.00" fill="#1277d5" />
<rect x="201.72" y="584.00" width="1.00" height="22.00" fill="#145eed" />
<rect x="362.99" y="606.00" width="1.00" height="13.00" fill="#117fcc" />
<rect x="405.25" y="584.00" width="2.00" height="22.00" fill="#1459ee" />
<rect x="576.09" y="584.00" width="1.00" height="22.00" fill="#1465ea" />
<rect x="652.01" y="584.00" width="2.00" height="22.00" fill="#145fec" />
<rect x="1033.59" y="584.00" width="1.00" height="22.00" fill="#145ced" />
<rect x="769.08" y="606.00" width="1.00" height="13.00" fill="#1181cb" />
<rect x="634.44" y="584.00" width="1.50" height="22.00" fill="#1450f1" />
<rect x="170.36" y="606.00" width="1.50" height="13.00" fill="#127bd1" />
<rect x="456.09" y="606.00" width="1.00" height="13.00" fill="#1273da" />
<rect x="340.16" y="584.00" width="1.50" height="22.00" fill="#1462eb" />
<rect x="280.92" y="606.00" width="1.00" height="13.00" fill="#117ecd" />
<rect x="1021.61" y="606.00" width="2.00" height="24.00" fill="#108eb8" />
<rect x="514.27" y="606.00" width="1.00" height="13.00" fill="#1279d3" />
<rect x="137.90" y="606.00" width="1.00" height="13.00" fill="#1279d3" />
<rect x="945.85" y="584.00" width="1.00" height="22.00" fill="#144cf2" />
<rect x="182.75" y="606.00" width="1.00" height="13.00" fill="#1278d5" />
<rect x="336.73" y="584.00" width="1.00" height="22.00" fill="#1453f0" />
<rect x="280.44" y="606.00" width="1.50" height="24.00" fill="#108ac0" />
<rect x="701.03" y="606.00" width="2.00" height="13.00" fill="#1274d9" />
<rect x="651.63" y="584.00" width="2.00" height="22.00" fill="#1464eb" />
<rect x="299.02" y="606.00" width="1.00" height="24.00" fill="#1089c1" />
<rect x="689.90" y="584.00" width="1.00" height="22.00" fill="#144ef1" />
<rect x="587.45" y="584.00" width="1.50" height="22.00" fill="#1467e8" />
<rect x="738.06" y="606.00" width="1.00" height="13.00" fill="#1277d6" />
<rect x="674.78" y="584.00" width="1.00" height="22.00" fill="#1466e9" />
<rect x="372.05" y="606.00" width="1.00" height="13.00" fill="#1180cc" />
<rect x="434.46" y="513.00" width="2.00" height="8.50" fill="#0e15ec" />
<rect x="668.81" y="513.00" width="2.00" height="8.50" fill="#0e15ec" />
<rect x="352.59" y="513.00" width="2.00" height="8.50" fill="#0e15ec" />
<rect x="324.20" y="513.00" width="2.00" height="8.50" fill="#0e15ec" />
<rect x="716.71" y="513.00" width="1.00" height="8.50" fill="#0e15ec" />
<rect x="308.47" y="513.00" width="2.00" height="8.50" fill="#0e15ec" />
<rect x="133.51" y="513.00" width="2.00" height="8.50" fill="#0e15ec" />
<rect x="269.38" y="513.00" width="1.00" height="8.50" fill="#0e15ec" />
<rect x="815.61" y="513.00" width="1.00" height="8.50" fill="#0e15ec" />
<rect x="1077.37" y="513.00" width="1.00" height="8.50" fill="#0e15ec" />
<rect x="627.18" y="513.00" width="2.00" height="8.50" fill="#0e15ec" />
<rect x="582.94" y="513.00" width="2.00" height="8.50" fill="#0e15ec" />
<rect x="652.56" y="513.00" width="1.00" height="8.50" fill="#0e15ec" />
<rect x="461.00" y="513.00" width="2.00" height="8.50" fill="#0e15ec" />
<rect x="276.00" y="630.00" width="48.00" height="61.00" fill="#d8606a" />
<rect x="276.00" y="618.00" width="2.00" height="12.00" fill="#d4da04" />
<rect x="276.00" y="618.00" width="2.00" height="4.00" fill="#bef00a" />
<rect x="338.00" y="630.00" width="4.00" height="61.00" fill="#d8606a" />
<rect x="272.00" y="685.50" width="70.00" height="5.50" fill="#d8606a" />
<rect x="324.00" y="647.00" width="14.00" height="9.00" fill="#1eb175" />
<rect x="324.00" y="656.00" width="14.00" height="8.00" fill="#4bcd50" />
<rect x="324.00" y="664.00" width="14.00" height="12.00" fill="#bef00a" />
<rect x="324.00" y="676.00" width="14.00" height="4.00" fill="#e6c000" />
<rect x="324.00" y="680.00" width="14.00" height="5.00" fill="#f44e0b" />
<rect x="326.00" y="630.00" width="2.00" height="17.00" fill="#17a981" />
<rect x="276.00" y="580.20" width="2.00" height="4.80" fill="#7bdf34" />
<rect x="282.00" y="580.20" width="3.00" height="4.80" fill="#10a08c" />
<rect x="286.50" y="580.20" width="4.00" height="4.80" fill="#3fc857" />
<rect x="292.00" y="580.20" width="4.00" height="4.80" fill="#10a08c" />
<rect x="296.50" y="580.20" width="2.00" height="4.80" fill="#10a08c" />
<rect x="299.50" y="580.20" width="4.00" height="4.80" fill="#bef00a" />
<rect x="309.50" y="580.20" width="3.00" height="4.80" fill="#bef00a" />
<rect x="313.00" y="580.20" width="2.00" height="4.80" fill="#3fc857" />
<rect x="316.50" y="580.20" width="1.00" height="4.80" fill="#3fc857" />
<rect x="319.00" y="580.20" width="1.50" height="4.80" fill="#bef00a" />
<rect x="320.50" y="580.20" width="4.00" height="4.80" fill="#7bdf34" />
<rect x="94.5" y="512.5" width="987" height="179" fill="none" stroke="#222" stroke-width="1"/>
<line x1="136.5" y1="688" x2="136.5" y2="691" stroke="#444" stroke-width="1"/>
<line x1="177.5" y1="688" x2="177.5" y2="691" stroke="#444" stroke-width="1"/>
<line x1="218.5" y1="688" x2="218.5" y2="691" stroke="#444" stroke-width="1"/>
<line x1="259.5" y1="688" x2="259.5" y2="691" stroke="#444" stroke-width="1"/>
<line x1="300.5" y1="688" x2="300.5" y2="691" stroke="#444" stroke-width="1"/>
<line x1="342.5" y1="688" x2="342.5" y2="691" stroke="#444" stroke-width="1"/>
<line x1="383.5" y1="688" x2="383.5" y2="691" stroke="#444" stroke-width="1"/>
<line x1="424.5" y1="688" x2="424.5" y2="691" stroke="#444" stroke-width="1"/>
<line x1="465.5" y1="688" x2="465.5" y2="691" stroke="#444" stroke-width="1"/>
<line x1="506.5" y1="688" x2="506.5" y2="691" stroke="#444" stroke-width="1"/>
<line x1="547.5" y1="688" x2="547.5" y2="691" stroke="#444" stroke-width="1"/>
<line x1="588.5" y1="688" x2="588.5" y2="691" stroke="#444" stroke-width="1"/>
<line x1="629.5" y1="688" x2="629.5" y2="691" stroke="#444" stroke-width="1"/>
<line x1="670.5" y1="688" x2="670.5" y2="691" stroke="#444" stroke-width="1"/>
<line x1="711.5" y1="688" x2="711.5" y2="691" stroke="#444" stroke-width="1"/>
<line x1="752.5" y1="688" x2="752.5" y2="691" stroke="#444" stroke-width="1"/>
<line x1="793.5" y1="688" x2="793.5" y2="691" stroke="#444" stroke-width="1"/>
<line x1="834.5" y1="688" x2="834.5" y2="691" stroke="#444" stroke-width="1"/>
<line x1="876.5" y1="688" x2="876.5" y2="691" stroke="#444" stroke-width="1"/>
<line x1="917.5" y1="688" x2="917.5" y2="691" stroke="#444" stroke-width="1"/>
<line x1="958.5" y1="688" x2="958.5" y2="691" stroke="#444" stroke-width="1"/>
<line x1="999.5" y1="688" x2="999.5" y2="691" stroke="#444" stroke-width="1"/>
<line x1="1040.5" y1="688" x2="1040.5" y2="691" stroke="#444" stroke-width="1"/>
<text x="0" y="0" transform="translate(8.70,538.00) scale(0.88,1)" font-size="12.8" text-anchor="start" fill="#383838" textLength="75.23" lengthAdjust="spacing" >LEMMS Ions</text>
<line x1="91" y1="686.50" x2="95" y2="686.50" stroke="#222" stroke-width="1"/>
<line x1="91" y1="680.50" x2="95" y2="680.50" stroke="#222" stroke-width="1"/>
<line x1="91" y1="675.50" x2="95" y2="675.50" stroke="#222" stroke-width="1"/>
<line x1="91" y1="671.50" x2="95" y2="671.50" stroke="#222" stroke-width="1"/>
<line x1="91" y1="667.50" x2="95" y2="667.50" stroke="#222" stroke-width="1"/>
<line x1="91" y1="664.50" x2="95" y2="664.50" stroke="#222" stroke-width="1"/>
<line x1="91" y1="661.50" x2="95" y2="661.50" stroke="#222" stroke-width="1"/>
<line x1="87" y1="659.50" x2="95" y2="659.50" stroke="#222" stroke-width="1"/>
<line x1="91" y1="643.50" x2="95" y2="643.50" stroke="#222" stroke-width="1"/>
<line x1="91" y1="634.50" x2="95" y2="634.50" stroke="#222" stroke-width="1"/>
<line x1="91" y1="628.50" x2="95" y2="628.50" stroke="#222" stroke-width="1"/>
<line x1="91" y1="623.50" x2="95" y2="623.50" stroke="#222" stroke-width="1"/>
<line x1="91" y1="619.50" x2="95" y2="619.50" stroke="#222" stroke-width="1"/>
<line x1="91" y1="615.50" x2="95" y2="615.50" stroke="#222" stroke-width="1"/>
<line x1="91" y1="612.50" x2="95" y2="612.50" stroke="#222" stroke-width="1"/>
<line x1="91" y1="610.50" x2="95" y2="610.50" stroke="#222" stroke-width="1"/>
<line x1="87" y1="607.50" x2="95" y2="607.50" stroke="#222" stroke-width="1"/>
<line x1="91" y1="592.50" x2="95" y2="592.50" stroke="#222" stroke-width="1"/>
<line x1="91" y1="583.50" x2="95" y2="583.50" stroke="#222" stroke-width="1"/>
<line x1="91" y1="576.50" x2="95" y2="576.50" stroke="#222" stroke-width="1"/>
<line x1="91" y1="571.50" x2="95" y2="571.50" stroke="#222" stroke-width="1"/>
<line x1="91" y1="567.50" x2="95" y2="567.50" stroke="#222" stroke-width="1"/>
<line x1="91" y1="563.50" x2="95" y2="563.50" stroke="#222" stroke-width="1"/>
<line x1="91" y1="560.50" x2="95" y2="560.50" stroke="#222" stroke-width="1"/>
<line x1="91" y1="558.50" x2="95" y2="558.50" stroke="#222" stroke-width="1"/>
<line x1="87" y1="555.50" x2="95" y2="555.50" stroke="#222" stroke-width="1"/>
<line x1="91" y1="540.50" x2="95" y2="540.50" stroke="#222" stroke-width="1"/>
<line x1="91" y1="531.50" x2="95" y2="531.50" stroke="#222" stroke-width="1"/>
<line x1="91" y1="524.50" x2="95" y2="524.50" stroke="#222" stroke-width="1"/>
<line x1="91" y1="519.50" x2="95" y2="519.50" stroke="#222" stroke-width="1"/>
<line x1="91" y1="515.50" x2="95" y2="515.50" stroke="#222" stroke-width="1"/>
<text x="0" y="0" transform="translate(59.60,562.30) scale(0.88,1)" font-size="12.8" text-anchor="start" fill="#383838" textLength="16.59" lengthAdjust="spacing" >10</text>
<text x="0" y="0" transform="translate(75.10,556.20) scale(0.88,1)" font-size="12.8" text-anchor="start" fill="#383838" textLength="7.95" lengthAdjust="spacing" >4</text>
<text x="0" y="0" transform="translate(59.60,614.15) scale(0.88,1)" font-size="12.8" text-anchor="start" fill="#383838" textLength="16.59" lengthAdjust="spacing" >10</text>
<text x="0" y="0" transform="translate(75.10,608.05) scale(0.88,1)" font-size="12.8" text-anchor="start" fill="#383838" textLength="7.95" lengthAdjust="spacing" >3</text>
<text x="0" y="0" transform="translate(59.60,666.00) scale(0.88,1)" font-size="12.8" text-anchor="start" fill="#383838" textLength="16.59" lengthAdjust="spacing" >10</text>
<text x="0" y="0" transform="translate(75.10,659.90) scale(0.88,1)" font-size="12.8" text-anchor="start" fill="#383838" textLength="7.95" lengthAdjust="spacing" >2</text>
<text x="0" y="0" font-size="12.8" text-anchor="middle" fill="#383838" transform="translate(48.50,602.60) rotate(-90) scale(0.88,1)" textLength="81.82" lengthAdjust="spacing">Energy (keV)</text>
<rect x="1092.00" y="515.00" width="12.00" height="176.00" fill="url(#cbar)" />
<line x1="1104.5" y1="515" x2="1104.5" y2="691" stroke="#222" stroke-width="1"/>
<line x1="1104" y1="515.50" x2="1112.5" y2="515.50" stroke="#222" stroke-width="1"/>
<line x1="1104" y1="534.50" x2="1108.5" y2="534.50" stroke="#222" stroke-width="1"/>
<line x1="1104" y1="554.50" x2="1112.5" y2="554.50" stroke="#222" stroke-width="1"/>
<line x1="1104" y1="574.50" x2="1108.5" y2="574.50" stroke="#222" stroke-width="1"/>
<line x1="1104" y1="593.50" x2="1112.5" y2="593.50" stroke="#222" stroke-width="1"/>
<line x1="1104" y1="612.50" x2="1108.5" y2="612.50" stroke="#222" stroke-width="1"/>
<line x1="1104" y1="632.50" x2="1112.5" y2="632.50" stroke="#222" stroke-width="1"/>
<line x1="1104" y1="652.50" x2="1108.5" y2="652.50" stroke="#222" stroke-width="1"/>
<line x1="1104" y1="671.50" x2="1112.5" y2="671.50" stroke="#222" stroke-width="1"/>
<line x1="1104" y1="690.50" x2="1108.5" y2="690.50" stroke="#222" stroke-width="1"/>
<text x="0" y="0" transform="translate(1116.10,523.00) scale(0.88,1)" font-size="12.8" text-anchor="start" fill="#383838" textLength="16.59" lengthAdjust="spacing" >10</text>
<text x="0" y="0" transform="translate(1131.60,516.90) scale(0.88,1)" font-size="12.8" text-anchor="start" fill="#383838" textLength="7.95" lengthAdjust="spacing" >4</text>
<text x="0" y="0" transform="translate(1116.10,562.00) scale(0.88,1)" font-size="12.8" text-anchor="start" fill="#383838" textLength="16.59" lengthAdjust="spacing" >10</text>
<text x="0" y="0" transform="translate(1131.60,555.90) scale(0.88,1)" font-size="12.8" text-anchor="start" fill="#383838" textLength="7.95" lengthAdjust="spacing" >2</text>
<text x="0" y="0" transform="translate(1116.10,601.00) scale(0.88,1)" font-size="12.8" text-anchor="start" fill="#383838" textLength="16.59" lengthAdjust="spacing" >10</text>
<text x="0" y="0" transform="translate(1131.60,594.90) scale(0.88,1)" font-size="12.8" text-anchor="start" fill="#383838" textLength="7.95" lengthAdjust="spacing" >0</text>
<text x="0" y="0" transform="translate(1116.10,640.00) scale(0.88,1)" font-size="12.8" text-anchor="start" fill="#383838" textLength="16.59" lengthAdjust="spacing" >10</text>
<text x="0" y="0" transform="translate(1131.60,633.90) scale(0.88,1)" font-size="12.8" text-anchor="start" fill="#383838" textLength="16.59" lengthAdjust="spacing" >&#8722;2</text>
<text x="0" y="0" transform="translate(1116.10,679.00) scale(0.88,1)" font-size="12.8" text-anchor="start" fill="#383838" textLength="16.59" lengthAdjust="spacing" >10</text>
<text x="0" y="0" transform="translate(1131.60,672.90) scale(0.88,1)" font-size="12.8" text-anchor="start" fill="#383838" textLength="16.59" lengthAdjust="spacing" >&#8722;4</text>
<text x="0" y="0" font-size="12.8" text-anchor="middle" fill="#383838" transform="translate(1157.00,601.80) rotate(90) scale(0.88,1)" textLength="188.64" lengthAdjust="spacing">intensity 1/(s cm^2 ster keV)</text>
<text x="0" y="0" transform="translate(29.30,708.30) scale(0.88,1)" font-size="12.8" text-anchor="start" fill="#383838" textLength="56.48" lengthAdjust="spacing" >Sunlight?</text>
<rect x="95.00" y="695.00" width="253.00" height="15.50" fill="#ff0000" />
<rect x="348.00" y="695.00" width="460.00" height="15.50" fill="#00ff00" />
<rect x="808.00" y="695.00" width="273.00" height="15.50" fill="#ff0000" />
<rect x="95.5" y="695.5" width="985" height="15" fill="none" stroke="#222" stroke-width="1"/>
<line x1="348.5" y1="695" x2="348.5" y2="710" stroke="#222" stroke-width="1"/>
<line x1="808.5" y1="695" x2="808.5" y2="710" stroke="#222" stroke-width="1"/>
<line x1="136.5" y1="710" x2="136.5" y2="714" stroke="#222" stroke-width="1"/>
<line x1="177.5" y1="710" x2="177.5" y2="714" stroke="#222" stroke-width="1"/>
<line x1="218.5" y1="710" x2="218.5" y2="719" stroke="#222" stroke-width="1"/>
<line x1="259.5" y1="710" x2="259.5" y2="714" stroke="#222" stroke-width="1"/>
<line x1="300.5" y1="710" x2="300.5" y2="714" stroke="#222" stroke-width="1"/>
<line x1="342.5" y1="710" x2="342.5" y2="719" stroke="#222" stroke-width="1"/>
<line x1="383.5" y1="710" x2="383.5" y2="714" stroke="#222" stroke-width="1"/>
<line x1="424.5" y1="710" x2="424.5" y2="714" stroke="#222" stroke-width="1"/>
<line x1="465.5" y1="710" x2="465.5" y2="719" stroke="#222" stroke-width="1"/>
<line x1="506.5" y1="710" x2="506.5" y2="714" stroke="#222" stroke-width="1"/>
<line x1="547.5" y1="710" x2="547.5" y2="714" stroke="#222" stroke-width="1"/>
<line x1="588.5" y1="710" x2="588.5" y2="719" stroke="#222" stroke-width="1"/>
<line x1="629.5" y1="710" x2="629.5" y2="714" stroke="#222" stroke-width="1"/>
<line x1="670.5" y1="710" x2="670.5" y2="714" stroke="#222" stroke-width="1"/>
<line x1="711.5" y1="710" x2="711.5" y2="719" stroke="#222" stroke-width="1"/>
<line x1="752.5" y1="710" x2="752.5" y2="714" stroke="#222" stroke-width="1"/>
<line x1="793.5" y1="710" x2="793.5" y2="714" stroke="#222" stroke-width="1"/>
<line x1="834.5" y1="710" x2="834.5" y2="719" stroke="#222" stroke-width="1"/>
<line x1="876.5" y1="710" x2="876.5" y2="714" stroke="#222" stroke-width="1"/>
<line x1="917.5" y1="710" x2="917.5" y2="714" stroke="#222" stroke-width="1"/>
<line x1="958.5" y1="710" x2="958.5" y2="719" stroke="#222" stroke-width="1"/>
<line x1="999.5" y1="710" x2="999.5" y2="714" stroke="#222" stroke-width="1"/>
<line x1="1040.5" y1="710" x2="1040.5" y2="714" stroke="#222" stroke-width="1"/>
<line x1="1080.5" y1="710" x2="1080.5" y2="719" stroke="#222" stroke-width="1"/>
<text x="0" y="0" transform="translate(218.55,734.00) scale(0.88,1)" font-size="12.8" text-anchor="middle" fill="#383838" textLength="39.77" lengthAdjust="spacing" >03:00</text>
<text x="0" y="0" transform="translate(218.55,749.00) scale(0.88,1)" font-size="12.8" text-anchor="middle" fill="#383838" textLength="39.77" lengthAdjust="spacing" >19.28</text>
<text x="0" y="0" transform="translate(218.55,764.00) scale(0.88,1)" font-size="12.8" text-anchor="middle" fill="#383838" textLength="39.77" lengthAdjust="spacing" >32.72</text>
<text x="0" y="0" transform="translate(218.55,779.00) scale(0.88,1)" font-size="12.8" text-anchor="middle" fill="#383838" textLength="39.77" lengthAdjust="spacing" >76.66</text>
<text x="0" y="0" transform="translate(341.80,734.00) scale(0.88,1)" font-size="12.8" text-anchor="middle" fill="#383838" textLength="39.77" lengthAdjust="spacing" >06:00</text>
<text x="0" y="0" transform="translate(341.80,749.00) scale(0.88,1)" font-size="12.8" text-anchor="middle" fill="#383838" textLength="39.77" lengthAdjust="spacing" >19.36</text>
<text x="0" y="0" transform="translate(341.80,764.00) scale(0.88,1)" font-size="12.8" text-anchor="middle" fill="#383838" textLength="39.77" lengthAdjust="spacing" >32.25</text>
<text x="0" y="0" transform="translate(341.80,779.00) scale(0.88,1)" font-size="12.8" text-anchor="middle" fill="#383838" textLength="39.77" lengthAdjust="spacing" >74.85</text>
<text x="0" y="0" transform="translate(465.05,734.00) scale(0.88,1)" font-size="12.8" text-anchor="middle" fill="#383838" textLength="39.77" lengthAdjust="spacing" >09:00</text>
<text x="0" y="0" transform="translate(465.05,749.00) scale(0.88,1)" font-size="12.8" text-anchor="middle" fill="#383838" textLength="39.77" lengthAdjust="spacing" >19.44</text>
<text x="0" y="0" transform="translate(465.05,764.00) scale(0.88,1)" font-size="12.8" text-anchor="middle" fill="#383838" textLength="39.77" lengthAdjust="spacing" >31.76</text>
<text x="0" y="0" transform="translate(465.05,779.00) scale(0.88,1)" font-size="12.8" text-anchor="middle" fill="#383838" textLength="39.77" lengthAdjust="spacing" >72.99</text>
<text x="0" y="0" transform="translate(588.30,734.00) scale(0.88,1)" font-size="12.8" text-anchor="middle" fill="#383838" textLength="39.77" lengthAdjust="spacing" >12:00</text>
<text x="0" y="0" transform="translate(588.30,749.00) scale(0.88,1)" font-size="12.8" text-anchor="middle" fill="#383838" textLength="39.77" lengthAdjust="spacing" >19.52</text>
<text x="0" y="0" transform="translate(588.30,764.00) scale(0.88,1)" font-size="12.8" text-anchor="middle" fill="#383838" textLength="39.77" lengthAdjust="spacing" >31.25</text>
<text x="0" y="0" transform="translate(588.30,779.00) scale(0.88,1)" font-size="12.8" text-anchor="middle" fill="#383838" textLength="39.77" lengthAdjust="spacing" >71.08</text>
<text x="0" y="0" transform="translate(711.55,734.00) scale(0.88,1)" font-size="12.8" text-anchor="middle" fill="#383838" textLength="39.77" lengthAdjust="spacing" >15:00</text>
<text x="0" y="0" transform="translate(711.55,749.00) scale(0.88,1)" font-size="12.8" text-anchor="middle" fill="#383838" textLength="39.77" lengthAdjust="spacing" >19.60</text>
<text x="0" y="0" transform="translate(711.55,764.00) scale(0.88,1)" font-size="12.8" text-anchor="middle" fill="#383838" textLength="39.77" lengthAdjust="spacing" >30.74</text>
<text x="0" y="0" transform="translate(711.55,779.00) scale(0.88,1)" font-size="12.8" text-anchor="middle" fill="#383838" textLength="39.77" lengthAdjust="spacing" >69.12</text>
<text x="0" y="0" transform="translate(834.80,734.00) scale(0.88,1)" font-size="12.8" text-anchor="middle" fill="#383838" textLength="39.77" lengthAdjust="spacing" >18:00</text>
<text x="0" y="0" transform="translate(834.80,749.00) scale(0.88,1)" font-size="12.8" text-anchor="middle" fill="#383838" textLength="39.77" lengthAdjust="spacing" >19.68</text>
<text x="0" y="0" transform="translate(834.80,764.00) scale(0.88,1)" font-size="12.8" text-anchor="middle" fill="#383838" textLength="39.77" lengthAdjust="spacing" >30.20</text>
<text x="0" y="0" transform="translate(834.80,779.00) scale(0.88,1)" font-size="12.8" text-anchor="middle" fill="#383838" textLength="39.77" lengthAdjust="spacing" >67.11</text>
<text x="0" y="0" transform="translate(958.05,734.00) scale(0.88,1)" font-size="12.8" text-anchor="middle" fill="#383838" textLength="39.77" lengthAdjust="spacing" >21:00</text>
<text x="0" y="0" transform="translate(958.05,749.00) scale(0.88,1)" font-size="12.8" text-anchor="middle" fill="#383838" textLength="39.77" lengthAdjust="spacing" >19.76</text>
<text x="0" y="0" transform="translate(958.05,764.00) scale(0.88,1)" font-size="12.8" text-anchor="middle" fill="#383838" textLength="39.77" lengthAdjust="spacing" >29.66</text>
<text x="0" y="0" transform="translate(958.05,779.00) scale(0.88,1)" font-size="12.8" text-anchor="middle" fill="#383838" textLength="39.77" lengthAdjust="spacing" >65.05</text>
<text x="0" y="0" transform="translate(1081.30,734.00) scale(0.88,1)" font-size="12.8" text-anchor="middle" fill="#383838" textLength="39.77" lengthAdjust="spacing" >00:00</text>
<text x="0" y="0" transform="translate(1081.30,749.00) scale(0.88,1)" font-size="12.8" text-anchor="middle" fill="#383838" textLength="39.77" lengthAdjust="spacing" >19.85</text>
<text x="0" y="0" transform="translate(1081.30,764.00) scale(0.88,1)" font-size="12.8" text-anchor="middle" fill="#383838" textLength="39.77" lengthAdjust="spacing" >29.09</text>
<text x="0" y="0" transform="translate(1081.30,779.00) scale(0.88,1)" font-size="12.8" text-anchor="middle" fill="#383838" textLength="39.77" lengthAdjust="spacing" >62.95</text>
<text x="0" y="0" transform="translate(59.50,749.00) scale(0.88,1)" font-size="12.8" text-anchor="end" fill="#383838" textLength="49.43" lengthAdjust="spacing" >LT (hrs)</text>
<text x="0" y="0" transform="translate(59.50,764.00) scale(0.88,1)" font-size="12.8" text-anchor="end" fill="#383838" textLength="15.34" lengthAdjust="spacing" >Rs</text>
<text x="0" y="0" transform="translate(60.00,779.00) scale(0.88,1)" font-size="12.8" text-anchor="end" fill="#383838" textLength="52.84" lengthAdjust="spacing" >Dipole L</text>
<rect x="216.5" y="802.5" width="149" height="148" fill="none" stroke="#222" stroke-width="1"/>
<line x1="208" y1="802.5" x2="216" y2="802.5" stroke="#222" stroke-width="1"/>
<line x1="212" y1="804.5" x2="216" y2="804.5" stroke="#222" stroke-width="1"/>
<line x1="212" y1="806.5" x2="216" y2="806.5" stroke="#222" stroke-width="1"/>
<line x1="212" y1="808.5" x2="216" y2="808.5" stroke="#222" stroke-width="1"/>
<line x1="212" y1="809.5" x2="216" y2="809.5" stroke="#222" stroke-width="1"/>
<line x1="212" y1="811.5" x2="216" y2="811.5" stroke="#222" stroke-width="1"/>
<line x1="212" y1="813.5" x2="216" y2="813.5" stroke="#222" stroke-width="1"/>
<line x1="212" y1="815.5" x2="216" y2="815.5" stroke="#222" stroke-width="1"/>
<line x1="212" y1="817.5" x2="216" y2="817.5" stroke="#222" stroke-width="1"/>
<line x1="212" y1="819.5" x2="216" y2="819.5" stroke="#222" stroke-width="1"/>
<line x1="208" y1="820.5" x2="216" y2="820.5" stroke="#222" stroke-width="1"/>
<line x1="212" y1="822.5" x2="216" y2="822.5" stroke="#222" stroke-width="1"/>
<line x1="212" y1="824.5" x2="216" y2="824.5" stroke="#222" stroke-width="1"/>
<line x1="212" y1="826.5" x2="216" y2="826.5" stroke="#222" stroke-width="1"/>
<line x1="212" y1="828.5" x2="216" y2="828.5" stroke="#222" stroke-width="1"/>
<line x1="212" y1="830.5" x2="216" y2="830.5" stroke="#222" stroke-width="1"/>
<line x1="212" y1="832.5" x2="216" y2="832.5" stroke="#222" stroke-width="1"/>
<line x1="212" y1="833.5" x2="216" y2="833.5" stroke="#222" stroke-width="1"/>
<line x1="212" y1="835.5" x2="216" y2="835.5" stroke="#222" stroke-width="1"/>
<line x1="212" y1="837.5" x2="216" y2="837.5" stroke="#222" stroke-width="1"/>
<line x1="208" y1="839.5" x2="216" y2="839.5" stroke="#222" stroke-width="1"/>
<line x1="212" y1="841.5" x2="216" y2="841.5" stroke="#222" stroke-width="1"/>
<line x1="212" y1="843.5" x2="216" y2="843.5" stroke="#222" stroke-width="1"/>
<line x1="212" y1="845.5" x2="216" y2="845.5" stroke="#222" stroke-width="1"/>
<line x1="212" y1="846.5" x2="216" y2="846.5" stroke="#222" stroke-width="1"/>
<line x1="212" y1="848.5" x2="216" y2="848.5" stroke="#222" stroke-width="1"/>
<line x1="212" y1="850.5" x2="216" y2="850.5" stroke="#222" stroke-width="1"/>
<line x1="212" y1="852.5" x2="216" y2="852.5" stroke="#222" stroke-width="1"/>
<line x1="212" y1="854.5" x2="216" y2="854.5" stroke="#222" stroke-width="1"/>
<line x1="212" y1="856.5" x2="216" y2="856.5" stroke="#222" stroke-width="1"/>
<line x1="208" y1="858.5" x2="216" y2="858.5" stroke="#222" stroke-width="1"/>
<line x1="212" y1="859.5" x2="216" y2="859.5" stroke="#222" stroke-width="1"/>
<line x1="212" y1="861.5" x2="216" y2="861.5" stroke="#222" stroke-width="1"/>
<line x1="212" y1="863.5" x2="216" y2="863.5" stroke="#222" stroke-width="1"/>
<line x1="212" y1="865.5" x2="216" y2="865.5" stroke="#222" stroke-width="1"/>
<line x1="212" y1="867.5" x2="216" y2="867.5" stroke="#222" stroke-width="1"/>
<line x1="212" y1="869.5" x2="216" y2="869.5" stroke="#222" stroke-width="1"/>
<line x1="212" y1="870.5" x2="216" y2="870.5" stroke="#222" stroke-width="1"/>
<line x1="212" y1="872.5" x2="216" y2="872.5" stroke="#222" stroke-width="1"/>
<line x1="212" y1="874.5" x2="216" y2="874.5" stroke="#222" stroke-width="1"/>
<line x1="208" y1="876.5" x2="216" y2="876.5" stroke="#222" stroke-width="1"/>
<line x1="212" y1="878.5" x2="216" y2="878.5" stroke="#222" stroke-width="1"/>
<line x1="212" y1="880.5" x2="216" y2="880.5" stroke="#222" stroke-width="1"/>
<line x1="212" y1="882.5" x2="216" y2="882.5" stroke="#222" stroke-width="1"/>
<line x1="212" y1="883.5" x2="216" y2="883.5" stroke="#222" stroke-width="1"/>
<line x1="212" y1="885.5" x2="216" y2="885.5" stroke="#222" stroke-width="1"/>
<line x1="212" y1="887.5" x2="216" y2="887.5" stroke="#222" stroke-width="1"/>
<line x1="212" y1="889.5" x2="216" y2="889.5" stroke="#222" stroke-width="1"/>
<line x1="212" y1="891.5" x2="216" y2="891.5" stroke="#222" stroke-width="1"/>
<line x1="212" y1="893.5" x2="216" y2="893.5" stroke="#222" stroke-width="1"/>
<line x1="208" y1="894.5" x2="216" y2="894.5" stroke="#222" stroke-width="1"/>
<line x1="212" y1="896.5" x2="216" y2="896.5" stroke="#222" stroke-width="1"/>
<line x1="212" y1="898.5" x2="216" y2="898.5" stroke="#222" stroke-width="1"/>
<line x1="212" y1="900.5" x2="216" y2="900.5" stroke="#222" stroke-width="1"/>
<line x1="212" y1="902.5" x2="216" y2="902.5" stroke="#222" stroke-width="1"/>
<line x1="212" y1="904.5" x2="216" y2="904.5" stroke="#222" stroke-width="1"/>
<line x1="212" y1="906.5" x2="216" y2="906.5" stroke="#222" stroke-width="1"/>
<line x1="212" y1="907.5" x2="216" y2="907.5" stroke="#222" stroke-width="1"/>
<line x1="212" y1="909.5" x2="216" y2="909.5" stroke="#222" stroke-width="1"/>
<line x1="212" y1="911.5" x2="216" y2="911.5" stroke="#222" stroke-width="1"/>
<line x1="208" y1="913.5" x2="216" y2="913.5" stroke="#222" stroke-width="1"/>
<line x1="212" y1="915.5" x2="216" y2="915.5" stroke="#222" stroke-width="1"/>
<line x1="212" y1="917.5" x2="216" y2="917.5" stroke="#222" stroke-width="1"/>
<line x1="212" y1="919.5" x2="216" y2="919.5" stroke="#222" stroke-width="1"/>
<line x1="212" y1="920.5" x2="216" y2="920.5" stroke="#222" stroke-width="1"/>
<line x1="212" y1="922.5" x2="216" y2="922.5" stroke="#222" stroke-width="1"/>
<line x1="212" y1="924.5" x2="216" y2="924.5" stroke="#222" stroke-width="1"/>
<line x1="212" y1="926.5" x2="216" y2="926.5" stroke="#222" stroke-width="1"/>
<line x1="212" y1="928.5" x2="216" y2="928.5" stroke="#222" stroke-width="1"/>
<line x1="212" y1="930.5" x2="216" y2="930.5" stroke="#222" stroke-width="1"/>
<line x1="208" y1="932.5" x2="216" y2="932.5" stroke="#222" stroke-width="1"/>
<line x1="212" y1="933.5" x2="216" y2="933.5" stroke="#222" stroke-width="1"/>
<line x1="212" y1="935.5" x2="216" y2="935.5" stroke="#222" stroke-width="1"/>
<line x1="212" y1="937.5" x2="216" y2="937.5" stroke="#222" stroke-width="1"/>
<line x1="212" y1="939.5" x2="216" y2="939.5" stroke="#222" stroke-width="1"/>
<line x1="212" y1="941.5" x2="216" y2="941.5" stroke="#222" stroke-width="1"/>
<line x1="212" y1="943.5" x2="216" y2="943.5" stroke="#222" stroke-width="1"/>
<line x1="212" y1="944.5" x2="216" y2="944.5" stroke="#222" stroke-width="1"/>
<line x1="212" y1="946.5" x2="216" y2="946.5" stroke="#222" stroke-width="1"/>
<line x1="212" y1="948.5" x2="216" y2="948.5" stroke="#222" stroke-width="1"/>
<line x1="208" y1="950.5" x2="216" y2="950.5" stroke="#222" stroke-width="1"/>
<text x="0" y="0" transform="translate(201.50,806.40) scale(0.88,1)" font-size="12.8" text-anchor="end" fill="#383838" textLength="29.20" lengthAdjust="spacing" >&#8722;40.</text>
<text x="0" y="0" transform="translate(201.50,824.90) scale(0.88,1)" font-size="12.8" text-anchor="end" fill="#383838" textLength="29.20" lengthAdjust="spacing" >&#8722;30.</text>
<text x="0" y="0" transform="translate(201.50,843.40) scale(0.88,1)" font-size="12.8" text-anchor="end" fill="#383838" textLength="29.20" lengthAdjust="spacing" >&#8722;20.</text>
<text x="0" y="0" transform="translate(201.50,861.90) scale(0.88,1)" font-size="12.8" text-anchor="end" fill="#383838" textLength="29.20" lengthAdjust="spacing" >&#8722;10.</text>
<text x="0" y="0" transform="translate(201.50,880.40) scale(0.88,1)" font-size="12.8" text-anchor="end" fill="#383838" textLength="14.32" lengthAdjust="spacing" >0.</text>
<text x="0" y="0" transform="translate(201.50,898.90) scale(0.88,1)" font-size="12.8" text-anchor="end" fill="#383838" textLength="21.48" lengthAdjust="spacing" >10.</text>
<text x="0" y="0" transform="translate(201.50,917.40) scale(0.88,1)" font-size="12.8" text-anchor="end" fill="#383838" textLength="21.48" lengthAdjust="spacing" >20.</text>
<text x="0" y="0" transform="translate(201.50,935.90) scale(0.88,1)" font-size="12.8" text-anchor="end" fill="#383838" textLength="21.48" lengthAdjust="spacing" >30.</text>
<text x="0" y="0" transform="translate(201.50,954.40) scale(0.88,1)" font-size="12.8" text-anchor="end" fill="#383838" textLength="21.48" lengthAdjust="spacing" >40.</text>
<line x1="216.5" y1="950" x2="216.5" y2="958" stroke="#222" stroke-width="1"/>
<line x1="235.5" y1="950" x2="235.5" y2="954" stroke="#222" stroke-width="1"/>
<line x1="254.5" y1="950" x2="254.5" y2="958" stroke="#222" stroke-width="1"/>
<line x1="272.5" y1="950" x2="272.5" y2="954" stroke="#222" stroke-width="1"/>
<line x1="291.5" y1="950" x2="291.5" y2="958" stroke="#222" stroke-width="1"/>
<line x1="310.5" y1="950" x2="310.5" y2="954" stroke="#222" stroke-width="1"/>
<line x1="328.5" y1="950" x2="328.5" y2="958" stroke="#222" stroke-width="1"/>
<line x1="347.5" y1="950" x2="347.5" y2="954" stroke="#222" stroke-width="1"/>
<line x1="366.5" y1="950" x2="366.5" y2="958" stroke="#222" stroke-width="1"/>
<text x="0" y="0" transform="translate(208.35,973.30) scale(0.88,1)" font-size="12.8" text-anchor="start" fill="#383838" textLength="21.48" lengthAdjust="spacing" >40.</text>
<text x="0" y="0" transform="translate(245.85,973.30) scale(0.88,1)" font-size="12.8" text-anchor="start" fill="#383838" textLength="21.48" lengthAdjust="spacing" >20.</text>
<text x="0" y="0" transform="translate(286.50,973.30) scale(0.88,1)" font-size="12.8" text-anchor="start" fill="#383838" textLength="14.32" lengthAdjust="spacing" >0.</text>
<text x="0" y="0" transform="translate(317.45,973.30) scale(0.88,1)" font-size="12.8" text-anchor="start" fill="#383838" textLength="29.20" lengthAdjust="spacing" >&#8722;20.</text>
<text x="0" y="0" transform="translate(354.95,973.30) scale(0.88,1)" font-size="12.8" text-anchor="start" fill="#383838" textLength="29.20" lengthAdjust="spacing" >&#8722;40.</text>
<text x="0" y="0" transform="translate(291.50,991.70) scale(0.88,1)" font-size="12.8" text-anchor="middle" fill="#383838" textLength="42.61" lengthAdjust="spacing" >KSM-X</text>
<text x="0" y="0" font-size="12.8" text-anchor="middle" fill="#383838" transform="translate(165.50,876.00) rotate(-90) scale(0.88,1)" textLength="42.61" lengthAdjust="spacing">KSM-Y</text>
<g clip-path="url(#o1)">
<path d="M249,800 C236,830 225,850 225,876 C225,902 236,925 252,952" stroke="#0000ff" stroke-width="1.1" fill="none" stroke-dasharray="2.2,1.3" shape-rendering="geometricPrecision"/>
<path d="M285,800 C262,820 242,850 242,876 C242,905 262,932 284,952" stroke="#8b4513" stroke-width="1.1" fill="none" stroke-dasharray="2.2,1.3" shape-rendering="geometricPrecision"/>
<path d="M291.6,839.8 A36.9,37.7 0 1,1 291.5,839.8 Z" stroke="#000" stroke-width="1.15" fill="none" shape-rendering="geometricPrecision"/>
<path d="M281,868 C290,860 305,862 311,880 C315,893 313,910 310,920 C303,934 292,942 282,944.5" stroke="#000" stroke-width="1.15" fill="none" shape-rendering="geometricPrecision"/>
<ellipse cx="291.5" cy="876.5" rx="2" ry="1.5" fill="none" stroke="#000" stroke-width="1" shape-rendering="geometricPrecision"/>
<circle cx="310.5" cy="845.3" r="2.6" fill="#ff0000" shape-rendering="geometricPrecision"/>
<path d="M308.8,920.8 L302,930" stroke="#0000ff" stroke-width="4.2" stroke-linecap="round" shape-rendering="geometricPrecision"/>
<path d="M299.40000000000003,924.5 L307.8,932.9000000000001 M299.40000000000003,932.9000000000001 L307.8,924.5" stroke="#ff2020" stroke-width="1.2" shape-rendering="geometricPrecision"/>
</g>
<rect x="510.0" y="802.5" width="150.0" height="148" fill="none" stroke="#222" stroke-width="1"/>
<line x1="501.5" y1="802.5" x2="509.5" y2="802.5" stroke="#222" stroke-width="1"/>
<line x1="505.5" y1="804.5" x2="509.5" y2="804.5" stroke="#222" stroke-width="1"/>
<line x1="505.5" y1="806.5" x2="509.5" y2="806.5" stroke="#222" stroke-width="1"/>
<line x1="505.5" y1="808.5" x2="509.5" y2="808.5" stroke="#222" stroke-width="1"/>
<line x1="505.5" y1="809.5" x2="509.5" y2="809.5" stroke="#222" stroke-width="1"/>
<line x1="505.5" y1="811.5" x2="509.5" y2="811.5" stroke="#222" stroke-width="1"/>
<line x1="505.5" y1="813.5" x2="509.5" y2="813.5" stroke="#222" stroke-width="1"/>
<line x1="505.5" y1="815.5" x2="509.5" y2="815.5" stroke="#222" stroke-width="1"/>
<line x1="505.5" y1="817.5" x2="509.5" y2="817.5" stroke="#222" stroke-width="1"/>
<line x1="505.5" y1="819.5" x2="509.5" y2="819.5" stroke="#222" stroke-width="1"/>
<line x1="501.5" y1="820.5" x2="509.5" y2="820.5" stroke="#222" stroke-width="1"/>
<line x1="505.5" y1="822.5" x2="509.5" y2="822.5" stroke="#222" stroke-width="1"/>
<line x1="505.5" y1="824.5" x2="509.5" y2="824.5" stroke="#222" stroke-width="1"/>
<line x1="505.5" y1="826.5" x2="509.5" y2="826.5" stroke="#222" stroke-width="1"/>
<line x1="505.5" y1="828.5" x2="509.5" y2="828.5" stroke="#222" stroke-width="1"/>
<line x1="505.5" y1="830.5" x2="509.5" y2="830.5" stroke="#222" stroke-width="1"/>
<line x1="505.5" y1="832.5" x2="509.5" y2="832.5" stroke="#222" stroke-width="1"/>
<line x1="505.5" y1="833.5" x2="509.5" y2="833.5" stroke="#222" stroke-width="1"/>
<line x1="505.5" y1="835.5" x2="509.5" y2="835.5" stroke="#222" stroke-width="1"/>
<line x1="505.5" y1="837.5" x2="509.5" y2="837.5" stroke="#222" stroke-width="1"/>
<line x1="501.5" y1="839.5" x2="509.5" y2="839.5" stroke="#222" stroke-width="1"/>
<line x1="505.5" y1="841.5" x2="509.5" y2="841.5" stroke="#222" stroke-width="1"/>
<line x1="505.5" y1="843.5" x2="509.5" y2="843.5" stroke="#222" stroke-width="1"/>
<line x1="505.5" y1="845.5" x2="509.5" y2="845.5" stroke="#222" stroke-width="1"/>
<line x1="505.5" y1="846.5" x2="509.5" y2="846.5" stroke="#222" stroke-width="1"/>
<line x1="505.5" y1="848.5" x2="509.5" y2="848.5" stroke="#222" stroke-width="1"/>
<line x1="505.5" y1="850.5" x2="509.5" y2="850.5" stroke="#222" stroke-width="1"/>
<line x1="505.5" y1="852.5" x2="509.5" y2="852.5" stroke="#222" stroke-width="1"/>
<line x1="505.5" y1="854.5" x2="509.5" y2="854.5" stroke="#222" stroke-width="1"/>
<line x1="505.5" y1="856.5" x2="509.5" y2="856.5" stroke="#222" stroke-width="1"/>
<line x1="501.5" y1="858.5" x2="509.5" y2="858.5" stroke="#222" stroke-width="1"/>
<line x1="505.5" y1="859.5" x2="509.5" y2="859.5" stroke="#222" stroke-width="1"/>
<line x1="505.5" y1="861.5" x2="509.5" y2="861.5" stroke="#222" stroke-width="1"/>
<line x1="505.5" y1="863.5" x2="509.5" y2="863.5" stroke="#222" stroke-width="1"/>
<line x1="505.5" y1="865.5" x2="509.5" y2="865.5" stroke="#222" stroke-width="1"/>
<line x1="505.5" y1="867.5" x2="509.5" y2="867.5" stroke="#222" stroke-width="1"/>
<line x1="505.5" y1="869.5" x2="509.5" y2="869.5" stroke="#222" stroke-width="1"/>
<line x1="505.5" y1="870.5" x2="509.5" y2="870.5" stroke="#222" stroke-width="1"/>
<line x1="505.5" y1="872.5" x2="509.5" y2="872.5" stroke="#222" stroke-width="1"/>
<line x1="505.5" y1="874.5" x2="509.5" y2="874.5" stroke="#222" stroke-width="1"/>
<line x1="501.5" y1="876.5" x2="509.5" y2="876.5" stroke="#222" stroke-width="1"/>
<line x1="505.5" y1="878.5" x2="509.5" y2="878.5" stroke="#222" stroke-width="1"/>
<line x1="505.5" y1="880.5" x2="509.5" y2="880.5" stroke="#222" stroke-width="1"/>
<line x1="505.5" y1="882.5" x2="509.5" y2="882.5" stroke="#222" stroke-width="1"/>
<line x1="505.5" y1="883.5" x2="509.5" y2="883.5" stroke="#222" stroke-width="1"/>
<line x1="505.5" y1="885.5" x2="509.5" y2="885.5" stroke="#222" stroke-width="1"/>
<line x1="505.5" y1="887.5" x2="509.5" y2="887.5" stroke="#222" stroke-width="1"/>
<line x1="505.5" y1="889.5" x2="509.5" y2="889.5" stroke="#222" stroke-width="1"/>
<line x1="505.5" y1="891.5" x2="509.5" y2="891.5" stroke="#222" stroke-width="1"/>
<line x1="505.5" y1="893.5" x2="509.5" y2="893.5" stroke="#222" stroke-width="1"/>
<line x1="501.5" y1="894.5" x2="509.5" y2="894.5" stroke="#222" stroke-width="1"/>
<line x1="505.5" y1="896.5" x2="509.5" y2="896.5" stroke="#222" stroke-width="1"/>
<line x1="505.5" y1="898.5" x2="509.5" y2="898.5" stroke="#222" stroke-width="1"/>
<line x1="505.5" y1="900.5" x2="509.5" y2="900.5" stroke="#222" stroke-width="1"/>
<line x1="505.5" y1="902.5" x2="509.5" y2="902.5" stroke="#222" stroke-width="1"/>
<line x1="505.5" y1="904.5" x2="509.5" y2="904.5" stroke="#222" stroke-width="1"/>
<line x1="505.5" y1="906.5" x2="509.5" y2="906.5" stroke="#222" stroke-width="1"/>
<line x1="505.5" y1="907.5" x2="509.5" y2="907.5" stroke="#222" stroke-width="1"/>
<line x1="505.5" y1="909.5" x2="509.5" y2="909.5" stroke="#222" stroke-width="1"/>
<line x1="505.5" y1="911.5" x2="509.5" y2="911.5" stroke="#222" stroke-width="1"/>
<line x1="501.5" y1="913.5" x2="509.5" y2="913.5" stroke="#222" stroke-width="1"/>
<line x1="505.5" y1="915.5" x2="509.5" y2="915.5" stroke="#222" stroke-width="1"/>
<line x1="505.5" y1="917.5" x2="509.5" y2="917.5" stroke="#222" stroke-width="1"/>
<line x1="505.5" y1="919.5" x2="509.5" y2="919.5" stroke="#222" stroke-width="1"/>
<line x1="505.5" y1="920.5" x2="509.5" y2="920.5" stroke="#222" stroke-width="1"/>
<line x1="505.5" y1="922.5" x2="509.5" y2="922.5" stroke="#222" stroke-width="1"/>
<line x1="505.5" y1="924.5" x2="509.5" y2="924.5" stroke="#222" stroke-width="1"/>
<line x1="505.5" y1="926.5" x2="509.5" y2="926.5" stroke="#222" stroke-width="1"/>
<line x1="505.5" y1="928.5" x2="509.5" y2="928.5" stroke="#222" stroke-width="1"/>
<line x1="505.5" y1="930.5" x2="509.5" y2="930.5" stroke="#222" stroke-width="1"/>
<line x1="501.5" y1="932.5" x2="509.5" y2="932.5" stroke="#222" stroke-width="1"/>
<line x1="505.5" y1="933.5" x2="509.5" y2="933.5" stroke="#222" stroke-width="1"/>
<line x1="505.5" y1="935.5" x2="509.5" y2="935.5" stroke="#222" stroke-width="1"/>
<line x1="505.5" y1="937.5" x2="509.5" y2="937.5" stroke="#222" stroke-width="1"/>
<line x1="505.5" y1="939.5" x2="509.5" y2="939.5" stroke="#222" stroke-width="1"/>
<line x1="505.5" y1="941.5" x2="509.5" y2="941.5" stroke="#222" stroke-width="1"/>
<line x1="505.5" y1="943.5" x2="509.5" y2="943.5" stroke="#222" stroke-width="1"/>
<line x1="505.5" y1="944.5" x2="509.5" y2="944.5" stroke="#222" stroke-width="1"/>
<line x1="505.5" y1="946.5" x2="509.5" y2="946.5" stroke="#222" stroke-width="1"/>
<line x1="505.5" y1="948.5" x2="509.5" y2="948.5" stroke="#222" stroke-width="1"/>
<line x1="501.5" y1="950.5" x2="509.5" y2="950.5" stroke="#222" stroke-width="1"/>
<text x="0" y="0" transform="translate(495.00,806.40) scale(0.88,1)" font-size="12.8" text-anchor="end" fill="#383838" textLength="21.48" lengthAdjust="spacing" >40.</text>
<text x="0" y="0" transform="translate(495.00,824.90) scale(0.88,1)" font-size="12.8" text-anchor="end" fill="#383838" textLength="21.48" lengthAdjust="spacing" >30.</text>
<text x="0" y="0" transform="translate(495.00,843.40) scale(0.88,1)" font-size="12.8" text-anchor="end" fill="#383838" textLength="21.48" lengthAdjust="spacing" >20.</text>
<text x="0" y="0" transform="translate(495.00,861.90) scale(0.88,1)" font-size="12.8" text-anchor="end" fill="#383838" textLength="21.48" lengthAdjust="spacing" >10.</text>
<text x="0" y="0" transform="translate(495.00,880.40) scale(0.88,1)" font-size="12.8" text-anchor="end" fill="#383838" textLength="14.32" lengthAdjust="spacing" >0.</text>
<text x="0" y="0" transform="translate(495.00,898.90) scale(0.88,1)" font-size="12.8" text-anchor="end" fill="#383838" textLength="29.20" lengthAdjust="spacing" >&#8722;10.</text>
<text x="0" y="0" transform="translate(495.00,917.40) scale(0.88,1)" font-size="12.8" text-anchor="end" fill="#383838" textLength="29.20" lengthAdjust="spacing" >&#8722;20.</text>
<text x="0" y="0" transform="translate(495.00,935.90) scale(0.88,1)" font-size="12.8" text-anchor="end" fill="#383838" textLength="29.20" lengthAdjust="spacing" >&#8722;30.</text>
<text x="0" y="0" transform="translate(495.00,954.40) scale(0.88,1)" font-size="12.8" text-anchor="end" fill="#383838" textLength="29.20" lengthAdjust="spacing" >&#8722;40.</text>
<line x1="510.5" y1="950" x2="510.5" y2="958" stroke="#222" stroke-width="1"/>
<line x1="528.5" y1="950" x2="528.5" y2="954" stroke="#222" stroke-width="1"/>
<line x1="547.5" y1="950" x2="547.5" y2="958" stroke="#222" stroke-width="1"/>
<line x1="566.5" y1="950" x2="566.5" y2="954" stroke="#222" stroke-width="1"/>
<line x1="585.5" y1="950" x2="585.5" y2="958" stroke="#222" stroke-width="1"/>
<line x1="604.5" y1="950" x2="604.5" y2="954" stroke="#222" stroke-width="1"/>
<line x1="623.5" y1="950" x2="623.5" y2="958" stroke="#222" stroke-width="1"/>
<line x1="642.5" y1="950" x2="642.5" y2="954" stroke="#222" stroke-width="1"/>
<line x1="660.5" y1="950" x2="660.5" y2="958" stroke="#222" stroke-width="1"/>
<text x="0" y="0" transform="translate(501.85,973.30) scale(0.88,1)" font-size="12.8" text-anchor="start" fill="#383838" textLength="21.48" lengthAdjust="spacing" >40.</text>
<text x="0" y="0" transform="translate(539.60,973.30) scale(0.88,1)" font-size="12.8" text-anchor="start" fill="#383838" textLength="21.48" lengthAdjust="spacing" >20.</text>
<text x="0" y="0" transform="translate(580.50,973.30) scale(0.88,1)" font-size="12.8" text-anchor="start" fill="#383838" textLength="14.32" lengthAdjust="spacing" >0.</text>
<text x="0" y="0" transform="translate(611.70,973.30) scale(0.88,1)" font-size="12.8" text-anchor="start" fill="#383838" textLength="29.20" lengthAdjust="spacing" >&#8722;20.</text>
<text x="0" y="0" transform="translate(649.45,973.30) scale(0.88,1)" font-size="12.8" text-anchor="start" fill="#383838" textLength="29.20" lengthAdjust="spacing" >&#8722;40.</text>
<text x="0" y="0" transform="translate(585.50,991.70) scale(0.88,1)" font-size="12.8" text-anchor="middle" fill="#383838" textLength="42.61" lengthAdjust="spacing" >KSM-X</text>
<text x="0" y="0" font-size="12.8" text-anchor="middle" fill="#383838" transform="translate(459.00,876.00) rotate(-90) scale(0.88,1)" textLength="42.61" lengthAdjust="spacing">KSM-Z</text>
<g clip-path="url(#o2)">
<path d="M544,800 C531,830 519.5,850 519.5,877 C519.5,903 531,925 543,952" stroke="#0000ff" stroke-width="1.1" fill="none" stroke-dasharray="2.2,1.3" shape-rendering="geometricPrecision"/>
<path d="M578,800 C556,820 536,850 536,878 C536,905 556,932 578,952" stroke="#8b4513" stroke-width="1.1" fill="none" stroke-dasharray="2.2,1.3" shape-rendering="geometricPrecision"/>
<path d="M549,887 L623,866.7" stroke="#000" stroke-width="1.2" fill="none" shape-rendering="geometricPrecision"/>
<path d="M575,872.4 C585,869 595,872 600,875 C607,880 609,886 608,890 C607,896 604,900 600,903 C592,910 585,913 577,915" stroke="#000" stroke-width="1.15" fill="none" shape-rendering="geometricPrecision"/>
<ellipse cx="585" cy="876.8" rx="2" ry="1.5" fill="none" stroke="#000" stroke-width="1" shape-rendering="geometricPrecision"/>
<circle cx="604.4" cy="871.5" r="2.6" fill="#ff0000" shape-rendering="geometricPrecision"/>
<path d="M602.7,900.7 L598,906" stroke="#0000ff" stroke-width="4.2" stroke-linecap="round" shape-rendering="geometricPrecision"/>
<path d="M592.8,900.8 L601.2,909.2 M592.8,909.2 L601.2,900.8" stroke="#ff2020" stroke-width="1.2" shape-rendering="geometricPrecision"/>
</g>
<rect x="804.0" y="802.5" width="149.5" height="148" fill="none" stroke="#222" stroke-width="1"/>
<line x1="795.5" y1="802.5" x2="803.5" y2="802.5" stroke="#222" stroke-width="1"/>
<line x1="799.5" y1="804.5" x2="803.5" y2="804.5" stroke="#222" stroke-width="1"/>
<line x1="799.5" y1="806.5" x2="803.5" y2="806.5" stroke="#222" stroke-width="1"/>
<line x1="799.5" y1="808.5" x2="803.5" y2="808.5" stroke="#222" stroke-width="1"/>
<line x1="799.5" y1="809.5" x2="803.5" y2="809.5" stroke="#222" stroke-width="1"/>
<line x1="799.5" y1="811.5" x2="803.5" y2="811.5" stroke="#222" stroke-width="1"/>
<line x1="799.5" y1="813.5" x2="803.5" y2="813.5" stroke="#222" stroke-width="1"/>
<line x1="799.5" y1="815.5" x2="803.5" y2="815.5" stroke="#222" stroke-width="1"/>
<line x1="799.5" y1="817.5" x2="803.5" y2="817.5" stroke="#222" stroke-width="1"/>
<line x1="799.5" y1="819.5" x2="803.5" y2="819.5" stroke="#222" stroke-width="1"/>
<line x1="795.5" y1="820.5" x2="803.5" y2="820.5" stroke="#222" stroke-width="1"/>
<line x1="799.5" y1="822.5" x2="803.5" y2="822.5" stroke="#222" stroke-width="1"/>
<line x1="799.5" y1="824.5" x2="803.5" y2="824.5" stroke="#222" stroke-width="1"/>
<line x1="799.5" y1="826.5" x2="803.5" y2="826.5" stroke="#222" stroke-width="1"/>
<line x1="799.5" y1="828.5" x2="803.5" y2="828.5" stroke="#222" stroke-width="1"/>
<line x1="799.5" y1="830.5" x2="803.5" y2="830.5" stroke="#222" stroke-width="1"/>
<line x1="799.5" y1="832.5" x2="803.5" y2="832.5" stroke="#222" stroke-width="1"/>
<line x1="799.5" y1="833.5" x2="803.5" y2="833.5" stroke="#222" stroke-width="1"/>
<line x1="799.5" y1="835.5" x2="803.5" y2="835.5" stroke="#222" stroke-width="1"/>
<line x1="799.5" y1="837.5" x2="803.5" y2="837.5" stroke="#222" stroke-width="1"/>
<line x1="795.5" y1="839.5" x2="803.5" y2="839.5" stroke="#222" stroke-width="1"/>
<line x1="799.5" y1="841.5" x2="803.5" y2="841.5" stroke="#222" stroke-width="1"/>
<line x1="799.5" y1="843.5" x2="803.5" y2="843.5" stroke="#222" stroke-width="1"/>
<line x1="799.5" y1="845.5" x2="803.5" y2="845.5" stroke="#222" stroke-width="1"/>
<line x1="799.5" y1="846.5" x2="803.5" y2="846.5" stroke="#222" stroke-width="1"/>
<line x1="799.5" y1="848.5" x2="803.5" y2="848.5" stroke="#222" stroke-width="1"/>
<line x1="799.5" y1="850.5" x2="803.5" y2="850.5" stroke="#222" stroke-width="1"/>
<line x1="799.5" y1="852.5" x2="803.5" y2="852.5" stroke="#222" stroke-width="1"/>
<line x1="799.5" y1="854.5" x2="803.5" y2="854.5" stroke="#222" stroke-width="1"/>
<line x1="799.5" y1="856.5" x2="803.5" y2="856.5" stroke="#222" stroke-width="1"/>
<line x1="795.5" y1="858.5" x2="803.5" y2="858.5" stroke="#222" stroke-width="1"/>
<line x1="799.5" y1="859.5" x2="803.5" y2="859.5" stroke="#222" stroke-width="1"/>
<line x1="799.5" y1="861.5" x2="803.5" y2="861.5" stroke="#222" stroke-width="1"/>
<line x1="799.5" y1="863.5" x2="803.5" y2="863.5" stroke="#222" stroke-width="1"/>
<line x1="799.5" y1="865.5" x2="803.5" y2="865.5" stroke="#222" stroke-width="1"/>
<line x1="799.5" y1="867.5" x2="803.5" y2="867.5" stroke="#222" stroke-width="1"/>
<line x1="799.5" y1="869.5" x2="803.5" y2="869.5" stroke="#222" stroke-width="1"/>
<line x1="799.5" y1="870.5" x2="803.5" y2="870.5" stroke="#222" stroke-width="1"/>
<line x1="799.5" y1="872.5" x2="803.5" y2="872.5" stroke="#222" stroke-width="1"/>
<line x1="799.5" y1="874.5" x2="803.5" y2="874.5" stroke="#222" stroke-width="1"/>
<line x1="795.5" y1="876.5" x2="803.5" y2="876.5" stroke="#222" stroke-width="1"/>
<line x1="799.5" y1="878.5" x2="803.5" y2="878.5" stroke="#222" stroke-width="1"/>
<line x1="799.5" y1="880.5" x2="803.5" y2="880.5" stroke="#222" stroke-width="1"/>
<line x1="799.5" y1="882.5" x2="803.5" y2="882.5" stroke="#222" stroke-width="1"/>
<line x1="799.5" y1="883.5" x2="803.5" y2="883.5" stroke="#222" stroke-width="1"/>
<line x1="799.5" y1="885.5" x2="803.5" y2="885.5" stroke="#222" stroke-width="1"/>
<line x1="799.5" y1="887.5" x2="803.5" y2="887.5" stroke="#222" stroke-width="1"/>
<line x1="799.5" y1="889.5" x2="803.5" y2="889.5" stroke="#222" stroke-width="1"/>
<line x1="799.5" y1="891.5" x2="803.5" y2="891.5" stroke="#222" stroke-width="1"/>
<line x1="799.5" y1="893.5" x2="803.5" y2="893.5" stroke="#222" stroke-width="1"/>
<line x1="795.5" y1="894.5" x2="803.5" y2="894.5" stroke="#222" stroke-width="1"/>
<line x1="799.5" y1="896.5" x2="803.5" y2="896.5" stroke="#222" stroke-width="1"/>
<line x1="799.5" y1="898.5" x2="803.5" y2="898.5" stroke="#222" stroke-width="1"/>
<line x1="799.5" y1="900.5" x2="803.5" y2="900.5" stroke="#222" stroke-width="1"/>
<line x1="799.5" y1="902.5" x2="803.5" y2="902.5" stroke="#222" stroke-width="1"/>
<line x1="799.5" y1="904.5" x2="803.5" y2="904.5" stroke="#222" stroke-width="1"/>
<line x1="799.5" y1="906.5" x2="803.5" y2="906.5" stroke="#222" stroke-width="1"/>
<line x1="799.5" y1="907.5" x2="803.5" y2="907.5" stroke="#222" stroke-width="1"/>
<line x1="799.5" y1="909.5" x2="803.5" y2="909.5" stroke="#222" stroke-width="1"/>
<line x1="799.5" y1="911.5" x2="803.5" y2="911.5" stroke="#222" stroke-width="1"/>
<line x1="795.5" y1="913.5" x2="803.5" y2="913.5" stroke="#222" stroke-width="1"/>
<line x1="799.5" y1="915.5" x2="803.5" y2="915.5" stroke="#222" stroke-width="1"/>
<line x1="799.5" y1="917.5" x2="803.5" y2="917.5" stroke="#222" stroke-width="1"/>
<line x1="799.5" y1="919.5" x2="803.5" y2="919.5" stroke="#222" stroke-width="1"/>
<line x1="799.5" y1="920.5" x2="803.5" y2="920.5" stroke="#222" stroke-width="1"/>
<line x1="799.5" y1="922.5" x2="803.5" y2="922.5" stroke="#222" stroke-width="1"/>
<line x1="799.5" y1="924.5" x2="803.5" y2="924.5" stroke="#222" stroke-width="1"/>
<line x1="799.5" y1="926.5" x2="803.5" y2="926.5" stroke="#222" stroke-width="1"/>
<line x1="799.5" y1="928.5" x2="803.5" y2="928.5" stroke="#222" stroke-width="1"/>
<line x1="799.5" y1="930.5" x2="803.5" y2="930.5" stroke="#222" stroke-width="1"/>
<line x1="795.5" y1="932.5" x2="803.5" y2="932.5" stroke="#222" stroke-width="1"/>
<line x1="799.5" y1="933.5" x2="803.5" y2="933.5" stroke="#222" stroke-width="1"/>
<line x1="799.5" y1="935.5" x2="803.5" y2="935.5" stroke="#222" stroke-width="1"/>
<line x1="799.5" y1="937.5" x2="803.5" y2="937.5" stroke="#222" stroke-width="1"/>
<line x1="799.5" y1="939.5" x2="803.5" y2="939.5" stroke="#222" stroke-width="1"/>
<line x1="799.5" y1="941.5" x2="803.5" y2="941.5" stroke="#222" stroke-width="1"/>
<line x1="799.5" y1="943.5" x2="803.5" y2="943.5" stroke="#222" stroke-width="1"/>
<line x1="799.5" y1="944.5" x2="803.5" y2="944.5" stroke="#222" stroke-width="1"/>
<line x1="799.5" y1="946.5" x2="803.5" y2="946.5" stroke="#222" stroke-width="1"/>
<line x1="799.5" y1="948.5" x2="803.5" y2="948.5" stroke="#222" stroke-width="1"/>
<line x1="795.5" y1="950.5" x2="803.5" y2="950.5" stroke="#222" stroke-width="1"/>
<text x="0" y="0" transform="translate(789.00,806.40) scale(0.88,1)" font-size="12.8" text-anchor="end" fill="#383838" textLength="21.48" lengthAdjust="spacing" >40.</text>
<text x="0" y="0" transform="translate(789.00,824.90) scale(0.88,1)" font-size="12.8" text-anchor="end" fill="#383838" textLength="21.48" lengthAdjust="spacing" >30.</text>
<text x="0" y="0" transform="translate(789.00,843.40) scale(0.88,1)" font-size="12.8" text-anchor="end" fill="#383838" textLength="21.48" lengthAdjust="spacing" >20.</text>
<text x="0" y="0" transform="translate(789.00,861.90) scale(0.88,1)" font-size="12.8" text-anchor="end" fill="#383838" textLength="21.48" lengthAdjust="spacing" >10.</text>
<text x="0" y="0" transform="translate(789.00,880.40) scale(0.88,1)" font-size="12.8" text-anchor="end" fill="#383838" textLength="14.32" lengthAdjust="spacing" >0.</text>
<text x="0" y="0" transform="translate(789.00,898.90) scale(0.88,1)" font-size="12.8" text-anchor="end" fill="#383838" textLength="29.20" lengthAdjust="spacing" >&#8722;10.</text>
<text x="0" y="0" transform="translate(789.00,917.40) scale(0.88,1)" font-size="12.8" text-anchor="end" fill="#383838" textLength="29.20" lengthAdjust="spacing" >&#8722;20.</text>
<text x="0" y="0" transform="translate(789.00,935.90) scale(0.88,1)" font-size="12.8" text-anchor="end" fill="#383838" textLength="29.20" lengthAdjust="spacing" >&#8722;30.</text>
<text x="0" y="0" transform="translate(789.00,954.40) scale(0.88,1)" font-size="12.8" text-anchor="end" fill="#383838" textLength="29.20" lengthAdjust="spacing" >&#8722;40.</text>
<line x1="804.5" y1="950" x2="804.5" y2="958" stroke="#222" stroke-width="1"/>
<line x1="822.5" y1="950" x2="822.5" y2="954" stroke="#222" stroke-width="1"/>
<line x1="841.5" y1="950" x2="841.5" y2="958" stroke="#222" stroke-width="1"/>
<line x1="860.5" y1="950" x2="860.5" y2="954" stroke="#222" stroke-width="1"/>
<line x1="879.5" y1="950" x2="879.5" y2="958" stroke="#222" stroke-width="1"/>
<line x1="898.5" y1="950" x2="898.5" y2="954" stroke="#222" stroke-width="1"/>
<line x1="916.5" y1="950" x2="916.5" y2="958" stroke="#222" stroke-width="1"/>
<line x1="935.5" y1="950" x2="935.5" y2="954" stroke="#222" stroke-width="1"/>
<line x1="954.5" y1="950" x2="954.5" y2="958" stroke="#222" stroke-width="1"/>
<text x="0" y="0" transform="translate(792.45,973.30) scale(0.88,1)" font-size="12.8" text-anchor="start" fill="#383838" textLength="29.20" lengthAdjust="spacing" >&#8722;40.</text>
<text x="0" y="0" transform="translate(830.07,973.30) scale(0.88,1)" font-size="12.8" text-anchor="start" fill="#383838" textLength="29.20" lengthAdjust="spacing" >&#8722;20.</text>
<text x="0" y="0" transform="translate(874.25,973.30) scale(0.88,1)" font-size="12.8" text-anchor="start" fill="#383838" textLength="14.32" lengthAdjust="spacing" >0.</text>
<text x="0" y="0" transform="translate(908.72,973.30) scale(0.88,1)" font-size="12.8" text-anchor="start" fill="#383838" textLength="21.48" lengthAdjust="spacing" >20.</text>
<text x="0" y="0" transform="translate(946.35,973.30) scale(0.88,1)" font-size="12.8" text-anchor="start" fill="#383838" textLength="21.48" lengthAdjust="spacing" >40.</text>
<text x="0" y="0" transform="translate(879.25,991.70) scale(0.88,1)" font-size="12.8" text-anchor="middle" fill="#383838" textLength="42.61" lengthAdjust="spacing" >KSM-Y</text>
<text x="0" y="0" font-size="12.8" text-anchor="middle" fill="#383838" transform="translate(753.00,876.00) rotate(-90) scale(0.88,1)" textLength="42.61" lengthAdjust="spacing">KSM-Z</text>
<g clip-path="url(#o3)">
<circle cx="878.75" cy="876" r="90" fill="none" stroke="#8b4513" stroke-width="1.1" stroke-dasharray="2.2,1.3" shape-rendering="geometricPrecision"/>
<ellipse cx="880.3" cy="876.6" rx="38.1" ry="10.2" fill="none" stroke="#000" stroke-width="1.15" shape-rendering="geometricPrecision"/>
<path d="M869.2,871.3 L948.6,915.4" stroke="#000" stroke-width="1.2" fill="none" shape-rendering="geometricPrecision"/>
<ellipse cx="879" cy="876.6" rx="2" ry="1.5" fill="none" stroke="#000" stroke-width="1" shape-rendering="geometricPrecision"/>
<circle cx="847.1" cy="871.5" r="2.6" fill="#ff0000" shape-rendering="geometricPrecision"/>
<path d="M924.5,901 L932.2,904.5" stroke="#0000ff" stroke-width="4.2" stroke-linecap="round" shape-rendering="geometricPrecision"/>
<path d="M928.0,900.9 L936.4000000000001,909.3000000000001 M928.0,909.3000000000001 L936.4000000000001,900.9" stroke="#ff2020" stroke-width="1.2" shape-rendering="geometricPrecision"/>
</g></svg></body></html>
